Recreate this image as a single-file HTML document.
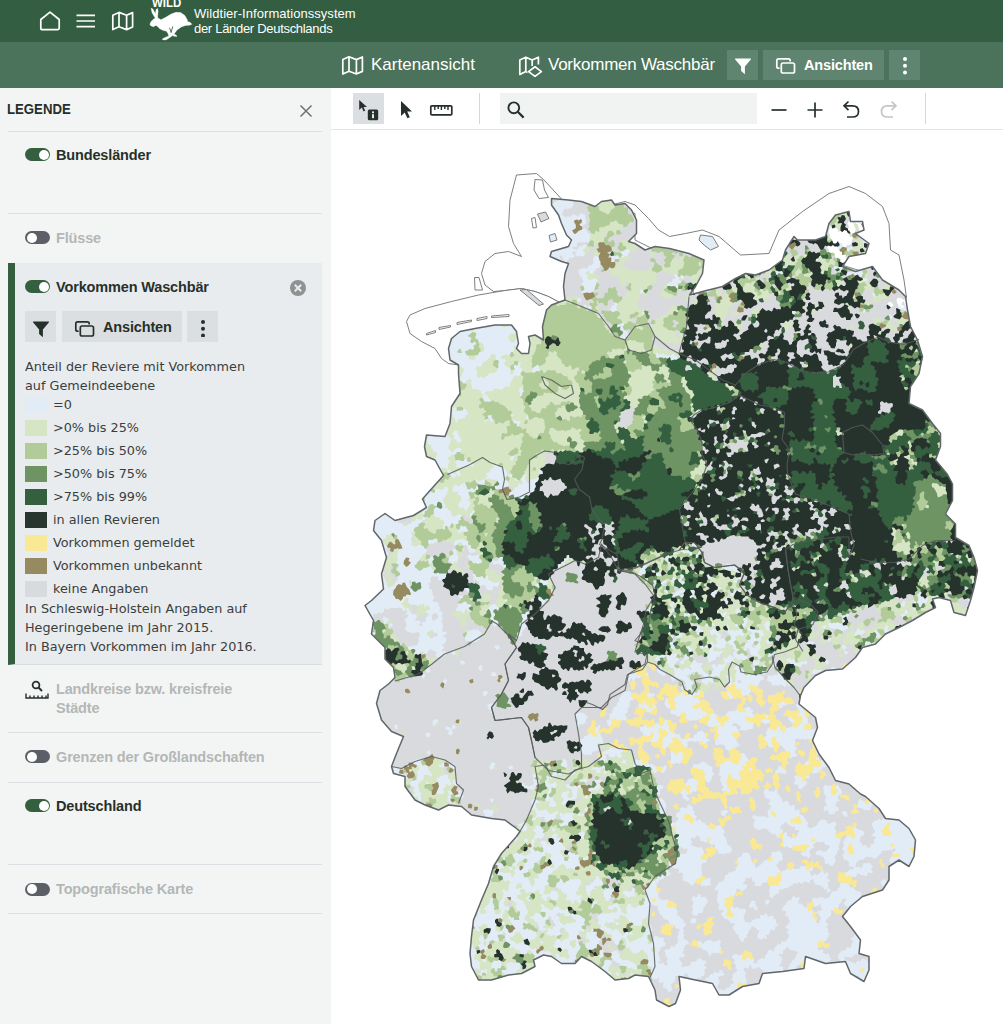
<!DOCTYPE html>
<html lang="de"><head><meta charset="utf-8"><title>WILD</title>
<style>
*{box-sizing:border-box;margin:0;padding:0}
html,body{width:1003px;height:1024px;overflow:hidden;background:#fff;font-family:"Liberation Sans",sans-serif;}
.abs{position:absolute}
#top{position:absolute;left:0;top:0;width:1003px;height:42px;background:#335e41}
#bar2{position:absolute;left:0;top:42px;width:1003px;height:46px;background:#4b725a}
#side{position:absolute;left:0;top:88px;width:331px;height:936px;background:#f3f5f4}
#tool{position:absolute;left:331px;top:88px;width:672px;height:42px;background:#fff;border-bottom:1px solid #e3e6e5}
#map{position:absolute;left:331px;top:130px;width:672px;height:894px;background:#fff}
.t1{position:absolute;color:#fff;font-size:13px;white-space:nowrap;letter-spacing:-.1px;line-height:15px}
.nav{position:absolute;color:#fff;font-size:17px;white-space:nowrap;top:55px;line-height:20px}
.btn{position:absolute;background:#5f8570;top:50px;height:30px}
.hd{position:absolute;font-weight:bold;font-size:14.5px;color:#26302b;white-space:nowrap;line-height:18px;margin-top:.4px;letter-spacing:-.15px}
.hd.off{color:#b3b7b6}
.ln{position:absolute;left:8px;width:314px;height:1px;background:#dcdfe3}
.tg{position:absolute;width:25px;height:13px;border-radius:7px;background:#35603f}
.tg i{position:absolute;right:1.5px;top:1.5px;width:10px;height:10px;border-radius:5px;background:#fff}
.tg.off{background:#5d5f66}
.tg.off i{right:auto;left:1.5px}
.lg{position:absolute;left:25px;font-family:"DejaVu Sans",sans-serif;font-size:12.8px;color:#3a3f3d;white-space:nowrap;line-height:16px}
.sw{position:absolute;left:25px;width:22px;height:16px}
.lb{position:absolute;left:53px;font-family:"DejaVu Sans",sans-serif;font-size:12.8px;color:#3a3f3d;white-space:nowrap;line-height:16px}
</style></head><body>

<div id="top">
<svg class="abs" style="left:38px;top:10px" width="24" height="22" viewBox="0 0 24 22"><path d="M2.8 9.5L12 2.2L21.2 9.5V18.3Q21.2 19.6 19.9 19.6H4.1Q2.8 19.6 2.8 18.3z" stroke="#fff" stroke-width="1.7" fill="none" stroke-linejoin="round"/></svg>
<svg class="abs" style="left:76px;top:13px" width="20" height="16" viewBox="0 0 20 16"><path d="M0.5 2.3H19M0.5 8H19M0.5 13.7H19" stroke="#fff" stroke-width="1.7" fill="none"/></svg>
<svg class="abs" style="left:111px;top:10px" width="24" height="22" viewBox="0 0 24 22"><path d="M1.8 5.2L8 2.4L15.6 5.2L21.6 2.6V17L15.6 19.6L8 16.8L1.8 19.6zM8 2.4V16.8M15.6 5.2V19.6" stroke="#fff" stroke-width="1.7" fill="none" stroke-linejoin="round"/></svg>
<div class="abs" style="left:152px;top:-5px;color:#fff;font-weight:bold;font-size:13px;line-height:15px;transform:scaleX(.88);transform-origin:0 0">WILD</div>
<svg class="abs" style="left:140px;top:0" width="60" height="45" viewBox="0 0 1003 752"><path d="M185 135 L215 150 L250 215 L258 228 L268 160 L295 140 L303 190 L295 270 L300 300 L350 330 L430 290 L520 235 L600 205 L680 210 L750 260 L790 330 L795 360 L840 375 L868 405 L830 420 L760 425 L690 450 L620 500 L575 560 L570 570 L610 590 L615 610 L570 605 L545 595 L500 625 L440 665 L385 668 L372 650 L420 625 L480 600 L470 565 L440 520 L390 510 L330 480 L290 440 L270 425 L220 445 L180 430 L165 405 L185 360 L225 320 L255 300 L235 270 L200 210z" fill="#fff" stroke="#fff" stroke-width="6" stroke-linejoin="round"/><path d="M495 465L520 545L548 440" stroke="#335e41" stroke-width="14" fill="none"/></svg>
<div class="t1" style="left:194px;top:5.5px;letter-spacing:.05px">Wildtier-Informationssystem</div>
<div class="t1" style="left:194px;top:20.5px;letter-spacing:-.3px">der Länder Deutschlands</div>
</div>

<div id="bar2"></div>
<svg class="abs" style="left:341px;top:55px" width="24" height="22" viewBox="0 0 24 22"><path d="M1.800 4.600L8 1.800L15.400 4.600L21.400 2V16.400L15.400 19L8 16.200L1.800 19zM8 1.800V16.200M15.400 4.600V19" stroke="#fff" stroke-width="1.700" fill="none" stroke-linejoin="round"/></svg>
<div class="nav" style="left:371px">Kartenansicht</div>
<svg class="abs" style="left:518px;top:54px" width="26" height="26" viewBox="0 0 26 26"><path d="M9.5 18.4L7.8 17.6L1.8 20.4V6L7.8 3.2L14.2 6L20.4 3.2V10.5M7.8 3.2V17.6M14.2 6V12" stroke="#fff" stroke-width="1.7" fill="none" stroke-linejoin="round"/><path d="M17 12.8L23.4 17.6L17 22.4L10.6 17.6z" stroke="#fff" stroke-width="1.7" fill="none" stroke-linejoin="round"/></svg>
<div class="nav" style="left:548px;letter-spacing:-.25px">Vorkommen Waschbär</div>
<div class="btn" style="left:727px;width:31px"></div>
<svg class="abs" style="left:733.500px;top:58px" width="18" height="17" viewBox="0 0 18 17"><path d="M1.600 0.600H16.400Q17.600 0.600 16.800 1.600L10.900 8.400V16.200L7.100 13V8.400L1.200 1.600Q0.400 0.600 1.600 0.600z" fill="#fff"/></svg>
<div class="btn" style="left:763px;width:121px"></div>
<svg class="abs" style="left:775px;top:57px" width="22" height="18" viewBox="0 0 22 18"><path d="M4.600 11.200H3.600Q1.800 11.200 1.800 9.400V3.600Q1.800 1.800 3.600 1.800H13.400Q15.200 1.800 15.200 3.600V4.600" stroke="#fff" stroke-width="1.700" fill="none"/><rect x="6.300" y="6" width="13.200" height="10" rx="1.800" stroke="#fff" stroke-width="1.700" fill="none"/></svg>
<div class="hd" style="left:804px;top:56px;color:#fff">Ansichten</div>
<div class="btn" style="left:889px;width:31px"></div>
<svg class="abs" style="left:900.500px;top:56px" width="8" height="20" viewBox="0 0 8 20"><circle cx="4" cy="3" r="2" fill="#fff"/><circle cx="4" cy="9.700" r="2" fill="#fff"/><circle cx="4" cy="16.400" r="2" fill="#fff"/></svg>


<div id="side">
<div class="hd" style="left:7px;top:12px;font-size:14.5px;letter-spacing:0;transform:scaleX(.91);transform-origin:0 0">LEGENDE</div>
<svg class="abs" style="left:299px;top:16px" width="14" height="14" viewBox="0 0 14 14"><path d="M1.5 1.5L12.5 12.5M12.5 1.5L1.5 12.5" stroke="#6d7271" stroke-width="1.5" fill="none"/></svg>
<div class="ln" style="top:43px"></div>
<div class="tg" style="left:25px;top:60px"><i></i></div>
<div class="hd" style="left:56px;top:58px">Bundesländer</div>
<div class="ln" style="top:125px"></div>
<div class="tg off" style="left:25px;top:143px"><i></i></div>
<div class="hd off" style="left:56px;top:141px">Flüsse</div>
<div class="abs" style="left:8px;top:175px;width:314px;height:402px;background:#e9ecef;border-left:7px solid #35603f;border-bottom:1px solid #d9dde0"></div>
<div class="tg" style="left:25px;top:192px"><i></i></div>
<div class="hd" style="left:56px;top:190px">Vorkommen Waschbär</div>
<svg class="abs" style="left:289px;top:191px" width="18" height="18" viewBox="0 0 18 18"><circle cx="9" cy="9" r="8" fill="#8e9291"/><path d="M5.8 5.8L12.2 12.2M12.2 5.8L5.8 12.2" stroke="#e9ecef" stroke-width="2" fill="none"/></svg>
<div class="abs" style="left:25px;top:223px;width:31px;height:31px;background:#dcdfe2"></div>
<svg class="abs" style="left:32px;top:233px" width="18" height="17" viewBox="0 0 18 17"><path d="M1.6 0.6H16.4Q17.6 0.6 16.8 1.6L10.9 8.4V16.2L7.1 13V8.4L1.2 1.6Q0.4 0.6 1.6 0.6z" fill="#26302b"/></svg>
<div class="abs" style="left:62px;top:223px;width:120px;height:31px;background:#dcdfe2"></div>
<svg class="abs" style="left:74px;top:320px;margin-top:-88px" width="22" height="18" viewBox="0 0 22 18"><path d="M4.6 11.2H3.6Q1.8 11.2 1.8 9.4V3.6Q1.8 1.8 3.6 1.8H13.4Q15.2 1.8 15.2 3.6V4.6" stroke="#26302b" stroke-width="1.7" fill="none"/><rect x="6.3" y="6" width="13.2" height="10" rx="1.8" stroke="#26302b" stroke-width="1.7" fill="none"/></svg>
<div class="hd" style="left:103px;top:230px;font-size:14.5px">Ansichten</div>
<div class="abs" style="left:187px;top:223px;width:31px;height:31px;background:#dcdfe2"></div>
<svg class="abs" style="left:198.8px;top:231px" width="8" height="18" viewBox="0 0 8 18"><circle cx="4" cy="3" r="2" fill="#26302b"/><circle cx="4" cy="9.7" r="2" fill="#26302b"/><circle cx="4" cy="16.4" r="2" fill="#26302b"/></svg>
<div class="lg" style="top:271px">Anteil der Reviere mit Vorkommen</div>
<div class="lg" style="top:290px">auf Gemeindeebene</div>
<div class="sw" style="top:309px;background:#e2ecf6"></div><div class="lb" style="top:309px">=0</div>
<div class="sw" style="top:332px;background:#d6e5c4"></div><div class="lb" style="top:332px">&gt;0% bis 25%</div>
<div class="sw" style="top:355px;background:#b1cb99"></div><div class="lb" style="top:355px">&gt;25% bis 50%</div>
<div class="sw" style="top:378px;background:#6f9464"></div><div class="lb" style="top:378px">&gt;50% bis 75%</div>
<div class="sw" style="top:401px;background:#35603f"></div><div class="lb" style="top:401px">&gt;75% bis 99%</div>
<div class="sw" style="top:424px;background:#29362f"></div><div class="lb" style="top:424px">in allen Revieren</div>
<div class="sw" style="top:447px;background:#f9e894"></div><div class="lb" style="top:447px">Vorkommen gemeldet</div>
<div class="sw" style="top:470px;background:#968a61"></div><div class="lb" style="top:470px">Vorkommen unbekannt</div>
<div class="sw" style="top:493px;background:#d9dade"></div><div class="lb" style="top:493px">keine Angaben</div>
<div class="lg" style="top:513px">In Schleswig-Holstein Angaben auf</div>
<div class="lg" style="top:532px">Hegeringebene im Jahr 2015.</div>
<div class="lg" style="top:551px">In Bayern Vorkommen im Jahr 2016.</div>
<svg class="abs" style="left:25px;top:592px" width="24" height="20" viewBox="0 0 24 20"><circle cx="11" cy="5" r="3.4" stroke="#26302b" stroke-width="1.8" fill="none"/><path d="M13.5 7.5L17 11" stroke="#26302b" stroke-width="2" fill="none"/><path d="M1 13.5V18H23V13.5M5 15.5V18M9 15.5V18M13 15.5V18M17 15.5V18M21 15.5V18" stroke="#26302b" stroke-width="1.4" fill="none"/></svg>
<div class="hd off" style="left:56px;top:592px">Landkreise bzw. kreisfreie</div>
<div class="hd off" style="left:56px;top:611px">Städte</div>
<div class="ln" style="top:644px"></div>
<div class="tg off" style="left:25px;top:662px"><i></i></div>
<div class="hd off" style="left:56px;top:660px">Grenzen der Großlandschaften</div>
<div class="ln" style="top:694px"></div>
<div class="tg" style="left:25px;top:711px"><i></i></div>
<div class="hd" style="left:56px;top:709px">Deutschland</div>
<div class="ln" style="top:776px"></div>
<div class="tg off" style="left:25px;top:794.5px"><i></i></div>
<div class="hd off" style="left:56px;top:792px">Topografische Karte</div>
<div class="ln" style="top:825px"></div>
</div>


<div id="tool">
<div class="abs" style="left:22px;top:5px;width:31px;height:31px;background:#dcdfe2"></div>
<svg class="abs" style="left:26px;top:8px" width="24" height="26" viewBox="0 0 24 26"><path d="M2.200 4V14L4.800 11.600L6.600 15.400L8.200 14.600L6.500 11H10z" fill="#26302b"/><rect x="10.800" y="13.400" width="10.400" height="10.800" rx="1.500" fill="#26302b"/><rect x="15.100" y="15.400" width="1.800" height="1.800" fill="#fff"/><rect x="15.100" y="18.200" width="1.800" height="4" fill="#fff"/></svg>
<svg class="abs" style="left:68px;top:11px" width="14" height="22" viewBox="0 0 14 22"><path d="M2 2V17L5.700 13.500L8.400 19.300L10.800 18.200L8.200 12.600H13z" fill="#26302b"/></svg>
<svg class="abs" style="left:98px;top:15px" width="26" height="14" viewBox="0 0 26 14"><rect x="1.800" y="2.800" width="21" height="9" rx="1" stroke="#26302b" stroke-width="1.700" fill="none"/><path d="M5.800 3V7M9.200 3V6M12.400 3V7M15.800 3V6M19 3V7" stroke="#26302b" stroke-width="1.400"/></svg>
<div class="abs" style="left:148px;top:5px;width:1px;height:31px;background:#d5d8d8"></div>
<div class="abs" style="left:169px;top:5px;width:257px;height:31px;background:#f1f3f2"></div>
<svg class="abs" style="left:174px;top:11px" width="22" height="22" viewBox="0 0 22 22"><circle cx="8.800" cy="8.800" r="5.400" stroke="#26302b" stroke-width="1.900" fill="none"/><path d="M12.800 12.800L18.600 18.600" stroke="#26302b" stroke-width="2.200" fill="none"/></svg>
<svg class="abs" style="left:439px;top:13px" width="18" height="18" viewBox="0 0 18 18"><path d="M1.500 9H16.500" stroke="#26302b" stroke-width="1.700"/></svg>
<svg class="abs" style="left:475px;top:13px" width="18" height="18" viewBox="0 0 18 18"><path d="M1.500 9H16.500M9 1.500V16.500" stroke="#26302b" stroke-width="1.700"/></svg>
<svg class="abs" style="left:510px;top:11px" width="22" height="22" viewBox="0 0 22 22"><path d="M7.500 2.500L3 6.800L7.500 11.200M3.500 6.800H11.500Q17.500 6.800 17.500 12.400Q17.500 18 11.500 18H6" stroke="#26302b" stroke-width="1.700" fill="none"/></svg>
<svg class="abs" style="left:546px;top:11px" width="22" height="22" viewBox="0 0 22 22"><path d="M14.500 2.500L19 6.800L14.500 11.200M18.500 6.800H10.500Q4.500 6.800 4.500 12.400Q4.500 18 10.500 18H16" stroke="#c3c6c6" stroke-width="1.700" fill="none"/></svg>
<div class="abs" style="left:594px;top:5px;width:1px;height:31px;background:#d5d8d8"></div>
</div>
<div id="map"></div>
<!--MAP--><svg id="mapsvg" class="abs" style="left:0;top:0" width="1003" height="1024" viewBox="0 0 2006 2048" fill-rule="evenodd"><path d="M1033 350 1020 400 1017 453 1027 487 1043 513 1017 503 990 507 970 523 963 547 970 570 987 583 1010 581 1043 577 1070 583 1097 593 1123 607 1150 593 1150 500 1137 413 1087 359 1073 347z" fill="#ffffff" stroke="#6e7270" stroke-width="1.8"/>
<path d="M1010 581 957 590 903 603 850 617 820 630 813 643 820 667 843 683 870 697 883 717 897 727 917 730 937 760 1077 760 1103 653 1137 613 1123 607 1097 593 1070 583 1043 577z" fill="#ffffff" stroke="#6e7270" stroke-width="1.8"/>
<path d="M1040 580 1053 579 1087 608 1078 611z" fill="#d9dade" stroke="#6e7270" stroke-width="1.8"/>
<path d="M949 555 958 555 965 580 950 580z" fill="#ffffff" stroke="#6e7270" stroke-width="1.8"/>
<path d="M1070 359 1085 360 1089 380 1097 395 1078 397 1068 380z" fill="#ffffff" stroke="#6e7270" stroke-width="1.8"/>
<path d="M1075 428 1091 424 1098 437 1082 444z" fill="#d9dade" stroke="#6e7270" stroke-width="1.8"/>
<path d="M1098 471 1110 467 1114 480 1101 484z" fill="#e2ecf6" stroke="#6e7270" stroke-width="1.8"/>
<path d="M1063 437 1070 435 1073 455 1066 456z" fill="#ffffff" stroke="#6e7270" stroke-width="1.8"/>
<path d="M853 667 871 661 871 665 853 670z" fill="#ffffff" stroke="#6e7270" stroke-width="1.8"/>
<path d="M878 655 901 651 901 654 878 659z" fill="#ffffff" stroke="#6e7270" stroke-width="1.8"/>
<path d="M914 645 943 640 943 643 914 649z" fill="#ffffff" stroke="#6e7270" stroke-width="1.8"/>
<path d="M954 637 974 633 974 637 954 641z" fill="#ffffff" stroke="#6e7270" stroke-width="1.8"/>
<path d="M983 632 1018 629 1018 633 983 635z" fill="#ffffff" stroke="#6e7270" stroke-width="1.8"/>
<path d="M1230 408 1250 403 1270 410 1297 437 1317 460 1339 473 1371 467 1405 460 1438 473 1481 510 1538 507 1558 460 1605 423 1658 387 1698 373 1731 387 1765 413 1778 447 1781 500 1798 510 1808 560 1813 595 1798 613 1738 547 1651 520 1565 560 1471 593 1391 613 1378 533 1338 520 1310 500 1270 480 1270 427z" fill="#ffffff" stroke="#6e7270" stroke-width="1.8"/>
<path d="M1401 470 1425 473 1437 493 1421 500 1408 490 1398 480z" fill="#e2ecf6" stroke="#6e7270" stroke-width="1.8"/>
<path d="M1103 397l34 3l26 3l27 10l13-10l20-3l7 10l20-3l13 13l10 20l0 27l-16 16l13 4l20 13l20-7l29 4l39 10l30 13l-3 27l-14 26l-12 17l26-7l40-10l26-16l20-10l20 3l27-10l27-20l6-20l17-27l7 7l36 0l20-7l7-26l13-17l27-7l3 20l24 0l3 17l-17 7l27 20l-7 20l-33 6l-13 20l26 10l34-10l20 27l33 20l13 13l4 27l6 33l14 27l10 33l-7 34l-17 26l-3 34l27 13l20 27l16 20l0 26l-10 27l24 29l10 19l0 33l-14 27l20 20l0 27l27 16l10 24l7 26l-7 34l-7 26l-10 30l-23-6l-7-24l-23-6l-13 3l6 17l-20 10l-26 16l-27 14l-27 13l-20 20l-26 7l-14 20l-26 23l-34 3l-20 10l-23 24l-7 16l-3 17l33 27l4 20l-10 26l13 27l20 27l13 26l27 7l23 20l10 5l27 24l13 20l27 3l20 17l13 23l-3 33l-10 20l-20-13l-20 13l0 27l-13 20l-40 13l-24 20l-16 20l16 20l20 27l-3 27l20 6l0 27l-10 23l-27-16l-10-24l-40 4l-40-14l-3 24l-43 6l-40 4l-7 20l-33 6l-27 17l-20 0l-13-23l-34-7l-33-7l3 27l-10 27l-13 6l-25-13l-3-20l-13-27l-27-3l-13 7l-27 3l-20-17l-27-20l-20-10l-13 14l-27 0l-20-14l-16-3l-20 10l3 13l-27 14l-26 3l-34 10l-26 0l-14-27l-3-26l3-34l4-33l16-40l14-33l10-34l16-26l30-34l7-10l-7-6l-23-17l-27-3l-40-7l-20-17l-26-3l-20 10l-27-10l-20-10l-20-27l0-20l-23-6l-4-14l10-26l14-34l-24-10l-20-23l-10-33l7-26l17-13l13-13l-3-20l-17-17l0-23l-27-27l4-27l-17-30l13-10l24-23l-4-30l10-33l-10-34l-16-20l3-20l20-14l20 14l37-10l26-16l-8-17l15-17l27-30l-17-31l-17-7l-4-20l4-23l37 3l10-26l3-34l17-26l-3-40l0-17l-17-10l-3-23l6-20l17-14l30-6l40-7l33 0l10 13l4 24l-4 10l10 10l14 0l3-20l-3-14l13-3l17 10l-2-27l8-33l10-10l27-10l-3-27l3-26l7-20l-14-4l-23-10l3-10l34-10l6-13l-10-10l-10-23l-6-17l-14-20z" fill="#d9dade"/>
<path d="M1941 1196l-3 1l-2 5l4 3l2-8zM1920 1228l-6-4l-2 2zM1825 1207l6 1l2-2l3 2l1 5l4 3l6-9l2 0l4 0l4-10l-2-4l-1 0l-4 4l-4-5l-3 0l2-7l-3-3l-5 2l-1 3l-4 3l4 5l-1 2l1 3l-3 4l-5-5l-3 2zM1694 1672l-1 3l-4 3l-1 3l-2 3l2 6l-3 9l4 5l0 2l-4 2l1 6l1 2l0 3l8 2l4 6l-2 5l1 1l8 0l1 4l-1 2l-5-1l-5 5l-7 3l3 7l7-1l12 2l2-2l1-5l3 0l5 3l7 1l2 2l3-2l2-7l1 0l5 3l4-2l0-2l-4-6l4-4l-5-5l0-2l-7 0l-3 1l-2-1l-2 0l-2 7l-3 4l-3-4l-4 1l-4 1l1-8l6-7l9-1l4-5l4-1l4 2l5-1l4 4l6-3l5-6l3-2l2-5l16-2l2 1l7-5l2 2l-1 4l-5 2l-1 2l7 5l2-3l7 0l-1 3l-3 2l-5-1l-2 1l-5-1l-2 2l-3 5l0 5l6 3l5-5l1 2l7-4l9 6l1-1l0 2l10 6l10-20l1-6l-4-1l-1-5l-4-2l0-3l7 0l1 2l1 1l2-19l-13-23l-20-17l-27-3l-2 2l-3-2l-4 4l-5-5l-2 5l-6 0l-2 4l-3 1l-1 4l3 4l0 3l4 4l0 3l-7 7l0 1l10 2l-6 6l1 2l1 4l-8 3l0 5l-6 2l-3-6l-6 2l-2-6l-2 0l-3-3l2-5l0-6l6-1l2-7l-12-6l-2 1l-4-5l-4 0l-2 6l4 9l1 7l-6-1l-3-3l-5-1zM1788 1688l0 5l-6 0l0-6zM1776 1657l5 6l1 6l-2 2l-12 0l-1-5l-3-3l0-2l3-1l3-6l3-1l1-5l4-2l2 3zM1705 1700l3 5l-8 4l-2-6l-4-2l1-2l3-3l-1-4l3-4l4 3l0 4l2 2zM1824 1215l3 7l5-2l-1-6l-6-1zM1812 1218l-4 4l1 5l-8 1l1 4l4 2l6-2l1-2l3-3l1-2zM1809 623l5-5l-1-7l-3-2l-2 2l-1 4l-4 1l-2-5l-4-1l-3 7l6 4l2-1zM1812 1203l-6-2l-1 5l-5 3l1 5l8 1zM1790 1258l-10 2l-4-1l2-8l-8-2l-1 2l-1 7l-2 1l4 9zM1784 637l2-4l-6-4l-3 2l2 8zM1775 1763l-2-2l-7-3l-5 6l6 13l8-12zM1763 1271l-2-4l-5-4l-1-6l-7 4l0 4l4 3l0 2l-2 4l0 2l6 2zM1725 1295l17-6l1 1l8-2l-1-3l-3-2l-4 2l-3-3l-5 0l-3-1l-3 5l1 4l-6 2l-3 8zM1724 1616l1 2l4 2l8 1l4-2l3-9l2-1l3 0l-9-8l-3 2l0 5l-5 0l-2-6l-5 0l-5-5l-4 7l1 3l-4 4l1 4zM1753 592l-4-7l-5 2l4 9zM1680 1923l-6 2l17-2l10 24l12 7l3-3l4 1l-4 4l4 2l2-1l1 2l-1 1l6 3l10-23l0-16l-3 0l-1-5l-4 0l-6-2l-3 6l-5-2l-6 7l-1-2l-20-7l0-5l1-1l6 2l4-1l3 2l8-8l6 1l1-2l3-27l-14-19l-1 3l4 6l-3 4l-4 1l-1 4l5 3l-4 6l-1 7l-2 1l-5-2l-4 5l-5 3l-4 0l-1 3l-4 3l-1 6l1 4l4 2zM1725 1937l3 1l1 1l-2 3l-5 2l-3-2zM1730 1912l4 3l2-2l-6-2zM1729 487l1 0l7 2l1-2l-11-9l-3 0l0 8zM1725 559l3 5l6-2l1-5l-6-2l-4 2zM1728 616l-3 7l2 3l5-3l0-5zM1708 1273l9-3l2 1l7-3l4-3l0-4l-3-2l-6 1l-2-4l-4 1l-3 7l-2 0l-2 3zM1705 542l-11 1l-3 8l2 3l7-3l1 0l5-3l3 5l6-3l2 3l4 3l2 0l2-6l3-2l-3-5l4-5l-18 5l-6-2zM1414 1965l11 2l13 23l20 0l20-13l-3-2l1-2l-1-2l1-6l7 3l7 1l4-5l-4-12l2-4l0-3l-4-3l-1-4l4-3l6 3l2-7l2-2l3 8l6 1l2-2l5-2l3 2l1 2l5 2l-1 4l3 2l40-3l-1-3l-2-2l2-4l-9-2l1-2l4-4l0-6l2-1l-2-6l-6-2l1-3l8 0l0-7l5-2l2-4l2 0l2 0l3 6l4-1l4 2l2-1l6 3l0 2l-3 3l0 3l-3 3l0 3l-6 3l0 4l-4 1l-1 6l-3 3l1 5l2 1l11-2l3-2l0-5l8-3l1-2l8-9l1-5l39 13l8-1l4-7l-3-4l-1-6l-2-1l-4 2l-6-4l1-2l-2-4l-9 1l0-4l1-1l-1-8l0-2l4-3l8 1l5-2l1-5l3-1l-1-3l4-4l-4-4l0-3l1-2l-5-6l5-3l0-2l-5-3l0-6l5-2l0-2l5-4l0-4l1-2l-2-4l0-1l8 2l0-7l6 3l3-6l-1-2l4-4l2-1l1-7l7-1l2 3l-4 3l-2 5l8 6l0 5l-2 3l0 2l8-11l20-17l-1-2l3-6l-3-5l-5 0l-7-5l-1-3l-7-1l-4-8l-12-2l-3 2l-1 5l-1 3l-3 2l-1 4l-4 3l-2-1l-6 2l-4 11l-2 1l-3 0l-5 2l-3-4l-8 1l-4 2l-8-2l-2 8l4 4l0 6l2 1l6-2l3-4l2 1l1 6l1 1l1 4l-1 1l-7 0l-2 5l4 3l1 4l3 2l0 3l-3 3l0 4l-4 2l-3-3l1-4l-5-5l0-2l-3-3l2-7l-3-3l-5 2l-1 0l-3-9l-3 2l-6-3l-3-5l-6 0l-1-4l4-6l-3-3l-6 2l-2-4l-5 2l-1 7l-5-1l-5 5l-4 7l-3 1l-2 7l0 1l8 1l1 2l-2 4l0 4l6 1l0 6l3 3l-3 6l-6 5l1 3l5 2l0 3l-4 4l6 6l-2 4l-1 0l-4 8l-10 0l0 5l-2 1l-4-1l-7 8l-1 6l-2 1l-4-4l-5 1l-1 4l-1 1l-3 5l-2 1l0 7l-6-2l-9 5l-1 5l-4 2l-3-3l1-7l-5 0l-5-4l-4 0l-6 6l-3 0l1-8l-3-3l-5 2l-5-3l-5 1l-4 4l0 3l6 4l-3 6l4 3l1 2l-1 5l4 3l-3 5l-7 5l1 6l-3 2l0 3l5 4l-2 4l-4 0l-2 5l-4 3l-3 0l-4 5l-4 0l-2-3l-4 2l-5-5l0-2l5-8l0-5l-2-2l-1-4l6-3l2 2l5-4l-1-3l-3-1l-1-5l-5 0l-1 6l-4 0l-2-2l-4 0l-2 5l-5-1l-4 7l-7 2l1 3l4 4zM1484 1974l-2-1l-2 3zM1698 433l1 4l-2 6l6 1l2 4l3 1l4-2l-1-4l-10 0l-2-11zM1693 497l-1 4l5 4l4-5l5 0l1-3l-2-5zM1660 1256l9 2l1 2l6-1l10 5l4-5l4 0l3-3l0-2l-3-5l-7 1l-1-3l5-4l0-3l-4-3l5-3l4 0l3-4l-2-3l-5-1l-2 3l-6 1l-2 3l2 4l-1 3l1 6l-10-3l-1 2l-6-1l-3 2l-3-2l-5 2l-1 6zM1696 1307l-2-4l-6-3l1 8l7 0zM1687 1622l-2 1l-1 4l5 6l4 1l2-2l-2-9zM1686 1289l-4 2l4 9l1 0l6-4l-2-5zM1678 430l5 2l2-1l0-4l-8 2zM1685 496l2-10l-3-1l-6 2l0 4l-4 3l1 4l3 3zM1669 531l-2 3l3 5l7-2l2 3l4 2l2-2l1-5l-1-2l-7 0zM1649 1601l2 3l3 7l-6 2l-1 6l2 3l7-1l2 6l2 2l5-1l3 0l3-5l6-2l1-1l-1-5l-6-3l0-3l3-5l5-2l0-2l-4-3l2-6l5-2l3-6l-3-2l-1-4l-2-1l-2-6l-6 1l-2 4l1 3l4 2l1 3l-4 2l-2 5l-1 1l-2-2l-3-5l-1-4l3-5l-1-3l-5-1l-3 1l-4-2l-3 1l-3 5l2 4l-1 3l2 6l4 5zM1516 1633l-8-3l-3 2l-1 4l5 3l1 4l-3 3l0 6l3 5l8 4l5-4l5 1l3-2l8 8l5 3l1 2l7-1l2 8l3 0l4-6l0-3l4-2l1-5l-7-4l1-1l4-6l4-1l1-3l4-1l4 6l5 1l1 3l8-1l-2 6l9 2l1 2l-4 3l0 4l-4 5l-6 0l-3 2l-4-5l-4 0l-1-1l1-5l-3-2l-4 3l0 3l-2 2l1 22l2 1l4-2l3 0l2 2l7 2l4-5l8 1l9-3l1-2l4 3l6-1l2 1l-1 3l-6 2l0 6l-1 1l-6-1l-2 7l6 4l5-1l3 5l5-5l-1-3l-2-5l2-3l1-3l6-2l1-1l-2-6l5-3l1-2l4-1l6 2l2-2l4 1l3 6l4 0l4 1l1 4l-5 4l-2 4l-6 0l-1 1l-5-4l-9 3l-1 3l3 5l6-1l2 3l5 1l3 7l-1 4l3 3l6-1l1 4l7 1l1-4l3-3l1-5l-2-6l2-2l0-2l4-3l-1-4l5-4l-3-6l3-3l0-6l2-1l0-3l-4-5l-4 0l-2-4l2-2l-1-9l-2 0l-1-6l3-3l1-3l0-2l-5-3l-11 5l-4-4l0-4l-10-1l-8 7l0 3l-4 4l-4 0l-1 2l-4 2l-8-4l3-8l-4-2l-1-3l-3-3l-1-4l-4-3l-2 0l-4-5l2-5l-3-1l-5 2l-2 0l-1-4l1-6l-4-1l-6 3l-4-10l-4-2l-5 4l-2-2l-1-6l-3-2l-2-5l-4-1l0-9l-1-2l-2-1l-5 7l-4-2l-4 1l-5-7l-3 1l-4 7l3 10l2 3l4 0l4 2l1 3l-3 3l-1 4l6 3l0 1l-4 5l0 1l-4 3l1 6l1 6l-2 2l-7-4l-2 1zM1629 1679l1 3l-6 1l0-6zM1583 1638l6 1l2-3l4-3l3 1l1 5l4 4l-2 5l-5-3l-5 2l-2-2l-2 1l-6-3l-1-3zM1549 1627l3 1l-1 5l-1 1l-8-8l1-4l2 0zM1635 1350l16-9l2 0l-2-1l-3 2l-5-2l-1 0l-13-2l-4 2l-3 6l5 2l5 0zM1672 1339l-1-3l-6-2l-5 5l-6 2l19-2zM1664 439l4-2l0-3zM1666 458l-2-7l-3-2l-3 2l-2 3l3 4zM1662 1278l0-3l-6 0l-2 4l2 4l1 0l5-2zM1437 1786l-2 2l-1 15l3 5l2 1l-1 4l-1 3l1 5l8-2l1 1l0 3l-6 4l4 6l2 1l2 3l3 2l2-1l6 5l0 3l8 0l2 2l-4 6l1 7l4 2l0 4l6 3l0 5l3 3l1 3l2 3l4-1l2-7l5 0l-1-5l4-6l1-6l4 0l1-7l2 0l4 3l2 0l4 5l4 1l0 1l-5 10l2 5l3 0l5 3l3-4l5 2l2-2l-3-6l8-1l0-3l2-4l-1-3l2-1l6 4l3-6l-1-2l7-3l-2-4l-3 0l0-8l-4-1l-1-5l-4-3l-4 3l-3 0l-1-3l-4-4l-4 5l-3-1l-4 1l0 5l-4 2l-3-2l-5 4l-2-1l-2 1l-1 3l-5 3l-3-2l-5 0l-1-6l-2-1l0-2l2-5l0-2l3-4l0-4l-4-3l-4 2l-11-5l-5 3l-4-6l-4 2l0 8l2 2l0 2l5 4l0 4l-6 0l-2-1l-3 2l-5-6l3-1l3-6l-3-2l0-4l-6-6l4-3l0-3l-3-5l5-3l3 1l3-1l2-2l5 1l3-5l0-1l3-4l-1-6l3-1l5 2l1 2l3 2l8-6l3-7l-9-2l0-2l5-4l-1-4l4-3l4 2l5-3l2 2l-1 6l6 2l0 2l-1 4l2 2l8 0l5-2l-1-4l7-1l5-1l0-5l3-5l4-2l3 3l5-1l3 2l1-2l1-6l6-3l1 3l-1 4l1 4l-1 3l0 3l-4 2l1 5l-5 2l-7-3l-6 4l-1 5l0 16l4 3l3-1l1-3l3-1l2-3l4 0l2-4l2-6l5 1l4-3l7 1l2-4l6-2l3-4l4-1l3 2l4-4l5 4l4-3l1-2l5 1l5 2l2-1l0-4l7-3l1 0l-1 3l3 8l10 1l2 3l4 0l2 7l6-3l-1 5l1 4l8-4l-1-3l-5-3l1-4l-2-6l5-4l-2-4l-3-1l-1-3l3-4l-1-3l-2-3l-6 5l-2-10l-1 0l-5 8l-2 0l-4 4l-4-3l-6 4l-2-1l0-3l-3-5l6-2l1-2l0-4l-4-3l-5 9l-4-4l1-5l-1-1l-9 2l-3-1l-2 6l-10 0l-4-3l-3 4l-7-2l-4 3l-10 4l-1-4l-3-2l-4-6l0-3l3-2l2-5l4 0l4-4l-1-2l0-7l-1-1l-2-4l-7-3l-2 4l-6-2l-4 2l0 4l-2 4l4 4l-3 5l-8-3l-6 3l-5 6l-10 8l-3-2l-1-7l-4-2l-3-6l1-2l-3-6l0-3l-7-3l-3 1l-3-1l-3 3l0 3l-2 3l-4 0l-4 4l0 2l3 9l-6 8l0 5l-4 0l-3 3l-4-1l-3 2l-1 3l-6 2l0 5l-3 4l0 3l-8 1l-5 6l-2 5l-3 1l1 4l5 1zM1657 1328l1-6l-6-4l-4 5l2 4l3 2zM1649 1259l6-7l0-1l-5-1l-6 1l0 5zM1633 1547l6-5l3-1l4-7l4 1l4-4l-8-12l-4 2l0 4l-1 4l0 2l-6 4l-2-3l-6 0l0 7l-4 5l4 4l4-2zM1634 1500l-2 1l-1 6l4 4l4-2zM1545 1458l-4 0l-4-2l-2 2l-1 4l-3 3l3 6l-7 4l3 7l3 2l2 5l1 1l3 5l7 0l2-4l-5-5l2-4l-2-4l5-5l4 4l-1 6l1 1l5 1l1 6l5 0l3 4l3 2l1 5l8 1l3 5l-4 7l3 2l6-4l2 1l5-1l1-4l-5-5l0-1l6-7l-5-3l1-5l-1-4l1-6l6-1l4 2l3 0l2-2l6 3l3-3l5 2l6-2l7-19l-1-1l-4 2l-13 0l-2 1l-4-4l-1-3l6-3l2-4l0-7l-3-5l-2-2l-1-3l2-5l-5-4l3-3l-12-9l0-1l-3 0l-3 2l0 3l4 5l0 2l3 4l-2 3l-2 2l0 5l2 1l5-1l2 2l-2 5l2 5l-4 2l-3 3l-2 1l-2 3l-7-1l-15 4l0 3l-4 5l-6-7l-1-7l-4 0l-4 4l1 3l-4 3zM1632 1513l-2 7l7 2l1-1l0-4l-4-4zM1631 517l-1 6l6 1l2-9zM1614 1284l-1 6l9-1l3 2l2-2l1-6l-7 0l-4-2zM1612 1531l4 1l5-7l-5-4l-2 1l-5 5zM1611 1549l-1 7l1 1l8 0l-1-7zM1580 1316l-5 0l-2 1l-1 3l5 5l1 3l2 1l7 0l1 3l6 1l4 3l4-3l1-2l3-4l5 2l4-3l-1-4l-2-2l-7 2l-2-1l-5 4l-1 0l-2-1l-3 0l-2-8l-6 3zM1588 1565l0 3l9 2l-1 5l4 3l4 0l3-5l5-2l2-7l-2-2l-7 1l1-6l-4-5l-7 0l-1-1l-6 2l3 7zM1592 628l0-6l-2-1l-7 1l0 6l6 3zM1583 1433l-2 0l-4 2l0 1l0 3l8 8l5-2l0-6l-4-2zM1546 1372l5-2l7 2l2-4l5 3l2 0l3 4l5-7l3 7l4-5l-2-4l-6 1l-3-8l-3-2l0-2l-5-8l-1-5l-4-2l-5 2l2 3l0 6l-6-2l-4 3l-2-1l-7 0l-2 9l1 2l6 2l3 4l0 3zM1572 1411l3-3l-1-1l-3-3l-7-1l-9 5l4 9l6-1l1-6zM1574 1542l-10-7l-1-3l-2 0l-5 1l0 6l-5 2l-1 4l5 2l6-2l3 2l7 1zM1563 550l5-3l-4-6l-6 1l-2-1l-4-1l-3 2l3 9l2 0l4-4zM1554 1333l0-5l-5-3l-6 4l1 3l6 3zM1547 1313l-1-4l-6-3l-4 1l-1 9l5-1l4 1zM1539 1446l3-4l-6-6l2-6l-6-1l-3 3l4 5l-1 1l-6-1l-3 3l1 4l5 4zM1530 1257l5 6l6-3l-1-6l1-7l-1-5l-4-1l-6 2l-3 6zM1533 1289l2 1l5-2l1-5l-2-2l-1-3l-3-1l-5 4l3 4zM1534 1810l2-2l4-6l-5-3l-4 2l-1 5zM1527 1328l-3 5l3 2l7-1l-4-7zM1524 1341l-1 5l4 4l3-1l2-3l-1-4zM1498 1271l3 5l-1 2l-6 1l2 6l-6 1l-1 3l-2 3l2 3l-3 4l0 2l3 2l3-1l2-5l1-1l3 1l2 4l1 7l4 2l1 4l8 0l1 2l7 2l3-3l-5-6l-2-1l-2-1l1-4l4-4l2-7l-2-3l0-5l2-2l-1-6l3-3l4-1l1-5l-3-2l0-5l-6-1l-9 0l-2-1l-8-1l-2-3l-4 0l-3 5l1 2l6 2l3 3zM1512 1275l-2-9l2 0l5 2l1 6l-4 2zM1516 1284l-5 6l-1 4l-3 2l-3-3l-1-3l5-3l0-3l7-1zM1464 1353l-7-3l-8 0l-1 1l7 7l-1 7l3 7l5 2l3-6l5 2l-1 7l2 1l5 0l4 2l2 11l5 3l4-4l4 1l3-1l1-4l4-4l-1-4l-4-2l0-5l3-1l8 1l6 4l3-8l3-6l5-1l2-2l-3-6l-5-1l0-2l-2-6l-5 5l0 3l-6-2l-6 0l-3-3l-5 4l-5-4l2-3l-6-8l-3-2l-1-5l-4-2l-4 3l0 1l-5 6l3 5l3 1l0 1l-4 7l1 2l0 6l-1 5l-5 1l1-5zM1483 1362l-2 5l-6-2l1-5l1 0zM1519 1964l-2 0l-3 3l4 0zM1517 1332l3-9l-13-6l-3 7l1 3l3 5l-3 3l0 5l4 3l2-2l-1-8l4-1zM1499 1814l3 2l5-3l2 7l6 0l0-5l-4-5l-1-8l-6-1l-4 7l-2 1zM1347 1411l4 6l0 2l-8-1l-3 5l2 5l8 1l4 4l7-1l2-6l6 0l3 4l-2 2l0 4l9 6l8-2l1 2l7-2l3-2l6 1l3-6l6 1l3-3l4 6l-2 3l-3 1l-1 10l7 3l2 0l5 1l5-4l2 7l-1 1l-1 6l5 5l-3 3l0 5l-4 2l-1 3l1 7l7 0l2-2l2 1l7 1l1 2l1 5l3 3l4 1l5 0l5-5l1 0l4-2l6-2l0-4l-4-2l-2-4l0-3l-5-7l-3-1l3-6l7 2l2-3l1-4l-5-4l0-4l-10 0l4-6l7 1l1 3l2 0l5 3l-3 7l6 1l8 0l2-2l12-2l-1-6l2-5l-7-1l-2-5l-7 1l0-7l7 1l1 1l7-1l2-1l0-3l-5-5l3-5l-5-3l-1-2l-3-3l-11 4l3 4l-2 3l-5-2l-6 1l-3-5l-4 5l-3-2l-3 2l-6-1l-7 7l1 4l5 2l-2 6l-8 5l-1 5l-1 2l-3-7l-4-2l-1-4l-2 0l-2-5l3-5l-5-1l-4-5l-4 4l-7 1l-2-6l-9-2l-3-7l-3-1l-5 4l-6-1l-3-2l2-3l4 0l3-5l4 3l3-3l1-5l-5-3l-1-2l-7 0l-1-3l4-3l4 2l4-2l1-1l-1-5l1-4l-1-3l-5 2l-3 6l-3-2l-5 4l-2-1l-6 4l-6 1l-2-7l-2-1l-3 2l-4 5l-6-2l-2 6l-3 1l-1 7l4 2l-1 3zM1504 1543l2-4l-4-6l-7 6l4 4zM1437 1550l6 3l-4 7l4 4l1 7l2 1l2 3l-5 4l4 5l4-3l7 9l3-12l-5-2l0-5l-3-6l1-1l3-8l0-3l1-3l6 0l-1 7l4 2l6-1l4 4l7-3l-2-6l-3-2l1-10l5 1l2-1l1-2l-3-5l2-3l5 2l1-1l1-2l-3-5l7-3l-4-8l-2-1l-1-4l-5-3l-4 1l-2 7l2 2l-5 5l0 2l-3 6l-2-1l-3-2l-4 0l-1-2l-1-3l-4-2l-3 2l-5-1l-2 2l0 3l-5 2l-3 0l-3 6l2 3l-1 7zM1493 1249l4-4l-3-5l3-3l-4-6l-4 4l-2 0l-2 3l2 6l0 2l-4 2l4 9l6-6zM1310 1316l-1 4l7 3l6-1l-1-5l4-1l2 2l5-4l2 6l-3 4l6 6l-1 3l7 4l2-1l2 5l1 1l0 9l-5 0l-2 4l5 8l2 0l3-8l5 5l4-3l9 5l3 4l-2 4l4 5l-4 3l3 5l1 1l4-4l3 1l4-2l-1-7l3-3l-4-9l-10-8l0-1l6-2l3 0l1-3l3-2l4 2l4-2l3 6l2 0l3-4l6 8l-5 7l1 4l4 2l1 3l3 1l4-1l1-5l7 1l3-1l0-2l0-4l3-6l3 1l3 2l3 0l2-7l-1-3l4-4l7-3l-2-3l4-5l-1-3l4-2l5 1l2-1l6 3l2 0l-1-6l-2-2l1-5l2 0l3 4l2 2l6-3l3 2l5 1l7-5l-5-6l-2 0l-3-5l-5-1l-1 2l-5 1l-2-3l6-5l0-3l-6-1l-2-6l-4-6l5-4l0-2l-2-4l1-1l9-2l4 5l3-4l1-7l-3-1l1-6l-7-1l-3 4l-3-2l-6 2l-1-3l-6 2l-3-2l2-3l-4-8l-5 5l4 7l-1 6l7 5l-1 1l1 6l-7 6l-7-7l-6 2l0-2l2-6l-1-2l-4-2l-2-4l-1-1l-3-5l-15 5l0 2l4 4l0 2l4 2l4-3l5 3l0 3l-3 4l3 7l-3 4l-4-2l0-2l-4-4l-3 5l0 3l2 1l0 3l-4 4l1 2l-3 4l1 4l-3 2l-1 4l3 4l-1 2l3 7l8-5l5-1l2-7l6 1l2-6l2-1l4-6l-3-2l-6 4l-3-3l-4 2l-4-2l1-5l3-1l4 3l8 2l1-3l7 2l1-4l-1-3l4-5l4 5l4 0l3 3l-1 3l5 4l0 1l-5 4l2 4l0 4l-2 0l-4-4l-4-1l-3 7l-7-1l-1 5l3 6l-5 3l-2-2l-5 1l-4 7l-2-6l-4-1l-4 2l-1 5l5 2l0 5l-4 1l-1 4l-3 3l-2-2l-6-1l-1-4l-2 0l-3-6l-2 0l-2-4l5-5l-1-2l-7 0l-3 1l-4-7l-4 0l-7 8l-2 4l6 5l-4 3l-4-6l-6 1l-6 5l-6-6l-5 2l-4-4l1-5l4-4l3-1l2-6l-6-2l2-5l-3-4l-5 2l-4-1l-3 4l-5-2l-3 2l-10-2l-2 2l-6 0l-1 4zM1492 1198l-3-4l-4 4l-1 5l3 1l3-1zM1484 1157l-4-4l-6 0l-1 3l-6 5l0 4l6 2l2-1l1-6l7 0zM1468 1195l6-13l4 3l4 1l1-1l0-4l-6-5l-3 4l-7-2l-2 7l-2 0l-3 4l5 5zM1458 1143l3 0l2-3l4 3l4 1l1 2l7 1l2-2l-5-5l-4-7l-4-1l-6 2l-1-1l-2-4l-3-3l-3 2l-5 8l0 4l1 1l7 1zM1469 1221l1 7l4 2l4-4l1-3l2-4l-1-4l-2-1zM1477 1253l-1-5l-1-1l-5 1l-1 6l3 1zM1463 1386l-4-3l-4-1l-3 7l0 2l5 2l2 5l3 1l4-3l1-2zM1346 1736l12 2l-1 8l7-1l2 2l-1 7l1 7l4 1l2 2l4 0l3 4l5 3l3-1l7-11l4-1l3-2l4-8l-2-3l0-7l1-1l-2-6l4-5l7-2l1-4l-7-2l-4 2l-1-6l7-6l-4-11l-3-3l-6 1l-15-5l4-6l-4-4l2-6l4 3l4-2l2-4l4 1l3 3l0 7l6 0l1 1l5 2l4-2l-2-7l4 0l3 3l-3 5l0 2l5 4l6-2l1 2l-1 6l5 3l4 8l3 1l3-1l6 2l3-3l4 1l4-2l3-6l-4-8l-3 0l-4-4l1-3l-1-5l-7-11l4-4l-3-5l-2-2l-1-4l-3-3l-9 2l-4 6l-1 0l-2-2l-7-1l-1-3l-5-2l-3-5l-4 1l-4-6l-3-1l-4 3l-4-3l4-6l-1-2l-5-1l1-8l-4-2l1-6l-3-1l-3-4l-5 1l-1 6l-2 2l-4-3l-5 0l-4 3l1 4l-2 2l-5 2l-1 7l4 2l1 4l-3 2l-4 5l-6-2l-4 3l1 5l2 3l7-2l2 0l-3 6l-1 4l4 3l0 2l5 2l1 2l-8 5l5 3l-1 6l2 4l1 4l8 1l2 3l7-1l1 3l-3 7l-3 1l-3-1l-7 2l-1 4l-6 2l-1 2l0 7l-1 5l-7-1l-4-7l-2 3l0 7l3 1l2-1zM1379 1632l5 2l3 5l-3 7l-3-1l-1-3l-5-4l-3 2l-5-3l3-5l0-2l6-2zM1451 1234l6 6l5-3l-3-6l-8 3l4-9l-4-3l-5 4l-5 0l-2 2l4 6l5 1zM1451 1209l4 1l3-7l-2-3l-2-4l-6 2l0 4zM1451 1633l0-6l5-2l0-2l-5-4l-3 2l-5 0l-2 3l3 7zM1447 1219l-4-9l-6 7l4 4zM1425 1196l6-1l1-6l2-1l3-5l0-2l7-2l1-2l-8-4l-2 1l-1 4l-5 2l-3 3l-3 0l-3 6l5 5zM1396 1883l-2 5l1 2l3 1l8 9l5 0l4 3l0 1l4 9l1 0l4-7l4 1l3-2l3 2l5-2l1-2l2-1l0-7l-3-2l3-11l-4-3l-5 4l-5 0l-2 1l-4-4l-8 1l-5 3l-2 4l-3-2l-3-5zM1423 1253l9-3l0-1l-8-5zM1387 1528l-2 7l5 2l1-1l6 3l8 0l1 3l0 4l5 2l-3 6l0 4l3 2l1 2l5 4l2-1l2-4l3-3l-1-4l5-5l-1-4l-3-2l1-7l-1-3l-5-1l-7-7l-2 0l-4-2l-4 1l-2 3l-5 2zM1425 1153l-5-1l-1-4l-1-1l-6 3l3 8l5 2l4-1zM1401 1768l2 5l6-2l4 2l3-3l5 2l1-4l-2-4l2-5l-4-4l-7 4l-6 0zM1292 1448l-4 0l-1 5l-8 1l1 5l2 4l4 3l1 5l7 0l3 3l3-2l4-7l4 1l0 4l-3 2l-2 6l-3 2l0 2l2 3l9-1l1 1l5-3l0-4l3-2l2-6l-5-3l2-3l-1-5l4-3l2 3l5 1l3 4l3 2l1 1l-9 7l-4 4l2 13l-3 4l5 3l4-1l1-2l3-1l4-4l0-3l8-1l-2-9l7-2l4 3l0 4l6 0l1 8l4 0l1 4l5 2l3-7l-1-2l-1-3l7-2l2 1l2-1l6 2l3-2l5 3l5-2l3 6l6-1l0-4l6-2l-1-3l-5-3l-2-4l-1-5l-4-4l-1-2l-11 3l0 4l-5 1l-2 5l-2 3l-7-3l-2 3l-3 1l-4-2l-3 3l-6-5l0-4l-1-2l-5 1l-3-1l-2-4l-4 2l-5-5l0-2l-2-2l1-7l-4-1l0-2l1-2l1-5l-5-1l-3 1l-3 5l0 4l-4 3l-6-6l-6 2l-1 2l-5 1l-1 2l-6 0l-2 2zM1418 1253l-2-6l-2-1l-3 1l-2 5l8 2zM1414 1288l-6 5l-3-3l-5 1l-2 5l7 3l4-3l3 1l5-1l-1-7zM1384 1827l3 4l8 0l2-5l7 0l3-5l0-5l3-3l2-5l2-1l2-4l-3-6l-4-4l-5 2l-2-1l0-5l-6 0l-2 5l-3 0l-4-2l-3 3l-1 5l4 4l-3 10l3 6l-4 3zM1220 1826l-14 0l-3-2l-8 8l0 6l3 2l-3 7l1 2l6 2l-4 7l9 6l6 2l2 4l5-1l4 3l-2 6l5 2l2 6l0 2l8 2l2-2l0-4l6-8l6 3l-1 6l1 5l-1 3l0 2l2 2l7-1l-1 4l11 9l5-2l3 0l2-1l3-6l4 2l1 3l6 2l2 6l-1 6l2 2l-1 6l-2 2l1 3l2 1l7 2l0 2l-3 5l3 6l-3 3l3 7l1 1l4-1l5 1l3-4l3 4l-3 4l5 3l6-2l-1 12l7 1l3 6l4 1l2-1l3-6l-2-3l0-3l-1-3l7-4l2-6l-1-6l8 0l1 1l5 0l4-2l0-3l4-1l4 1l-1 3l4 3l0 4l14 2l0-1l3-3l4 1l4-5l3 0l2-4l1-2l-2-7l4-1l1-4l-5-4l0-1l5-3l-1-4l-3-2l-5 1l-3-5l-6 2l-1 3l-3 2l-9 1l-1 1l0 5l-6 3l-1-1l-7 2l-4 0l0-2l2-4l-7-10l1-4l7 1l3-2l0-5l-4-3l3-5l-1-4l3-1l0-4l8-4l-2-5l-10-6l3-6l-3-5l2-4l-3-5l5-3l2-2l-2-5l-3-1l-1-6l-4-2l-3-5l-6-1l3-7l-2-4l-2-1l-1-3l-7-3l-5 1l-5-1l1-7l2-1l1-3l-3-3l-9 1l-1-1l-4 0l-4-4l-1-4l1-2l1-5l-5-3l1-5l-1-7l2-4l2 0l2-5l9-3l2-5l-6-5l-3 6l-4-2l-3 2l0 2l-3 3l-2 3l-5 0l-3 6l-6 9l-9 4l-1 1l6 6l1 6l-5 3l2 4l-3 4l1 2l-1 2l-3 2l-5-2l-7 6l-7 0l-1-7l-5-1l-5 4l0 2l-3 7l3 5l-2 4l-7-5l-2-8l-3-2l-3-8l-10 1l-1 5l-6-2l-2 1l-1 4l-2 2l0 2l2 2l5-1l4 3l3-7l5 1l1 4l-1 4l-5 1l-3-2zM1222 1856l-6 0l-3-4l-4-1l3-5l2-1l4 2l4-2l7 1l3 5l7 0l1-5l-5-4l-5 2l0-7l6 4l4-4l-1-2l3-5l5 3l2-1l4 5l2 2l3 8l6-1l3 3l1 3l10 1l1-1l5 0l2-12l4-1l1-3l5-3l0-5l2-2l1-5l3-2l-1-6l1-3l5-1l2 3l8 0l-3 6l4 3l0 5l8 7l0 4l7 3l3 0l3 6l0 5l8 0l3 2l1 3l8 3l0 4l-3 2l2 4l-3 3l0 3l1 4l-1 2l1 2l-3 5l-3 1l1 5l-8-2l-3 3l0 2l-2 2l-5-1l-5 4l3 3l0 8l4 1l0 5l-2 4l3 6l-4 3l-7-7l-3 3l-5-2l0-2l4-3l-1-4l-2-3l1-4l-3-2l1-5l4-2l-1-5l2-2l8-2l2-5l-5-4l1-7l-8-1l-1 1l-6-4l-3-1l-3 7l-2 1l-4 8l-4 0l-1-2l2-6l-2-3l0-4l5-2l1-7l3-3l-2-4l0-6l-7 0l-2 6l-3 1l-2 6l-3 2l0 4l-3 5l-7 1l-1 2l-5 1l-2 3l-3 0l-5 3l-1-1l-1-5l-3-1l0-5l3-3l5 2l3-1l1-2l-4-7l-6 3l-1-1l-7 2l-2 5l-4-2l-1-4l-3-2l-3-4l-5-2l-6 5zM1309 1797l3 2l0 2l-6 2l-1-1l1-4zM1307 1904l-4-3l0-3l5-4l2 3l0 4zM1407 1260l-5-2l-2-7l-2-2l-5 4l0 2l-4 7l3 2l0 4l6 4l2-1l0-5l7-1zM1400 1110l4-7l-6-3l-4 7l-3 2l-1 6l3 3l5-3l0-4zM1393 830l7-5l-4-6l-6 4l0 5zM1390 1238l5 3l5-3l-6-9l-1 0l-2 3zM1371 1567l-2 6l3 3l4-5l3 0l1 1l1 5l-2 1l0 4l2 6l1 0l5-6l4 2l3-3l0-5l1-2l-1-3l3-6l-1-1l0-5l-7-2l-1-1l-6 1l-3 0l-4 3l0 3zM1382 1088l2 6l3 0l5 3l3-1l0-7l-5-2l-3-3zM1386 1836l-5 3l0 5l3 3l5 0l3-3l1-6zM1391 1183l-2-4l-9 0l0 3l4 7l-6 3l0 3l3 2l6-2l3-5zM1386 836l1-8l-2 0l-7 5l4 3zM1360 1327l5 3l5-4l-2-4l10-3l1-4l5 0l3-7l-8 2l-1 3l-3-2l-2-5l-5 3l-1 5l-1 2l0 3l-7 5zM1380 1113l4-1l2-4l-2-5l-4 0l-3-4l-6 4l-3-6l-6 3l-2 3l0 1l5 2l3 3l3-2l4 1l2-1zM1379 1291l-8 2l0 3l4 3l1 5l3 1l5-2l1-1l0-5l-3-2zM1367 1233l2 2l4-1l4 1l3-1l1-6l-4-4l-3 2l-6-2zM1360 1584l3 5l3 1l-1 7l5 1l2 3l2 1l4-1l1-5l-6-3l0-3l5-2l-2-5l-4-4l-9-6l-2 3l4 6zM1362 1186l6 0l3-2l1-4l-5-5l-3 4l-6-1l-1 3l-6 3l-3 5l-3 0l-3 7l9 0l0-2l6-2l2 0zM1369 1150l-6-3l-4 3l1 3l0 3l-6 3l4 6l2 0l4 6l7-5l-1-4l-6-1l0-2l5-5zM1340 1521l1 7l9 0l4-3l5 3l4-3l2-5l1 0l0-8l2-1l1-4l-7-5l-6 3l-1 3l-4 1l-1-4l-4-4l-4 0l0 6l-1 3l2 4l-1 2l0 4zM1369 1190l-1-4l-9 7l2 2l4 1l2-1zM1364 1370l-2 2l0 5l3 4l4-3l0-8zM1368 556l0-4l-6-4l-2 6l-4-3l0-4l-3 0l-6 2l4 6l0 2l-6 1l-1 6l-9 2l-1 2l0 4l1 1l6 0l1 1l7-1l5 6l3-1l1-7l-1-3l6-2l1-2l-6-5l2-3l6 2zM1366 1265l-6-1l-3 5l-5 2l0 7l1 0l8-1l4-3zM1354 1198l0 4l6 1l0-6zM1327 706l-2-1l-6 3l-2-3l-3-1l-5 4l2 3l0 4l6 2l2-1l6 0l2 2l4-2l3 3l6-3l2 6l8-2l2 1l5-3l-6-8l-6-4l-5 6l-4-3l-4 1l-5-3zM1345 1107l1 2l6-1l5-6l-3-4l-5 1zM1346 1153l-3 6l-3 3l10 7l0-7l4-4l-2-4zM1348 1237l5-2l-1-6l-7 1zM1347 1286l-3-3l-4 1l-2 3l3 7l-1 1l5 5l3 0l3-4l-1-5l-2-2zM1344 1228l6-5l0-7l-4-2l1-3l4-5l-3-4l-5-1l-2 6l-4 1l-1 2l8 6l-1 3l-5 4l1 3zM1348 1269l-5-1l-3 3l3 5l2 1zM1337 1250l1 8l4 2l3-2l1-9l-3-4l-4-1zM1330 1743l2 3l-1 5l4 2l6-4l1-2l-4-2l-1-6l-5-2l-2 2zM1337 1118l3-7l-3-2l-6 3l-2 4l-1 4l6 5l0 4l7-2l0-4l-3-1zM1341 1408l-6-5l3-5l-6-2l-2 7l-1 4l2 5l5 5l5-1zM1327 1179l1 6l4-1l1 6l5-1l-3-9l-3-2zM1324 1172l7-6l3 0l1-1l-4-7l-5 3l-5 4l0 2l2 4zM1330 1530l-5 6l-3 8l1 2l4 0l4-6l2-1l0-7zM1318 1347l6 3l1 2l5 0l3-7l-3-4l-4-2l-1-3l-7-3l-2 5l-3 3zM1320 1627l3 2l7-1l2-5l-2-5l2-2l0-9l-5-7l-5-4l-3 1l-2 4l-3 3l0 3l4 3l-1 5l2 3l-1 2zM1315 1583l-5 6l4 5l6-5l0-6l1-5l6-1l-1-5l-4-2l-3 1l-4-1l-2 3l-1 3zM1323 1147l-4-1l-3-2l-4 1l-3-6l-6 1l-2 2l4 4l6 1l0 4l3 2l9 1l2-2zM1284 1533l2-2l5 4l9-1l3 6l2 1l2 5l6-1l2-3l-2-8l-10-7l-3 2l-4-3l-5 0l-4 2l-2-2l-1-8l-3 1l-3 2l-7-3l-2 6l-2 1l-2 4l2 6l2 1l5-4l3 0zM1307 1167l7 0l0-8l-7 0l-1 1l-1 2zM1284 1419l5-2l3 2l0 3l4 3l3 0l5-3l9-7l-2-5l-5-2l-3 1l1 5l-3 2l-3-2l0-4l-4-2l-5-7l-4 8l-7-3l-1 4l-1 5l5 1zM1297 1384l-1 0l-4 8l5 4l3 0l2-2l3 0l5-3l-3-5l-5 2zM1300 1213l-5 6l0 3l6 7l6-2l-1-4l-4-2l1-6zM1304 654l-1-6l-1-1l-7 1l5 11zM1289 1347l1 3l2 2l5 0l0-6l-5-1zM1278 1141l-3 9l4 4l3 0l4-5l4 1l2-1l1-7l-2-3l5-5l-2-3l-7-1zM1287 1952l-3-2l-1 2zM1285 631l6-2l-2-7l-6 2l0 3zM1279 579l0 5l2 4l3 0l4-5l0-3l-4-3zM1268 1364l4-10l4 3l7-3l-1-4l-8 0l0-3l-3-3l-5-1l-1 1l-8-1l-4 6l2 3l0 9l5 3l1-6l2-2l3 7zM1277 1127l-4 1l0 5l7 1zM1220 1913l4 7l7 3l1 2l6 1l3 7l7 1l3-1l2 1l3 3l6-1l3 3l7 3l3-3l0-7l-2-2l-2-4l-10-4l-5-3l-8 1l-3 0l-1-3l-5-4l2-5l-4-2l-2-5l-5 0l-8 3l0 2l1 3zM1244 1785l1 3l9 7l5 1l4-3l2 1l7-1l0-2l-3-7l2-1l1-5l-6-4l-4 10l-7-3l-1 0l-6-1zM1259 1949l5 4l7-3l-1-4l-9 0zM1239 1401l-5 6l-1 5l-6 2l0 4l-3 2l1 6l-6 2l1 4l-1 1l0 6l-6 2l0 2l2 4l0 3l4 3l4-3l2-4l-2-4l3-3l5-2l2 4l9 1l4-2l5 1l3-5l0-1l-4-4l0-2l6-6l-1-5l2-3l2-1l1-13l7-1l1-3l-5-5l0-6l-5-5l-5 3l-2-2l-6 1l0 6l-2 1l-2 4l-4 2zM1223 525l7-1l1-5l8-1l1-3l7 2l3-4l3 1l2-1l2-6l4-3l-3-6l-3-1l-2 0l-9 5l-4 0l-1 2l5 6l-4 4l-5-5l-5 2l-3-1l-5 1l-1 4l1 2l-1 6zM1241 662l3 1l1 4l-7 7l5 5l3-1l5 3l2-6l6-1l1-1l-2-6l-4-2l0-5l-5-1l-3-6l3-2l0-2l-1-3l-2-2l-7 4l-2-1l-3 1l-1 7l1 1l6-2l-1 5zM1252 1528l1-1l0-7l-2-1l-7 1l-1 3l1 4zM1200 1516l0 6l5-1l3 3l6-4l-2-3l1-3l-3-4l2-2l6 2l0 3l2 2l8 1l4-5l5 7l4-2l2 0l3-4l-4-4l1-4l6-1l-2-5l-4-3l-4 1l-2-2l-10 2l-4-1l-5 1l-1 2l-13 7l1 5zM1235 1954l3-1l1-7l-3-3l-6 1l3 8zM1224 626l7-3l5 0l-3-10l3-2l0-5l-4-2l-5 0l1 6l-4 2l-3 5l0 5zM1206 1794l3 2l1 5l4 2l4-1l1-5l4-2l-1-4l3-3l0-2l4-4l0-4l-9 1l-3-4l-3 1l-2 4l-4 0l-4 5l3 4zM1219 1951l5-4l-2-4l-5-2l1-7l4-3l2-10l-10-3l-6 3l-1 7l-5 8l4 4zM1215 1541l-4-1l-6 5l4 4l6-3zM1195 1547l6-1l1-1l0-4l2-4l7 3l0-7l-3-4l-4 3l-1 1l-6 1l-2-3l-5 3l-3-1l-3 1l-1 6l8 0l1 6zM1206 1916l3-5l-2-9l-4-3l-5 2l0 8l-3 3l6 4zM1201 1451l-1-1l-2 0l-5 5l-3-1l-1 4l1 6l-1 2l7 6l-9 0l-1-2l0-3l-2-1l-7 0l-2 5l-6 1l-2 5l-5 1l-3 6l5 7l-3 5l-2 5l10 9l7-1l6 2l3-7l3-1l2 0l5-3l2-5l-2-7l5-1l2 4l7-4l-3-4l0-4l-9-17zM1182 1765l-3 6l-8-1l0 10l2 4l-1 3l5 7l5-4l-2-5l4-2l1-4l6 1l1-1l-4-7l5 0l2 2l6-2l3 1l4-4l-2-5l-1-1l0-3l-6-4l1-3l-5-2l-5 1l1 5l-4 3l1 4l-3 1zM1192 1568l-5 7l-4-1l-7 2l-1 6l6 3l2-2l7-2l4 3l6-5l4-5l-4-6l4-4l-1-4l-4-3l-4 2l-4-1l-3 2l-1 2zM1194 634l4 3l5-2l-3-8l-2 0l-4 4zM1177 1902l3-2l3 1l5-2l1-2l5 1l1-9l3-2l0-3l5-7l-1-1l-4-1l-4-5l1-5l-2-3l-5 1l0-6l-1-1l-7 3l2 5l-8-2l-3 6l1 2l-1 6l1 2l4 0l4 4l-5 3l-3 0l-3 4l1 6zM1164 558l3 6l-4 3l0 4l4 2l1 5l-5 4l0 3l4 3l6-2l8 1l4-2l1-3l4-3l3-14l4-5l-4-4l-6-1l-4 2l-3 3l-5-5l2-4l-5-5l5-3l2 5l5 1l3-1l0-4l5-4l1-4l5 0l3-6l1-1l0-6l-2-3l-1-4l-2-4l-5-2l-2 1l-4 6l1 9l-5 5l-5-1l-1 5l-3 3l-2-1l-2-2l-12 5l1 7l3 7l4 0zM1181 1816l2 2l5-3l1-5l4-2l2-7l-5-2l-2 0l-4 6zM1184 613l-5-3l-4 4l7 5l2 0zM1120 522l2-2l-3-8l3-1l3 2l0 4l3 4l-2 3l7 2l1-5l2 0l3-5l9-1l2-4l-6-4l2-4l5 0l0 8l3 2l6-2l2 2l6-1l3-6l-4-3l0-4l4-2l2-6l-4-3l-6 5l-2-1l-4 1l0 3l-5 5l-1-3l-7-1l1-3l1-1l5 1l3-1l0-7l4-2l3 1l5-1l2 2l4-2l6 2l3-5l-2-2l4-5l-4-6l-5-4l0-3l-5-5l-13 5l-4 5l-4 0l-2-5l6-4l1-3l-1-7l-2-1l-1-4l5-2l3 2l5-3l1 2l0 4l-5 3l1 3l5 3l4-5l4-1l0-3l1-4l-3-6l1-5l-6-3l-5 0l-3 6l-2 0l-3-3l-4 0l-3-2l-4 6l-6-2l-3 4l-8-7l0-3l3-3l0-4l5-2l4 2l2-2l4 0l4-5l2-6l-3-3l1-2l-28-3l-4 5l-6 1l-2 5l-3 0l0 1l14 20l16 40l10 10l-6 13l-3 1l1 1l0 2l-4 1l-2-2l-26 7l-3 10zM1174 1589l-5 2l-1 4l2 3l6 0l2-2l-1-6zM1175 1710l-4 4l-6 0l0 6l3 2l7-1l3-2l0-6zM1178 1616l-4-3l-3 2l-5 6l9 3zM1175 1563l1-5l-4-2l-15 3l3 6l5 0l1-1l4 2zM1156 1444l-5 3l2 7l3 1l4-7l6 1l6-5l-1-4l5-6l-8-8l-9-1l-7 2l-3 4l2 2l1 5l4 2zM1174 615l-3-7l-6 4l3 4l4 2zM1060 1837l6 1l3 6l6 2l0 4l3 3l-1 3l2 2l1 5l5 1l1-2l9-2l-5 10l2 2l5-1l6 4l3-4l8 2l9-3l-4-9l3-5l4-1l4 2l-1 3l2 3l4 2l2 4l0 4l-4 3l-5 1l-5 5l-1 0l-2-5l-6-1l-3 2l-3 5l1 4l-3 2l-1 4l4 4l5-2l2 2l4-1l3 5l5 0l3-3l2 1l3 2l-2 6l2 1l2 7l-3 3l-4-5l-11 1l-1-7l-5-1l-4 3l2 5l-1 4l12 9l25 0l-3-4l3-3l2 1l5-2l0-3l-2-4l4-11l3-1l2-7l-1-3l-2-1l-1-5l-2-3l1-2l-2-3l-1-4l5-3l1-6l6 2l2 0l2-7l-5-2l-1-4l8-1l-3-7l2-2l0-5l-14-9l-7 0l-4-3l-4 2l-4-4l0-2l-3-6l-7 5l-3-2l-5 0l-2-6l-10 1l-5 7l-4-1l-2-4l-5 0l-2-2l0-4l-7-2l-3 2l0 2l3 5l-2 4l1 4l7 1l1 1l0 5l-3 3l-2-1l-4-7l-3 1l-3-3l-5 1l-2 2l0 3l-7 2l-2 1l0 2zM1145 1883l4-3l3 3l-3 4l2 3l-2 5l-5-2l-1-3l-3-1l2-7zM1121 1828l3-1l4 1l1 6l4-1l4 1l5-3l2 2l0 6l6 1l1 3l-7 1l-7 2l-2-1l-5 4l-4-1l-2-3l-2 0l-3-6l1-2l-1-4l-7-2l0-2l7-4zM1098 1855l-3 2l-9-3l5-2l2-5l-1-6l5-2l-1-5l4-2l2 2l1 6l3 0l2 6l5 6l-7 1l-2 5zM1161 1676l4 4l4-2l0-7l2-1l0-6l-4-2l-4 2l-3-1l-4 2l-1 4l6 4zM1155 1628l1 5l5 1l3-2l6 1l0-6l-3-2l-3 3l-6-4zM1125 1758l-3-1l-2 1l-2 5l-6 3l-1 7l10 7l2 5l2 1l3 2l4 0l2 4l-5 4l3 5l5 1l2-1l2 2l1 5l5 1l1-1l1-5l3-2l1 1l2 3l7 1l1-4l-2-4l4-6l0-2l-4-2l-3 2l-5-3l0-3l3-2l2-7l1-1l1-4l4-1l-2-10l-12-2l-5 2l-2-2l-8 4l-3 0l-4 4l-1-1zM948 1854l1 6l4 1l3 3l4 0l1-1l0-3l-4-6l6-1l3-3l2-1l5 1l1 7l7 1l-2 6l-5 6l0 4l-5 5l-2-10l-5 0l-6 8l1 3l3 3l0 4l-5 3l-1 3l4 3l0 4l2 2l7-3l2 3l3 1l4-6l-1-5l5-4l-1-4l6-3l8 4l6-3l0-4l-2-3l-1-3l2-2l7 0l1-6l3 0l3 6l-3 3l0 2l3 3l-1 6l9 5l-2 5l4 3l7-2l0 5l10 2l1 7l12 0l3-2l1-5l2-1l3 2l8 10l-2 2l1 4l19-9l14 2l4-5l-10-8l-4 4l-6-3l-3 0l-7 7l-2-3l2-4l-5-5l-3 2l-6-1l-3-6l-8-3l0-3l-2-3l-4 2l-2 2l-3 0l-5 2l-7-6l-5-1l-1-1l1-5l6 0l2-5l2-1l3-3l3 1l10 15l6-3l5 8l4-6l5 1l1-1l1-2l5-5l-2-10l-7-2l-4-3l-4 0l-3-2l-4 2l-5 0l3-6l-3-2l0-3l3-1l3 3l8-3l-9-7l-1-3l4-6l1 0l3-8l-4-4l-3-10l-2-2l0-4l-14-7l1-5l7 0l0-5l-3-3l3-4l6 2l1 7l6 1l2-3l4-1l3 3l1 0l3-3l4 0l3-4l1 0l1 7l6 3l-3 5l5 4l0 2l6 3l3-4l0-5l2-1l3 1l1 4l10 4l6-3l0-3l2-6l-6-9l-3 0l-3-2l-6 2l0 4l-4 2l-2-1l-7 1l0-4l3-3l-1-5l0-4l2-1l3 1l3-2l1-4l-4-3l3-6l-1-4l1-2l5-1l3-7l5-3l4-1l3-6l7-4l2 0l4 4l1 6l1 1l7-3l8 3l2-1l1-3l5-3l3 2l4-4l-3-6l1-4l-3-2l-1-6l2-3l-3-3l-4 2l-2-4l-4 1l-7-4l-2 0l-3 7l4 4l-4 8l-3 0l-2-2l0-6l-4-1l-1-6l-2-1l-1-3l10-2l0-5l-1-2l-5-4l0-4l-7-2l6-7l-9-1l1-8l-8-2l5-6l0-2l-5-3l-5 3l1 6l4 2l-2 3l-4 3l0 5l4 3l2 6l-3 4l-4-2l-7 1l-1-4l-3-3l-3 1l-3-1l-4 3l-1 4l4 2l1 5l2 5l-1 4l-1 0l-8-4l-5 2l-4-6l2-10l2-1l-1-5l7-4l5 2l7-6l-2-7l2-6l-5-3l0-3l-3-1l-2 0l-6-3l-4 5l1 2l-6 3l2 4l5 2l-5 12l-4 1l-1 5l-1 1l0 3l2 3l0 4l-2 0l-2 7l4 3l-11 6l-4 0l-4-5l-5 2l-4-3l-3 2l-4 0l-2 3l0 6l2 1l3 7l-1 1l-4 1l-2 7l8 2l0 3l-4 3l2 5l-4 8l-2-2l0-5l-3-2l-3 1l-3-1l-6 2l-2-3l-4 0l-4-2l-4 8l0 2l2 1l4 0l4 1l1 5l2 2l1 2l3 2l5-3l2 1l2 3l-3 4l-1 12l-4 0l-4-4l-3 2l-2 3l4 6l-3 3l1 4l-7 9l-2 2l1 11l3 3l1 5l-8 3l-3-3l0-5l-1-2l1-5l-4-9l2-8l-3-1l-5 1l-3 11l-7 6l-3 5l5 6l-3 2l-6 1l-1-1l-1-5l2-3l-4-4l1-5l5-1l-2-7l1-3l-11 27l2 2l-1 4l-3 2l-1 0l-3 7l-2 13zM1091 1732l-7 7l0 3l-3 4l-7 0l3 10l-7-2l-3 5l1 3l-1 9l-1 1l-2-1l-4-6l0-6l-3-2l-1-4l-6 1l-3-6l3-1l3 0l4-3l0-5l3-1l6 2l2-5l2-2l-1-6l4-1l2-3l5-2l4-4l0-3l6-2l0-5l3-1l9 3l0 4l-3 6l3 3l1 5l3 1l2 5l0 1l-6 1l-3-4zM1051 1725l-4 1l1 6l-2 2l-1 4l-3 2l-3-6l-5-3l0-3l4-2l1-2l6-2l5-4l3 1l1 3zM1032 1775l5-8l5 0l1 8l-5-1l-5 4zM1022 1795l0 4l4 3l7 6l-4 4l3 5l0 2l6 3l1 2l-1 7l-2 2l2 5l-9 1l0-5l-6 0l-4-3l-3 1l-2 6l6 2l0 4l4 3l-1 4l6 6l-4 4l-1 2l-4 2l-3-3l0-3l-4-3l-1-5l-3 0l1-8l-5-2l-3 4l1 5l3 2l0 4l-3 4l-2 0l-4 3l-2 0l-3-5l0-5l2-2l0-4l-3-2l0-5l2-2l3 1l4-2l5 2l2-3l-1-3l1-5l3-2l0-5l2-1l5 2l3-2l0-5l-5-3l-4 0l-3-7l4-4l-2-4l5-3zM970 1882l2 1l-1 8l-2 1l-1-6zM1069 1928l-3 5l0 2l4-2zM1163 597l-8-1l-3 4l1 4l9 0zM1137 1568l-6 2l0 4l6 4l6 2l0 5l2 5l-4 5l-3 0l-2-2l0-3l4-5l-4-5l-5 3l-2-1l-4 2l-5 11l4 1l3 4l-6 7l3 3l2 0l5 2l6-10l7 1l1-4l3-1l3 1l4-7l1-8l1-6l6-3l-1-4l-4-2l-4 2l-5-2l-3 3l-5-1zM1151 1544l-3-4l-7 2l-2 6l1 3l1 1l4 0l2-3l3-2zM1122 1646l-3-1l-2 3l4 6l16-3l1-5l3-3l7-3l-2-6l1-1l1-7l-1-1l-10 1l-7-2l-3 5l-3-4l-5 0l0 6l3 3l-2 6l7 2zM1117 1127l-3 2l2 6l4 1l3-6l6 1l1-3l0-5l7-2l0-3l3-2l-1-7l-3 0l-4 2l0 4l-5 1l1 6l-6 1l-2 4zM1134 1535l1-5l-2-3l2-3l-7-7l-4 4l0 2l-4 6l3 5l3 0l6 2zM1103 1586l1-3l0-7l7 1l2-4l3-3l-4-7l-5 2l-2 2l-7-2l1-7l4 1l6-5l3 0l4-5l5 3l4-4l0-2l-2-3l-8 3l-1-6l-5-1l-3 1l0 3l-6 11l-6-5l-3 5l2 3l-4 5l1 11l4 3l3 1l0 4l-2 2l0 5l-2 1l-2 6l-2 2l1 4l3 3l5-1l1 1l-2 8l1 2l3 1l3-1l3 1l8-3l0-2l-3-3l-1-4l-4-3l2-5l-3-3l-6 2l-1-1l-1-4zM1061 1603l5 11l-3 3l-1 3l6 0l4 5l-1 2l1 1l-1 6l-6 0l-3 6l1 1l9-1l1-3l7-2l2 1l3-3l4 1l0 5l3 5l2 2l9-6l3 2l4-3l2-8l6-6l-5-5l-3 3l-5 1l-1 3l-6-2l0-2l-5-5l-9 2l-2 1l-5-1l-5-13l7 0l1-6l-8-3l-3-2l-1 0l-4 6zM1082 1157l-2 1l-2 8l6 1l3 5l5-1l5-4l1-2l-2-6l-8 1zM1084 1531l2 4l8-1l0-1l-7-7l-2 1zM1084 1195l-6-2l-3 3l1 5l6 3l1 6l8-1l1-1l-3-9l-4-2zM1085 1890l3-3l0-2l-5-5l-5 5l1 2zM1079 949l6 0l2-2l-1-5l-6-3l-4 3zM1084 909l0-3l-2-4l-6 3l1 3l4 3zM1071 745l2-2l6 1l3-3l-4-7l1-3l-4-3l-10 7l-3 9l4 3zM1078 1166l-4 0l-3 2l-3 3l10 7l2-5zM1027 996l3 2l5-2l4 1l5 3l6-4l0-3l3-2l5 1l3-2l1-4l3 1l4-4l1-5l4-5l-3-6l3-3l2 0l3-6l-1-5l-2 0l-6 4l-10 1l-2 8l-5-3l0-3l-3-4l4-5l-2-4l-3 0l-5 4l0 2l-4 4l-1 2l4 4l1 3l-2 2l-7-1l0 6l-6 1l0 3l-4 5l-7 3l-1 6l1 2l7-3l2 1zM1061 1578l2 3l5-2l1-6l4 0l4-4l-3-4l1-4l-6-5l5-4l1-2l-2-4l-8 2l0 5l3 3l-3 5l3 4l-2 5l-3 0l-3 3l-5-2l-6 1l1-6l-8 1l1 5l3 1l2 5zM1061 1791l-3-1l-7 4l0 6l6 3l5 0l2-3l-6-3zM1037 1263l-4 2l1 8l4 1l5-2l1-2l-1-3l3-4l1-4l2 0l4-5l3-1l-5-7l6-3l0-4l-2-7l0-2l5-2l-1-7l-8 2l-1 4l-2 0l-5 1l-1 3l3 7l-1 1l-1 5l-5 2l0 7l3 2zM1053 840l6-1l-2-9l-2-1l-5 6zM1054 1675l-6 3l-1 4l4 4l6-2l-2-8zM1051 1664l3-2l2-7l0-3l-4-1l0-6l-4-3l-4 5l-3 0l-5 2l0 2l5 4l2 8zM1038 791l3 3l4-2l1-7l3-2l-2-5l0-3l-5-3l-6 8l3 7zM897 697l3 23l17 10l0 1l3 3l7 4l-2 9l-2 0l-1 6l-5-1l1 9l6 3l2 3l5 1l2-6l4 0l2-5l4 6l-4 2l4 7l-1 7l5 1l3-1l4 0l7 3l0 4l5 4l-3 6l3 2l0 3l4 4l4-1l8 1l1-3l-3-5l-2-1l-2-5l-5-2l0-4l6-2l2 1l3-1l2 1l4-6l6 0l9 3l4-3l1-3l5-2l2 2l6-1l0-8l3-2l0-4l4-2l0-4l2-2l8 1l4-4l3-6l0-6l-2-2l-3-4l4-5l-5-3l-3 1l-2 6l-5-2l-1 1l-2 4l3 5l-2 1l-1 7l-4 1l-1-3l2-4l-2-6l-7-1l-1-2l-4-3l4-8l-4-3l-6 0l0-4l5-2l5-2l3 3l4 0l3-7l2 0l4-4l0-8l5 1l3-7l-2-10l-5 2l-3 5l-3 0l-3-2l-2-3l-1-1l-1-5l4-3l1-2l5 0l7-2l-1-3l-10-13l-5 0l-1 1l-6 2l-6 0l-1-3l-14 0l-11 2l-2 2l-4-1l-9 1l-1 2l-1-1l-15 2l-3 6l-3-3l-2-1l-19 4l-13 11l0 4l-3 2l-1-1zM955 733l5 2l4-3l4-9l4 1l4-4l1-2l4-2l1-5l2-2l8 2l-2 6l1 4l4 0l1 3l-1 4l2 6l-3 2l-1 6l-6 4l-5-2l-5 3l-3 4l-3 0l-2 5l-6-4l-2 0l-4 4l-2-7l1-7l-4-3zM931 704l0-2l6 0l3-3l6 2l3-2l-1-7l2-1l4-5l-5-4l-5 3l-3-2l3-6l-1-3l-6-2l8-7l5 1l2 3l-2 3l0 7l5 1l1 5l4 0l4 3l4 7l0 2l-3 6l-4-1l-4 2l-1 5l-8 2l2 5l-2 3l-3-1l-5 0l-1-1l0-6l-5-1zM917 705l-2-1l4-6l2 0l2 7zM1033 853l1 1l6-1l-1-4l4-4l-1-3l-14-3l-4 2l3 7l5 0zM1009 1950l2 2l6-2l15-2l2-2l0-4l7-3l-2-6l3-5l-3-4l-11 1l-4-3l-5 3l-4-1l-5 3l0 2l4 5l-3 5l-7 0l-2 4l2 3l4 2zM1031 1684l5-5l2-5l-3-4l-15 19l4-1l3-5zM1030 956l-1 3l1 3l5 1l2-3l-6-5zM1030 914l-3-4l-4 1l-6 5l3 6l5 0l2 0zM1020 832l3 2l5-1l1-2l-1-2l-5-3l-2 2zM1023 1732l-5 1l-1 3l4 6l6-2zM1021 1531l-4 2l1 5l8 1l0-6zM970 971l0-5l1-7l6-1l10 4l5-2l2 1l4 7l-2 2l-8 2l2 7l16 0l4-3l7-2l2-3l-2-9l-6-5l1-1l3-3l5 4l3-1l2-3l1-5l-3-1l-8 2l0-6l-4-4l0-3l-6-3l-1 1l-7-2l1-4l-6-3l-2 4l-4 0l-1 6l-5 1l-1 6l-2 2l-7 1l-1 1l5 6l-4 4l0 2l-7 0l-3 3l-2 1l-5-5l-4 2l4 8l2 1l1 1zM1007 1199l3 7l6-4l-1-5zM1001 1129l8 8l4-2l0-6l-5-1l1-5l-3-2l1-6l-1-1l-6-1l-3 3l0 3l-3 3l-11-1l0 1l3 5l5 3l3-3zM1006 1721l5 0l0-6l-4-2l-3 1zM1000 1717l2-2l-1-4l-4 5zM1005 1706l1-2l2-2l0-1l-5 7zM1006 1727l-5-2l-2 0l-5-4l-5 9l5 1l0 7l3 1l2-1l9-1l0-4zM999 1906l5 3l3-4l-2-5l-5 2zM981 1938l1 1l5-2l2 6l6 1l1-6l7-1l0-3l2-3l-2-4l1-5l-6-4l-3 3l-9-1l-1 3l-4 3l2 5l-2 1zM979 1237l0 1l6 3l-1 6l5 6l7-2l3-7l-4-4l-6-1l-1-4l3-4l-1-4l-2-2l-1-2l1-2l4-2l5 4l3-8l-5-3l-4-4l-4 0l-3 2l-2 0l-6 5l0 4l3 2l3 11zM998 1290l-9 2l0 4l7 4l3-3zM958 1171l1 1l9-2l4 3l-1 4l7 4l6-1l2-1l0-6l2-1l6 2l2-1l3-8l-3-2l-6 2l-1-1l-9-3l-3-3l1-5l-6-4l-3 7l-5-5l-5 2l-5 0l-3-5l-5-2l-1 3l3 6l-2 4l2 2l5-1l3 3l3 1zM978 1957l-4 3l12-1l-3-1zM969 1957l-6-1l-5 4l14 0zM991 1958l-3-1l-1 2zM985 1344l-3 4l1 4l11 0l-4-8zM983 1525l-2 4l-2 3l0 5l2 2l6-1l4-11l-4-2zM983 1597l-2 0l-2 2l5 7l4-7zM979 1634l6-4l3-7l-1-2l-2-2l-6 1l-2-2l-5 2l-4-1l-1 1l-1 5l3 2l2 6zM974 1410l4 10l3 1l1 7l4 2l2-1l-1-9l-2-1l-1-4l2-3l0-4l-3-2zM983 1763l-1-3l4-4l2-4l-4-6l2-3l-1-4l-8 28zM985 846l2-8l-3-3l1-5l-2-1l-8 1l-1 2l2 4l-7 3l-2 2l4 4l7-7l1 4l4 4zM948 1943l4-5l5 2l3 0l1 4l-3 4l-1 2l6 3l2-2l0-4l4-1l3 2l5-2l-3-9l-1-1l-5 3l-7 1l-1-17l-6-5l-2 0l-3-1l2-8l4-2l-1-6l-3-4l-4-1l0-7l-3-2l-2 3l-2 17l3 26zM975 1388l1-2l-2-4l-6 0l-2 3l0 6l3 2zM970 1917l-7 0l-1 3l7 6l4-1l1-3zM936 1111l-2 2l5 6l0 2l4 2l3 5l5-1l5 2l3-1l6-2l0-2l-1-5l-3-2l-2-2l2-4l-2-2l-4 0l-4 3l-2-1l-6 1l-3-4zM962 1342l3-2l-2-11l-7 5l3 7zM951 1285l4-4l4-2l-1-7l5-3l0-4l-5-3l-1-3l-11 0l-3 2l-5 0l-5 5l-1 3l-3 5l3 8l3 2l7 0l1 1l6-1zM904 981l4 5l8-2l-2 7l5 0l3 5l0 4l-5 4l-2 6l3 7l8-1l4 7l4-1l2-5l2-1l6-11l-7-5l1-2l2-2l1-3l-3-6l0-1l2-2l5 2l6-2l2-3l3 0l2-4l-3-7l-3 2l-3 6l-6-4l-3 4l-5 0l0-5l-1-1l-4-8l-9 4l-3 4l-7-4l-5 5zM922 1086l4 6l4-2l4 1l3 11l3 4l8-1l4-3l0-4l-9-2l0-4l-2-2l-4-2l1-5l-4-4l-3 1l-9-4l-3 3l-8 0l-4 8l0 3l5 2l4-2l0-2l3-2zM950 1026l0-5l-1-1l-5 1l-1 4l-5 1l1 8l4 1l3-4l0-2zM923 936l2-2l2 2l3-1l4-4l13 4l2-8l-4-1l-4-4l-5 1l-1-5l-6-1l-2 4l-5 0l-3-2l-7 1l-3 4l1 3l3 2l-2 5l5 3zM921 1223l4 4l4 0l2-7l2-1l3 5l5-4l-3-4l7-3l-2-5l-8 0l-1-5l-4-1l-6 2l0 2l-8 1l-1 1l1 5l-4 4l1 5zM939 1183l1-4l-3-4l-8 0l0 2l6 6zM923 1064l13 0l2-3l-6-10l-7 1l-3-3l-2 3l-2 6l-2 1l-2 4l5 5zM904 834l4 3l3 9l2 1l4-7l5-1l3-2l5 1l2-6l5-2l1-2l-3-4l0-3l-5-5l-4 1l-1 3l-7 0l-4 1l-1-6l-4-3l-5 5l1 5l-3 2l0 3l2 2zM926 1321l-5 0l-1 4l4 5l7-3zM921 1599l3 0l4-6l-4-4l2-3l-1-4l-6-1l-4 3l1 4l-7 3l1 4l8 0zM928 1191l-7 0l-4 1l0 2l5 4l3-1zM768 1132l3-3l-1-4zM773 1121l1-3l-1-3l-2 7zM773 1112l4-3l-2-6l-2-2l-1-1l3-6l-1-3l-2-1l-3-4l-2-1l0-7l6-1l0-7l3 0l4 2l3-4l4-1l2 4l4 0l1 7l2 1l3 5l4 13l-5 0l0 3l-4 4l1 4l-2 2l2 10l-3 1l0 7l4 2l0 2l-4 3l0 5l4 3l3 5l0 1l-6 4l3 6l-4 3l-4 8l-6 1l-4 4l-4-7l1-2l-3-6l-3-1l0-5l-3-3l0-2l5-2l-6-4l-2 5l4 30l-24 23l-13 10l14 26l3-3l-1-5l3-2l4 2l4-4l6 2l5-4l0-6l2 0l2 2l3 0l6-3l9 0l1 0l6 1l2-2l5 2l3 6l4-3l4 1l-3 7l5 2l0 2l-4 4l-3 1l1 8l2 2l0 5l-3 2l1 6l2 2l9 3l3 2l2-1l9-2l3 2l1 5l-4 6l2 2l-2 10l-5 2l-5 0l-3 3l-4-2l-4 3l1 6l6 0l3-2l3 0l2 2l-3 7l3 2l2-1l4 2l5-3l1-3l1-1l8 5l9-11l4 2l2 0l1 2l8 2l-5 5l3 5l4 1l3-2l7 0l4-3l1-8l-7 1l-2-1l1-2l5-5l-5-5l8-6l1-8l-6-2l0-3l5-2l2-5l-10-1l2-11l-1-5l-2-2l0-3l2-2l0-5l-3-3l4-6l0-1l-8-4l3-5l-3-3l-1-7l-4-2l-5 0l-3-2l4-8l-2-2l-2-2l-1-11l-6-2l1-7l-3-2l7-5l-3-4l3-6l2-2l3 3l5-2l3 2l-1 4l3 3l7 0l1-2l4-1l3-4l0-3l2-5l-2-1l-9 0l-5 1l-3-2l-4 2l-4 0l1-6l-5-3l0-2l-5-4l-3 2l-6 2l-3-1l-2 4l-6 3l-2-2l-1-2l-5-3l-1-3l5-4l-1-2l6-5l0-2l4-3l1-3l9-10l-3-5l-2-1l-2-5l-8-2l-7 3l-8-1l-1-3l2-3l-2-3l-1-4l4-7l-3-3l6-6l-1-2l3-4l6-3l1-3l7-5l1-5l5 0l0-6l-5-3l4-1l0-8l3 1l5-6l-1-2l3-5l4-1l8 5l-5 4l-1 6l1 3l-1 2l2 5l3 2l2-1l6 2l2 4l6 1l1 4l-2 3l0 3l-2 5l3 4l4-2l0-6l3 0l2 2l5-1l2-7l3 2l7 1l6-3l-2-5l7-2l-3-3l5-6l-7-4l-6 3l-5 3l-3-2l-2-5l0-5l-5-1l-3-5l-4 0l1-6l-3-2l-2-8l4-4l0-2l5-8l2-7l-3-5l-4-1l-6 7l-6-2l-8 0l-2 3l0 4l-1 1l-7-2l0-2l-14 15l1 0l1 5l-2 2l6 12l-7 4l1 1l-4 5l0 2l3 4l-3 4l0 2l-4 2l-5-3l-3 0l-1 5l-6 1l-2 5l-4 0l-4 3l-7 1l-4-5l-5 0l-2-2l-1-4l-5 1l-20-14l-20 14l-3 20l16 20l10 32zM881 1017l-8-3l2-3l0-3l2-4l5 3l1 3l1 5zM875 1229l0 2l2 2l-1 4l-5 2l-3 3l-3-1l-2-11l8-4zM859 1264l4-4l2 0l2 7l5-2l2 1l2 4l-3 3l-4 0l-2 2l-7 2l-1-5l-3-1l-1-6l2-1zM808 1212l-4-3l1-3l5-2l1-5l2-2l3 0l-1 8l6 5l5-1l2 1l4-1l5 5l3-5l3 2l4-4l1 8l3 0l5-3l4 5l-1 1l-5 1l-4 6l8 3l-4 6l-3 1l1 8l-7 1l-2 2l3 5l-6 1l-2-3l4-3l-2-4l-5-1l-2 1l-4-2l6-6l-3-6l-6 1l-4-3l0-3l-3-2l-2-6l-3 0l-3 2zM822 1160l2 5l6-1l2 5l7-4l2 2l0 4l1 4l-2 3l-5 1l-2 2l-3 2l-4-2l-1-4l-3-2l0-2l-4-5l1-2l-2-5zM801 1200l-4-3l-4 0l-4-7l-2-1l1-8l10-11l6 1l2-4l3-1l6 12l2 0l4 11l-8-1l-2 4l-5 0l-2 1l1 4zM811 1120l2-4l5 1l-2 5l5 3l-8 8l-5-6l1-2l0-4zM747 1257l2-4l-3-3l-2 9zM748 1243l0-2l-3-3l2 3l-1 3zM878 965l3-6l-1-1l-6 8zM918 869l-1-7l-7-3l-5 6l0 4l2 3l-1 6l6 2l1 6l1 1l7-2l4-3zM865 904l3 1l3-1l2 2l-1 8l-4 3l14 26l-1-5l2-1l3 0l3 0l5 2l0 7l4 2l3 5l3 3l7-1l2-5l4 5l6-5l-2-3l0-4l-1-1l-3-1l-5 1l-1 5l-1 0l-7-4l-3-5l-3-1l0-8l4-7l-4-4l0-2l6-3l2-4l5 2l3-3l2-3l5 0l3-3l1-5l-6-3l-6 2l-8 7l-6-6l0-5l4-3l-1-4l3-6l-2-1l-5-8l-5-3l-2 6l-20-2l-4 1l-1-1l-9-1l0 5l-3 4l2 9l7 3l-1 6l4 1zM877 1573l-5 14l7 3l8-1l3-6l-3-5l0-1l5-1l1-7l6 5l1-1l4-5l5 4l5 1l4-6l-4-3l-1-5l-7 0l-2 7l-3-3l0-5l-5-1l2-5l-4-4l-4 2l-3-1l-5 2l-2 0l-3 4l-5 2l1 7l2 1zM897 1116l-1 6l6 2l3 5l2 0l3-5l5 1l1-8l2-3l-3-5l0-9l-3-3l-6 1l-2 4l2 5l-5 4l0 3zM911 1302l-2-1l-6 4l1 4l5 1l3-3zM897 1528l-1 5l10 6l3-1l3-5l-3-6l-5 1l-3-2zM892 1453l-2 5l9 3l-4 5l0 1l6 4l4-2l1-5l-4-5l9-2l0-5l-3-3l-3 2l-3 7l-4-4zM899 1607l3 2l3-4l-3-4l2-4l-2-6l6-3l-5-8l-7 0l-2 3l2 5l2 1l-4 6l1 2l-3 5l6 3zM894 1363l0-3l-3-2l-3 1l-3 7l3 2l3 0zM877 1529l0 3l3 3l4 0l3 1l3-3l-1-8l-2-2l-4 5zM872 1438l-5 2l-2 4l1 8l2 0l9-8l-1-4zM857 1089l6-2l3 1l3-3l7 0l0-7l-2-2l-4 0l-4 2l-4 1l-3-1l-2 1l-2 5zM868 1615l-1 1l8 3l-1-3l-2-1zM858 1130l8-5l-1-2l4-4l-2-6l-7 0l-1 2l-5 4l0 3l2 1l0 5zM838 1538l-2 2l-3 1l0 5l2 2l0 4l-3 1l0 6l-6 3l-5 1l-2 3l1 5l9 4l0 2l-3 3l0 3l3 3l-5 6l2 2l6 0l3 2l1 4l-2 2l8 4l0-4l2-7l-3-3l2-6l-5-4l1-4l-1-1l-2-7l2-1l1-4l4-2l6-5l-1-4l1-4l5 1l2-1l5 5l5-4l-4-6l0-3l-4-2l-1-8l-6-4l-4 2l-1 0l-3-5l1-3l-2-3l-10 0l-4 1l-2 7l0 1l7 3l0 1l4 2zM862 1510l0-1l-4-9l-3 3l-2 4zM857 1333l-1-1l-4 5l-2 1l0 4l3 3l7 0l1-3zM861 1466l-8-1l-3 5l6 5l2 0l3-6zM851 1567l1 2l9 0l-8-8zM842 1350l4 7l2 0l3-8l-6-2zM850 1610l-2-2l-3-1zM815 1559l3-3l-4-5l-7-4l-7-1l-1-1l2-6l-5-2l-5-4l-4 2l2 9l2 2l0 2l19 5l0 6zM795 1458l0-7l-3-3l-4 4l2 6zM777 1249l0 5l7-1l2-4l-4-3zM767 1250l4 0l3-2l0-4l5-5l-1-2l-5-1l-5-3l-4 5l5 4l-3 5zM752 1268l-1-5l-6 1l0 5l2 2l1 0z" fill="#e2ecf6"/>
<path d="M1946 1110l-2 4l5 4l-1-3zM1945 1188l-3 1l-2 7l2 2zM1944 1168l3 0l3-4l-1-5l1-6l-1-1l-6-2l-4 3l1 6l3 0zM1936 1108l-3-2l-3 7l5 5l-1 2l2 5l4 1l4-6l-2-5l-4 0zM1914 1225l6 3l3-1l2 2l6 2l2-6l-1-2l3-5l-1-2l-2-2l-5 4l-2-3l0-5l-8-1l-3-5l-8-1l-3 5l5 17l5 1zM1917 1124l0 2l2 2l6 0l1-4l-5-5zM1902 1110l5-3l0-2l-8 0zM1897 1189l-2-5l-4 0l-4 3l3 9l6-5zM1873 989l3 7l5-2l4-1l2-3l8-2l0-2l-3-7l1-2l-1-3l-8-4l-5 1l-4-5l-10-1l-3 5l2 6l2 0l5 5l0 4l2 1zM1879 877l2 3l0 2l-8 5l3 4l-1 4l4 3l2-5l0-26l-7-10l-4 1l-1 3l7 4l0 5l4 2zM1880 1195l-2-4l-4-2l-4 2l-10-1l-5 3l1 5l-1 3l-2 5l-5 1l2 5l-3 3l-6 1l-1 2l3 6l8-2l1 3l16-9l-2-1l-1-4l-3-4l3-5l1 0l-1-4zM1864 1125l5 3l0 5l1 1l7-1l1-2l1-8l-2-1l-3 0l-7-3l-3 4zM1843 1175l5-5l2 2l3 7l7-6l-4-6l4-4l-5-6l0-4l-2-1l-7 3l-4-3l-5 7l0 4l5 2l-3 6zM1859 1010l-5-2l-2 1l-3 7l9 2zM1849 1089l-2 1l-3-2l-6 3l0 3l4 3l4-3l6 3l2 0l0-4zM1752 1219l4 5l6 0l0-6l5-3l2 1l6-2l6 1l1 1l-1 6l6 1l1 3l-1 2l4 6l4-2l2-3l13-1l-1-5l3-6l6-1l1 0l1 6l-8 7l0 2l3 6l7-3l8 3l2-7l3 5l6-4l1-3l-6-2l-1-5l-3-1l-5 1l-2-6l1-1l0-13l-5-2l-4 6l-3-3l-3 1l-2 11l-8-1l-3 3l-5-2l0-3l5-5l0-4l-9-1l-3-4l-6 1l-2 3l-3 1l-4-2l-5 3l-3 1l-2 4l-3 1l-2 6l-2 1zM1831 728l7 0l4-5l-1-2l-9 1l-2 2zM1831 682l1 3l4 0l-2-7zM1828 704l5 1l4-2l0-3l-3-3l-2 0zM1821 928l7 2l5 4l3-10l-2-2l-5 1l-1 0l0-6l-7-1l0-5l-2-2l-3 0l-3 2l-4 0l-3 4l5 3l2 0l4 2l2 0l4 3zM1827 1096l2 1l4 0l-1-8l-4 1zM1818 897l4 1l3-6l-6-12l-3 1l-2 5l3 4zM1822 1125l-8 4l0 1l8 3l3-3zM1783 1101l10 2l6 3l5-3l3 1l-1 5l1 1l8 0l6-1l-1-7l3-2l0-3l-2-3l-1-3l3-3l-5-8l4-6l-1-4l0-2l-5-6l-1 0l-4 6l0 3l2 2l1 3l4 4l-5 4l-2-1l-1-4l-3-2l-4 2l-1 6l-6 0l-7 6l-3 0zM1812 647l0-2l6-3l-1-4l-8-1l-6-5l-4 6l-5-2l-2 1l-2 4l9 8l5 0l3 2zM1801 764l9-3l1-5l-3-3l-5 2l-2 8zM1800 620l-1 3l4 3l7-3l0-1l-7-3zM1809 1048l-6 0l-2 3l5 4l2-3zM1804 873l4-6l-1-8l-4-1l-5 0l-4 5l-5 2l6 8l3-1zM1797 920l-1-4l-2 0l-9 5l2 4l0 4l3 3l6-2l-2-7zM1771 652l4 6l3 0l8 4l9-1l0-6l-3-3l-4 0l-3-5l-2 0l-2-5l-2-2l-2 0zM1792 1081l2-5l-3-4l1-6l2-3l-1-4l-3-4l-5-2l-2 3l2 6l-1 2l-3 3l1 4l4 2l-1 8zM1745 1267l4-2l0-3l5-4l12 2l3-1l2-9l6 2l-2 7l5 3l5-2l2 0l3-1l3-7l-4-6l-7-2l2-4l-4-5l-7 3l0 4l-2 2l-6-4l-2 3l-12 4l1 7l-5 1l-4-2l-2 4l-5 2l-2-1l-5 3l0 4l5 3l-1 2l3 5l5-2l1-6zM1765 578l8 1l2 2l5 0l1-7l8 0l-23-13l-1 2l0 3l3 2l0 4l-3 5zM1769 1268l-6 3l-1-1l-7 8l1 1l3 1l11-11zM1743 599l0 2l4 4l5 0l7-2l3-5l1 1l10-1l2-1l2-5l-5-2l-3-5l-2-1l-4 4l-5-2l-3 5l-3 0zM1755 667l1 3l6 0l2-7l-2-2l-4 0zM1763 645l0-10l-1-1l-6 1l-2-1l-6 2l-2 6l0 6l3 2l3 1l3-5l7 0zM1745 539l4 5l4 1l-6-8zM1755 679l0-6l-7-4l-2 2l2 6l3 2zM1742 1288l-8 2l-2 1l0 2l13-3zM1726 572l3 8l3-1l2-1l6 3l2-2l1-5l1-2l-4-7l-2 0l-5-4l-5 2l-3-5l-4 3l-5-1l-3 1l0 1l4 6l5-1l3 0l3-2l4 6zM1730 1149l-1 5l3 3l7-5l4-2l0-2l-2-5l-2-1l-3-3l-4 0l-2 2zM1735 602l-5-1l-3 6l2 3l3 0l5 3l4-4l-1-4l-4-2zM1735 557l1-2l-2-7l-2-2l-3 1l0 8zM1727 454l-2 1l1 6l2-1zM1705 500l1 4l11 0l-1 6l15-3l1-4l0-1l0-6l-3-2l0-7l-4-2l0-7l-3-1l-4 3l-4-3l-3 1l-1 6l5 4l0 3l-10 1l1 5zM1723 504l-2-2l0-3l4-2l4 5zM1716 1253l5 8l6-1l0-6l4-3l-5-8l-2 0l-3 3l-4 0l-2 3zM1689 1276l-2 4l-2 10l6 1l3-2l2-4l3 0l3 7l1 1l12-4l2-4l2-1l3-6l-9-2l-1 0l-2-1l-1-8l2-2l-3-7l-6 3l-1 3l-6-2l-1 2l-3 4l2 3l-2 5zM1722 1299l-6-4l-4 0l-6 6l1 2l5 4l4 1zM1719 447l2 0l0-4l-5 0zM1713 1223l5-1l1-8l-6-2l-2 3l-7 4zM1711 458l7-1l-1-6l0-2l-6-3l-4 3l1 5zM1709 1162l1 4l4-1l4-5l-4-6l-5-2l0-3l-3-2l-7 2zM1706 598l6-4l-4-8l-4 11zM1698 660l3 2l2 0l4-7l0-3l-8-1l-1 3zM1705 1256l2-9l-5-1l-6 10l3 1zM1697 473l3 2l5-1l1-7l-4-1l-5 1zM1702 696l3 0l1-5l-1-5l-4 0l-4 5l0 1zM1698 607l-4-4l-5 4l0 2l7 3l-2 4l2 2l6-2zM1684 431l4 1l3 5l6-5l-4-7l-9 2zM1682 1114l1 9l3 1l4-2l0-5l-6-4zM1681 863l-1-2l-7-2l-3 3l3 4l0 5l4 2l4-3l6 2l2-1l-1-5l-3-2zM1677 1310l0 2l7 3l2-1l2-6l-6-4zM1688 1093l-1-5l-6 0l-1 2l0 4l-5 2l1 7l7-1l2-2l1-3zM1687 1300l-4-9l-1-1l-4 6l2 5l2 2zM1681 455l4-8l-3-2l-6 1l4-6l-5-3l-3 1l0 6l-4 2l0 4l2 2l-1 4l5 3l5-4zM1672 558l-3 3l2 4l2 2l1 6l4 2l4-5l2-4l0-5l-5-3l-2 1zM1681 546l2-2l0-3l-4-2l-5 3l1 4zM1661 1276l0 5l4 2l0 7l7 1l6-2l-1-6l3-1l3-3l-2-4l2-2l0-5l-6-2l-2 5l-4 2l-8-1zM1665 1237l1 1l4 1l5-6l-10 1zM1640 533l0 4l2 4l-2 4l3 5l4 0l1-1l1-7l6 1l1-1l1-6l2-1l-1-3l5-3l5 3l4-8l-8-8l-6 2l0 6l-2 1l-4-3l1-5l-3-1l-4 0l-3-5l-3-1l-3 2l0 5l-2 7l1 1l4 0l3 4zM1660 472l-6 1l0 8l9-3zM1636 1250l1 9l3 0l6 10l4-6l0-3l9 0l1-4l-4-5l1-4l4-2l1-6l-6-3l-4 3l-2 0l-3 3l-8-1l-9 1l1 7zM1650 1251l4 1l-5 6l-4-2l0-5zM1655 1164l-4 1l-5 5l2 2l8 2l2-7zM1642 1285l9 1l6-4l-2-4l-6 0l-1-7l-1-1l-6 4l-1 7zM1629 1327l1 2l-2 7l1 3l2 1l1-1l10 2l3-6l6 0l2-7l-4-5l-4-1l-4 2l-3-4l5-6l0-2l-4-3l-2 0l-3 5l-4 2l2-8l-2-2l-4 1l-5 5l4 4l4 1l1 3zM1645 623l-2-6l-5 0l-2 3l8 3zM1639 1120l0-5l5-1l0-3l-4-3l-8 6l-3 0l-3 4l0 3l4 3l4-4l4 1zM1624 1278l4-4l6 1l1-3l4-4l-3-8l-6 6l-1 0l-2-7l-4 0l-2 7l-2 1l-1 4l-4 4l3 7zM1624 618l-2 6l5 2l6-5l-4-5zM1618 556l3-2l6-6l-2-6l-3 1l-4 3l-2-1l-9 3l1 6l5 0zM1623 1346l3-6l-7-4l-3 5l2 4l-5 4l3 4l-2 5l7 2l3-1l0-4l-4-4l1-5zM1601 1308l-3 6l-5 1l2 7l-1 3l2 1l3 0l4-4l2 2l7-3l0-3l2-4l5 0l2-2l-3-6l3-4l-1-3l1-3l-7-7l-3 1l-5 13l-4 2zM1617 733l0-4l-8-2l1 8l3 1zM1615 512l0-3l-6-3l-5 6l3 4l3 1zM1605 618l4 1l5-4l0-1l-5-4l-5 2zM1607 1196l3-5l-2-4l-7 2zM1570 1307l4 1l2 2l-1 7l5 0l3 3l9-5l-3-11l3-3l2 2l6-1l1-5l-4-4l-3 0l0-2l4-12l3 0l4-3l-2-5l-1-4l-3-2l-8 0l-1 5l1 3l0 2l-3 2l-4 0l-1-8l-7 1l3 8l2 1l-4 4l0 5l-4 6l-4-1l-7 1l-1 4l-6 0l-4 5l4 7l7 6l-3 5l6 6l1 7l4 2l3-6l6-2l-1-4l-5-4l1-2l-3-4l-6-1l-3-7l2-4l3 1zM1591 553l7 0l1-4l5-3l1-4l-7-6l-3 0l-1 5l-7 2l3 5l-1 2zM1601 1133l-5-1l-4 5l0 2l6 0zM1599 1261l1-2l-8-5l-3 4l1 3zM1568 531l7 2l2-2l6 1l10-2l-1-3l5-4l-3-4l5-2l0-4l-4-4l-8 3l2 9l0 1l-4 0l-3-4l-3 0l0-6l-5-4l-4 4l-1 2l-2 2l-2 4l1 4l3 1zM1599 667l-1-5l-2-1l-6 2l-1 3l4 2zM1585 1209l-1 6l9 0l0-4l-6-3zM1579 646l-7-6l-3 3l-1 3l2 5l-3 3l2 6l8 0l0-5l9-3l3-6l-3-4zM1588 1092l-2-1l-6 1l0 2l7 4l2-1zM1581 1370l5 1l3-3l-1-3l-2-3l-5-5l-3 2l-8 0l4 8l5 0zM1583 1266l3-3l-2-6l-3-2l-4 4zM1583 573l-6 0l-7 4l-1 2l4 4l6-1l6-3zM1577 551l-4 2l-2 7l1 1l10-3l0-3zM1559 1217l4 4l6-1l0-5l-7-5l-1 1zM1559 580l-4 3l1 8l6-2l-1-8zM1518 1260l8 1l0 5l3 1l-1 5l-4 0l-3 4l1 6l-2 2l0 6l2 2l-2 6l-4 5l-1 4l2 2l2 1l5 5l4 0l2-7l0-7l15-8l1-2l-6-4l-5 2l-1-1l0-3l-3-4l4-3l3 0l5-4l0-3l3-6l-5-6l-6 3l-4-5l-3-8l3-5l5-2l4 1l3-4l-1-4l-3-2l-5 2l-9-5l-4-1l-5 1l0 3l3 6l3 0l-1 7l-2 1l-3 0l-5 3l0 3l6 3zM1542 549l3-6l-3-5l-11 5l-2 5l6 2l4-1zM1538 1328l5 1l1-9l-7 0l-1 4zM1485 574l0 6l1 4l6 3l2-1l8 0l5 2l2 3l-4 5l1 2l6 4l4-3l2 0l7-2l3 6l5-6l5 1l1-5l1-2l0-3l-2-3l1-2l-5-7l-4 5l-3-1l-1-3l-5 0l-4 4l6 6l-3 2l-4 2l0-8l-5-1l-1-2l2-6l-4-2l5-10l-1-2l-7 2l-5 4l-3-2l-2 1l-4 0l-3 7zM1533 1209l-4 0l-1 4l2 3l-1 5l4 3l6-8l-2-1zM1527 1329l3-1l3-4l-4-4l-5 3l-4-1l-1 1l-2 9l3 3l4-2zM1522 696l7-4l-3-7l-4-1l-6 8zM1501 1224l9-2l1-6l7-1l5-7l-3-6l-8-1l-2 3l1 2l-1 9l-5-2l0-5l-6-5l-3 1l0 2l2 4l-3 4l2 2l-1 5zM1520 626l0-3l-4-6l-2 0l-6 2l-4 3l0 6l6 1l0 6l2 3l4-4l-1-5zM1487 1257l6 2l4-4l3 0l4-6l4-2l0-6l-3-2l-2 1l-5-4l-5 3l3 6l-4 3l0 2zM1489 1265l-2 6l-2 3l-4-4l-11 3l2 5l0 2l6 5l0 4l2 2l6-6l4 0l1-7l5-7l3 1l5-6l-3-4l-7-1l-2 4zM1490 556l4-1l4 6l4-2l1-2l-4-6l-2 0l-3-4l-3 0l-4 2zM1502 1191l-3-3l-6 3l-3 0l-1 3l2 5l5 0l2-2l4-2zM1361 1275l-2 9l2 2l7 0l2 1l8-4l4 1l0 3l-3 5l2 4l3 1l0 6l2 5l5 2l3-2l1-3l-4-4l2-4l2-1l-1-6l3-1l2-6l9-3l2-6l3 0l1 7l-2 3l1 5l3 1l5-1l0-3l2-4l3 3l0 2l5 3l4-5l-3-7l3-4l-1-3l-5-4l-4 4l-1 5l-9-4l2-2l5-1l0-2l-4-6l14-4l2-4l3 0l3 5l-4 4l1 5l5 2l2-5l3 0l3-4l-3-4l1-2l4-2l3-4l4 7l-2 4l4 2l5-1l2 2l6-2l3 2l3-5l-1-4l-3-1l-4 2l-2-1l1-5l-3-4l-2-1l-4-6l-5 2l-5-5l7-3l3-2l4 1l5-2l-1-7l1-1l7-5l1 1l5-2l5 2l3-3l-1-3l-2-2l-4 2l-4-4l0-2l-3-6l-7 0l-3-4l-7-4l-3 6l3 3l0 3l5 2l3-2l6 7l-5 1l-5-3l-10 2l-1 1l2 4l-2 2l-5-1l-3 3l-5 2l-4-4l-4 4l1 8l4 1l2-1l2-1l5 0l4-4l3 2l-4 8l-3 2l-1 5l-2 1l-4-5l-4 1l-3-1l-6 4l-2-5l-6-1l0 7l4 4l8 5l-8 4l-5-2l-1 1l-18-2l2 8l5 1l-1 11l-6 0l-2 3l-5 1l-4-3l-8-4l-6 3l-2-4l-5-3l-2 1l-1 8zM1488 1291l-7 1l0 4l5 3l4-4zM1489 1147l-3-2l-4 0l0 6l5 3l3-4zM1433 1158l-1-3l-8-2l-1 5l-4 1l-1 8l3 1l4-3l5 3l0 3l5 3l8-4l2 6l-1 3l1 6l3 0l5-1l1-4l-2-3l5-6l-1-5l5-2l3 2l-1 5l-3 2l0 5l14 3l3-4l6 5l3-4l-6-5l-4 3l-3-5l0-5l-5-2l0-3l6-5l0-2l-3-2l2-6l-1-3l-4-1l-5-3l-3 4l1 8l8 1l-4 5l-4 0l-3-4l-2-1l-5 2l-4-3l-1-5l-5-1l-4-2l-2 6l4 5zM1449 1351l8 0l6 3l1 5l-1 5l1 2l6-2l1-6l0-6l-1-2l4-7l0-2l-3-1l-3-4l5-5l0-2l3-2l3 2l5-2l1-6l-3-3l-6 3l-4-6l-4 0l-1 7l2 2l1 4l-1 0l-6 6l-3-1l1-6l-5-2l-5 2l1 4l-4 4l1 4l-6 2l-4 5l1 3l-2 7l0 5l-3 3l-8-1l-1 1l6 7l-4 3l1 4l8 2l0-8l2-1l4 5l3 1l2-1l2-10l6-2l0-6zM1474 658l5 2l3-1l3-7l-1-3l-2-2l-5 1l-5-4l-5 4l1 5l5 1zM1471 632l7-2l1-6l-4-2l-6 1l-3-1l-4 1l-1 4l2 5l6-3zM1476 586l0-9l-3-5l-10 3l-1 3l5 7l2 2zM1457 766l-7-1l0 8l4 3l2-1l3 8l12-6l-1-3l-5-4l-6 1zM1429 608l3 8l-3 2l-1 4l5 3l1 2l-6 3l5 6l4-1l6 9l4-2l2-5l4-2l0-5l5-9l-1-2l1-2l5-5l3-1l1-6l-7-3l3-4l-4-4l0-3l-7-7l-3 3l2 8l-3 2l-4-1l-4 5l0 4l-1 1l-6-2zM1430 1303l5-2l3 3l6-4l2 2l-4 5l5 4l0 4l6 2l2-1l3-6l-1-1l3-4l3-1l1-6l2-1l1-4l-4-3l-3 0l-3-4l-3-1l-4 6l1 3l-1 3l-6-2l-1 3l-8-2l-4-3l-4 2l-1 6zM1454 1197l1-1l-1-4l-5-1l-3 2l0 3l-5 1l-1 7l2 0l6-2l1-3zM1443 1330l7-4l-4-7l-7 2l2 7zM1442 645l-1 1l1 7l1 2l6-3l0-3zM1449 1137l-4-4l-2 1l-4 8l9-2zM1442 593l0-5l2-1l-1-5l-11-5l-1 9l1 4l4 5zM1424 1128l-1 5l2 1l3 5l6-1l0-2l-3-4l-1-4l-2-2zM1427 762l6-8l-7-5l3-5l4-3l-2-5l-6 0l-1 1l-1 10l-7 3l0 5l7 0l1 5zM1398 1376l2 5l8 3l7-1l4-5l0-6l5-2l1-4l-7-3l-2 1l0 5l-4 1l-2-1l-2-3l-4-2l-3 3l0 2zM1423 655l-3-1l-6 3l3 7l4-1l3-6zM1408 1331l0 2l-4 4l3 6l2 1l5-3l3 1l3-2l3-5l1-5l-6-5l-2 1l-3-1zM1419 1297l-2-2l-5 1l-4-1l-3 4l0 5l5 1l5 5l3-2l-1-5l3-3zM1413 1203l3-12l-4-4l-10 3l0 3l4 5l-2 4l6 4zM1380 955l0 2l5 3l2 0l4-5l0-4l4-2l3 2l6 1l2-4l7-1l3-6l-2-2l1-4l-5-6l4-3l1-6l-8 0l-2-4l-7 4l1 8l-2 1l-2 5l-6 0l-2 7l-6 1l-2 3l3 6zM1406 1171l5 4l-6 2l1 4l6 3l3-4l-3-5l2-3l0-5l-2-2l-4 1zM1409 1122l-6 0l-2 4l7 5l3-3zM1398 1150l7 0l4-4l0-3l-5-3l-5 0l-2 8l-6-6l-2 0l-1 3l4 4zM1407 1221l-1-7l-7-1l2 6l-3 3l1 6l3 1l5-4zM1382 552l2 6l-1 1l-1 6l5 5l5-3l2 2l4-8l-2-2l0-2l2-2l0-2l6-5l-3-4l4-7l0-1l-3-1l2-8l-1-3l-3-2l-4 3l0 6l5 4l-7 8l-2 4l-7 2zM1400 1172l4-9l-8 0l-2 4l-2 0l-2 8l1 1l5 1zM1395 819l5 7l4-2l0-6l-8 0zM1398 975l1-2l-6-7l-3 5l0 5l5 1zM1387 606l-1 3l3 2l6-3l1-4l1-2l-4-7l-4 2l2 6zM1386 1195l3 5l5-2l-2-8l-3-1l-1 0zM1385 1232l7 1l1-3l-3-6l-5 2zM1379 791l1 7l3 2l7-9l0-3l-3-4l-1-4l-5-2l-2 0l-4-7l-2-1l3-7l-5-5l0-4l-2-2l-3 1l-4 3l1 4l-2 3l1 3l3 1l-2 6l6 3l2 9l6 3zM1388 810l-4-6l-6 6l4 4l-2 3l1 5l7-1l1-4l-3-4zM1388 1246l-7-2l-2 1l3 9l6-2zM1378 1263l5 0l4-2l-5-7l-3 2l-3 3zM1384 589l-5 1l2-2l-3-2l-3 0l-1 6l-3 1l-1 1l3 8l4-1zM1357 1330l1 5l2 2l2 2l2 2l6-5l7-1l6-8l0-3l-6-6l-10 3l2 5l-4 3l-5-3zM1370 1149l6 0l4-6l-5-7l1-3l-4-4l-12-1l-2 4l3 8l8 1zM1368 1100l3 4l6-4l1-5l-3-4l-5 1l-2 6zM1303 648l0 6l-3 5l4 4l2 4l7 0l1 2l0 4l2 1l1 4l6 1l2 7l5-2l4 3l5-1l9 1l2-2l3 3l7-1l2 2l7-5l0-3l-2-3l1-3l7-2l-1-3l-7-4l-6-2l-2 2l0 4l1 2l1 7l-1 1l-3-1l-2-6l-4-1l2-7l-5-1l0-3l-6-2l-1 1l-5-2l-4-4l-5-1l0-3l1-3l1-3l-1-2l0-5l8-3l3-4l6 1l2-2l2-6l6 2l3-2l0-2l-3-4l1-5l-1-1l-5-1l-2 1l-4 0l-3 1l1 7l-1 1l-4 0l-2 6l-5-1l-1 4l-6 2l-1 3l-2 1l-3 0l-8 6l1 6zM1370 1212l-4-3l-1-6l-11-2l-8 10l-1 4l4 2l4-1l2-7l2 0l3 2l-2 7l2 7l6-1l2 1l5-7l-3-4zM1343 522l-4 3l1 7l-1 2l-5-1l-2 1l-4-4l-2 0l-4 2l2 8l4 4l5 0l3 3l5 1l2-1l4 3l6-2l3 0l2-1l-1-5l4-3l2 0l4-2l3-13l-3-2l1-5l2-2l0-2l-4-2l-5 1l-2 7l-1 0l-5-3l-4 3l-6 0zM1346 1108l-1 1l-6 2l-1 6l4 1l4-4l5 5l4-5l-1-4l6-1l2-9l6-2l-8-8l-2 1l-4 5l0 3l2 3l-5 6zM1358 1176l0 3l7 1l2-4l-3-4zM1355 1309l7 5l2-10l-4-8l-4 2l-6-3l-3 4l-2 0l-3 5l1 2l4 2l5-2zM1304 690l-3 5l5 5l-2 5l3 3l3 0l4-3l2 1l3 4l7-4l1 2l5 3l4-1l4 3l5-6l6 4l6 7l4-3l0-3l-3-5l-6-6l-2 2l-5 2l-3-3l-5 1l-8-9l-4 4l-5 0l-3-1l-2-6zM1345 1143l-1 6l1 5l8 1l1-3l-2-4l1-1l3-2l1-4l-2-2l0-6l-5-2l-4-5l-3 2l-2-2l-7 2l1 5l11 2l2 5zM1350 1659l-7-4l-3 7l3 3l1 6l4 2l5-5l0-2l-4-4zM1345 693l-3 4l0 2l8-2l-2-3zM1334 1156l-3 2l4 7l4-2l3 9l6 1l1-1l1-4l-9-6l-4-6zM1331 597l4 0l3-1l7 1l1-2l4-4l-6-4l-1 0l-7-2l0-1l-6-3l-1-2l5-3l1-4l0-1l-7 0l-6 15l-2 2l3 8l5-3zM1327 1341l3 1l2 4l7 1l4 5l6 0l0-8l0-2l-1-1l-2-6l-3 1l-6-3l1-3l-6-7l-3 6l-1 2l-4 5l1 3zM1335 1230l1 4l4 2l5-6l-1-3l-4-2zM1338 1224l6-4l1-5l-10 3l-1 1l1 2zM1333 1198l-9 1l-1 5l8 0l2-1l4 6l5-2l2-5l-3-5l-2-1zM1341 1263l-6 3l2 5l3 1l3-3zM1247 799l5 0l4 4l4 0l-1 8l9-1l-1 4l2 4l8-4l-1-3l5-5l-5-6l0-1l3-1l2 1l5-1l0-4l4-2l4 1l3-2l1-2l4-2l2-4l2 0l5-5l-4-2l-1-2l2-2l0-5l-3-2l6-5l-2-5l3-4l0-2l2-2l6 3l4-2l4 4l-2 7l7 2l1 5l7 1l1-7l-6-2l3-4l0-4l2-3l-4-5l3-7l-8-2l-2-5l-5 0l-2 4l-5 1l-1 2l1 5l-3 2l-3-2l-6 1l-2-2l0-2l-2-7l-7 0l-2 1l-9-2l-2 1l1 7l-2 2l-4-3l-3 3l-4-1l-1 3l-3 3l-5-3l-5 1l-1 6l5 2l2 3l-6 4l1 3l-3 5l4 7l3 2l2 5l-1 5l-3 6l-5 0l-5 2l-3 4zM1313 1714l0 5l4 3l-1 5l8 0l2-3l-1-3l-2-1l-1-6l4-5l4-2l6 0l0-6l-3-3l-3 2l-5-4l-4 4l-5-2l-4 4l1 4l2 1l0 6zM1317 1197l5 0l2-4l4-3l2 1l4-1l-2-7l-4 1l-1 2l-6-3l0-2l6-2l-1-7l-3-2l-6 6l-2 1l-2 8l-1 2l2 7zM1313 1119l-3 3l-10-1l-1 1l6 7l5-3l4 4l0 4l4 6l-2 4l3 3l4 1l2-7l1-1l-3-7l1-4l2 0l4-13l-9-3l1-5l-2-4l-5 1l-3-5l-5 4l-6-3l-3 2l2 7l2 0l5-1l4 3l3 4l4-1l3 5l-2 2zM1314 1605l4-4l1-4l-5-4l-4 6zM1300 1307l-9 1l-1 4l7 3l-2 6l1 3l3 0l2 5l4 0l2-2l-3-6l6-1l1-4l3-2l1-4l-7-2l-2 3l-5-1zM1236 529l-5-1l-2 6l-5 2l-6-3l-2 5l4 4l-2 6l7 3l2-1l6 3l0 2l4 2l2 2l0 7l4 1l-1 8l9-4l0-4l5-4l1 4l5 1l0 2l-2 3l2 7l-3 1l-5 4l-2 5l-1 1l-4 7l-2 0l-5 3l-1 1l-4 4l0 5l-3 2l3 10l4 4l0 2l-4 3l-2 5l6 3l2-1l3 6l3 2l2 3l6-3l1-3l6 0l1-4l-2-4l-1-5l2-1l7-3l4-3l3 2l1 2l-6 5l2 2l8 0l5-3l0-1l-2-4l0-3l6-2l-3-6l-3-1l-4 3l-2-1l-1-6l-4-3l0-2l3-3l1-3l3-5l-1-3l3-5l-2-3l0-4l4-2l4 3l7-2l0-5l8-3l3-5l8 2l-1-12l-1-1l2-10l-1-2l-8-2l0-5l-3-2l-6 3l-2 4l-2 1l-7-2l-6 4l-2-3l-4 0l-4-2l-5 3l-2-2l-6 0l-3-6l-8 0l4-7l0-4l3-1l6 1l4-7l-7-4l-2 1l-3-1l-3 3l-8-1l-2 9l3 5l2 5l-6 1zM1246 1764l-3 1l-6 8l1 2l5 1l-7 9l1 5l-6 7l5 5l4-2l2-3l4 0l3 4l-1 6l-3-1l-8 2l1 5l3 3l2 8l8 5l4-4l-4-6l3-6l0-3l5-3l3 1l1 6l9 1l7-6l0-6l5-2l1-4l3 0l5-4l-1-4l-7 0l-3-4l-4 5l-2-3l-1-3l-5-2l-2 2l3 7l0 2l-6 0l-2-1l-4 3l-5-1l-8-7l-1-2l4-4l4 1l3 0l0-2l4-4l0-5l2 0l4-4l-2-6l2-1l3 0l3-1l6 4l3-3l3 1l3 4l0 2l6 2l4-3l5 2l3-6l2 1l3-1l1-4l-4-3l-9 3l-6-3l-3 0l-4-2l4-5l-1-4l-2-2l-5 6l-5-5l-8 3l1 4l-4 2l-3-1l-2 1l-8-1l-1 2l-8 0l-1 2l5 7zM1301 1205l-5 5l4 4l6 3l5-4l-1-3l-5 1l-2-6zM1309 1893l-7 5l0 4l5 3l4-4l0-5zM1309 1696l-2-5l-5 7l4 3l2-1zM1305 513l4-2l-2-8l-3 0l-4 2l0 5zM1304 1187l4-3l-1-5l-4-2l-2 0l-2 3l-1 7zM1305 1540l-2-1l-5 3l2 4l4 2l2 0l1-3zM1304 1934l-8-2l-1 1l1 6l5 1l3-2zM1242 696l-6 0l-5 2l-4-2l-4 2l0 4l-3 2l-4-3l-4 6l0 1l4 2l1 6l5 2l7 0l1-1l1-4l5-2l3 2l6-3l2 1l2-2l0-6l4 0l3-5l4 1l0 2l5 3l4-2l2 4l7 0l1 1l6-3l2 2l6-1l2 3l3 1l5-4l-5-5l-4 2l-5-4l0-2l-1-4l2-6l-3-2l-7 0l-2-1l-2 1l-7-5l-3 1l-6-1l-8 2l2 6l-5 3l2 5l-5 4zM1302 1887l0-2l-5-7l-2 7l2 3zM1254 1871l0 6l3 2l1 4l2 2l5-3l4 0l1-3l6-1l1-2l7-1l3-5l0-5l-4-2l0-3l2-7l6 5l4-1l5-19l-5-5l-4 3l-2 2l-4 1l-1 6l0 6l-7 1l-8-1l-1-2l-2-1l-7 5l-1 2l7 3l-3 3l4 8l-3 1l-5-2zM1288 1158l3 6l3 2l3-1l-1-10l-5 1zM1286 1121l1 2l0 7l7 1l3-8l-5-8l-2 0zM1289 848l5 0l2-6l-2-2l-3-2l2-6l-3-3l-8 6l6 4l-2 4l1 3zM1246 1921l10-1l5 3l9 4l2 4l2 2l7-3l1-2l0-5l5-4l8 1l1-7l-3-7l-5-2l-1-3l-5-2l-4 6l-4 1l-5 2l-10-8l1-4l-1-1l-6 1l-3-2l-3 3l2 5l-3 4l-3-1l-3 3l-2 5zM1283 587l6 6l5-2l-1-4l-6-4zM1282 662l4-2l2-4l-2-3l-4-1l-2-3l-5-2l-3 0l-1 7l3 5l4-1zM1241 484l4 5l0 4l5 0l3 5l5 0l2 7l8-2l10-9l1-1l-9-6l-13-4l6-6l-2 0l-5 3l-2-1l-3 2l-7-1l-2 2zM1244 1956l4 2l2-3l2 2l5 0l8-4l-5-4l1-2l8 0l1 3l6 1l2-3l5-1l2-4l0-6l-2-1l-8 1l-3 3l-7-2l-2-3l-6 1l-4-3l-3 9l1 8l-1 2l-4-2l-1-4l-2-1l1-4l-4-5l0-2l-9 1l-6-1l-4-4l-3 3l-2 9l6 1l1 4l-4 3l11 10l13-2zM1237 1952l-1 1l-3-2l-1-6l3-1l3 2zM1263 1145l8 8l5-4l0-1l7-13l-3-2l-7-1l-1 1l-6 1l-2 5l1 2l3 1l7 5l-11-3zM1276 1565l0-5l6-3l-1-6l-6 0l-2 3l0 2l-7 4l0 3l4 2zM1223 1514l-3 1l-2 6l5 2l3 4l2 1l3-2l3 2l2 5l3 0l3 6l0 2l1 3l8 1l2-6l4 0l3-2l8-2l-2-5l2-4l2-1l2-7l-4-3l1-5l-5-4l2-2l-4-6l-7-3l-3 7l-2 1l-2-1l-5 2l-2 4l4 4l-3 3l-2 0l-3 1l-5-6l-4 5zM1251 1520l1 1l0 6l-7 0l-1-4l1-2zM1270 1576l0-3l-6-4l-4 3l-5 0l-3 4l5 3l3 4l4-5l4 0zM1266 1547l-3 0l-3 5l-2 0l-2 5l3 4l5-3l0-1l4-4zM1250 1143l0 1l8 3l1 0l-3-8zM1222 1844l-1 1l2 8l-2 3l3 6l7-4l5 1l2 4l3 2l2 3l4 3l1 0l1-6l-1-2l-1-5l6-1l2-8l3 0l1-2l-3-8l-2-3l-5-5l-2 1l-5-4l-4 7l1 2l-4 3l-6-4l0 9zM1235 1843l4 4l-1 3l-6 0l-2-5zM1245 723l0 2l6 4l4-6l-5-5zM1250 1591l3-2l0-6l-3-3l0-3l-3-2l0-3l-4-6l-2 0l-3 5l3 4l-7 3l2 5l3 2l0 4l4 4l5-3zM1252 1879l-7-4l-3 2l0 2l5 6l-5 4l1 1l8 3l1-3l-1-5zM1246 889l4-6l-2-5l-6 1l-2 6l4 4zM1183 466l-4 3l3 5l-4 5l2 2l5 1l2 3l-1 2l1 5l3 1l11-8l2 1l5-1l1-3l0-5l1-1l-2-6l2-1l4 0l2-1l0-5l7-1l5 5l5 0l1-6l5 0l8-7l0-5l-8-2l-7-8l-6 4l-6-1l-2 8l-7 1l-6 3l-3-1l-5 2l1 7l-1 1l-6-3l-3 7zM1231 864l4 4l2-1l3-6l-4-4l3-6l-1-7l-2-1l-9 8l3 7l2 2zM1232 1748l4-5l-3-3l-4 1l-1 4zM1106 1742l-3 8l2 2l5-1l2 3l1 3l7 2l2-1l0-7l9 0l4 4l4 5l4-2l2 2l5-2l11 1l2 9l-4 2l-1 3l-1 2l-1 7l-4 1l0 4l5 5l4-3l3 2l0 1l-4 6l3 4l4-1l5 4l4-3l1-6l4 2l4-1l4 3l5 2l-1 6l2 3l6 4l-1 3l4 5l-1 2l2 2l13 0l2 0l5-3l3 2l6-2l1-4l-1-4l-6-2l-3 7l-4-3l-4 1l-2-2l2-3l1-3l1-1l7 1l1-5l-1-2l-6-1l-2-2l-3 1l-4-2l-1-5l-3-1l1-6l-3-3l4-4l-1-3l-3-3l-1-3l-4-1l-5 2l-5 6l-6-1l-1 4l-4 3l2 5l-4 3l-4-7l1-2l-2-4l0-10l1-4l8-2l0-5l4-1l3 2l4-2l-1-6l4 0l4 1l-1 4l6 4l2-5l7 0l1-5l-5-5l-2-7l-6 2l-5-6l-5-3l-2 0l-6-4l-3 0l-3 1l0 2l-5 1l-4 3l-3-4l-3-1l-4 4l0 4l-3 1l-5-1l-2 1l-8-3l-7 3l-2-7l-4-4l-3 0l-6 4l-3 6l-4 1zM1180 1745l-1 5l-4 0l-3-4l2-2l5-1zM1155 1750l-1 2l-5-1l-2-1l0-3l1-1l6 1zM1071 1606l2 9l3 5l6 2l2-1l5-1l3-2l5 6l0 2l7 2l2-3l5-1l2-3l4 4l-6 5l0 3l4 1l4-3l1-5l4 0l3 5l4-6l9 2l7-2l3-6l0-2l4-2l1 1l1 4l3 2l-1 2l5 5l4-3l3 2l5-4l-7-4l3-5l4-2l0-2l5-4l0-3l2-1l0-6l3-1l0-7l7 2l3-3l6 1l2 1l3 0l3-3l-3-6l4-3l-6-5l-5 5l-5 4l-4-2l-8 2l-1 2l0 2l-5 4l1 6l-1 1l-6 0l-1-2l1-4l-2-3l-2-11l-4-3l-6 3l-3 14l2 2l6-1l1 3l-2 5l-3 1l-4 6l-7 2l-1 4l-3 3l-8-2l-2-3l-8-2l-2-3l6-6l-3-5l-4-1l4-9l4-2l3 1l4-3l3 4l-4 5l0 3l3 3l4 0l4-6l-2-5l0-6l-6-2l-6-3l0-4l-2-2l-1-5l1-3l4-2l3 1l-1 4l8 2l2-2l3-5l6 0l2-7l3-4l3-1l3 4l-2 8l8-1l4 2l2-1l-1-9l2-1l2 0l4-2l3 2l0 2l2 4l5-1l4 3l3-4l4 1l3-1l5 3l9-5l5 4l5-2l-2-7l-7 1l-1-4l-6-3l-3 2l0 4l-5 3l-3-3l6-5l-1-1l-7-3l-3 4l0 5l-1 1l-4 0l-3-1l-2-6l-7 1l1-5l3-2l0-3l-5-4l0-2l-7-4l-3-1l-5 2l-2-1l-2-4l-4-2l-2 2l-2 4l4 6l0 2l3 1l3 9l-3 3l-4-3l0-4l-2-4l-10 3l1 8l2 3l0 3l-4 2l-2 2l-2 0l-2-3l2-6l-1-6l-8-2l-2 4l-3 1l-6 0l2 9l-3 3l-6-3l-4 5l-2 0l-6 5l-3-1l-2 1l-1 8l8 2l2-3l4-1l4 6l-3 2l-2 5l1 2l-1 8l-4 1l-1 5l2 2l-1 5l4 4l1 3l3 3l0 1l-7 3l-3-1l-5 0l-1-1l2-8l-1-2l-6 1l-3-2l-3 1l-5-3l-3 2l-1 5zM1198 421l14 7l3 2l5-2l3-7l8-5l-1-4l1-2l-1 0l-7-10l-4 1l-2 2l-2-1l-4 1l-1-1l-7 1l-11 9l1 1l3 0zM1223 502l1 0l6-4l-2-4l-4-1l-2 2l0 2zM1229 671l1-6l-6-1l-3-6l1-2l-5-5l-8-3l-1 6l3 3l2 4l3 0l2 7l4-1l1 4l2 1zM1219 1888l-3 0l-3 6l1 1l6 2l-1 4l4 4l7-4l-4-5l-4 0l-1-6zM1217 1876l5 3l3-8l-5-3l-4 1zM1223 1496l0-8l-5-1l-2-2l-1-1l-4 2l-3 0l-6 4l-1-4l-7 2l2 8l10 0l5 6l7-3l0-2zM1208 1851l5 2l3 4l5-1l-4-7l1-3l-5-2l-2 2zM1208 1528l5 0l4-2l1-5l-5-1l-5 4zM1208 1863l-1 6l4 3l5-2l-2-5zM1207 1941l0-1l-4-5l-1 0l-4-4l0-2l5-2l-2-6l0-5l-6-5l-8 0l-1 2l-4-1l-2-4l-5 3l0 2l-9 2l17 8zM1203 1723l-3-3l-7 2l2 4l4 2l4-4zM1171 1857l-2 1l-2 6l-7-2l-2 1l0 6l5 1l1 2l1 3l7 1l1-6l-1-2l3-5l6 2l2-1l-2-4l6-3l7 2l1-1l3 0l5-7l-6-3l-2-2l-4-1l-1-7l-7-1l-1 2l-4 1l-3 3l5 6l-1 7l-6 2zM1202 505l-4-1l-5-7l-10 11l7 4l2-1l5 2l5-6zM1198 611l-1-1l-6 1l-2 6l6 4l3-2zM1174 555l7 6l2-3l5-1l4 0l4 4l1 0l1-5l-1-5l-10-4l-3 1l-5-1l-1-5l-2 0l-5 4l5 5zM1188 626l0 2l7 4l3-5l-4-4zM1192 1709l1-2l-2-4l-5-1l-3 5l1 2zM1180 606l7 2l1-6l-6-4zM1153 1687l-1 3l3 6l-3 5l3 4l1 3l2 2l-2 3l1 2l14 0l9-10l-1-3l2-4l-3-4l3-5l-3-3l2-5l-4-3l-3 1l-4-2l-4 2l-4-3l-2 1l-1 4l2 3l-2 3zM1181 1882l-5-5l-3 0l-3 5l2 4l4 0zM1179 496l-4-5l-2 0l-2 5l-5 3l1 4l3 4l8-3l-1-3zM1158 1650l3 2l-1 12l3 1l4-2l3 2l3-3l6-4l-1-5l-7-2l-2-2l7-6l-4-10l-8-2l-4 2l-4-1l-1-5l-8-2l-2 9l2 6l3 5l6 1zM1166 1119l-3 3l5 7l2 1l3-5zM1100 876l9 10l4-1l2 3l14 7l3-3l7 1l2-8l-6-2l0-5l3-4l1 0l4 6l-1 4l8-1l4 3l-2 5l-4 5l4 7l3-1l2 1l2 2l7 1l3-3l-3-4l1-3l5-2l0-3l-4-3l2-4l-3-5l-6-3l2-6l-3-2l-1-2l6-6l-3-3l-2-1l-2 0l-5 3l-2-3l-6-3l-2 1l-3 6l-5-1l-4 3l-4-3l-12 2l-10-7l-6 2l-1 5l-3 4l6 8zM1161 742l1 5l3 2l6-1l0-6l-5-3zM1073 827l9 0l0-5l4-5l5 1l3-3l0-3l6-3l2-5l9 9l4-3l2 1l4-2l1-3l4-2l8 1l2-3l6 4l2-1l3 3l0 3l6 2l2 3l-7 2l-1 3l-6 0l-2 3l-5-2l-2-7l0-3l-4-2l-5 1l-1 4l-5-1l-3 4l0 2l-5 4l2 11l2 1l7-4l3 4l0 4l9-1l2 3l5 1l2-3l0-6l1-2l6 4l6-1l1-1l9 2l1-6l2-1l0-7l-4-2l-3-5l2-3l-3-8l0-5l2-3l-3-4l3-4l0-3l2-2l-1-7l-2-3l-1-1l-1-6l-5-3l-4-8l3-3l3-1l0-8l5-1l-2-9l-8 2l-3 3l-2 0l-1-1l0-5l-4-3l-5 4l-4 0l-1-5l-5-1l-1-6l-3-4l-1 0l-6-8l1-1l0-4l-6-5l-4 6l-4-4l-5 3l0 6l-7 7l2 4l-1 5l-12 5l-1 4l4 6l3 0l2 5l2 2l6-4l1-3l10 1l4-1l3 6l4 1l5-1l7 6l6 0l1 7l9 3l0 4l-4 1l-2 3l0 3l-6 5l-2-1l-5 0l-1-6l-4-1l-5 2l1 7l-4 5l-5-2l-5 3l-4-2l-3 2l-5-2l-3 1l-2 5l-6 1l-4-1l-5 6l-4 0l-2 5l-3 1l1 6l-5 1l-1 2l2 3l3 3l1 4l4 4l3-2zM1034 1796l14 7l1 4l2 1l2 10l4 4l-3 7l-1 0l-4 6l1 5l2 0l7 7l3 4l4 1l3 2l7-4l0-4l-6-3l-3-5l-6-1l-1-3l9-3l1-5l4-1l4 3l3-1l2-3l-1-4l2-4l-3-5l2-3l6 2l0 3l2 3l5 0l3 4l5 1l5-7l9-1l1 6l6 0l3 3l10-8l5 2l1 3l3 3l5 1l5-1l1 1l4 1l5-5l-1-2l-8-2l5-7l-1-2l-7-1l-1-4l-2-2l-4 4l-1 5l-4-1l-1-5l-3-2l-2 1l-4-1l-2-3l4-5l-3-4l-4-1l-2-2l-2 0l-2-6l-5-3l-4 6l5 9l-2 6l0 2l-6 3l2 5l-3 4l-5-6l-3 0l-2-3l3-3l-2-5l-3-1l-3 2l0 5l-2 3l-5-3l0-1l-5-4l3-5l-6-3l0-3l-2-5l-2 0l-3 4l-3 0l-3 4l-3-4l-5 1l-2 3l-5-1l-1-7l-7-2l-4 5l3 3l0 4l-7 0zM1066 1787l3 3l0 5l-7 7l-4 0l-6-3l0-4l6-4l3 1zM1156 619l5-2l2-5l-1-3l-8 0l-2 2zM1153 590l-6 4l1 6l5 1l3-4zM1153 1883l-4-4l-4 3l-3-1l-1 1l-2 7l3 2l1 3l6 2l3-6l-2-3zM1129 1828l-5-2l-3 2l0 2l-3 3l1 4l-1 2l3 7l2 0l3 3l4 1l5-4l2 1l7-2l8-1l-2-5l-5-1l-1-5l-2-3l-5 3l-3-1l-4 0zM1141 1128l8-4l1-3l-6-6l-4 0l-3 2l-1 3l-7 3l0 5l7-1l2-1zM1107 1669l1-3l7 2l-1 8l9 0l1 2l2 5l-2 2l0 4l5 4l1 2l7-2l2-8l1-1l4 1l6-5l-2-3l-9 0l4-6l-1-5l-3-2l-2 0l-5-3l-3-7l-7 7l-2-6l-5 0l0-5l-5-2l-2 4l-6-2l-3 4l0 2l-3 4l-3 1l0 6l-5 4l4 6l6 1l5-1l0-5zM1112 1659l-4 5l-3-2l-1-4l4-3zM1114 612l3 2l4-3l7 0l4-2l2-3l3 0l4 3l2-2l2-6l-3-2l-1-5l-3-2l-4 1l-3-3l-2 1l1 9l-19 7zM1124 1712l5 2l0 1l9 0l2-2l-5-5l-4 1l-2-4l1-5l-10 1l1 5l3 1zM1079 1897l1-3l5-2l2 4l-3 5l8 3l3-4l8 7l-2 5l-5 0l7 1l15 10l-6-5l1-4l-2-5l4-2l3 1l1 7l11-1l5 5l4-4l-2-7l-2-1l2-7l-3-2l-4-1l-2 3l-5 0l-2 3l-5-3l1-4l-3-1l-4 1l-4-4l1-2l3-2l-1-4l6-7l0-5l-9-2l-3 4l-5-4l-6 1l-1-1l5-9l-1-2l-9 3l-2 1l-10-2l-2 2l2 10l-6 6l-6 0l-4 6l1 2l-2 4l4 6l6 1l3-2l1-2zM1083 1876l-3-1l3-6l3-1l2 1zM1085 1888l-6-3l4-4l4 4zM1120 1863l3 8l-4 6l2 6l3 0l5-5l5-1l4-3l0-5l-2-4l-4-3l-2-2l-6 1zM1131 901l-2-4l-8 2l-2-2l-6 6l2 3l7-4l4 3zM1130 1133l-1-3l-6-1l-3 6l3 4zM1116 402l2-1l1-3l-6 0zM1098 1732l4 4l7-1l0-2l-2-6l-4-1l-4 4zM1102 1183l6 0l1-4l-5-3l2-8l-2-2l0-5l-7-3l-1 2l0 6l-5 5l4 7l6 1zM1096 1789l6-3l0-4l6-1l0-6l-7-1l-3-4l-3 1l-3-1l-3 1l0 5l1 4l-3 4l0 5l8-1zM1104 1859l1 0l2-6l-5-4l-3 2l-7-5l-2 5l-5 2l1 2l9 3l3-2zM1095 1726l8-13l0-4l-10-4l-4 1l1 6l1 1l0 5l-2 2l0 5zM1073 1548l7-4l1-2l6-2l0-5l-2-4l3-5l10 2l-5 6l2 3l5 2l2-1l1-5l-4-5l3-4l0-2l-8-2l-3-1l-3 4l-6-5l-5 0l-6 14l-3 1l-5 5l2 2l-3 6l3 3l7-2zM1093 1689l8-1l0-3l-3-3l-5 2zM1082 765l-5 2l1 7l3 1l1 3l2 2l4-2l4 2l4-3l-1-2l4-6l0-3l-4-4l-3-8l-3-1l-5 2zM1062 1580l1 4l3 3l-6 6l0 3l12 2l4-4l6 4l4-4l0-3l5-3l5 1l0-6l2-2l0-5l-2-1l-2 0l-1 2l-9 3l-3 5l-5-2l-3 0l-2-3l-3-2zM1012 720l-4 8l4 4l2 2l7 1l3-5l5-1l0-6l5 0l2 2l3-1l4 2l-4 6l3 4l2 2l0 5l5 2l3 3l4-2l4 1l3-2l3-9l-2-2l2-6l-2-6l2-7l-1-3l4-4l1-2l2-2l0-5l2-3l-1-3l1-4l6 2l2-1l2-5l-2-5l1-2l-13-8l-13 3l3 14l-3 20l-14 0l-10-10l1-4l-4-1l-2 1l0 8l-3 4l3 5l-5 4l-4-3l-3 0l-3-3l-11 5l0 4l1 1l6 0zM1087 654l0-7l0-1l-2 9zM982 802l5 0l4 5l2-2l4 1l3 4l9 3l4 4l3 6l5 0l2 1l0 3l5 4l-1 1l-5 2l0 7l2 1l4-2l6 2l7 0l1 2l-4 5l1 4l3 2l2 6l6-3l2 1l-1 7l5 1l1 5l2 2l5 0l2 3l2 1l6 0l5-7l-1-2l3-2l7 0l1-1l0-4l4-8l-2-2l-1-6l0-3l-1-3l-5-5l-5 1l-2-2l-7-1l-10 6l-2-1l-4 2l1 7l-6 0l3-5l2-2l-3-5l5-6l-1-1l-6-6l3-9l-4-4l0-5l-3-7l-4-2l0-2l-2-2l1-4l-3-7l5-6l5 2l3-2l-3-6l-1-1l1-11l2-2l-7-5l-4 3l-8-1l-3 2l0 4l-4 3l0 4l-3 2l0 7l-4 1l-3-2l-5 3l-1 3l-4 2l-9-3l-6 0l-4 6l-2-1l-3 1l-2-1l-7 2l0 6l6 1l1 5l2 1zM1049 956l4 5l6-3l1 1l11-1l1-2l6-3l2-4l-2-7l5-5l4-1l5-4l0-3l-2-2l-1-6l3-3l-2-5l2-4l-3-3l2-3l-4-5l-3 0l-3 2l0 3l2 4l-2 3l-3-3l-1-2l-3 0l-2 1l-2 3l4 5l-7 1l-3 3l-3 0l-2 8l-6 6l1 3l-3 1l0 5l-6 2l4 5l3 0l1 3zM1067 936l4-2l0 6l-6 1zM1080 1559l3-2l2-4l-3-3l-8-1l-1 3l6 7zM1085 1695l-1-5l-4-2l0-4l-3-3l0-6l-8 4l1 5l-2 2l-1 10l7 0l2-2l5 3zM1011 1716l6-2l0-2l3-4l5 1l3-2l3 0l4-2l0-2l4-4l2 0l1-4l5-2l0-2l4-4l4 5l6-5l2-8l4-1l5-13l-1-1l-5-2l-1-2l6-3l-1-3l3-4l6 3l3-1l0-5l1-2l-1-10l-2-1l-8 2l0 4l-10 1l4 6l-2 4l-4-1l0-2l-5-4l-4 1l0 7l4 1l0 2l-2 6l-2 2l-7-1l-2-7l-5-5l-5 5l8 8l-5 8l2 3l-2 4l-4 5l-4-1l-4 5l-2 1l-4 3l0 4l-4 1l-10 11l-3 5l1 3l6-1zM1054 1676l2 7l-5 2l-3-4l1-3zM1059 1765l5 7l2 1l2-2l1-9l-1-3l3-4l5 2l2 0l-4-11l-6-6l-8-3l-4 2l1 5l3 2l0 4l-5 3l1 4l3 2zM1067 1935l2-5l-2-6l-2-1l-6 2l-5-1l-5 3l3 5l-1 5l-9 2l-1-1l-8 3l0 5l-5 3l15-2zM1066 1173l9-7l-2-4l4-6l-2-3l-2-1l-6 1l1 7l-2 2l-5 3l3 7zM1069 1619l-11 2l0 6l3 3l2 1l2 4l7 0l1-7l-1-1l1-2zM1055 1901l-1 6l6 4l4-3l-2-5l-4-3zM1047 1711l5 0l10-7l0-1l-3-3l2-6l-6-2l-1 2l0 5l-3 2l-5 0l-4 5zM1046 1735l3-3l-1-6l-3-6l-7 3l-1 3l-4 2l0 3l6 4l3-3zM873 873l4-1l-14-1l3 2l5-1zM896 870l6 8l1 1l-3 6l1 3l-4 4l0 5l7 8l8-8l6-2l5 3l-1 3l-3 5l2 1l6 3l0 4l2 3l6 2l3-4l2 0l1 6l0 2l3 4l4 1l-1 6l-13-4l-4 4l-3 1l-2-2l-3 2l-6 1l-4-3l2-4l-4-5l2-3l-2-11l-6-2l-2 4l-6 3l0 3l4 4l-4 7l0 9l3 1l3 4l8 5l2-1l1-4l4-1l3 0l0 5l2 3l-5 3l-5-5l-1 7l-6 0l-1-2l-3-1l-3 2l-2 5l-5-3l-4 5l0 4l-2 0l-7-1l-3 0l-12 14l6 3l3-4l7 1l6 2l6-7l3 1l3 4l-2 6l-2 5l-3 3l0 2l-4 4l2 10l3 1l-1 7l5 0l2 5l5 1l0 4l2 5l4 3l6-4l5-2l6 4l5-3l3 7l4 0l3-2l-1-7l4-2l1-3l5-2l-1-4l3-3l1-3l-3-1l-2-5l4-2l0-6l4-2l3 4l-2 5l-1 1l-1 5l3 2l7-4l1 3l7 3l4 5l5-1l1-4l5-4l-4-6l-4 0l-2-5l1-2l7 0l0-5l4-3l0-2l1-2l1-5l-6 1l-3-6l-5 8l1 2l-8 6l-11-2l-3 2l-5-3l-4 2l2 6l-6 2l-3-2l-3 2l-1 4l6 4l-5 10l-1 1l-3 6l-2 0l-4-7l-8 1l-3-6l2-5l5-5l0-4l-4-6l-4 0l2-7l-8 2l-4-4l2-8l4-4l7 4l3-4l9-4l7 0l3 2l6-4l4-4l3-1l5 5l3-1l2-3l7 0l5 6l4 0l4 8l5-1l1-2l6-8l0-2l-3-1l-4 1l-11-3l-6 2l0-2l4-6l-5-4l8-2l2-2l1-6l4-1l1-1l1-5l4-1l2-3l5 3l4-3l3 2l-1 5l6 3l0 4l4 4l0 4l1 2l9-2l-3-5l4-4l3-7l5-2l-1-6l3-1l2-5l-2-3l2-2l7 0l0-2l-2-4l3-6l-4-2l1-6l1 0l1-6l3-2l-3-8l5-7l0-2l-5-3l-3 0l-5 4l-4 0l-2 2l-7-6l-2 5l-6 2l-1-1l-5 2l-2 4l-2 2l-2-2l2-10l9 2l2-5l-2-11l8-1l-2-6l1-5l-4-2l-8 3l-3 4l-4-1l-3-2l-5 5l-4-2l1-4l-4-5l-3 8l-4-3l-1-5l-1 0l-7 7l-3-3l3-8l-5-3l7-6l1-1l-4-4l-2-5l-7 2l-2-2l0-4l4-2l0-4l-3-5l1-3l3 0l3-6l-5-4l0-5l-12-3l-3 1l-4-1l1-7l-4-6l4-2l-5-7l-3 5l-3 0l-1 1l-2 5l3 3l-2 3l-3 6l-4-1l-4 5l2 7l-2 2l-3-1l-14 22l-3 34l-8 21zM1025 921l-4 0l-2-5l4-2l1-2l-6-3l3-5l5-4l3-1l4-4l3 5l-1 3l1 3l-9 3l2 5zM906 822l-1-5l4-3l4 2l9-2l4 4l4-1l4 4l0 3l3 4l-6 4l-1 5l-5-1l-3 2l-6 1l-3 7l-1-1l-3-9l-4-3l0-4l-3-3zM906 865l4-5l6 3l1 6l7 13l-3 2l-7 2l-1-6l-6-2l1-6l-3-4zM1027 1882l7 6l5-2l3 0l2-2l4-2l1-2l-3-5l-7-10l-5-1l-3 4l-2 1l-2 4l-6 1l-1 5l2 2zM1029 976l1-1l6-1l0-6l6 1l3-3l-1-4l-4-3l-5 3l-4-1l-1-2l0-3l-5-3l-6 3l-3 6l1 3l1 6l3 2l2 4zM1043 1766l-7 0l-1 4l-2 1l-2 4l2 4l6-4l4 1l1-2l-1-3zM959 1924l1 15l-3 0l-5-2l-4 5l5 11l5-2l0-3l4-4l-1-4l8 0l4-3l2 8l-3 3l-1 2l-7 1l-2 2l1 4l5 1l3 2l5 0l2-2l6 2l12-4l1-4l-2-1l-5 1l-4-7l-3-1l-1-11l3-1l-3-6l1-1l-5-5l-2 0l0-6l3-2l6 5l4-4l1-4l4-1l-1-7l2-2l5 4l4-2l2 4l-3 3l1 5l3 4l4 2l-4 4l-3-1l-2 5l3 5l1 0l6 6l3-4l-4-6l4-3l4 1l5-3l4 3l5-1l-1-6l-6-2l-1-7l5-2l10 1l1-1l-1-7l-10-2l-1-5l-7 2l-4-3l-4 2l-6 0l-1-2l2-7l-2-1l-2-3l-7-1l-5 3l-3-2l-8 8l1 5l-4 2l-3-1l-5 6l-2 0l-4 6l-5-4l-9 4l-3 9l4 3l2-1zM964 1918l-2-4l3-5l5 2l2 2l-3 4l4 5l0 2l-4 1l-6-5zM1039 1822l-6-3l0-2l-3-5l4-4l-7-6l-3 4l1 7l4 8l0 4l4 2l6-4zM961 655l3 2l2-3zM966 654l12 1l2-3zM997 652l6-1l2 3l6 0l7-2l1-2l-24 0zM940 661l4 3l5-7l-13 3zM1020 683l4 2l3 0l4-6l4-1l-1-9l-2-3l-5 1l-5-1l-5 7l0 5l2 2zM1008 1747l6-2l3 1l3-1l2 2l0 5l4 2l3-6l1-3l-2-5l4-3l0-4l-9-2l-1 1l4 7l-5 2l-3-5l1-3l-1-2l-5-1l-6 2l0 4l-8 1l-2 2l0 2l5 3l4 0zM1028 739l-6 0l-2 5l1 4l6-1zM1020 1208l-4 4l3 6l2 1l5-5l-2-5zM1004 1842l5 2l0 7l3 1l3-2l7 2l2-1l1-4l-4-3l0-5l-6-1l2-5l3-2l-4-7l1-2l-5-3l-3 1l0 6l-3 1l-1 6l1 3l-2 3zM964 1807l-4 2l-2 5l4 4l-2 3l1 6l2 1l7-1l3-3l0-1l-5-5l3-4l7-7l3-10l5-2l0-6l1-2l4 1l0 8l6 10l2-1l7-10l-1-4l3-3l-4-6l2-3l2-1l4 4l5-1l1-12l3-4l-3-4l-3-1l-4 3l-3-1l0-2l-3-3l-6 4l0 2l-16-1l-6 4l-15 36zM1019 1801l-4-7l-6 2l2 5l-4 4l3 8l6-1l-1-5l1-3zM993 1197l0 6l-2 5l3 5l5 3l3-1l5-3l4-6l-3-8l-2-2l0-4l4-3l1-3l-4-5l1-10l-2-1l-6 3l1 4l-3 3l1 3l-4 3l4 6zM1004 1945l-3 5l5 3l4-3l-1-3zM981 1162l8 3l1 1l6-2l9 4l4-7l-4-3l-1-2l1-2l4-2l0-3l-6-5l-3 2l3 7l-8-3l0-2l-6-3l-1-7l-5 1l-2 2l-4-1l-3-3l-3 0l-1 1l-1 9l3 3l5 3l-1 6zM1008 1359l-3-5l-5 4l0 5l5 1zM1001 1820l-4-3l-7 2l-1 6l4 4l8-3zM992 1040l-2 5l6 3l2-1l-1-6l4-3l-11-4zM991 1853l0 5l4 5l2 1l4-3l-1-8l-7-2zM986 1612l-3 3l1 5l3 3l9 0l1-7l-4-3zM989 1541l5 0l3-4l0-2l-8-3l-1 2l-1 4zM951 739l4 3l-1 7l2 8l6-4l7 4l3-5l3 0l2-4l5-3l5 2l5-3l2-2l1-6l-9-7l2-2l0-4l4-2l-1-5l2-5l-8-3l-1 0l-3 2l-1 5l-4 2l0 3l-5 3l-4 0l-3 8l-4 3l-6-2zM958 1230l10 3l1-2l5-4l0-4l3-4l0-4l5-4l-3-5l-4 3l-5-3l-3 4l-7 0l0 4l2 5l-6 3l3 5zM969 1188l-8 4l1 4l2 1l3 8l3 1l9-3l1-4l2-2l0-7l-4-2zM969 1065l0 8l4 1l5-7l-1-1l-5-1zM944 1889l2 1l1 6l3 2l5-5l1-3l5-2l0-6l-4-2l0-2l5-8l6-1l1-9l6-3l0-6l-1-2l-6-1l-3 1l-2 3l-7 1l4 7l-1 3l-3 0l-3-3l-3-1l-1-3l-4 1l-3 34zM970 1881l-4 5l2 7l4-2l1-8zM972 1264l-6-1l-4 2l0 4l4 4l4 0zM951 1102l4 8l4 0l1 1l6 0l1-2l0-5l-2-2l-3 1l-2-4l3-3l4 1l2-2l1-3l-3-3l-1-5l-5-1l-3 1l-1 2l0 5l-3 2l-3 5zM969 695l-4-7l-5-4l-4 0l0 2l2 4l-2 5l4 2l0 6l2 1l4 0l3-7zM958 1613l0-3l-2-4l-6 3l0 4l6 2zM956 1827l-3-3l-4 10l2 0l4-2zM940 709l-2 2l0 6l2 2l5 0l3 2l3-5l-2-5l-1-1zM949 1244l0-4l-6-2l-3 5l4 3zM915 1237l0 2l6 3l-1 5l1 1l0 5l6 0l1-1l8 0l0-6l-4-2l0-2l4-6l5-1l-1-8l-3-1l-4-8l-3 1l-2 7l-3 0l-3-4l-17 1l-3 2l4 7l5 1zM939 1139l2-6l-1-3l-4-2l-3 3l0 4zM938 1261l-5-4l-4 2l1 5l3 3zM899 1064l3 2l1 5l-3 4l-6 2l-4 3l1 5l9-1l7 4l4-8l8 0l3-3l9 4l3-1l1-8l-7-2l0-7l-5 0l-4 4l-4-4l2-4l-4-4l1-3l-2-4l-7 0l1 3l-3 5l-3-3l-5 2l0 2zM928 1102l2-4l-4-5l-3 5l0 4zM915 1148l3-3l4 1l1 7l2 1l2-1l3-4l-5-5l2-5l-6-1l-1-3l-8-2l5-6l-2-3l-5-1l-10 10l7 6l-1 2l6 2zM922 754l2-6l2-1l2-9l-7-4l0-1l-5-4l1 1l0 23zM914 1109l3 6l6-1l3-4l-4-6l-7-4l-2 3zM919 1092l7 0l-3-7l-4 0l-3 2l-1 3zM920 1438l-2 1l-1 7l4 3l4-3l-2-6zM910 1302l1 5l-2 3l2 3l6 1l0-8l2-2l-1-3l-1 0zM908 679l0-5l4-4l-9 7l-1 3l2 1zM857 1541l4 1l0 3l4 6l-4 3l-4-5l-3 1l-5-1l-2 5l1 3l-5 5l-5 2l-1 5l-2 1l2 7l1 1l0 4l4 4l0 3l5 3l-1 3l-3 0l-2 7l0 3l7 4l1-7l2-1l2 3l7 1l-2-9l3-1l4 4l5-1l2 5l-8 8l0 2l3 3l4 0l3 3l3 1l20-10l5 1l0-3l-3-4l-5-3l2-4l-1-2l4-6l-2-2l-2-4l1-2l7 0l7-9l-2-3l-3-2l2-7l6-1l1-1l-1-3l-5-4l2-4l0-2l-4-4l-5 4l1 5l-5 2l-2 5l5 2l1 5l3 3l-5 5l-7-4l-1 7l-4 1l-1 2l3 5l-3 5l-7 1l-7-3l-4 3l-3 0l-1-8l-5 0l-1 5l-6-6l0-3l-3-5l3-4l1-6l7 7l3 1l7-2l2-2l2-2l-1-7l4-1l3-4l2 0l6-2l0-4l2-3l0-2l-2-3l-1-3l-2-1l-5 0l-2-2l0-3l5 0l4-6l-3-6l-5-3l-4 2l-4-1l-3 1l-3 5l0 5l-5 4l-4 2zM909 1610l4-5l-1-3l-2-1l-6 3l-2 4zM901 718l-2-9l-1-1l2 11zM886 950l0-2l2-3l7 1l0-8l-6-2l-3 0l-3 0l-3 2zM849 1047l0 3l-3 2l1 5l2 2l4-1l3 3l0 2l13 6l2-1l2-7l2-2l3 1l7-2l2-6l0-3l2-3l-2-5l-5-1l-2-4l-7-2l-2 1l-5-7l-4 2l-3 5l-5-4l-4 3l0 6l2 2zM874 1445l-6 6l3 3l7-2l-1-8l-1 0zM876 930l-3-5l-4-8l3-3l2-8l-3-3l-3 1l-2 0l-1-7l-3-1l1-5l-7-3l-2-9l3-4l0-5l-4 0l-4 23l4 20l17 7l6 11zM867 1127l-2-2l-7 4l0 3l5 3l0 3l5 3l5-3l-1-4l-4-2zM870 1321l0-4l-5-3l-4 2l-3-3l-8 1l4 6l2 1l1 6l-2 2l2 4l4 1l4-6l0-5zM863 1268l5-2l-3-7l-2 0l-4 4l-2 0l-3 2l1 6l3 2l4-2zM840 1208l-4 5l0 1l-3 4l2 6l-4 5l3 5l2 0l4-5l7 2l8-11l5-1l1-2l-5-7l-5 4l-2 0l-1-7l-1-1l-4 4zM843 1125l4-3l4 3l4-3l0-3l-3-3l1-6l-5-2l-4 3l0 3l-5 3l0 3zM850 1309l1-1l-6-5l-2 0l-2 1l-1 4l2 3zM823 1035l-1 6l2 2l6-1l2-6l2 1l5 3l5-2l3-7l-3-6l4-5l-1-2l-22 14zM831 1093l8-3l4 0l1-6l-3-4l-2 0l-3-5l-5-4l1-6l-4-3l-6 5l3 5l3 0l-1 6l2 2l0 4l-5 1l-2 3l2 4zM826 1542l2 5l6-1l0-5l3 0l2-3l-1-5l-5-2l-2 4l-7-3l-2 2l1 4l-7 1l3 7zM837 1600l-1-4l-3-3l-8 0l5-7l-3-4l-5 4l-2 0l10 14l5 2zM831 1333l-5-2l-4 1l2 9l7-1zM804 1205l-1 4l4 3l4 6l3-2l3 0l1 6l4 2l2-2l1-3l-4-7l0-2l-5-6l1-8l-5 0l-2 2l-1 5zM820 1570l0-4l2-3l-3-7l-2 0l-3 2l-4 0l0 12l6 1zM817 1300l-8 3l2 7l3 2l4-5zM814 1051l1-1l-4-8l-4 10zM805 1347l3 0l3-3l0-1l4-4l0-4l-6-10l-5 3l-3-3l-6 1l-1 1l-3 2l-2 4l3 6l6 3l2 0zM807 1469l-1-2l-4-3l-6 5l6 3zM776 1109l-4 2l1 7l-1 3l-2 8l-2 5l1 3l0 3l3 2l1 5l-5 7l1 1l7-2l-3 6l-2 2l3 5l-1 2l5 8l5-4l6-1l-7-18l-3-2l-1-3l5-7l-3-3l2-9l3-1l8 0l0-6l3-2l-2-10l2-2l-1-4l4-4l-1-3l-1-2l-5 2l-3-1l-1 1l-3 7l2 5l-1 1l-6 1zM795 1284l3-6l-5-3l0-3l-2-3l-5 2l-4-3l-3 3l1 6l5 2l3 6zM774 1092l4-6l3-2l5 5l3 1l3-2l-1-5l1-4l-5-2l1-3l-5-6l-4 3l-3-2l-4 0l0 8l-6 1l0 7l3 2l2 4zM779 1238l-6 6l0 4l4 2l6-4l-1-5zM768 1257l-5 4l1 6l8-3l0-6z" fill="#d6e5c4"/>
<path d="M1926 1230l-3-4l-4 2zM1924 1115l-1-5l-6-1l-2 8l6 2zM1918 1197l-6-4l-3 3l-8 0l3 7l2 2l8 0zM1890 1059l6-1l5 4l5-5l3-10l-4-1l-2-4l-3-2l-4 2l-3-1l-2 1l-1 5l2 3l-3 4zM1894 1165l-6 0l3 7l-4 5l8 1l3 2l3-6l-2-5l-2 0zM1877 1122l1 1l8 0l5-4l1-3l-8-7l4-12l-5-3l-3 2l-2-1l-5-6l-5 3l0 4l4 3l1 3l-3 5l3 7l3 1zM1858 1151l2 1l13 0l4-3l0-7l-5-1l-1-8l-5 0l-2 3l2 6l4 0l-3 6l-6-5l-2 4zM1857 915l3 2l5-2l3 3l4-1l2-4l-2-3l-6 1l-2-5l-6 2zM1870 861l1-3l-2-4l-5-1l-4-3l-2 0l-4 4l2 6l-3 2l-2 4l6 3l4-3l6 1zM1853 1194l2 0l5-4l-3-7l-2-1l-5 6l0 2zM1832 1003l1 6l2 2l3 11l10-2l1-3l1-1l3-6l1-1l4-7l-5-2l-4-5l0-5l1-3l-3-6l-7 5l-2 4l1 5l-2 6zM1855 1108l3-7l-1-3l-11-5l-4 3l1 3l-4 5l2 3l7 0l1 2zM1853 1224l-1-3l-8 2l-3-6l-7 4l1 6l6 2l2-1l1 1zM1851 1085l-4-4l-4 4l1 4l3 2l2-1zM1840 867l4 8l6-6l0-2l-6-3zM1829 752l4 2l5-7l3-14l-3-6l-7 0l-4 5l-5 3l1 4l5 2l-2 8zM1837 1163l-3 2l1 5l4 1l4-6zM1833 1205l4-5l-1-3l1-2l-4-5l4-2l1-3l4-2l-1-5l-7-7l-3 2l3 6l-1 2l-4 3l0 4l-3 5l2 4l-1 3zM1822 1099l6 5l-2 3l-6 2l2 6l3 2l6-1l0-4l5-8l-1-7l4-3l0-3l-2-2l-1-1l-3-6l-5 0l4 14l-3 0l-1-1l-6 2zM1829 1135l4-3l3-5l-6-2l-5 5zM1830 911l0-1l-2-6l-4-2l-2-5l-5 0l-2 4l3 8l2 2zM1829 930l0-1l-7-1l2-5l-5-4l-2 1l-2 5l1 3l3 2l0 2l-3 4l2 6l5-3l4 1l2-2l-3-4zM1817 697l6 5l1 0l3-6l-1-4l-3-2l-6 5zM1819 1241l5-1l0-6l-3-1l-6 3l-4 4l0 4l4 2l4-2zM1819 732l-6-4l-3 1l-2 7l8 1l4-4zM1816 774l-8-1l-1 5l5 4l5-4zM1810 1155l6-1l0-5l-4-3l-2 0l-4 7zM1808 1047l-1 5l-2 2l2 5l3 0l5-7l-4-7zM1802 1251l1 1l6-3zM1803 633l6-4l0-6l-7 2l0 6zM1805 748l-8 5l0 1l7 2l5-2l-1-5zM1786 1080l-3 9l3 3l3 0l7-6l7 0l1-7l3-1l0-4l-3-3l1-3l-4-4l2-4l-4-4l-7 3l1 4l-2 3l0 5l-1 1l3 4l-2 4zM1800 913l1-4l2-1l-2-8l-2 0l-2 3l-5 0l-2 4l2 1l4 9zM1784 885l2-5l7 1l2-1l1-7l-7-8l-11 7l0 5l-2 2l4 8zM1764 1237l-7 2l-2 7l9-2l1-2l6 3l3-2l0-4l6-3l3 4l4 0l5-7l-4-5l1-1l-2-5l-11-2l0-6l-1-1l-6 2l-2-1l-6 4l1 6l-1 7l3 4zM1780 923l-2 3l4 6l6-3l0-5l-3-3zM1773 911l6 0l2-4l-3-4l-5 3zM1762 647l10 4l2-3l4-8l-8-3l-1 5l-7 2l-1 1l-7 0l-2 5l3 3l4 0zM1767 1165l2 8l4 0l3-3l0-1l-6-5zM1770 1268l-3-9l-13-1l1 5l5 5l2 3l1 1zM1752 592l3 0l3-5l5 2l5-4l-3-7l-4 2l-3-2l-3-7l-5 3l-2 6l0 5zM1760 1279l-10-4l-2 2l-1 7l2 1l1 3zM1757 1216l2-7l-2-3l-7 2l1 6l4 2zM1737 1251l4-6l0-5l8 2l0-7l-6 0l-3 4l-3-2l-6 2l-5 5l4 7l3 2zM1736 625l4-3l-1-5l-8 1l0 5zM1724 543l3 4l-3 3l-1 5l2 2l4-2l1-7l3-1l2-5l-6-4zM1714 574l0 2l-4 3l-2 7l7 0l2-1l5 5l5-5l0-3l3-3l-3-6l7-2l-6-8l-3 3l-4 0l-4 2zM1727 1220l3-6l-1-3l-4-3l-4 5l4 8zM1719 606l1 4l9 1l1-1l-2-3l-5-3zM1728 617l-1-2l-7 0l-2 6l2 2l6 0zM1718 1269l-9 4l0 2l3 2l9 1l-3 6l2 2l7-1l-2-8l-2 0l-3-7zM1716 470l-8 6l3 3l4-1l3-5zM1712 594l-6 4l0 5l3 2l7-2l0-3zM1707 1113l5-5l-4-6l-1 0l-2 3l-5-1l-4 1l2 6l7-1zM1700 1159l1 5l9 2l0-4l-5-7zM1689 510l2 2l5-2l2 3l10-2l-2-5l1-3l-1-3l-5-1l-4 5l-4-4l-6 3zM1693 537l1 5l1 1l11 0l0-2zM1696 1217l-1 3l5 4l4-1l0-4l-5-3zM1703 1246l-2-1l-6 0l-2 5l4 5zM1676 1258l-6 1l-1 4l-1 2l2 9l5-2l2-5l6 1l3-3l0-2zM1665 1236l-4 3l0 6l3 2l3-2l6 1l1-2l7 3l4-1l-1-6l1-3l-2-4l-8-1l-6 6zM1661 444l-1 6l4 1l5-1l0-4l4-2l0-5l2-1l1-3l7 1l0-5l-5-1l0-2l-7 2zM1682 1291l-4-3l-6 2l-3-1l-3 1l0 4l6 6l2-3l5 0zM1682 857l-2-3l-8 1l1 4l6 3zM1677 524l-3-1l2-7l-6-2l-4 4l1 3l4 3l-2 8l8 1l1-4zM1670 1060l5-1l1-3l-6-4l-3 4l0 3zM1665 504l-3 2l-1 4l2 2l8-2l0-1l-1-3zM1657 531l1 4l5 1l5-2l0-2l-5-4zM1653 578l3 0l4 4l5-4l2-5l-2-11l-8 4l-1-7l-2-3l-4 7l1 2l-4 7l2 5zM1665 478l-2 0l-9 3l-1 1l6 5l6-6zM1662 1269l-7 1l-1 1l2 4l6 1l2-3zM1659 518l-3-2l-4 1l-1 5l5 4l3-2zM1642 579l1-4l4-3l-3-5l-6 2l-2-4l-6 3l0 4l-3 2l0 4l9 2zM1628 1145l-1 9l5 0l2-2l-1-6l-2-2zM1540 1251l5 2l4-3l2 4l0 5l4 4l5 1l2-1l4 4l4 0l4 3l4-11l-2-1l-6 1l-4-2l-2 1l-7-3l0-7l2-1l5 1l2-3l1-2l4-4l2 1l0 6l4 1l4-1l3 1l4-6l6 1l5-3l1 1l7-3l-2-7l3-6l5-1l-2 6l4 5l6-4l0-5l5-1l1-7l-9-1l-3-3l-8 3l-3 1l-4-2l-2 2l-4-1l-5 6l3 4l5 0l0 5l-7 0l-3 2l-2-7l0-2l-9-5l-6 3l1 5l-5 2l-4-3l-3 1l1 6l-3 4l-4 1l-3-2l0-3l-4-2l-5 4l1 4l-3 3l1 5zM1591 560l7 0l0 1l-1 4l5 7l2-1l6 1l3 3l5-4l-3-6l8 2l3-8l-5-6l-3 1l-5-1l-5 0l0-5l-4-3l-6 3l-1 4l-6 1l-2 4zM1613 537l3 9l2 1l5-3l-6-10zM1620 503l-1-5l-1-2l-7 4l5 5zM1614 1358l3-5l-3-4l5-4l-2-4l-3 0l-4 1l2 7l-2 1l2 8zM1604 588l0 2l-4 3l4 6l7-4l2-3l0-3l4-3l1-6l-5-2l-4 2l0 5zM1615 996l-5-1l-3 1l-1 1l2 6l8 2zM1603 1066l-1 0l-5 7l2 3l3 2l3-2l7 4l1-2l1-7l-3-1l-4 1zM1591 526l1 3l-3 2l-3 7l-3 4l2 9l5 0l1-3l-2-5l5-1l2-5l2 0l6 6l3-3l-3-9l1-4l-2-5l5-6l-3-5l-6 2l-1 4l-5 2l3 4zM1599 1335l-4-3l-5 0l0 9l-2 3l7 3l3 4l5-5l0-2l-4-5zM1598 1315l4-6l1-4l-4-4l-4 1l-4-2l-3 4l3 11l-2 2l2 8l4 0l1-3l-2-6zM1601 625l-4-4l-5 1l-1 6l5 2zM1584 1257l1 7l5-1l1 3l8 0l0-6l-8 1l-1-3zM1591 1098l-2 9l5 1l2-6zM1587 513l8-3l1-5l-4-5l-6-2l-3 0l-4 5l4 4l0 4zM1581 595l-4 2l0 6l3 3l3-1l4-5zM1572 953l-2 4l5 4l6-4l0-2zM1580 908l0-4l-5 0l-2 4l3 6l2-1zM1573 1091l5-2l-4-6l-6 2l1 4zM1560 581l1 8l4 2l3-1l1-2l-2-8l11-6l-3-8l-2-1l-7 4l-5 5l1 6zM1570 1347l-1-7l1-4l-4-2l-2 0l-4 7l2 7zM1567 1285l-5 1l-1 6l1 3l7-2zM1549 1209l0 4l3 5l3 0l1 5l8-2l0-1l-4-3l2-6l-5-2zM1550 583l6 1l4-3l-7-9l-4 5zM1550 1334l-1 6l2 2l2 1l5-2l-1-8l-3-1zM1558 1073l-9-1l0 5l3 3l6-2zM1544 818l1 2l3 2l6-1l-2-6l-5 0zM1553 1293l-1-2l-5-2l-2 1l-1 3l3 6zM1522 547l8 1l2-6l-10 4zM1542 539l3 4l4 0l3-2l-1-7l0-4l-13 10zM1547 895l-8 3l2 4l6 3l3-1l0-2zM1530 582l4-4l4 5l-1 2l3 3l7-3l-6-10l3-4l0-3l-3-2l-2-3l-5 0l-2-1l2-5l-6-2l-3 2l4 5l-4 4l1 2l4 2l0 3l-5 5l1 3zM1529 1328l5 9l9-3l2-2l-1-3l-6-2l-1-3l1-3l7-1l-1-5l-4-2l-4 2l1-8l-7 0l-2 7l-4 0l-3 4l-1 5l5 1l4-3l2 3zM1499 1229l-5 0l-1 3l3 5l2 0l4 4l5 0l0 6l-3 1l-3 5l8 3l0 2l2 2l8 0l-1-5l-6-2l0-2l4-3l3 0l3-1l1-8l-3-1l-3-8l-3-2l-1-3l7-3l1 8l4 1l9 5l5-3l0-5l-4-2l-1-3l-4-3l1-4l-2-3l1-4l-7-2l-6 7l-7 1l-1 6l-9 2zM1530 1109l-3 6l3 4l4-6l-2-4zM1518 580l-7-6l-2 6l1 3l5 1l0 8l6-2l3-3zM1495 555l-5 1l-9 0l-7 4l1 7l3 0l4 7l3 1l3-2l3-7l4 0l2-1l3 2l5-4l7-2l-1-4l2-3l7-1l1-4l-3-1l-7 2l-9-2l4 2l1 4l-5 3l0 1l-4 2zM1518 1267l-6-2l-3 1l2 10l3 1l5-3zM1514 952l-5 4l0 2l2 5l7-2l0-4zM1513 1290l5-6l-3-2l-7 1l-1 4l4 4zM1517 1154l-4-8l-5 1l-1 2l4 6l5 0zM1513 1321l3-5l-1-3l-9 0l1 5zM1501 1177l2 1l8-7l-9-3l-3 4zM1489 1320l-4 1l-2 6l4 5l-3 4l5 7l-2 4l6 4l5-4l3 3l6 0l2-8l-4-2l0-5l-4-2l1-4l4-2l-1-4l-5-3l-1-3l-3 0zM1506 940l-6 1l0 7l5 0l3-1l0-3zM1504 1198l-3-4l-4 2l-2 2l3 6l1 0l5-4zM1491 1277l4 3l5-1l2-3l-3-5l-4-1zM1486 867l0 3l3 6l-3 3l3 5l7-1l1-1l-3-7l2-3l-3-7zM1473 1297l6 1l0 1l-6 6l3 4l5-1l2-2l4 1l3 5l6-3l-2-6l-2-1l-2 0l-9-7l1-2l6-1l2-2l1-4l-1-1l-4 0l-6 5l-2-2l0-3l-6-5l-5 4l4 6zM1495 1261l-1-3l-7-1l-1 1l-1 6l3 2l5 0zM1488 985l-5 2l-3-2l-7 5l3 6l5-1l3-3l5 2l4-5l-1-2zM1486 898l-4 5l6 3l5-3l-3-3zM1490 1177l-4 1l-4 3l0 4l0 5l8 2l1 0l0-6l-3-2zM1481 607l-1 1l-3 6l4 2l6 1l2-2l0-5l-4 0zM1458 1231l7 13l2 0l3 4l4 0l1 0l1 5l3 1l5-6l4-2l0-3l-2-5l2-3l-2-4l-4 0l-2 1l-9-5l-5 2l-4-1zM1484 1163l-1-4l-8 0l-3 13l4 5l5-3l1-3l-2-4zM1479 781l-4-3l-5-2l-5 3l0 1l4 5l-7 4l0 2l3 2l7-1l3 1l3-3zM1463 577l-9 1l-2 1l0 6l6 6l2-1l2-3l5-2zM1467 878l-4-1l-5 1l0 7l6 2l2-3zM1461 1271l-8 2l-3 6l1 2l3 3l8-6zM1461 1178l0-5l-4-2l-3 1l-3 5l3 4l6-2zM1461 899l-2-8l-4-2l-3 4l5 6zM1448 1184l1 8l5 1l3-4l-1-3l-3-3zM1455 852l-4-5l-4 0l-1 7l-3 2l0 6l8 0l2-3zM1452 816l-6-3l-7 6l0 1l4 7l3-6l5-1zM1443 1187l3-3l-1-6l-9 2l0 3zM1434 1141l3 3l3-2l4-8l-10 1l-1 3zM1443 653l-8-1l0 7l1 2l7-1l1-6zM1432 1150l-1 5l2 4l7-5l-5-5zM1434 1353l-5 0l-3 6l1 4l8 2l4-3l0-6zM1438 1028l-4 0l-3 1l-2 4l-2 2l0 4l4 5l3-2l1-4l4-1zM1414 593l16 0l-1 5l4 2l2-1l2-5l-4-5l-1-3l0-9l-11 2l1 1l0 3l-8 3l-1 5zM1417 1341l0 7l2 3l4-3l1-5l-5-3zM1412 1166l2 2l5-1l1-8l-4-2l-3 4zM1419 650l-3-2l-5 0l-1 5l5 4l5-3zM1408 1253l4-5l2-2l0-4l-1-2l-7-1l-2 1l-1 4l-6 4l0 2l2 1zM1372 510l-3 3l-3 9l3 2l-3 12l-4 2l-2 0l-4 4l1 4l-2 2l0 4l5 3l2-6l6 4l3-3l11 3l3-3l8-2l2-5l7-7l3 1l1-1l2-16l-6-3l-1 1l-4-3l-6-3l-6-1l-5 4l-1 0l-3-2zM1400 523l3 2l0 2l-2 7l-4-4l0-5zM1411 1117l-8-1l-2 3l2 3l6 1zM1408 1314l2-9l-4-2l0-4l-7-3l1-4l-3-4l-4 1l1 7l-2 0l-2 6l4 3l-1 3l6 4l3-3zM1395 948l-5 2l-1 2l1 2l-3 5l6 7l6-3l1-3l8-2l-1-4l-2-3l-7-1zM1396 900l-3 4l3 10l9-1l0-2l-4-5l0-2zM1396 1041l3 1l5-2l0-4l-4-2l-3 2zM1382 1348l-3 9l4 4l5-2l4 1l4-3l3 0l3-4l-3-4l-2 0l-3-6l-4 2l-1 6zM1383 1371l1 8l3 0l2 4l3 3l2-1l2-5l4-2l-1-2l3-7l-1-3l-4 1l-3-3zM1399 1101l-1-3l-4-2l-2 0l-3 5l-6 2l2 5l7 2l3-2zM1393 1264l-3-2l-4-2l-3 2l-6 1l3 6l7 3l5 4l6-2l1-2l-6-4zM1385 829l2 0l4-1l0-5l-4-3l-5 1l-2 1zM1354 840l5 1l3 7l-3 5l1 7l0 4l4 1l6 0l2-2l7-1l2-3l9-1l-1-11l-3-3l-3-2l-5 1l-2-3l-1-5l-3-1l-4 2l-4-1l-6-4l-5 3zM1379 1314l-2 5l6 6l4-4l-1-5l-2-2zM1386 1226l-1-1l-5 2l0 6l-3 1l-1 5l3 6l2-1l4-6l-2-3l3-3zM1379 1118l-3 5l5 5l3-1l2-7zM1380 1086l-5 1l-1 5l3 4l8-2l-2-6zM1362 1296l8-5l1 2l8-1l4-5l0-3l-5-2l-8 4l-2-2l-7 1l-1-1l1-8l-8 1l0 5l3 3l-3 6zM1366 1115l8-1l4 2l3-3l-4-7l-2 1l-4-1l-3 2l-2-3l-5-2l-2 5l-6 2l2 4l5 1l1-1zM1327 643l1 1l0 3l-2 2l1 5l5 1l3 4l6 2l1-1l5 2l5-2l1-1l8 5l4-4l2-4l6 2l3-9l-3-3l1-3l3-2l3-5l-1-2l-6-2l-2-3l4-3l0-1l-6-5l-2 1l-3-4l-4-1l-3 7l-2 2l0 4l-3 1l-5-2l-3 2l-4-1l-2 0l-2 5l-9 2zM1349 647l-4-4l2-4l10 5l1 3l-6 3l0 5l-8-1zM1365 582l4 0l2-1l-1-8l4-6l-8-7l-4 5l-6 3l1 4l8 2l-2 4zM1369 1153l-1 0l-5 6l0 2l7 2l2-4l-1-3zM1366 1316l2-1l1-5l-4-6l-2 0l-1 9l-5-5l-2 0l-3 6l6 3l4-3zM1358 1227l1 6l9 0l0-9l-2-1l-6 1zM1366 512l0-7l-5-2l-3 3l0 4l3 3zM1365 1371l-4-7l-4-1l0 8l5 2zM1353 1152l-1 3l1 4l2 0l5-2l1-4l-1-3zM1350 1259l-1 6l9 3l3-4l-2-3zM1358 1330l-8-1l-2 3l5 5l6-2zM1315 506l5-1l4-3l4 5l-1 3l6 4l-6 8l4 2l0 2l-4 5l5 5l3-2l4 1l2-2l-1-8l3-2l1-3l6-8l-1-2l-5-1l-1-3l6-1l2 3l6-2l-4-6l-9-2l-3 1l-4-3l-4 0l-2 1l-1-1l-10-2l-2 1l-2-1l-6-1l-9 3l3 7l2 1l6-1zM1344 1095l5 5l5-1l1-3l-9-4l-2 1zM1346 1224l-2 3l1 4l7-1l2-3l-1-2l-4-2zM1341 579l-3 1l-4-5l-7 4l2 3l6 3l0 1l8 2l1 0l5 4l4-1l1-5l-1-2l-7-1zM1332 1699l4 3l5-4l3-4l3 1l4-3l-2-8l2-6l-3-6l-4-2l-4 2l-9-3l-4 6l-3-1l-5 3l-1 0l-6 6l-2-1l-6 3l0 5l3 2l6-3l3 3l9 4l7-7l-3-7l0-1l7 0l2 0l0 6l-4 2l0 7zM1335 1164l-2 2l1 6l4 1l0 6l-3 2l2 8l5-1l1-3l8-1l-3-6l0-5l-5-2l-3-9zM1332 1147l-8 4l-1 2l-7-1l-2 0l0 7l4 1l4 5l12-8l3 0l4 4l3-1l2-7l-1-5l-7 1l-3-3l2-4l-3-6l2-4l-1-4l-12 0l-1 6l3 7zM1338 1295l-1 2l3 7l3 1l3-5l-5-5zM1298 827l11 4l3-6l5-2l0-8l1-1l4 3l1 2l9-2l1-2l-3-6l0-4l-4-7l-3-1l-1-3l-4-3l2-6l-7-3l0-2l8-1l3-2l2-4l7 4l2-4l8 0l1-4l-3-3l-7-1l-1-2l-8 2l-3-6l-6 7l-1 0l-2-5l-3-1l-5 3l-1 2l3 3l0 4l-2 2l1 2l4 2l-4 4l-3 0l-1 4l-5 2l-1 3l7 6l3-1l11 5l-1 6l1 2l-7 1l-3-1l-2 1l-5-2l-4 2l-1 4l-2 1l0 8zM1333 1202l-2 2l-3 7l6 1l1 6l9-2l-7-7l-2-5zM1338 1251l2-6l-2-2l3-6l-1-2l-3-2l-5 3l-5-4l-2 6l-4 3l3 5l6-1l2 1l0 4zM1336 1740l4-2l0-6l-3-1l0-7l3-2l-4-7l-2 0l-4 2l-5-8l-4 5l1 6l2 1l1 4l5 2l3 4l-2 7zM1331 1311l4-2l2-3l-3-7l-2 0l-3 6l1 4zM1326 1321l6 3l3-3l-3-9l-6 5zM1328 1639l6-1l1-5l-3-2l-7 5zM1332 1179l0-6l-7-1l0 6l-5 3l0 2l7 5l2-3l-1-5zM1326 1108l4-4l-7-2l-2 0l-1 3l1 4zM1300 521l4 3l6 1l-3 9l-3 2l0 6l8 2l2 2l11-6l-2-8l-5-2l-7-6l1-1l-2-5l-6-2l-4 3zM1081 689l-7-1l-2 5l1 3l-2 3l0 4l-2 2l-1 3l-4 4l1 3l-2 7l2 6l-2 6l3 2l9-7l3 3l7-2l2-2l3-1l2-6l-2-4l7-6l0-7l3-2l5 4l4-5l5 4l0 3l-1 2l7 8l1 0l2 3l1 6l5 2l1 5l6 0l4-4l3 2l0 5l2 2l3 0l3-3l6-2l2 7l-5 2l0 7l-3 1l-3 4l4 9l5 3l1 6l2 1l1 2l6 2l2 12l6 0l3-5l5 3l1-1l1-7l-1-7l2-5l-3-5l-2-1l-4-7l-5 5l-3-1l0-3l4-3l-1-4l-1-2l-6 1l-2-2l-1-3l4-3l5 4l6 0l3-7l-2-2l2-5l2 0l5-6l3 1l3-3l8 0l2-9l5-1l2 4l4 2l4-2l-1-6l-4-3l4-5l3 3l4-2l0-4l3-2l4 2l5-2l6 0l4 3l6-5l-2-4l5-4l-2-5l7-2l7 1l2-1l7 5l2-1l2 1l7 0l1 2l-1 5l1 4l0 2l6 5l4-2l4 4l-4 3l0 2l-2 5l3 4l-1 3l1 1l4 3l1 2l6 2l5-2l2 3l7-5l0-2l-2-1l-4-7l-6-1l0-4l-2-3l-3-1l-2-3l2-5l-5-4l3-4l-1-3l2-6l-2-5l4-4l-1-7l-2-4l-4-3l-5-10l-1-8l1-3l-4-4l0-5l-2-1l-9 6l-8 0l1 5l-3 8l-3 0l-4-2l-2-2l-7 0l0 3l-7 3l0 2l-3 2l3 7l5 1l4-3l4 2l1 3l-5 5l2 5l-7 1l-1 6l-5-3l-2 1l-5-4l-2-9l-4-2l-4 1l0 6l-3 1l-2-1l-1-4l-4 1l-2-7l-3 0l-2-4l-3-2l1-6l-4-2l1-5l-4-6l-5 1l-3-2l0-3l-6-4l6-3l0-4l-5-3l2-5l4-1l-3-6l2-5l3 7l6-2l3 2l1 2l3 3l5-2l-1-6l3-4l6-2l1 1l2 6l4 0l5 2l9-9l-2-6l-1 0l-4 2l-4-6l1-5l-3-4l-1-4l-2-2l-4 4l-6-2l-3 3l0 7l-7 1l0 5l-2 5l-5 1l-2-1l-5 2l-4-5l4-4l2-4l-11 1l3 7l-7 5l5 4l0 5l-6-2l-2 2l0 3l4 3l1 5l-2 0l-9 5l0-1l-1-5l-3-2l-4-4l-3 0l-2 5l-3 2l-4-6l1-2l0-7l-1-3l-5-1l-4 2l-1 6l-2 1l-4-3l-4 0l-2 4l-3 1l-8 0l-3 3l-3-2l-2-4l-9 3l-10 10l-7 27l0 6l-1 1l2 26l-5-3l-1 3l2 5zM1278 657l-3 1l-3-4l1-6l2 0l5 2l1 3l4 1l2 2l-2 3l-2 2zM1091 679l5-6l6 3l4-5l7 3l4 2l1 7l2 3l-3 5l-3 0l-3-4l-5-2l-9 6l0 6l-2 0l-3-1l3-5l-4-6zM1300 1122l10 1l3-3l7 4l2-4l-3-5l-5 0l-3-4l-4-3l-5 1l-2 0l-4 2l-3-4l-3 1l-3-2l-6 3l-2 8l3 4l5 1l4-6l5 8zM1319 1609l-5-3l-4 2l2 8l0 2l1 3l5 0l2-2l0-3l-2-1zM1318 1730l-2-4l-4 1l-3 3l4 5l5-2zM1313 1573l3-3l-5-7l1-5l-5-5l-1-5l-8 2l2 7l-4 2l-2 4l9 3l-1 3l3 5zM1299 1740l-3 0l-2 5l1 4l-1 2l7 3l0 4l1 1l5-3l4 3l4-3l-1-3l-1-1l-5-1l-3-2l-1-2l-2-1zM1305 639l-3 5l-1 3l2 2l8-2l-1-6zM1298 1247l-1 6l3 2l-1 6l6 1l2-6l-2-1l-1-9l-3 0zM1275 1569l3 3l-3 5l3 5l3 2l7-6l2 2l2 4l2 0l6 6l5-2l1-9l-2-2l-4 0l-3-6l-3-1l-9-3l-3-10l-7 2zM1295 1877l2 1l5 8l4-7l-4-2l1-6l-2-2l-6 1zM1282 1947l2 4l13 2l5 10l2-1l1-3l-4-8l-2-1l-3-7l-3-1l4-4l-1-5l-1-1l-1-3l-5-2l-2 1l-6 0l-1 1l-6 3l1 6l9 0l0 5zM1305 576l-1-5l-3-1l-6 3l-1 5l2 2l5 0zM1301 1178l2-1l1-7l-6-6l-1 0l-3 1l-2 7l3 1zM1290 1210l0 4l6 6l4-7l-3-4l-4-1zM1276 1298l4-4l0-2l3-3l9 5l8 0l-3-9l-3-3l0-2l-11-2l1 7l-1 1l-6-4l-1 1l-2 5l-5 0l-1 2zM1291 1717l-3 9l11-1l-1-6zM1291 1538l-4 2l-5 6l1 4l5 1l2-4l5-2l1-3l0-1zM1281 1626l7 3l2-2l0-6l3-2l1-3l-4-5l-1-2l3-2l1-5l-3-3l-6 3l-3-6l-4 1l-1 3l-3 2l-2 6l4 2l3 6l2 1l2 4zM1285 1790l7 0l1-1l-1-2l-6-6l-2-8l0-3l-4-2l-7 2l-1-1l-6 4l0 2l5 3l-1 5l5 2l0 3l3 3l4-4zM1282 1153l-3 0l-2 6l0 2l5 2l3 5l7-5l-3-5l-2 0zM1291 1735l-10-2l0 6l6 4l4-3zM1290 1801l-2-5l-3 0l-2 5l-5 1l0 7l3 2l2 0l4-2l1-2l-1-3zM1261 849l-2 3l-4 0l-1 6l6 8l-2 5l2 2l2 4l5 0l5 2l5-5l-5-4l1-2l-6-5l1-1l3-3l3 0l3 3l4-1l4 4l4-2l0-4l-2-2l2-3l0-7l-1-1l-1-3l2-4l-6-4l7-5l0-2l-6-1l-3 4l-4-2l-3 1l-7-2l-2 6l2 6l-3 3l1 5zM1250 732l3 3l1 6l2 1l5 0l5 3l4-4l1-2l3 1l3-3l4 3l3-2l-1-7l1-2l1-5l-6-1l-2-5l-3 0l-1-2l0-4l-3-3l-4 0l-1-1l1-4l-5-4l-4 8l-4-6l-5 0l0 6l-1 2l3 9l4 4l-4 6zM1272 1594l4 2l5-8l-8 0l-1 2zM1242 1753l1 1l8 0l2-7l5-2l2 1l6-2l2 3l8-3l2-3l-3-3l-6 1l-1-6l-4-1l-7 7l-5-3l-3 4l3 6l-7 0zM1278 628l-1-3l-5-2l-4 4l-7 2l-2 2l1 5l2 2l4-3l4 0zM1276 1147l-8-6l-3 0l-2 4l12 4zM1249 1581l4 3l7 0l0-1l-3-5l-4-2l3-3l4 0l4-3l6 3l1-2l-1-7l-3-1l0-2l6-4l0-4l-6 0l-8 6l-3-3l-4 1l-3-2l-4 3l0 6l-3 3l4 5l0 4l3 2zM1179 410l-3 2l-2 4l2 3l1 4l4 2l-4 7l2 3l1 7l-3 7l3 3l-4 6l6 6l0 2l2 1l5 1l2-7l6 3l2-2l-1-6l4-2l4 1l5-3l8-2l1-3l1-4l5 1l6-4l6 8l8 1l1 5l7-1l2-5l2-1l2-4l5 2l3-3l-1-6l-1-1l-3-5l-2-2l-2 1l-3-3l0-10l-1-1l-8 0l1-4l-2-4l-16 3l-1 2l1 3l-8 5l-3 7l-4 2l-2-2l-14-6l-2-9l-3 0l-1-1l-3 2zM1253 790l6 1l4-7l1-5l-2-6l-4-2l-4 3l-4-5l-1 0l-2 5l2 4l0 1l-7 0l1 8l2 1l4-5l4 3zM1258 566l-1 6l-4 1l-1 3l7 6l4-2l-2-7l2-3l-1-3zM1247 1140l3 4l6-5l-1-3l-7 0zM1235 494l0 2l5 6l4 1l9-5l-2-6l-5 0l0-4l-4-4l-4 2l0 6zM1253 1933l-2-1l-3 0l-6-1l-3 2l0 3l4 5l-1 4l3 2l6-3zM1235 1894l3 6l5 1l8-6l0-3l-8-3l5-4l-5-7l-5 6l0 4l-2 2zM1235 1806l2 2l8-1l4 1l1-8l-3-3l-5-1l-3 4l-3 1l-4-4l-7 7l1 3zM1239 515l2 0l4-5l-6-7l-4 3l-2-2l-7 0l1 7l3 1l5-2zM1211 639l4 4l4 1l7 7l9-3l4 1l6-4l-4-7l-2 1l-5-2l2-4l4-4l0-3l-5-4l-4 0l-6 3l-3-4l-6 2l-3-2l-4 1l-2-2l-4 1l-1 6l6 2l-1 3l4 4zM1225 1748l4-2l1-5l3 0l6 5l5-3l0-2l-5-2l-1-4l-3-2l-8 0l0-5l-3-2l-5 3l-5-1l-1 6l-3 0l-4 6l8 1l4 4l2 0zM1227 1539l3 7l4-2l5 4l4-4l-1-4l-7-1l-3-4zM1239 460l-2 0l-4 1l-1 5l3 4l6-2l2-1zM1233 1772l5 2l4-5l0-2l-5-1zM1239 518l-9 0l-1 6l9 0zM1224 1549l-6 4l5 6l3 2l5 0l6-4l-4-6l-5 2zM1233 1576l1-2l-1-3l-2-3l-5 2l-4-3l-5 4l0 2l5 5l-1 4l3 4l6-4l0-5zM1222 496l2-2l4 0l2-6l-3-8l-2 0l-7 5l-2-4l1-4l5-4l4-1l3-5l-6-6l-7 2l-3 11l-4 1l-1 2l0 5l-1 2l4 8l4 0l2-1zM1221 1791l1 4l8-1l0-2l-5-5zM1203 746l-5-2l-2 6l-1 0l-4-3l-3 4l-4 1l2 7l4 1l10-3l1 1l9 2l2-3l11-4l3-5l-3-4l1-4l-1-4l-10-4l-7 3l-1 6l2 4zM1198 1928l-1 3l4 5l2 0l5-7l1-8l5-2l9 2l2-1l-2-5l-2-2l-6 1l-7-4l-3 5l-4 1l-1 5l2 6zM1213 1756l-8-1l-1 8l2 1l1 6l4 0l4-1l-3-8l2-4zM1201 542l4 3l5-4l-3-4zM1157 1829l13 9l0 4l-2 2l2 6l-7 2l1 5l5 2l3-1l0-7l8 0l1-3l-5-5l3-2l3-2l1-1l0-5l-6-2l4-7l1 0l3 4l10-2l4 3l5-4l1-2l-4-6l1-3l-9-6l-5 1l-1 5l-4 3l-1-1l3-10l-4 0l-6-5l-3 3l-5-4l-4 2l-1 6l-6 7l10 3l-4 5l-4-1l-1-1l-6 1l1 6l3 2zM1204 1534l0-2l-5-3l-3-1l1-6l-3-2l-6 1l2 6l-3 2l0 4l3 2l5-2l1 2zM958 810l0 5l3 2l6-2l2 5l4 3l-9 6l6 4l-1 7l8-3l-2-5l0-1l8-1l1 1l-1 4l7 7l-1 4l4 3l6-5l3 2l5 1l3-4l7-3l3 2l-1 4l2 5l-8 2l2 11l-2 4l-6-2l-3 0l-2 11l3 3l3-2l1-4l5-2l1 1l6-2l3-4l6 5l2-2l4 0l5-4l3 0l4 2l0 2l-5 7l3 8l-3 1l-1 6l-1 1l-1 6l4 2l-3 6l2 4l-6 1l-3 3l2 3l-2 4l-3 1l1 6l-5 2l-3 7l-4 5l3 5l2 0l-1 6l7 2l6 5l3-1l1-2l4-5l0-2l5-4l-3-4l5-2l0-4l3-2l-1-3l6-6l2-7l2 0l3-3l7 0l1-2l-4-5l2-3l4 0l5-3l2-4l2 0l4 5l5-1l3 3l6-8l2 0l3 5l4 1l6-6l2 2l8-2l1 3l4 2l5-1l11 4l3-3l-5-7l-3 0l-6-4l-8-1l-2 2l-13-5l-2-4l-5 1l-4-4l0-1l-4-4l1-3l-5-8l2-3l0-5l6-2l10 7l12-2l4 3l4-3l6 0l3-6l6 3l3 3l7-3l4 3l-6 6l1 2l3 3l-2 5l6 4l4 5l13-1l2-1l5 2l3-1l5 2l2-5l4-4l0-2l-4-2l-1-3l3-2l0-5l-3-2l-5 4l-5-2l-3 4l-6 0l-1-1l2-6l-7-7l0-5l7-7l-1-2l-6 0l-3-3l2-7l-7 0l-2 1l-1 5l-8-3l-2 2l-5 1l-7-4l-1 2l0 7l-1 2l-4-1l-3-3l-8 1l-2 2l-7-3l-2-3l-2-1l-1-9l5-4l-1-3l4-3l5 1l0-4l5-1l4 2l3-4l4 1l4-4l-6-5l-4 3l-8-1l-4 3l0 3l-5 1l-1-1l-4 2l-3-3l-6-5l-2 2l-1 4l-6 3l0 3l-2 2l-6-1l-4 6l0 4l-7 0l-5-4l-3 1l-3-2l-1-5l-4-3l-2-9l-5-1l0-6l2-1l2-3l5-3l3-7l4 3l2-1l4 2l2 4l3 1l8-1l2-6l2 0l5 2l3-2l5 2l4-3l6 2l4-6l-1-6l4-2l3 1l2 6l5 0l2 1l7-5l0-4l1-2l5-2l-1-4l-4-3l-4-1l-1-6l-7-1l-7-6l-5 1l-3-1l-3-6l-6 1l-9-1l-2 3l-5 4l-1-2l-3-5l-3 0l-2 3l-6-1l-2 2l-5 2l-3-2l-3 2l-5-1l-3 2l-2-3l-5-2l-3 3l-1 4l7 5l-2 2l-2 12l2 1l2 5l-2 1l0 3l2 5l-3 2l-1 6l-4 3l0 1l5 3l2 6l0 6l4 3l-4 10l9 7l2 9l2 1l5-3l5-3l3 0l3 1l3 2l5-1l4 4l1 3l0 4l1 6l1 1l-3 8l0 3l-1 1l-6 0l-4 2l1 3l4 4l-1 2l-5 1l-4-2l-4 1l-2 0l-2-4l-4 0l-4-7l-4 0l1-8l-3-1l-6 2l-2-4l-2-2l-6 0l-1-6l-5 0l-3-6l-2 0l0-7l-2-2l1-4l2-1l-1-4l-1-2l-5 1l-3-5l-5-5l-6-3l-3 0l-2-4l-5-1l-2 1l-4-4l-5 1l-1 2l-7-1l-3 1l-4-3l0-3l-4-3l-2 1l-3 3l4 5l0 4zM1082 774l-3-1l-1-6l5-1l2-10l4-2l2 1l3 7l4 4l0 3l-4 6l1 2l-3 2l-5-2l-3 2zM1194 815l5 2l2-1l1-6l-4-5l-1-6l2-2l-2-8l-5 3l-2-1l-4 5l4 3l-1 6l3 2l2 5zM1190 573l-1 6l2 1l6-3l-1-3l4-4l-7-5l-2 8zM1190 1553l0 6l5 1l4-2l0-3l-4-3zM1191 1733l4-7l-1-4l-3-1l-3 1zM1176 1614l5 6l-1 6l-3 1l-1 3l4 5l-2 3l5 4l6-5l-3-9l2-4l-2-3l3-5l-2-2l0-9l-5-3l-3 1l0 4l4 2zM1177 1653l10-2l1-3l-5-5l-6 1l-1 8zM1177 493l4-1l5 2l2-2l-1-5l1-2l-2-4l-6 0l-5 10zM1181 1670l-3-1l-4-8l-1 0l-3 3l0 5l-2 1l0 8l5 2l4-1l5-4zM1170 1889l-5-2l0-5l-8 2l1 6l2 1l1 2l-1 6l-3 2l-6 11l3 7l3 1l6-7l4 2l4 1l4-2l1-3l5-4l-3-6l-7-7zM1157 1569l5 2l9 0l-1-6l-4-2l-2 1l-4 0l-2-4l7-2l2-8l-4-5l-4 1l-3 5l-2 6l-5 0l-4 6l-6 7l1 2l6 1l3-3l0-4l5-1zM1160 575l4 8l5-4l-2-7l-4-1l-2 2zM1158 1534l0 4l6 4l3-4l-3-10l-4-1l-4 3l-4-4l1-5l-5-4l-4 4l3 7l-1 6l8-1l2-2zM1158 1715l-1 4l3 3l6-2l0-6zM1114 1656l5 0l3 6l6-6l3 6l6 3l2 0l2 2l1 4l5 2l2-2l5 0l2-1l1-4l4-2l1-6l-7-2l0-2l4-4l-3-5l-2 0l-2 5l-5 2l-2-1l-4 2l-5-2l-7 0l-1 1l-7 1l-3-5l1-2l4 1l5-4l0-1l-7-3l-6 0l-6-1l-4 3l0 2l-2 3l-1 4l6 3l2-4l4 2zM1141 1695l-3 8l8 4l3-1l2 4l6-2l-1-4l-3-3l-5-2l-3-4l2-1l7 5l2-3l-3-6l0-3l-9 0l0 7zM1148 1745l-2 2l0 4l3 1l6 0l1-2l-2-4zM1121 1750l0 8l3 1l3 6l2 1l4-4l2 0l4-2l-3-6l-4-3zM1131 1722l4 0l3-8l-9 0l-1 6zM1084 1554l-1 3l-3 2l-1 10l4 0l4-2l3-1l0-4l4-4l-2-4l3-4l5 5l7-11l0-3l2-1l5 1l2-1l5-1l7 1l4-1l0-3l-6-3l-3 0l-2-4l4-5l0-3l-5-2l-3 2l-6 0l0 5l2 4l-4 2l-2-1l-5 2l-1 5l-1 0l-5-2l-1-2l-8 0l0 5l-6 2l-1 3l-6 4l1 2l8 1zM1119 1878l5-7l-1-2l-9 3l0 5zM1107 1775l5-2l1-7l6-3l1-5l-7-2l0-2l-3-4l-4 1l-3-2l-6 1l-1 3l1 4l-2 4l-1 2l4 3l-1 4l4 4zM1100 1806l4 0l5 7l4-6l-2-5l-10-3l-3 2zM1097 1589l3 6l6-2l1-4l4-1l1-9l-1-2l-7-2l-1 1l0 7l-1 2zM1112 1172l-7-2l-1 1l-1 5l5 4l4-1zM1091 1847l8 5l3-2l-3-9l-2-3l-6 3zM1085 1665l1 1l8-3l6-7l-1-2l-2-2l-2-6l-2-2l-3 1l-2 6l-5 3l0 2l5 4zM1073 1725l-4 1l-1 1l1 6l-2 1l-2 6l8 7l8 0l4-4l0-4l-3-2l0-6l3 0l5-6l0-5l2-2l0-5l-2-1l-7 2l0 3l-4 4l2 2l-2 6l-2 1zM1082 1824l-2 3l5 7l2 1l4-3l0-7l-1-1zM1077 1593l-6 4l1 2l7 3l2-2l6 3l4-2l-1-4l-4-4l-5 3zM1079 1875l5 2l5-8l-3-3l-4 2zM1076 1693l-2 2l-7 0l-1 2l5 6l4-2l8 4l3-1l1-4l-1-4l-2-2l-3 2zM1079 1166l2-8l-5-3l-4 7l2 4l3 1zM1075 1561l5-3l-6-6l-6 5zM1073 1529l3-8l0-1l-10 1l1 5l-6 5l0 2l8 1l2-1l1-2zM1054 1925l4 1l9-1l1 2l-1-7l2-1l-1-3l2-3l-4-6l-2 0l-4 2l-5-3l-3 2l-5 1l-2 11l2 2l4 0zM1057 1859l5 0l4 3l7 2l2-2l0-4l-6-3l-3-4l-4-1l-2-4l-8 2l-3-3l-3 1l-1 4l3 2l-3 6l6 1l3-3zM1024 1163l5 3l8-1l2 1l1 7l6 1l2 3l-2 7l-1 1l-1 5l-3 3l-6-2l-4-3l-2 1l-2 6l-1 1l-4-2l-4-7l-5-2l-2 1l-2 3l-4 2l0 5l3 3l6-1l1 4l-5 3l-1 3l7 4l4-3l3 1l2 4l4 2l4 1l3 4l1 3l6 5l1-1l1-5l-4-4l2-5l-5-3l3-4l5 1l2-2l0-4l3-1l4 5l6-3l-1-3l4-4l5 2l2-3l-1-4l3-3l0-2l-2-2l1-5l-5-5l-4 6l-4 4l-3-1l-1-5l0-2l-2-5l4 0l0-6l2-1l2 1l5-2l3-3l-1-7l-2-7l-3-2l-2 0l-2 2l-4 1l-2-2l1-4l-3-3l0-5l-2-3l-3 0l-3 6l-4-1l-5 6l-6 1l-1 7l-5 1l-1 7l2 2zM1067 935l-3 6l8 0l-1-7zM1059 1649l0 2l4 1l2 0l2-5l-4-7l3-6l-2-4l-3 0l-3 4l-3 0l-3 4l-5 3l1 2l3 3l3-1zM1061 1791l-4 6l7 4l3-3zM1061 1746l-4-3l-5 3l-3 0l-3 1l3 8l7-1l5-3zM1048 847l2 1l5-1l0-7l-2-1l-2 2zM1045 1721l3 5l4 0l3-4l-1-4l-4-1zM1034 1705l5 3l4-2l4-5l-6-3l-2 0l-5 4zM1034 665l-2 2l2 4zM1019 1831l3 4l6 0l0 5l10 0l1-2l-2-5l2-1l1-8l-1-2l-6 4l-3-2l0-3l-5-8l-6 2l0 4l-4 5zM997 997l3 4l6-1l2 10l5-1l4 5l5 1l-1 7l1 1l2 7l6 7l3-2l3-5l-4-5l4 0l4-6l-2-3l2-5l-4-4l0-4l-5-3l0-3l-3-2l-3 1l-6-1l-1-4l-7-1l-4-6l-8 2l-1-2l0-5l-8-1l-1 6l-1 2l0 2l3 3l8 1zM1028 911l0-1l9-4l-1-3l1-3l-4-6l-5 4l-2 1l-6 4l-4 6l7 3zM1024 729l-4 5l2 6l8-1l-3-6l2-4l5 2l1 0l2-7l-3-2l-6 0l0 7zM1035 1654l-6-4l-3 2l7 4zM1010 1715l0 10l1 1l2 4l4 2l1 1l5 0l3-7l4-1l1-2l-3-7l-2-2l-1-5l-5-2l-4 4l0 2zM1029 711l-4-7l-3 0l-3 7l4 4zM1015 951l-4 4l-1 3l7 5l3-7zM1004 1945l-1-2l1-3l7 0l2-2l-6-7l-2 0l-3 2l0 3l-7 1l-1 6l-4 0l-1-6l-2-1l-5 3l0 6l3 1l3 6l2 1l5-1l2 1l5-2zM1010 1875l0-2l-5-4l-8 0l-2 2l1 4l2 3l0 4l7 1l1-5zM1004 1850l-5 3l1 6l0 2l3 1l4-6l0-5zM998 1726l3 0l6-5l-2-7l-7 1l-4 7zM1005 934l1-6l-4-3l-5 3l-1 4l8 3zM931 1052l6 10l-2 1l-7 1l-1 6l7 3l-1 7l4 3l-1 6l5 1l1 2l0 4l9 3l4-5l3-3l1-6l-6-8l0-5l3-2l4 2l0 12l5 1l3-2l5 4l0 2l-4 3l-1 3l5 4l0 3l8 4l3 3l3 7l7-2l-2-7l0-5l2-4l-3-10l-2-2l-3-1l2-10l-4-3l2-6l2-1l1-5l5-1l-1-7l-4-2l4-10l-2-5l10 3l0-1l-5-7l1-2l-5-6l-2-1l-1-5l-8-2l-1 2l-3 1l-4-5l-7-2l-2-4l-7 4l-2-1l1-4l1-2l2-5l-3-5l-6 2l1 6l-5 2l2 6l3 1l-4 6l1 4l2 1l-1 4l-4 4l0 2l8 2l-3 6l4 3l-1 4l8 1l0 4l8-4l2 1l-2 5l2 3l-6 6l0 1l-7 3l1-6l-2 0l-3-8l-8-6l-4 2l-3 0l-2-5l-4 0l-5-3l-3-9l-5 6l3 2l-7 3l2 4l-6 3l0 7l4 3l3 0l2-7l1-2l3 3zM976 1066l-3 7l-3 0l-1-7zM981 1759l2 4l1 1l15 0l1-2l-2-4l-1-7l-2-1l-1-2l-4-4l4-7l-5-2l-4 3l-1 3l1 2l-2 3l4 6l-2 3zM995 1922l3-3l1-4l-2-1l-6 0l-2-2l-5 4l-5-5l-4 2l0 8l2 0l5 5l4-2l1-3zM987 722l0 4l-2 3l9 8l3-3l-1-6l2-4l-2-4l-4 0zM985 1804l4 9l-1 6l2 1l8-2l-1-11l1-2l-5-9l-6 0zM990 1883l-5-3l-7 4l1 4l4 2zM972 973l10 1l2-1l-2-5l-3-4l-3 0l-5-5l-2 7l0 5zM952 1126l-6 1l-2-5l-5-1l-2 1l-1 7l3 1l1 3l-2 5l8 4l0 5l4 1l3 6l6 0l5-2l6 6l2-8l-2-4l1-8l3 0l4-4l0-5l2-5l-12-9l-2-5l-6 0l-2 5l2 3l3 1l1 7l-6 1l-2 1zM930 1203l3 1l1 4l8 1l3 6l-2 9l-4 3l2 7l2 5l5 2l0 3l3 2l1 3l4 0l3 3l6-1l5 6l3 1l4-4l2-7l-1-2l1-8l-3-2l-2 0l-15-5l1-3l-2-5l5-2l-2-6l0-3l7 0l2-3l5 2l4-4l0-3l-9 2l-2-1l-8 0l0 6l-7 1l-3-3l1-5l-5-2l-2 1l-5-3l1-3l0-4l-4-2l-5 0l-1-1l-3 2l-2 5l-4 2l0 3l-4 1l-1 5l8 0l1-2zM969 1880l6-5l0-4l2-2l0-2l-2-3l-7 1l-2 5zM969 1945l-5 1l0 5l8 0l0-3zM953 1953l4 7l3 0l4-3l-1-5l-5-2zM940 683l4 4l5-4l4 4l-3 3l-3 1l1 7l-4 2l-3-2l-2 0l-3 3l-5 1l-1 2l4 7l14 0l1 0l7-1l2-5l3-2l0-6l-4-3l2-4l-2-5l-1-6l-5-1l0-6l2-3l-2-4l-7-1l0 1l-9 7l7 3l1 2zM954 1902l5-2l0-5l-4-3l-5 5zM940 979l3-4l5 4l2 0l3-7l3-1l1-2l-1-2l-2-1l-5-7l-3 3l-6 4l-3-2l-7 1l3 8l1 1l0 4zM951 988l0-5l-6 2l-5-2l-3 2l0 3l3 5l0 3l3 2l7-2l-2-6zM944 1285l-2-2l-7 0l1 7l3 2zM942 921l-2-6l-3-1l-3 4l1 5l2 1l4-1zM920 793l3-2l-1-5l-1-3l4-4l4 0l3-6l2-2l-3-4l-5 0l-2-4l-6-3l2 27l-3 5zM933 1269l1-3l-3-2l-6 4l2 5l3 2zM922 922l6 0l1-5l-1-3l1-3l-1-2l-7-2l-1-3l-6 0l-2 4l-3 2l2 11l8-1zM914 1101l8 4l2-3l0-4l3-4l0-3l-8 1l-3-3l-5 2l0 7zM925 821l2-4l-5-4l-7 1l-2 1l1 7l4-1zM921 698l-2-1l-5 7l3 2l7 0zM915 1607l5 1l2-1l-1-6l1-3l-3-4l-8 0l-1-3l-3-3l-6 2l2 7l5 2l4 6zM898 1106l0 2l3 4l6-4l0-2l-3-5l-4 1zM907 1052l-1-4l-3-2l-3 8l4 3zM837 1049l0 4l-7 2l-3 5l1 2l3 3l-2 6l6 5l3 4l3 1l2 3l-1 6l5 2l2 5l2 0l3-1l4-7l-2-5l1-4l2-1l3 1l5-1l3-2l3 0l2 2l0 6l2 0l7-2l2-4l5 2l4-3l6-3l3-4l-1-6l-3-2l-3-3l-1-5l-2-3l-4 0l0 6l-2 2l-3-3l-7 2l-3-1l-3 3l-1 6l-2 1l-12-6l0-1l-3-5l-5 2l-1-1l-1-4l3-3l0-3l-6-3zM878 964l7 2l3-1l0-4l3-4l5 3l3-6l3-1l-3-6l-4-2l-7 0l-3 3l2 3l-8 8zM892 1540l5 2l4-7l-4-3zM895 1128l3-11l-6-4l-4 3l-4 0l-2 5l4 5l4 2zM850 1021l-1 8l-3 1l0 2l4 3l4-2l4 3l1 0l3-6l4-1l2-2l-1-3l1-6l5-4l-8-6l-5 1l-1 1l-3 5l1 1l-4 6zM873 1604l-2-7l-6 1l-4-4l-4 2l2 8l-6-1l-1 5l5 1l3-2l4 5zM860 982l8 4l2-2l0-4l-6-3l-4 4zM852 1568l-4 4l2 5l6 1l3 4l5 0l2-2l2-4l-5-7l-2-1zM851 886l-1-1l0 3zM854 1119l6-3l1-3l-2-3l-4-1l-3 1l-1 7zM839 1142l7-4l1-3l3 1l6-2l3-2l0-2l-2-2l0-6l-2-1l-4 3l-4-3l-4 3l-3-4l-6 5l0 2l-5 4l1 4l5 3l1 2zM851 1314l-4 2l-5 0l1 11l6-4l2 0l4-3zM847 1531l5-2l0-5l-5-4l-4 1l-1 4l3 6zM851 1338l-2-1l-8 2l-2 2l6 4l6-3zM850 1001l-1-5l-1-1l-3 3l3 6zM829 1552l-5 4l3 6l6-3l0-6zM812 1293l-4-7l-2 0l-3 6l5 4l0 7l2 1l6-3l1 6l-4 4l1 3l-2 4l3 5l5-3l1 2l6 0l0-6l3-2l0-5l-2-2l-3-1l-2-6l-6 0l-1-5zM820 1576l1-6l-1-1l-4 1l-6-1l0 4l3 5zM820 1332l-1-6l-4-1l-6 1l5 10zM801 1360l7-1l3-5l5-3l1-2l-6-6l-3 3l-3 0l-9 6l-2-2l-1-2l-2-4l-3 0l2 11l-5 5l1 1l3 0l8 4l3-3zM805 1539l2 8l6-3l-1-6l-3-1zM782 1140l0 2l3 5l4 0l2 5l2 2l7-4l0-4l-7-6l0-4l4-4l0-3l-4-2l-9 0l-2 1l4 6l-1 5zM799 1294l-4-5l-6 3l-1-3l-7 1l-3-2l-3 2l0 5l-5-1l0 8l4-2l2-3l4 2l3 5l7-7l7-1zM795 1079l-1-9l-5 0l-2 4l0 3l4 2zM793 1339l0-1l-3-5l2-4l-5-5l-5 4l-3-1l8 8l0 5zM766 1276l2 2l4-1l2-5l6 0l7-8l-2-6l-6 0l-3-2l1-7l-3-2l-7 2l4 9l0 6l-7 2l3 4zM751 1264l2-4l-6-4l-2 2l-1 6l1 1z" fill="#b1cb99"/>
<path d="M1944 1135l3 0l2-6l2-1l-3-11l-3-4l-3 2l1 5l-4 6l2 3l0 4zM1926 1152l-6-5l-2 1l-5-5l-4 7l2 4l4-1l5 3l0 3l1 5l4-1l3-4l8 3l1 3l3 3l4 0l0-9l-3-1l-1-5l-4-2l0-6l-1-1l-6 0zM1941 1101l-2-5l-6 0l-3-8l-4 1l-2 2l5 8l-7 0l2 8l8-2l1 1zM1901 1196l8 1l3-3l5 4l9-4l1-3l2-1l4-4l-1-5l-3-3l-4 2l-3 7l-4 0l-7 3l-15-2l-1 3zM1921 1118l-6-2l-2 1l-2 4l6 4l4-5zM1785 1041l-2 6l1 2l8-1l1 3l6 2l4-4l5-1l3-1l3 5l-4 6l-8 2l-2 5l4 4l3-2l4 1l5-5l4 5l0 2l1 4l-2 5l-5-3l0-4l-2-2l-6 3l0 5l3 1l1 5l3 1l5-4l3 7l-2 3l1 4l2 3l6-2l1-5l3-1l-3-7l4 0l2 6l3 3l7-3l-1-3l3-4l3 3l4 0l2 3l6 3l1-1l1-6l6 0l3 2l3-2l4 0l3-3l4 3l4 0l3-4l5 1l4-3l-2-5l3-3l1-4l-4-4l-5-5l-6 1l0-4l3-4l-2-3l1-5l1 0l3 1l4-2l5 6l3 1l2-1l-19-19l10-20l-4-1l-1-3l1-2l-2-5l0-9l-9 1l-2 3l-3 1l-5 2l-2-6l0-3l-2-2l-1-3l-4-6l-2 0l-2-5l2-4l10 1l4 5l2 1l3-2l2 2l5 1l2-7l-8 0l0-2l-6-3l0-2l-5-3l-3 1l-2-2l-4-4l-1-4l-2 0l-3 0l-4 3l-2 6l-6-2l-3 6l-7-2l-2 2l-5 0l-5 5l1 6l5 3l-1 5l1 3l-1 6l-6 7l5 6l-3 1l-2 6l5 3l-1 3l-5 1l1 5l-3 3l1 3l-3 3l-5-1l-2 3l2 4l-3 6l-3-2l1-7l-3-1l-4 1l-3-2l-3 0l-1 3l-7 0l0 5zM1840 996l-1-6l2-4l6-4l2 5l-1 3l0 5l4 6l5 1l-4 7l5 2l-1 6l-7-2l-2 1l-1 4l-8 1l-3-11l-2-2l-1-4l5-3zM1880 1140l2 4l6 4l3-5l9-2l5-9l-4-3l-7-1l-4 2l-1 3l1 2l-2 3zM1894 1097l-4-1l-3 1l-4 12l3 2l7-2l2 0l1 4l2 1l4 0l1-4l-4-5l-2 1l-2-4zM1855 1166l4 7l-6 4l-2-5l-3-3l-5 6l6 5l3 0l2 3l3 1l5-3l-1-8l7-3l1-3l6 1l5-5l-4-4l1-4l-4-4l-14 0l-5 2l0 5l5 5zM1873 1123l5-1l-1-7l-4-2l-5 3l-1 4zM1863 854l6 1l1-2l-8-9l-2-2l-3 1l-5-5l-3 6l0 3l6 0l2 4l3 0zM1825 1116l-1 6l-3 2l3 6l2 0l4-4l7 2l1-4l3-3l2 1l3 7l0 3l5 3l4 0l1-2l3-2l4 0l3 3l4-1l0-6l-5-3l-1-1l-7-1l-1-5l3-3l7 0l2-5l-5-2l-1-4l-4-3l-2 3l-2 4l-4 1l-1-2l-8 0l2 8l-2 3l-5-3l1-2l-3-6l-4 6l0 3zM1820 859l-5 1l-5-4l-4 4l1 7l5 0l2 6l3 0l5 3l0 2l-3 2l3 7l7-2l-1-2l3-3l5-2l2 0l6-2l3 2l5 0l1 1l-1 5l7 4l2-5l-6-4l5-4l2-1l2-8l-3-1l-4 3l-5-2l-3 1l-5 7l-3-7l-6 5l-6-6l-2-7l-2-1zM1849 1207l-3-1l-5 9l-3-2l-1-5l-3-3l-3 2l1 13l3 2l6-4l1-2l5 0l4-4zM1833 684l-3 5l4 2l1 3l4 0l-3-10zM1804 706l-4 7l4 2l3-1l5 3l3-1l2 2l8-2l1 4l9-3l-3 6l9-2l0-2l-4-4l0-2l2-8l-2-3l-4 2l-6 1l0 2l-3 4l-6-2l-1 1l-5-5l-6 2zM1827 923l2 1l5-1l0-7l-3-2l-1-4l-10 0l0 7l7 1zM1819 732l-3 4l-1 4l4 5l5-6l-1-4zM1812 1146l2-4l-1-2l4-3l-3-8l-7 5l0 3l-5 10l0 6l5 0l4-6zM1805 1118l5 7l4-4l1-4l-1-1l2-6l-8-1l-1 0l0-6l-3-1l-5 3l-6-3l-1 3l1 7l0 3l3 2l6-2zM1816 1237l-4-6l-6 3l0 5l5 2zM1814 691l1-5l-9-2l-8 3l1 6l-1 2l6 6l6-3l0-5zM1809 904l-2-4l-1-1l-5-7l-3 1l-2 3l3 5l1 0l2 7l5-1zM1807 651l-3-3l-5 0l0 6l3 2zM1798 1217l4-3l-1-5l-3-4l-7 6l1 3zM1774 1267l-5 0l0 3zM1777 1154l9-2l1-4l-3-3l-5 2l-3 6zM1777 1173l8 0l1-3l-6-5l-4 4zM1783 1216l-2-2l-5 0l-1 6l6 2zM1770 638l8 3l1-1l1-2l-2-7l-3 0l-6 5zM1778 904l1-4l-4-3l-7 5l2 3l3 1zM1760 944l6 4l5 0l4-1l1-8l-4-1l-2-3l-2-5l-2-2l-3 1l-4-4l-6 4l0 2l-2 3l-6 1l-1 5l1 1l7 1l2-2l4 0zM1767 908l-11 4l-2-2l-5 2l-5-3l-2 0l0 7l6-1l0 4l6 1l2-3l6 2l1 2l4 0l3-4l2-1l1-4zM1756 1201l0 6l2 2l3 0l3-5zM1756 556l3-1l1-1l-3-5l-3-1l-4 4zM1756 1004l-13-2l-1 2l-1 7l7 2l2 3l3 0l4-4zM1741 1266l-1 6l-4 2l-1 1l-4 2l-4-1l-3 1l2 7l-6 1l-1-1l-2 0l-3 4l-5 2l3 6l4 0l1-3l4-2l3 2l6-2l0-5l2-4l3 1l4 0l4 4l5-3l1-6l2-2l2-6l-1-3l-3-3l-4 2zM1727 617l4 2l8-1l6-2l2-5l-2-2l-5 0l-3 3l-5-3l-3 0l-2 6zM1723 1156l7-2l0-4l-7-4l-3 1l-1 4zM1718 584l-3 1l-1 8l6 0l2-2l0-2zM1708 1233l4 4l6-6l-5-3zM1705 1226l7 0l2-4l-10-3l-1 3zM1699 1150l8-2l-3-8l-4 0l-2 5l-8 1l2 6l2 1zM1701 551l-1-1l-8 4l5 7l2 0l3-1l2-4zM1697 1228l3-4l-5-5l-3 3l-4-2l-3 0l-3 5l2 6l7-1l2-3zM1686 535l-1 5l5 2l5 0l-1-5l-7-3zM1654 542l0 13l6 1l0 3l-5 0l0 7l3 1l6-4l6-2l3-2l0-7l7 1l-1 6l4 3l4-2l1-2l-7-6l0-7l-6 0l-4 4l-9 0l1-13l-5-2l-2 2l0 5zM1685 896l-6-3l-4 1l-2 4l5 2l5 0zM1678 1174l-3-1l-6 4l-3 0l-1 6l7 3l2-2l5 1l4-4l0-2zM1682 518l-6-3l-1 1l-2 8l4 1l4-2zM1670 1229l-5 5l0 1l11-2l-2-4zM1656 512l-1 5l3 2l6-2l-2-7l1-5l-5-2l-4 2l-3-7l-4-1l-5 2l-3 6l1 6l3 1l7-1l2-4zM1659 853l-3 3l-7-1l-1 2l2 4l7 5l5-7l0-5zM1659 1260l-10-1l0 3l-4 6l1 3l1 1l8-1l1-1l0-4l3-4zM1652 1092l-2-2l-5 4l-1 3l4 5l5 3l5-3zM1642 1236l-5-6l-2 5l3 7l9 1l4-4l-3-4l5-6l1 0l2-2l1-6l-1-3l-14 10l4 7zM1651 838l5-2l1-2l-6-5l-4 2zM1636 901l5 6l4 1l4-4l0-4l5-2l-3-6l-3-2l-3 3l-6-1l0 6zM1639 1201l-2 6l3 3l4-2l5 3l4-4l-1-5l-4-2l-1-3zM1646 810l-2-12l-7-2l-2 2l-1 4l3 2l2 5l5 2zM1641 1109l0-4l-5-3l-5 1l4 9zM1629 1023l8 1l3-3l-6-6zM1633 1082l3-3l0-5l-4-4l0-4l-5-3l-4 1l-3 3l2 4l6 1l-1 4l-5 3l5 5zM1631 898l3-7l-5-3l-5 3l-3-2l-1-5l-1-1l-6 5l0 3l-5 3l0 3l2 2l7-2l3 2l4-3l5 3zM1627 854l-2 1l1 6l2 2l3 0l2-1l1-8zM1613 1127l3 2l5-4l3 5l2 1l4-7l-4-3l-4 2l-4-3l-4 1zM1626 1118l4-4l-7-6l-1 1l-2 7zM1618 497l-4-6l-4 0l0 8l1 1l-2 7l6 3l1-5l-4-5zM1610 720l-2 3l-1 3l2 2l8 2l0-2l-1-4zM1605 526l-2 5l3 9l-2 2l0 4l3 2l10-2l-2-10l-4-3l0-5zM1612 1229l-7-1l-1 2l2 7l4 3l5-6zM1583 1087l6-3l1 2l7 0l6-4l3 2l6-2l0-3l-6-4l-4 1l-2-1l-3-3l-1 0l-7 6l-2-1l-8 0l2 9zM1607 997l-6-1l-3 7l6 3l5-3zM1598 1173l5 6l5-2l-2-7l-5-1l-2 2zM1589 633l2 2l5-1l2 1l6-3l0-2l-1-3l-3-2l-4 4l-5-2l-3 3zM1591 1115l4 1l4-6l2-1l0-7l-6-1l-2 6l-4 0l-1 3zM1596 1015l-5 1l2 9l6 0l1-3zM1589 666l-2 1l1 7l-2 2l1 7l6-2l0-5l4-2l-4-7zM1590 1259l3-6l-9-3l-3 6l3 2zM1584 591l-2 0l-1 4l5 5l4 0l-2-7zM1581 1065l6 4l2-8l-3 0zM1587 996l-5-3l-4 5l2 5l8 0l0-1zM1585 1215l-6-1l-3-6l-2-1l-2 1l-1 5l5 4l0 3l9 4l3-2zM1585 903l1-9l-6 1l-1 3l1 5l0 5l3 4l5-4zM1576 552l6 4l3-5l-2-9l-1 0l-6 7zM1582 782l3-6l-1-2l-5 0l-11-5l-5 5l1 3l3 2l5-1l2 4zM1562 615l7 1l5-4l2 1l2 4l3 2l2-3l1-4l-3-5l0-2l-3-2l-6 2l-3-1l-2 2l-7 0l-1 5zM1563 566l4 4l6-4l-1-6l2-7l-5 0l-2-6l-4 2l-5-3l-5 5l2 4l3 1l0 5l5 4zM1564 1042l8-1l-2-6l-5 0l-3 6zM1570 515l1-2l-3-3l-2 6l1 0zM1562 847l-4 2l-1 4l3 3l2 0l5 1l3-4l0-4zM1564 827l-4 1l-1 8l6 1l4-2l-1-6zM1560 605l7-8l-1-6l-4-2l-10 3l0 8zM1563 1061l-3-1l-5 3l0 3l4 6l5-1l2-4zM1558 892l-6-3l-4 2l-2 4l5 10l0 4l7 2l2-6l3-1l-1-5l-5-2zM1558 1103l-4-6l-5 2l-4-3l-5 4l5 7l3-2l3 1zM1553 878l4-5l-6-4l-5 5l4 4zM1540 1260l5 5l-3 6l0 3l4 3l4-1l6-13l-4-5l0-4l-3-5l-4 3l-5-1l-1 3zM1549 568l2-6l-1-2l-5-1l-6 5l1 3l3 2zM1535 990l9 4l2-4l-3-3l-6 0zM1533 717l3 1l6-2l1-4l-3-3l-3 1zM1542 864l-3-8l-2 0l-5 5l6 5zM1539 1045l3-9l-6-3l-2 1l-3 7l6 3zM1533 978l7 0l1-3l-3-5l-8 2zM1537 1207l-4 2l3 7l2 1l2-1l0-4zM1530 1119l5 3l3-1l1-4l-5-5zM1514 1331l-5 1l2 9l-3 1l-1 7l6 3l1-4l3-3l3 4l4-3l0-4l7 1l4-7l-1-2l-7 0l-3-2l-4 2l-3-3zM1524 1160l7-2l-6-9l-5 4zM1505 698l3 8l3 0l2-2l2-5l3 2l2 0l2-2l1-3l-6-5l-4-1l-6 2zM1517 831l5-4l0-3l-4-3l-6 4l0 3zM1518 581l4-4l-2-6l-3-1l0-4l-4-5l-6 9l0 2zM1521 1222l-2-1l-7 3l1 5l4 2l4-1zM1517 881l-6-4l-3 1l-1 5l6 5zM1512 1123l3-2l-2-7l-5 1l3 7zM1507 955l2 1l5-3l0-3l-7-4l-3 2zM1512 1202l1-6l-2-1l-8 3l-4 5l5 5l-1 2l1 3l7 3l1-10l-1-1zM1505 628l-2 1l1 4l7 2l0-7zM1507 971l-4 0l-4 3l4 5l3-1l3-4zM1504 639l-1-4l-6-1l-1 7l6 1zM1492 1198l-2 5l7 2l1-2l-2-5zM1484 1213l-5 3l1 4l4 1l4 0l3 3l6-2l1-6l-2-2l-5-1l-2 2zM1483 1136l-3 8l2 2l4 0l3-7l-5-4zM1469 985l1 4l3 2l7-5l3 3l5-3l1-5l-6-2l-3 2l0 3zM1480 1333l4 3l4-4l-5-6l-4 2zM1486 1259l2-2l-5-9l-5 5l2 4zM1487 948l-1-6l-3-1l-7-1l-2 2l-1 6l2 4l9 2zM1477 904l3 1l3-2l4-5l-1-1l-4-2l-6 4zM1480 857l6-3l-1-4l-4-3l-3 2l0 4zM1482 724l1-5l-5-5l-5 7l5 3zM1483 641l-7-3l-4 7l4 4l6-1zM1482 1232l0-5l-4-2l-5 4l6 4zM1476 1064l-2 0l-3 8l0 1l8-1l1-1l1-3zM1473 604l2-1l2-3l-2-6l1-3l-1-6l-6 1l-4 12l3 6zM1465 884l6 3l3-2l0-4l-6-4l-2 1zM1466 1186l2-8l-8-1l0 2l0 3l3 4zM1460 1173l4-2l1-5l-4-3l-6 3l2 6zM1446 949l5-1l1-9l-5 1l-2 7zM1444 930l-2 4l5 3l2-6l0-1zM1449 891l-2-7l-7 2l-2 12l2 1l7-2l-2-6zM1430 1132l4 5l11-3l-1-6l-8-2l-6 2zM1444 644l-4-7l-4 4l1 5l-4 2l2 5l8 1l-1-8zM1433 599l0 6l6 2l2-2l-1-5l-5-2zM1422 964l4 1l6-5l-4-4l5-5l0-3l-2-1l-6 1l-1-1l-4 2l-1 4l5 3l-4 5zM1433 1150l-7-3l-2 7l8 2zM1418 1253l5 1l1-10l-4-4l0-6l-4-1l-2 2l-2 5l1 6l2 1zM1415 596l-4 5l3 3l6 0l-2-6zM1408 1294l6-6l-1-4l2-3l-2-8l-3 0l-3 6l-6 2l4 6l-1 3zM1414 592l0-7l-8-1l-1 3l3 6zM1409 1166l-5-3l-4 9l3 2l2 4l7-3l0-1l-5-3zM1400 1110l4 2l3-1l1-8l-4 0zM1266 863l6 5l-1 2l5 5l4 0l1-4l8 1l-4 7l2 5l-4 5l0 3l5 1l-3 8l9 4l5-5l4 3l-7 6l-1-1l-7 5l0 1l5 5l9 0l2-3l-1-3l3-5l7 2l2-3l8-1l1 8l2 1l2 3l-4 6l6 5l0 7l1 2l3 1l5-3l2 1l2 2l-1 3l1 2l-3 8l9 1l12-1l2 1l0 6l7 2l1-1l1-3l4-3l5 1l2-4l-3-6l2-3l6-1l2-6l6 0l2-6l-8-3l-9 4l-2 0l-1-5l3-3l3-17l9 0l3-4l5 4l4-4l-2-4l0-5l3-1l1-2l-5-9l-5-2l4-8l-6-2l1-7l-1-1l-6-3l-9 2l-2 2l-7 1l-1 2l-6 0l-3-1l-1-10l3-5l-3-8l-5-1l-1-4l5-3l1-6l9 1l3-6l9 2l1-2l0-4l1-3l-3-4l5-6l-2-5l-2-1l-1-8l-2-2l-6-4l-3-9l-5-2l2-6l-4-2l0-2l1-3l0-3l3-4l-7-4l-5-2l-2-3l-7-1l-2 1l-4-8l-3 6l4 5l-2 2l0 4l-3 5l6 3l0 6l2 2l-1 3l-7 0l-2 4l-7-4l-2 4l-4 2l-8 1l1 4l6 2l-2 6l5 4l1 3l2 1l4 6l0 5l3 5l-1 2l-7 1l-1-2l-6-3l-1 2l0 7l-4 2l-10 13l1 2l-4 3l-4 0l-2 6l1 1l1 5l1 2l-1 2l-7 1l0 3l-3 2l-4-4l-4 1l-2-2l-4-1l-4 3zM1337 794l3-2l4 0l2-5l5 0l2 1l5-3l3 4l4 2l-5 13l5 4l-2 5l-2 1l-2-3l0-7l-4-1l-4 2l-4-4l-7 0l-3-3zM1346 898l0 4l-3 2l-3-2l-1-4l4-4zM1322 884l-6-2l-1-4l2-2l2 0l4-3l0-3l2-3l-1-5l-4 0l-3-6l6 1l5-9l6 2l3-1l4 2l1 3l0 7l-3 5l3 5l-3 7l4 3l-3 8l-6 1l-3-6l-2-1zM1389 1145l-5 4l4 6l7 0l2-2l4 2l5-2l-1-4l-13-1zM1395 1089l-1 7l4 3l5-6l-6-5zM1388 1005l1 1l4-1l4-4l1-2l-3-3l-4 0zM1396 992l1-1l-2-14l-5-2l-3 3l1 4l-3 6l1 2l2 0zM1388 1130l4 0l4-5l-3-4l0-4l-2-2l-4 0l-3-4l-4 1l-2 3l0 4l6 1l0 7zM1392 1232l-6-1l-4 3l2 4l-4 7l8 2l8-1l0-6l-4-2zM1383 1061l2-4l-7-4l-2 8zM1376 1389l7-2l-2-7l-3-1l-4 4zM1375 1134l4-1l2-6l-4-5l-3 1l-3 7zM1374 1272l7-3l-3-7l-7 5l1 3zM1355 1299l4-2l4 8l2 0l3 5l5-3l1 5l5 2l1-4l0-6l-3-1l-1-4l-4-4l0-2l-2-3l-2 0l-6 5l-2-1l0-2l-7-2l-4 1l1 5zM1345 1250l-1 8l6 2l4-5l5 0l2-2l0-5l-1-1l-2-5l6-2l2 0l1 6l3 2l9-3l-2-6l0-5l-4-2l-4 2l-2-2l-8 0l-1-5l-4-1l-3 4l1 4l-4 3l-1 2l6 10l-1 1zM1374 625l4-3l0-6l-7 0l-2-2l-6-4l-3 2l-5 0l-1 6l3 4l4-5l2 1l3 4l3-1zM1369 573l2 8l7-2l-3-4l3-4l-2-5l-3 1zM1377 1225l-5-7l-4 7l6 2zM1374 998l-6 1l-1 5l6 2l3-4zM1376 1087l-3-4l-5 1l1 8l1 1l5-1zM1367 1048l4-2l2-3l2-1l1-4l-3-5l1-2l-9-3l-2 2l3 6l0 2l-5 1l-1 6zM1374 661l-1-3l-4-3l-3 0l-2 4l-4 4l0 2l7 2l3-4zM1359 1127l1 2l6 1l2-8l-4-2l-4 0zM1367 1202l-1-7l-5-1l-2-3l-2 0l-7 2l0 3l4 3l5-1l1 6l5 0zM1356 578l7 0l3-5l-1-1l-8-1zM1356 1145l4 5l3-2l1-8l-2-1l-5 1zM1347 1709l-6 0l0 2l-6 4l4 7l3-1l2-5l7 1l1-2l7-1l1-5l-2-7l-3-2l-4 3zM1353 790l-1 2l0 5l2 3l6-5l-2-3zM1348 1684l3 8l6 0l0-3l-2-3l1-7l-6-2zM1346 629l6 2l3-1l1-5l-7-3l-2 1zM1342 573l-1-1l-6 0l-1 4l4 5l3-1l4 4l8 1l2-7l-6-6zM1337 1242l2 3l3 1l5-7l-7-3zM1340 1271l-3 0l-4 6l6 7l5 0l2-6zM1330 1652l2 6l0 2l-3 4l2 5l9 4l4-2l0-7l-2-2l2-7l-2-3l-1-3l3-4l-1-7l1-5l-6-2l-4 2l0 4l-6 2l0 4l-3 3zM1283 729l10 4l2-2l7 0l1 6l0 3l2 2l7-1l3 3l4-4l-1-5l0-1l6-1l1-4l5 0l1 4l4 1l1-8l-4-2l3-3l0-3l-4-3l-4 2l-2-2l-6 0l-2 2l6 9l-6 4l-1-3l-6 2l-6-2l-4-4l0-5l-3-3l2-5l-1-2l-2-1l-2-3l-6 1l-3-2l-6 3l-1-1l-6 0l-2-4l-5 2l-1 6l2 1l4 0l3 3l-1 3l1 3l3 0l2 5l6 0zM1333 1699l2-3l-8-4l-2 3l0 1l5 5zM1326 1129l9 0l0-4l-7-6l-3 9zM1325 1710l5 8l1 0l4-3l-5-8l-4 1zM1271 1728l-1 4l-2 1l0 7l6-1l3 2l-1 3l4 5l7-6l-5-5l0-4l8 1l0 5l9 1l2 5l7 6l6 2l3-2l4 2l3-6l5 4l3-1l1-5l-2-3l0-4l1-1l2-7l-3-2l-1-3l-4-2l-3 2l-6 0l1-4l-4-3l0-4l2-2l0-6l-3-2l-5 3l-8-1l-9 9l-2 0l-4 2l-5 0l-1 1l5 6l-6 1l-2-2zM1310 1730l2-2l4-1l1 3l0 2l-4 1zM1289 1725l2-7l7 2l0 4zM1314 767l3 0l5-6l2 5l10-3l-1-2l-6-3l2-6l-4-5l-5 2l-6-3l-3 2l0 3l-3 4l2 5l2 2zM1301 1229l-8 2l-1 3l3 3l-2 5l1 4l5 2l4-1l1 8l2 1l-2 6l2 3l-1 2l-5 0l-2 4l4 4l-2 2l-7 2l0 1l0 2l3 4l3 8l7-5l-1-4l3-3l5 3l3-2l2-4l-1-3l4-4l1-4l-4-4l1-4l-4-5l3-4l6-1l6 4l3-4l0-5l-3-1l-6 1l-2-5l-4-4l-5 3l-3 1l-2 2l-5-5zM1322 1326l-1 2l5 7l3-3l0-3l3-6l-5-3l0-3l-2-2l-6 1l3 6zM1321 1108l-1 5l7 2l-1-7zM1317 1628l-4 0l-2 8l5 4l5 1l4-5l-7-2zM1312 1207l6 5l5-5l-1-2l-7-2zM1296 1164l7 7l3-2l2-2l-2-6l8-1l0-8l-2-1l-3 1l-5-1l-5 1l-3 4zM1248 1589l-5 3l0 2l6 4l2 1l5-2l2 1l2 4l4 1l2 5l-3 1l-8 5l3 3l2 6l7-1l3 1l4-2l5 6l3 0l1-6l-3-5l-1 0l-3-7l-4-2l2-5l3-2l1-2l3-1l3 6l6-3l2 2l-1 5l4 3l8 0l0 4l3 6l7-2l0-2l-2-8l-5 0l0-4l1-4l4 0l3-6l-8 0l-1-7l-5 2l-2 2l-3 1l-4-7l-9-1l-4-3l-2-4l3-5l-3-3l0-5l-7 0l1 7l-1 2l0 3l-1 1l-4 1l-5 5l-6 0l-1 6l-2 1zM1279 1589l-3 6l-3-1l0-4l1-1zM1300 1103l1-1l7 3l4-6l-4-4l-6 5l-2-5l-5 2l-3-1l-1 5l-3 1l-2 4l4 3l3-1l3 4l5-3zM1303 1136l3-3l-1-4l-5 1l-4 4zM1280 1551l5 17l11 4l7-3l1-4l-9-2l2-4l3-1l1-1l-2-6l5-3l-5-6l5-3l-4-6l-2 1l-3 7l-1 4l-4 1l-3 4l-4-1zM1269 817l1 5l-3 2l0 5l7 2l3-1l4 2l3-4l5 1l3 4l1 0l6-6l-5-4l0-7l2-2l1-4l3-2l-1-6l4-2l1-4l-7-6l-3 2l-4-1l-5 2l0 4l-4 1l-2-1l-3 1l-1 2l5 6l-5 4l1 3zM1296 1749l-1-5l-8-1l1 5l-4 5l5 3l3 0l6 3l4-1l0-5l-7-3zM1297 623l-7-2l-2 1l2 7l2 1l0 4l4 5l3-3l0-5l-3-2zM1292 587l4-6l0-2l-2-1l-7 2l0 3zM1290 1864l2-7l-5-5l-2 0l-3 8l0 4l5 1zM1281 1153l5 6l3 0l2-3l-1-7l-4-1zM1290 1272l-2-8l-5-2l-4 3l4 9zM1284 1771l4-4l0-2l-4-4l-3-2l-3 3l-6-4l-3 1l2 11l2 1l7-2zM1258 955l5 1l0 7l3 1l6-4l0-4l4-1l4 0l3-9l-6-4l-3 0l-1 3l-5 6l-4-5l-4-1l-5 1l0 6zM1261 1545l2 3l3 0l5-2l-2-11l-1-1l-8 2l-3 2l-5 1l-1 5l2 4l7-3zM1265 1753l5-2l-1-5l-3-3l-6 2l-2-1l-6 2l0 6l8 1l2-1zM1257 1848l2 6l8-6l-3-3l-6 1zM1261 1137l-5 2l2 8l3 0l3-1l2-5l-1-3zM1266 1858l-7-4l-5 3l1 6l2 2l6-3zM1228 980l-1 4l6 7l10 1l4-2l5-4l7-1l4-4l-2-5l-5 2l-3-2l-3 6l-5-3l-3-5l-7 3l3-9l-1-1l-5 0l-2 2l-6 2l-3-1l-3 3l-1 4l2 3l7-1zM1163 820l3 3l0 6l6 1l-2 7l3 3l7 0l2-4l4 1l1 6l7 0l0 2l4 5l-2 4l2 3l0 4l3 2l0 4l-3 2l1 4l4 2l0 2l-4 3l-1 4l-5-1l-3 1l-5-2l-2 1l-14 1l-3 4l5 4l0 2l-4 1l-2 4l3 4l3 0l5-5l5 2l5 0l6 4l4-2l5 2l5-8l4 2l4-5l0-1l-4-3l0-2l3-4l3 3l4-1l3 2l5-3l2 1l-1 13l-11 5l6 7l4-1l5-6l3-1l4-5l4 2l1 2l6 2l2-4l-3-5l1-1l-4-5l-2 0l-4-3l2-6l-4-2l-4-8l0-2l-3-3l1-5l-3-1l-2-7l1-2l-1-3l2-4l4 0l4 2l2-1l1-7l-4-2l5-5l-2-6l1-5l7-2l0-3l4-5l-1-1l-4-5l1-3l-1-3l2-4l5-1l0-5l-5-4l-4 5l-2-8l-3-2l0-3l1-1l7 2l1-5l4 5l6-3l-1-3l-3-5l3-4l-1-2l6-5l-2-4l-5-2l0-5l-1-2l-1-5l-3-3l0-3l-5-4l5-6l-2-3l-9 1l-1-4l-3-3l-6 2l-2 5l-6 0l-5-2l-3 2l-3-2l-2-4l-7 2l-2 8l-7-1l-3 3l-4 0l-5 6l-2 1l-2 5l2 2l-3 6l-5 0l-1 5l2 4l-4 3l0 4l5 2l4-4l3 6l3 0l2 5l-2 5l1 6l-1 7l-6-1l-3 4l-5 0l0-7l-7 0l-2 3l0 3l-3 4l3 4l-2 3l0 5l3 8l-2 3zM1196 778l3 1l5-1l1 4l-2 2l0 5l-6 0l-1-3l-3-1l-1-5zM1198 797l5 1l1 3l2 3l5 0l5-10l6 5l6-5l1-2l-3-4l-6 2l-1-3l1-3l0-4l1-7l6-2l2 3l0 6l7 1l-4 5l1 5l6 2l1 2l-3 6l5 3l-1 5l-2 0l-6 4l0 4l-6 1l-2-5l-11 7l2 5l0 3l-5 0l-3 2l-4-2l0-3l-5-2l0-7l-4-1l-2-9l-3-2l1-5l-4-3l3-4l3 1l4-3zM1201 756l-9 2l-2 1l-3 0l-2-6l3-1l3-4l3 3l3 0l1-6l5 2l5-1l-2-5l0-5l7-3l0-6l5 0l1 1l9 3l0 1l-6 5l1 3l-1 4l3 4l-3 5l-10 3l-2 3l-8-2zM1255 708l2 1l4-8l-1-3l-5-1l-2 6zM1249 1740l3-4l-3-3l-5 0l0 8zM1216 1589l6-7l1-4l-5-7l4-3l4 3l4-2l3 2l6-6l-1-7l3-1l4 1l5-2l0-3l-3-2l-2-7l-2-1l-3 4l-6-5l-4 3l2 7l3 5l-4 3l-8-2l-5 3l-1 1l-5 5l2 2l-4 3l-4-1l-2 2l5 5l-4 3l3 5l-3 4l4 4l5 0zM1243 1766l4-1l1-3l-6-8l-4 4zM1246 1746l-3-3l-5 2l0 4l5 4zM1220 658l3 7l7 0l2-1l4 2l2 8l8-7l-1-5l-4-1l-1-3l1-5l-7 2l1-8l-8 2l-1 1l-2 4l-3 2zM1204 1533l3-3l3 3l0 6l1 2l3 1l3-2l5 3l10-7l3 4l7 1l1-2l-4-7l-2 0l-3-5l-3-2l-3 2l-2-1l-6 4l-3-5l-8 2l-1-3l-2-4l-10 2l-1 7l4 1zM1235 1141l5-2l1-2l-5-6l-4 7zM1240 1589l0-5l-3-1l-10 5l0 4l6 4l2-1zM1231 1325l5-5l0-3l-4-2l3-8l-5-2l-3-4l-5 2l-5-2l-2 1l-2 5l4 3l-1 5l-5 9l7 0l3-5l3 3l4 0zM1224 1769l0 3l4 6l6-6l-5-8zM1213 1752l4-2l2-6l-4-4l-8-1l1 8zM1215 1777l3-1l0-2l-3-6l-4 1l-4 0l-4 4l1 3l3 2l4-3zM1194 1587l-3 3l1 5l5 3l3-1l3-8l-1-1zM1200 1716l0-3l-9-5l-1 5l2 4l-1 4l2 2l7-2zM1188 1899l1 6l3 0l4-4l-3-4l-4-1zM1173 1574l3 3l8-2l3 1l5-5l1-3l-5-7l-4 3l1 4l-2 4l-5-3l-5 3zM1189 1800l-4-4l-4 2l0 3l3 5zM1185 1681l-6 0l-2 5l3 3l-3 5l3 5l4-1l1-7l4-1l-2-6zM1176 1615l8-6l0-1l-5-2l-5 4l0 3zM1183 1644l0-3l-3-3l1-3l-5-6l-5 5l4 9l-7 6l2 3l7 1l0-8zM1183 1661l-4-4l-5 4l3 9l2-1zM1160 1074l-2 2l5 6l3-5l6 5l1-1l2-6l-5-3l-5 2zM1161 1658l1-7l-3-1l-5 4l-1 3zM1150 1619l-4 4l0 2l9 3l4-4l1-3l-3-2zM1140 1165l7-1l2 2l7 1l1-3l-5-4l4-6l-2-5l-6-2l-8-1l-5-2l-4 5l2 3l0 5l-3 3l3 4l6-1zM1147 822l2-3l6-3l1-1l-2-3l-6-2l0-3l-4-3l-5 5l-5-1l-3 4l0 4l3 7l5 2l3-3zM1144 879l-4-6l-2 0l-4 5l0 5l6 2l-1 8l0 1l6 3l3 0l5-6l2-5l-5-4l-7 1zM1142 1828l4-2l2-4l0-2l-3-2l-8 3l0 3zM1140 1608l-5 7l7 2l4-4l1-4l-2-1zM1141 1654l4-2l1-3l-5-7l-4 3l-1 6zM1123 1048l4 6l4-1l3-5l-5-4l-6 2zM1113 835l1 3l7 4l2-1l1-2l0-3l-4-5zM1115 1539l-2 1l2 7l8-3l-1-6zM1118 1101l3-7l-1-2l-4 0l-1 2l-6 5l0 3l3 1zM1102 675l1 4l8 3l5-7l-2-2l-9-3zM1095 1646l1 7l3 1l4-4l1-4zM1099 1528l-2-1l-9-2l-1 1l7 8zM1085 1581l8-3l2-2l-4-4l-1-7l-4 1l-3 2l-4 1l0 6l-2 1l-1 8l5 2zM1091 1587l-6 4l0 3l5 3l2-1l2-7zM1083 1644l-2 3l0 5l2 2l6-2l2-7zM1061 1031l-5 5l1 5l0 3l2 2l5 1l-2 8l10 12l3-2l0-6l2-1l0-3l2-1l6 1l1 0l0-7l-6-2l3-6l-6-4l8-5l0-1l-3-7l-4 0l-2-7l-2-1l-2-3l4-7l-1-1l-9 4l-1-4l-6-3l-3 5l2 3l-3 11l5 3l-1 6zM1076 879l6-1l1-3l-1-2l-4-3l-4 7zM1055 1184l5 1l4-4l3-5l4 4l-1 4l3 3l4-2l2-8l-10-6l-3 1l-2-1l-2-7l-3-1l-3 1l0 6l-4 1l2 5l0 1zM1051 796l-1 8l5 1l2 5l6-1l-1-6l3-1l1-5l4 0l5-6l-1-5l-5-2l-2 1l-5-3l-3 8l-5 2l-1 3zM1067 1799l3-4l0-6l-5-3l-5 5zM1043 1228l6 0l2-1l1-3l7-2l-1-4l-8-2l3-7l-5-3l-3 2l-2 6l-3 5l4 4zM1056 1692l-5-6l-5 5l1 4l8 0zM1013 1134l-4 2l0 3l-6 3l0 3l6 4l0 2l-5 3l-1 2l1 3l4 3l-4 6l1 2l2 2l-1 9l5 6l2-1l5 2l3 6l3 3l2 0l2-1l3-7l3 3l7 2l4-3l1-5l1-2l2-7l-2-4l-6-1l-1-7l-3-1l-8 1l-4-2l-1-5l-2-1l1-6l5-1l1-3l0-4l5-1l5-6l5 1l2-7l-4-2l-3 0l-3-1l-7 7l-8-1l-1 6l-5-5zM1041 1928l6-3l1-3l-2-3l1-5l-8-1l1-5l-9-1l0 4l-6 4l0 3l6 1l2 6l5 0zM990 1231l-3 4l1 4l6 2l3 3l-1 7l3 2l5 0l1 4l3 3l1 5l2 1l4 4l1 7l4 0l2 5l-2 3l5 5l6-2l2-6l-2-5l3-4l0-7l3-2l5-9l-3-3l0-5l4-2l2-5l1-2l-3-7l0-3l-5-5l-1-2l-3-5l-9-3l-5 5l-3-7l-6 6l-4-6l-5 4l-3 0l-3 7l-4-4l-5 2l0 5l3 2zM981 1013l0 2l7 2l1 4l7 7l-1 2l5 8l-4 3l1 6l-6-3l-2 1l-1 6l4 2l1 5l-4 1l-2 6l-1 0l-4 7l5 3l-2 5l0 5l4 2l1 2l3 9l-2 3l0 6l2 7l5 2l2-2l6 0l4-4l-6-4l1-4l5-2l-4-6l1-3l-3-3l4-5l-1-2l2-2l0-5l5-2l-2-5l-4-1l0-4l7-2l-3-6l5-4l3-7l11-4l-1-3l-5-7l-2-6l-1-1l0-8l-5-1l-3-5l-5 1l-1-4l0-4l-1-2l-2-1l-5 2l-2-3l1-5l-7-2l-4-2l-4 2l0 5l-7 0l-1 3l2 6l5 0l3 5zM1018 996l7 1l3-1l0-6l-3-1l-7 3zM994 1402l-1 11l6 2l1-1l3 2l9 2l1-4l8 0l2-2l-4-4l-5-1l4-10l-9-12l-4 0l-4 5l-5-3l-6 4l6 7zM1012 1856l5 4l4-5l1-3l-7-3l-4 2zM1016 1885l-5-2l-3 3l-2 7l2 3l6 0l4-2l3-5zM1011 1721l-5-1l-5 5l4 3l3 5l5-3l-1-5l-1-1zM1006 1952l-4-2l-6 1l-2 6zM997 1758l3 4l6-4l-1-5l-4-2l-5 0zM966 980l1 0l5-3l6 6l4-8l3 6l5-1l1-1l-2-7l7-1l3-3l-4-6l-7 8l0 2l-6 1l-9-1l-3-2l-14-1l-1 2l2 6l-2 3l-3 0l-1 4l0 4l6 3l2-2l0-4zM974 1121l3-3l5 0l2 1l3-3l-2-8l-2-1l-4 2l-4 1l-7 6l5 5zM979 1238l-2 2l0 6l2 2l6-1l1-6l-7-3l4-6l-3-11l-3-3l-4 5l0 4l-5 3l-1 3l0 1l9 2zM966 1064l0-1l6-7l-2-3l2-6l-4-1l-6 4l-1-4l-7-1l1-4l-4-2l3-7l-8-2l-4 4l4 6l0 7l8 6l2 7l2 1l-1 6zM953 1072l-1 5l6 8l3-1l0-12l-5-3zM950 1203l0 6l3 3l8-2l0-5l-1-2l-5 0l-3-1zM949 1184l-6 0l-4-2l-3 8l3 2l0 4l8 0l4-8zM945 1222l1-7l-2-3l-7 4l3 4zM876 1114l-4-3l-3-1l-3 3l2 6l-3 3l0 3l1 2l1 5l4 3l1 3l-4 3l-1 5l5 1l4-2l3 2l17 0l0-7l3-2l1-4l5-6l-10-2l-1 1l-3 0l-5-2l-3-4l2-4l4 0l3-4l-2-5l-6-3l-5 4l0 3zM872 1013l9 5l4-3l-2-9l-6-3l-3 4l0 4zM843 1333l-2 7l8-2l1 1l3-1l4-6l-1-3l2-1l-1-8l-3 0l-3 2l-3 0l-5 4l2 5zM840 1179l3-4l-1-4l0-5l-3-2l-7 3l-2-4l-6 1l0 6l-3 3l0 3l3 2l2 3l4 3l4-2l2-3zM830 1314l-3 2l-1 6l-5-1l-3 5l1 5l-5 4l0 4l-4 3l0 2l9 11l4 0l6-2l0-5l-6-3l2-5l-2-7l3-1l4 2l3-2l-1-6l6-1l0-3l0-5l-4-1zM824 1307l4 0l3-6l-2-3l-5 0l-2 2zM747 1256l5 5l-1 3l0 4l-3 3l22 24l6 1l0-5l2-2l3 2l6-1l2 3l5-3l3 4l0 2l1 3l-4 4l0 5l-2 2l-3 9l5 5l5-4l5-1l1-2l1-6l-5-3l2-4l6-1l-1-7l-5-5l-2 1l-2-6l-4-3l-6 1l-3-6l-5-1l-1-6l-6 0l-2 5l-4 1l-1-1l1-6l-3-4l-1-5l4-3l4 1l0-1l-5-11l-6-3l-1-3l-1-1l-3 0l-5 4l-4-2l-2 9l3 2zM792 1348l1 2l3 3l4-3l2 0l4-3l-5-6l-2 0l-6-3l-6 1l1 6l2 0z" fill="#6f9464"/>
<path d="M1952 1136l2 6l0 4l1-5l-2-6zM1942 1101l-1 7l4 4l2-1zM1938 1176l5 9l0 3l1 1l4-13l-3-1l-1-7l-4-1l-2-2l-1-4l-9-3l-3 4l-6 3l3 8l7 0l1-1zM1929 1190l10 8l2-1l2-8l-8-4l-2 0zM1920 1120l5 4l-1 3l-5 0l-2-2l-6 3l-2-1l-1-4l3-2l3-4l-7-10l-5 3l-1 3l-5-1l0-3l-3-1l-7 3l5 5l-1 2l-5 4l1 4l4 4l4-1l7 1l5 4l2 7l-1 1l-2 7l4 1l4-6l0-2l4-6l6 0l4-4l4 5l2 1l3-5l6-1l0-4l-5-4l-2-4l1-2l-5-5l3-7l-2-2l-8 2l-2 4l1 4l-3 4zM1708 908l1 5l-4 4l0 3l5 2l8 0l3 5l6 1l8-1l1 0l8-5l2 5l-2 7l1 1l7 0l2-4l-1-2l6-3l4 4l3-1l2 2l1 5l2 2l4 2l-1 6l-3 1l-5 0l-5-4l-2-4l-5 0l-2 2l-7-1l-2 5l1 2l1 6l6 1l2 1l1 2l-2 2l-3 7l3 3l-1 3l2 5l3 2l-3 6l-2 9l7 8l-3 2l1 8l-3 3l3 6l3 2l-3 5l6 6l2 1l-1 7l3 2l1 4l5 6l2 0l1 5l5 2l6-7l-1-5l-1-2l2-5l3-2l0-5l6 0l2-3l2 0l2 2l5-1l2 1l-1 7l4 2l2-2l2-5l-2-4l1-2l5 1l4-4l-1-2l3-3l-1-5l5-1l1-4l-5-3l2-5l3-2l-5-6l5-5l2-8l-1-3l1-6l-5-3l-1-5l5-4l5 0l1-2l8 2l3-6l-1-8l-5-2l0-1l1-2l8-3l4 3l4 6l5 0l5-4l2 6l6 2l3-2l2 5l2 1l7-1l3-2l6 4l-5-9l-12-15l-2 2l-2 4l-2 2l-3-1l-5 3l-8-10l2-3l-4-7l-4-2l-4 2l-2-3l-4 3l-3-4l-5 4l-2 0l-2 8l-5-3l-3 4l3 5l-2 1l-3-1l-5 4l-10-2l6 8l-1 4l1 3l-2 4l-3 1l1 10l-2 1l-4-6l-6 3l-5-2l-2-10l4-5l0-3l2-3l-1-4l0-1l-9 0l1-3l3-3l0-3l-3-3l-6 3l-3-5l1-3l-5-5l5-3l-1-5l-5 0l-1-5l-3-1l-4 5l6 3l0 3l-3 1l-3 4l-2 0l-1-2l-7-3l-2 4l-5-1l-1-4l-5 1l0-6l-3-1l-2 1l-5 0l-2-7l-2 0l-3 3l-5-1l-2 3l-3 1l-3-2l-4 1zM1902 965l2 1l-2-4zM1857 1183l2 7l4 2l7 0l4-2l4 2l6-6l3 1l5-3l-4-7l4-4l-3-7l5 0l3-5l3 1l3-4l0-3l-2-2l1-4l-3-4l-4 2l-3 5l-5-2l-3 4l-2-1l-6 2l-1 5l8 7l-3 5l-2 0l-3-5l-7-1l-1 3l-7 3l1 8zM1868 1180l-3 5l-3-4zM1887 1098l7 0l2-2l2-5l-4-4l-3-4l-4 0l-2-3l-2 0l-4 4l2 5l2 1l0 5zM1830 914l4 3l4-1l5 3l2-7l2-1l3 1l3-5l5 2l5-2l2 5l7-1l2 3l6-17l-4-2l1-4l-3-4l7-4l0-5l-1-1l1-5l-4-3l-1-5l-6-3l-3 5l-4 0l-2 8l-2 0l-5 5l6 4l-2 5l3 3l-3 5l-2 0l-3-4l-8 6l-3-4l0-2l-3-2l-8 0l-1 7l1 3l-4 4zM1868 854l2 5l4-1l-5-6zM1856 1122l3 2l5 0l4-4l1-3l5-4l-3-6l-4 1l-2 5l-7 0l-3 4zM1871 1083l-8 0l0 6l-6 8l10 1l2-1l0-4l4-4l0-4zM1854 1142l-1 4l6 1l2-3l6 6l4-8l-4-1l-2-5l1-3l-3-3l-4 0l-4 2l-1 2l4 4l0 3zM1832 871l3 2l9-8l5 3l3-1l2-5l3-2l-2-6l3-3l-2-5l-7 0l0 2l1 5l-6 7l-2-2l-8-1l-8 2l2 7l2 2zM1817 1155l7 0l0-7l3-2l2 5l4 2l0 3l4 4l2-1l8-12l0-5l3-2l2-5l-5-4l0-3l-3-7l-3-1l-4 3l-1 4l4 7l-5 4l-1 6l-6 0l-1-3l3-4l0-3l-4-4l-2-1l-3 3l-8-2l3 7l-4 2l1 3l-1 4l3 3l0 5zM1844 1186l2 0l4-7l-11-8l-4-1l-2 2l8 7l0 4zM1836 712l8 1l-6-20l-3 0l-2 4l5 8zM1795 734l3 4l0 5l3 1l1 3l5 3l1 4l2 2l9-1l1 1l1 5l5 6l8-14l-4-2l-3-3l-5-1l-3-3l-3-4l0-4l-6-1l1-5l2-1l10 7l5-3l3-4l1-1l-1-4l-5-4l-5 2l-7 1l-3-4l1-2l-5-4l-3 1l0 7l-8-4l-4 5l1 2l5 5zM1766 898l1 4l2 1l6-5l3 3l-1 3l4 4l6 2l4-3l2-3l4 0l3-4l-3-4l3-4l7 0l3 4l7 2l2-1l-1-8l-3-3l2-4l6-3l0-3l-6-4l-2 0l-3-6l-5 0l-3 6l-6-1l-3 1l-1 7l-1 1l-8-1l-1 6l-4 1l-2 3l-3 1l-2-1l-6 2l1 5zM1810 760l-9 3l0 2l4 2l2 7l9 0l2-6l-2-2l-4-1zM1811 1067l-4-1l-3 2l-1 3l4 3l5-3zM1803 1153l2-11l-7-2l-3 2l-3 5l4 6zM1752 860l3 3l8-3l1 0l6-5l6 3l4-6l-1-5l4-1l6-4l-2-6l4-2l1-4l-4-6l-7-1l-4 4l-5-3l-1 2l-2 5l-6-4l-3 1l0 6l-3 1l-1-1l-7 0l1 7l-5 1l0 4l-5 4l1 3l-2 4l4 5zM1696 1168l0 3l2 4l-2 4l-5 0l-1 6l2 1l6-3l2 1l0 5l3 4l0 3l6 7l4 2l3-1l5 1l7 6l5-2l4 0l2-2l1-5l-3-5l1-2l6-1l3 2l3-4l-1-6l-5 0l-6 3l-2-6l-5 0l-1 6l-7-1l3-6l-1-4l4-3l3 2l5-1l2-4l8 6l4 7l2 0l4 4l0 1l6 5l-1 2l-6 2l0 2l8 4l3-1l4-3l4 2l4-1l2-3l5-1l1-1l4-3l-1-5l-2-1l-4 3l-4-3l0-4l-3-4l2-3l-1-5l-2-3l-4 3l-2 0l-2-7l-4 1l-1 2l2 8l-3 2l-2-1l-1-7l-3-2l1-6l2 0l4-4l2-6l-1-3l-2-4l0-4l-8-6l-4 1l-2 4l0 5l3 3l-1 4l-3 1l-4-4l-5 2l-6 5l-2-3l-6 2l-4-4l1-4l-8-2l-5 4l0 4l6 2l3 5l-3 5l-4 0l-9-2zM1788 1132l-5 2l-3 3l1 4l8-2l2-4l-1-2zM1778 676l-8-2l-2 3l1 2l5 2l0 5l3 2l6-4zM1735 701l3 8l-4 3l-3-1l-3 6l-2 0l-2 6l3 5l-4 3l-2 4l-6-1l-2 1l-5-7l-3-1l-3 3l-1 4l3 3l0 2l-2 2l1 6l4 1l2 5l-3 2l-1 4l4 4l-5 4l6 16l6-6l4 1l2-1l4 4l7 1l4 5l4-2l7 0l6-4l-3-7l5-3l-1-6l3-7l-3-4l-4 0l1-7l2-2l0-4l-5-4l1-5l-8-2l1-6l3-1l9 3l5-2l8 4l3-2l7 0l0-6l-7-4l1-4l5-1l1-2l1-7l-1-2l-6-1l-2-5l3-8l-4-2l-4 1l-2-4l-5-3l-7 0l-7 7l-2-2l0-4l-7-1l-2 5l2 7l-3 4l4 5zM1738 771l-2 3l-3-1l-2-6l6-3zM1723 762l4 4l-5 5l-3-3l2-5zM1776 1087l1-5l-4-3l-4 1l-2 5zM1771 1122l0-6l-5-1l-4 1l-4 10l4 3l3-1l1-3zM1718 1131l7 11l5-1l2-1l4 0l3-5l0-5l5-1l3 0l8-5l-1-8l-4-1l-3 5l-3 1l-3-1l-3 3l-2 4l-6-1l-4 2l-5-1zM1742 1010l-5 1l-2 5l6 4l1-2l8-2l0-1l-1-3zM1735 811l5-1l3 3l4-3l-2-4l1-4l-3-3l-4 2l-6-3l-2 2l-1 2l2 5zM1725 994l7 5l1-1l2-1l1-5l-1-6l7-1l-1-6l-3-4l-8-5l-6 0l-4 5l2 4l2 1l4 8zM1723 959l6 5l2 4l5 0l3-7l-5-3l-1-3l-4-2l-2 1zM1726 659l4-7l-3-8l-6-3l-5 3l1 4l2 3l-2 5l1 2zM1572 740l3 8l3 0l-1 6l-2 2l2 12l-3 5l4 2l5 0l1 1l7 2l3-5l6 3l4-2l2-2l7 4l2-2l6 4l6 0l-2 8l5 4l-2 6l7 3l3-2l6 2l1 7l-1 4l-5-2l-1-4l-4-3l-2 2l-7-1l-1 5l-3 4l4 6l-2 2l-4 2l0 5l9 3l-9 7l1 1l8 1l1 3l-4 2l1 11l7 0l-1 7l-4 1l-2 8l2 3l0 3l-5 6l-4 2l1 6l4 3l5-4l4 2l-2 6l-2 1l-2 6l-7-1l1-5l-4-2l-7 2l-1-1l0-3l5-3l0-3l5-4l-2-5l-5 2l-5-6l-8 8l-1 0l-4-7l-3 0l-3 6l-5-5l-5 6l1 3l-2 4l3 5l5 0l0 7l-1 1l3 5l-4 4l-2 9l4 4l6-1l3-5l3 1l1 1l6 3l1 2l3 0l2 2l4-1l3 5l1 0l5-4l6-1l0-4l-2-6l4-1l4 8l-1 3l7 2l4 3l4-6l5 5l5-2l2 6l-4 3l1 7l2 1l-4 7l4 5l0 1l-5 2l-1 6l-1 1l-9-4l-2 3l3 4l-3 2l0 6l-6-2l2-7l-7-3l2-9l-2-8l1-3l-1-2l-6 0l-3-5l-3 1l-2 6l-3 0l-7-6l-4 1l-1 3l-4 2l-3-7l-4 1l-2-1l-4 0l-4 3l3 7l-4 7l2 5l0 3l6 3l-4 4l-3-1l-4 2l-2 5l6 3l4-4l4 2l6-6l0-5l2-1l5 1l5-2l3 2l-1 4l-10 13l2 12l6 1l3-2l11 1l1 6l2 1l3 0l4-5l1-1l4 5l2 1l3 5l3 1l9 0l1-5l3-4l3 3l-1 4l8 10l8-3l2 7l3-1l5 3l2-2l5 5l4-8l2 1l8 2l1-11l-3-2l-1-6l-4-2l-2 1l-5-2l-2-3l4-5l-3-3l-6 2l0-9l-7 2l-3-3l0-2l3-3l-1-4l-7-2l-2-3l3-3l-2-6l-6-1l2-3l6-3l-1-2l-5-3l-2-1l3-7l-1-2l4-4l0-4l4-1l2-5l-1-2l1-4l4-1l1-3l5-2l4-3l0-4l-5-4l-6 0l-4-2l2-3l-2-7l-4-4l3-3l-3-7l4-2l0-5l-3-3l3-4l-1-4l-2-2l3-5l-6-4l6-5l-3-3l0-2l-7-4l7-5l-6-9l4-9l-1-4l4-5l16 1l2-1l2 2l2 2l-4 5l-1 2l3 2l0 6l-2 2l0 4l2 2l7 0l1 3l5 3l11-4l0-5l5-8l-1-4l5-3l1-4l-3-3l-2 0l-4-3l-2 0l-6-1l-2 7l-5 0l-1-4l-3-2l-2-5l4 0l0-6l4-2l-5-4l0-6l-2-1l-4 0l-4-6l-4-1l-3 1l2 9l-5 0l-1-4l-5-1l-3 5l-4-2l0-21l9-6l1-7l2-1l5-4l-1-1l-8 0l-1 5l-6 1l-2-1l-6 1l0 6l-4 2l-1-1l-2-5l-4-2l-3 2l-5 1l-3-1l-3 3l-9-3l-5 4l-6-4l-4 1l-2-1l-1-7l-4-1l-5 3l-2-3l-5-2l-8 3l-5 0l-1 2zM1650 856l6 1l3-3l2 0l0 5l-4 6l-6-5l-2-3zM1656 834l-4 3l-4-6l3-1zM1639 898l1-5l5 1l3-3l2 1l3 5l-5 3l0 3l-4 4l-3-1l-2 3l-5 1l-2-3zM1599 747l2-2l1 0l4 5l0 2l3 4l-4 4l-2-1l-3 2l-6-1l5-6zM1714 1212l4 3l3-2l3-3l-6-2zM1713 1212l-1-1l-6-1l-1 9l7-3zM1704 1033l1-7l-7 2l-2 2l1 1l4 2zM1677 1138l2 5l-1 2l1 7l3 2l0 4l-5 1l1 5l5 2l1-4l7-2l4-3l6 3l3-5l-5-6l-5 3l-1 0l-2-6l-1-2l0-3l2-2l1-8l3-4l-3-4l-3-2l-4 2l-1 6l-3 3l0 2zM1626 1130l3 4l4-2l3 4l1 3l2 1l0 4l2 4l4-1l3 3l-1 4l-7-1l0 4l-4 3l0 3l-5 2l-1 5l5 3l-1 3l5 4l0 3l-3 1l-3 6l5 4l-2 3l-4 0l-2 1l-2 4l5 4l5-5l2 1l7-4l0 2l4 3l1 4l4 1l1 8l-2 2l1 3l-1 6l-1 2l2 3l0 5l6 2l3-2l1-2l4-5l4 0l3-5l6 1l2-5l7 3l5-6l2-1l2-8l-8 0l-2-2l0-3l-3-2l-5 1l0 6l-6 2l-3 5l-5 1l-2-1l-3-1l0-7l-3-3l-2-5l-2-1l-2-6l-3 0l-1-3l2-10l4-3l-1-3l-8-2l-1-2l4-4l4-2l1-5l-1-10l4-3l1-4l1-3l-2-5l-6-1l0-3l-6-5l-3 2l-6-1l0-6l-4-2l-5 6zM1699 920l-1-3l-4-3l-2 1l-2 5l-8 1l2 6l6 3zM1683 1114l7 4l3-3l4 0l2-4l-4-10l0-9l-2-1l-6 1l-2 5l-1 3l-2 2l1 6l2 2zM1692 672l-3-1l-4 3l2 7l6-1zM1672 559l5 1l2-1l2-6l8-3l-7-6l-2 2l0 6l-8-1zM1657 1102l1 1l6-1l2-4l-5-4l-1-7l4 0l3-5l4 4l0 2l1 2l8 1l1-3l0-2l3-9l-7-5l-11 7l-3-1l-4 1l-1 5l-9 3l0 3l3 2zM1674 543l6-3l-3-4l-7 3zM1670 1059l3 7l5 0l1-1l-4-7zM1667 573l7 0l0-7l-2-1l-2-5l-2 0l-4 2zM1635 1079l4 1l1 5l3 2l5-1l-1-8l4-7l4 2l4-3l1-3l-3-2l-3-5l0-4l-8-4l0 9l-4 1l0 3l-2 2l-7-3l-2 2l0 4l4 4zM1657 512l-4-6l-3 4l-6 0l-2 2l3 5l5 0l2 1l4-1zM1655 551l0-9l-6-1l-2 8zM1636 1023l0 6l3 5l5 0l3-4l-4-5l0-4l-4 0zM1610 1246l2 2l-1 4l1 7l2 1l5-2l2 0l4-7l-4-4l3-5l5 0l1 1l9-1l-3-7l2-6l-4-2l0-3l-8-4l-1 3l-5 1l0 5l-6 4l-4 6zM1622 1100l-5 2l1 6l5 1l6 6l3 0l3-2l-3-10l-2-1l-5 3zM1622 671l0 5l3 1l2 4l5-1l2-2l-1-4l-4-1l-6-4zM1606 1152l1-3l3-2l3 2l8 0l3-3l5 0l2-2l0-4l-3-3l-5 1l-5 5l-5-4l-8 0l-4 3l-4 5l5 4zM1595 1102l6 0l1-4l3-1l4-1l5 2l4-3l2-4l7 2l2-2l-1-8l-5-4l-1 0l-1-4l-8-4l-1 7l-1 3l-5 2l-3-2l-6 4l-7 0l-1 4l-2 3l1 5zM1620 854l-6 5l7 6l6-4l-1-6zM1588 1183l-3 2l1 3l5 2l1-5l4-1l3 2l0 2l-2 3l-1 4l-3 3l-5-3l-4 0l-1 1l0 4l-2 2l-6 1l-1 5l2 1l2 6l7 0l1-5l1-1l5 3l4-3l4 1l0 6l4 2l4-1l7-3l3 3l1-1l5-7l2-6l-5-4l-1-2l-6-7l0-4l2-1l1-7l-10-1l-4 1l-4-4l3-5l-5-7l-3 1l-1 4l-8 5l-1 4l4 3zM1602 1189l6-1l1 3l-2 4zM1611 700l6-4l4 3l4-3l0-4l-5-4l-1-3l-9 6l-1 7zM1610 1270l4 5l5-3l1-5l-4-2l-7 3zM1589 1128l-8-7l-2 1l-1 3l3 4l-1 4l3 4l6-3l3 4l4-5l4 0l2-1l0-2l-1-5l1-3l5 1l3 5l4-1l1-6l-4-4l0-2l-10-6l-3 0l-3 7l-2 7l-2 1zM1599 1386l-1 2l0 8l2 1l3-9zM1605 590l0-2l-2-2l-5 0l-2 6l-1 1l-2 6l7 2l4-2l-2-5zM1591 1247l4-4l0-2l-8-1l-4 7l1 0zM1584 1021l3 6l7-2l-3-9l-1 0zM1592 605l0-5l-2-1l-4 0l-3 5l-3 1l0 2l4 5l5-3l0-1zM1589 1331l-4 4l-6 0l0 5l-1 1l6 7l4-2l3-4l-1-10zM1585 863l-5-1l-6 4l6 5l0 2l2 2l9-2l0-2l-3-5l-2-1zM1575 541l8 2l4-5l3-7l-6 0l-1 0l-6-1l-4 6zM1581 1102l7-5l-8-3l-3 5zM1567 607l2-2l3 1l6-3l0-5l4-2l1-4l-3-4l0-4l-1-3l-6 1l-3-4l-4 2l2 8l-3 3l1 6l-7 7l2 2zM1582 993l-3-3l-6 0l-2 7l-7-3l-2 9l7-1l3-4l7 0l4-4zM1570 900l5 5l6-1l-2-7l-6-1zM1530 783l-4 1l-11 7l-1 2l3 4l5 0l3 2l0 8l2 3l6 0l2 1l4 3l0 3l6 2l3-3l4 0l1-2l5 3l4-2l1-3l12-3l-1-6l4-5l-1-7l1-2l-2-7l-4-5l-5 1l-3-4l-5-2l-4 5l-5-4l-7 0l-1 1l-3-2l-6 3zM1553 796l1 6l-1 1l-5 0l1-6zM1577 1289l0-4l-8-3l-3 4l2 7l2 2l3 0zM1570 513l5-5l0-3l-3-3l-1 0l-3 9zM1571 1213l2-5l-8-2l-4 5l7 5zM1555 1227l4 1l3-1l4 3l6-2l-1-6l-3-3l-12 3zM1561 731l10-5l-3-6l-4 1l-2-1l-2-3l-4-1l-2 4l2 8l1 1zM1563 541l4 6l3-3l0-7l-5-1zM1568 654l-3 0l-2 5l0 8l6-1l1-6zM1565 532l4-1l1-7l-4-1l-4 6zM1564 949l-7 0l0 5l4 1l2-1zM1540 974l-1 4l1 1l4 3l6-4l2 1l5 0l0-7l3-3l-1-3l-5-2l-4 2l1 4l-2 4l-4-2zM1558 673l-6-1l-4 3l-1 3l5 3l6-4zM1530 1308l10-2l2 2l7-6l2 1l4-5l-2-5l-6 5l0 2l-7 0l-2-4l-9 4zM1540 1215l-7 8l0 2l6 3l2 0l4 1l5-4l3-8l-4-4l-4 2zM1548 1087l5-4l0-4l-3-2l-5 4zM1537 557l1 7l1 0l6-4l5 1l1-1l-3-7l5-3l-3-8l-6 1l-3 5l2 4l-1 3zM1543 1273l-6 5l1 4l2 1l5-1l2 2l6-2l-3-6l-4 0zM1539 1045l4 0l6-5l2 0l1-11l-3-2l-5 4l-3 5zM1544 571l-4 5l6 10l3 0l2-3l-1-6l-2-1zM1547 1051l-8 1l0 3l-6 4l0 6l8 0l2-4l4 1l4-5zM1540 1117l0-7l5-2l1-1l-6-7l-3 4l-5 0l-1 5l2 4l6 4zM1529 866l2 4l8-5l-6-5l-3 1zM1534 886l-6 2l1 5l9 1l0-3zM1519 603l4 2l5-1l-3-8l-8 2zM1522 1060l-3 1l0 6l4 2l4-4zM1525 1150l2-3l-3-3l0-6l-5-1l-5 2l1 5l-3 3l4 7l5-1zM1517 982l-5 4l1 6l4 3l2-2l3-7zM1520 815l-7-1l-4 5l3 6l7-3l2-6zM1481 758l-1 0l-3 5l4 5l-1 3l3 5l-1 3l4 2l2 3l10-4l4 1l4 5l6-7l5 0l1-8l-2-5l0-4l3-3l-1-5l-7-5l5-2l-1-4l-4-1l-4 5l-4-3l-11 2l-1 1l-4-2l-6 2l1 6zM1511 976l5-6l-5-5l1-2l-2-5l0-2l-2-2l-6 1l1 4l0 2l5 5l-2 5l2 3zM1506 1027l2 2l5 0l2-6l-9-1zM1513 637l-2-3l-7-2l-2 3l1 4l-1 2l1 7l7-2l3-6zM1509 878l-2-3l-6-1l-1 4l-4 4l0 1l2 3l5 0l5-3zM1499 937l5-2l2-7l-10 0l-2 1l1 3zM1501 834l-4 2l-3 4l5 4l4 0l2-1l-1-7zM1487 1164l1 6l3 3l-1 3l4 5l8-4l-2-5l2-4l0-1l-4-3l-5-5l-1 0zM1486 1060l-2-2l-7 2l-2 4l5 5l6-3l3 2l4-4l7-2l1-2l-7-7l-3 7zM1495 1229l-6-9l-6 1l-1 5l-1 1l0 5l5 0l1 4l3 0l4-4zM1481 556l9 1l1-2l-3-7l-4 3zM1487 879l3-3l-3-7l-4 2l-5 0l-1 3l0 5l6 1zM1489 709l1-6l-3 0l-7 3l1 4zM1476 951l-2 6l3 2l3 0l4 5l5-3l-2-5l-3-2zM1481 982l3-3l1-3l-7-5l-4 7zM1478 780l-2 8l1 2l4 0l3-4l-4-6zM1472 706l-3-2l-6 1l2 6l3 2l0 3l5 5l6-6l-1-3l-6-2zM1353 748l6 2l7 4l3-1l1 2l0 4l5 4l-3 6l0 2l2 1l4 7l7 2l1 4l3 5l-7 9l2 6l3 4l-3 4l4 4l-1 4l3 3l6-5l8 0l1-2l6 6l4-2l0-4l5-5l4 7l4-2l3-6l7-1l5-2l2 1l5-2l2-2l2-1l4 2l6-4l2-5l8 1l1-1l0-5l-2-1l-8 1l-2-1l0-1l7-5l-5-6l-5 3l-4-7l-2 0l-3-3l-1-7l-8 0l-2-4l-2-1l-5 2l-6-1l-2-1l-2-5l-6-1l0-4l-4-3l-3 0l-2-5l-4-1l0-4l-3-2l-3 0l-5-4l0-2l-2-2l-6 0l-1 0l-1-3l-3-2l-4 1l-4-3l-7-2l-5-3l-8 5l-2-1l-8 2l-2-7l-6 4l0 2l-3 4l4 3l-1 7l5 2l4 9l2-1l6 1zM1374 730l6 1l1 3l3 3l0 3l-7 0l-4 2l-2-1l-1-3l2-7zM1474 1028l-2-1l-6 3l0 2l5 5l4-2zM1471 1023l3-4l-2-3l-2-2l-6 5l1 3zM1465 870l4 5l3-3l2-5l-6-3l-2 1zM1454 1074l2 0l6-3l0-6l4-9l-3-5l4-4l0-1l-7-2l-6 5l1 5l8 6l-10 0l-2-1l-3 2l0 4zM1455 940l9 1l0-6l-6-3l-4 4l-1 3zM1445 843l1 4l1 1l4 0l5-6l6-3l-4-7l-6 4l-4 0zM1458 1023l1-5l-5-1l-2 5l1 3zM1457 864l-5-5l-2 2l-1 7l3 1zM1453 998l-2-6l-8 0l-1 6l3 6l3-1zM1446 922l-2 2l-2 4l2 3l5 0l1-3zM1448 1235l-5-2l-3 3l3 6l2 0l2-1zM1439 820l-6 2l2 7l5 1l4-3zM1441 887l-3-4l-2 1l-7 8l4 6l6 0zM1415 941l-3 5l1 2l7 2l4-2l7 0l0-5l3-4l0-2l-4-3l-3 1l-5 6zM1425 923l6-1l3-5l-1-3l-8-1l-1 9zM1433 849l-3-6l-12 6l1 3l5 2l5 0zM1425 737l0-8l-7-2l-2 3l0 5l5 2zM1385 1204l3 10l5 3l0 3l5 2l4-2l-2-6l5 1l2 3l6-2l2 1l4-5l-1-6l-5-3l-3 2l-5-4l-3 1l-8-5l-4 1l-4-4l-6 3l2 6zM1418 885l-4-2l-3 0l-2 3l4 6l3-1zM1414 1313l1-4l-6-5l-1 10zM1413 979l0-3l-6-4l-3 1l1 7l4 2zM1405 1133l-2 8l6 3l1-2l1-7l-3-4zM1406 1042l-2-3l-5 2l-3-1l-2 2l-1 6l5 1l3-2l5 0l1-2zM1378 930l3 1l10-4l7 3l2-2l-1-7l6-4l0-5l-8 2l-1-6l-3-4l-9-1l-1 2l-3 17l-3 3zM1404 1244l1-5l-5-2l-5 3l0 6l2 3zM1396 697l2 7l6 0l1-5l-4-3zM1392 1117l0 5l4 4l3 2l3-2l2-4l-2-4l-5-4zM1398 975l-4 2l2 8l4-2l2-3zM1362 1147l6 4l0 2l3 6l-2 4l1 3l-5 4l-5-5l-2-1l-3-6l-2 0l-4 3l-1 11l7 2l3 3l6-4l8 8l5-3l3 2l9 0l2-4l2-8l2 0l2-4l-1-9l-8-1l-3-5l4-3l1-4l-2-2l-5-1l-5 5l-3 4l-4 0l-1-8l-5-1l-1 1zM1380 1157l6 2l-3 6l-3 0l-2-6zM1231 938l-3 3l2 4l-6 4l-2-1l-3 1l1 6l6 2l-6 10l1 4l3 2l7-3l1-2l5 0l-4 10l8-3l3 5l7 3l3-6l2 2l4-1l3 4l4-3l3 3l11-4l6 6l5 0l3 5l-2 4l-5-1l-4 6l-1 0l-3-2l-8 2l-1-1l-4 0l-4-3l-6 1l-2-4l-5 1l-4-3l-4 2l0 4l3 4l5 0l4 2l7 2l2 2l0 1l7 5l-1 2l2 4l4 0l3 3l0 3l3 2l1 2l4 1l0 6l2 1l4-2l3 6l-3 1l-5-3l-3 3l-6-7l-9 4l-3-2l-5 2l-3-7l-4-3l-5 7l-4 0l-3-2l-7 13l5 4l0 3l-6 2l3 6l-7 0l1 6l-7 7l0 2l7 3l-4 6l3 2l1 5l-2 1l-3 5l7 3l-4 7l4 2l4-1l4 3l0 3l6 2l3 4l6-1l2 5l6-1l3 2l0 2l7 2l2-1l4 6l3 2l2-1l0-3l-6-6l-3 1l-2-7l-3-1l2-7l-2-3l8-3l0-4l4-3l2-4l2-1l2-6l-3-3l-3 0l-1-2l-8 1l-1 4l-4 0l-4 4l-2 1l-2 2l-5 0l-3 3l-5-1l-4 5l-3-1l-1-5l-3-4l2-2l-4-12l12-3l0-2l-3-5l3-2l3 0l4-1l3 2l4-2l1-3l2-2l3 2l4-2l3 4l2 0l2-8l5 7l4-3l7 6l3 0l2-2l0-8l-8-5l1-1l1-1l5-5l-1-4l9-1l2-5l4 1l11-1l2-5l7 2l3-5l3 1l4-6l4 2l4-3l3-1l2 2l7-3l-1-2l3-7l2 0l2-5l0-4l6-1l2-3l-4-5l-2-1l-5 2l-2-1l0-3l8-3l1-1l6 1l2-3l5-4l3 0l2-2l1-5l3-5l-7-7l-1 0l-5-3l-1-2l-4-1l-5 4l-1 3l-6-1l0-6l-3-2l-12 1l-8-1l-6-5l1-3l-2-4l-3-3l0-7l-6-5l4-6l-3-3l-1-1l-1-8l-3-1l-7 1l-1 2l-7-1l-4 5l1 4l-2 2l-6 0l-2 1l-1 3l-3 2l-2-1l-3 1l-2 5l2 3l-1 3l-6 7l4 5l-2 7l-3 0l-5 2l0 3l-6 4l-1 0l0-5l0-3l-5-1l-3-3l0-5l-2-1l-2-4l-5-1l-3 2l-4-2l-4 2zM1389 1101l4-5l-5-3l-11 2l-1 4l4 4l4 1zM1386 1108l-3 4l3 4l5 0l1-7zM1382 690l4 4l5-3l-1-5l-4-3zM1389 838l-1-2l-2-1l-4 0l0 8l4 2zM1376 566l1 5l6 6l4-4l0-4l-5-4zM1368 837l4-2l3 1l11-8l-5-6l-9-2l-4 6l-9-1l-1 7l5 4zM1375 1061l-7-2l-3 5l0 5l3 5l6 0l2-3l-3-4zM1372 1130l3-7l-4-2l-4 1l-1 7zM1340 791l-4 2l1 6l3 3l6 0l5 4l4-2l3 1l0 6l3 4l3-1l2-6l-2-3l-2-1l4-13l-4-3l-4-4l-5 3l-2-1l-6 1l-2 4zM1353 792l4 1l2 2l-5 4l-1-2zM1362 1140l-3-9l-5 2l0 7l3 1zM1361 1121l-1-7l-5-1l-4 5l-2 3l3 5l7 1zM1361 1225l-2-8l-3 0l-4-2l-3 1l0 7l5 4l4 1zM1353 1152l7-2l0-1l-4-5l-4 2l-1 2zM1350 1259l2 2l7 1l1-3l-1-5l-5 0zM1349 1677l1 1l8-6l0-3l-6-1l-4 4zM1357 1691l-6 0l-5 3l1 8l5 2l3-3l3-8zM1350 1265l-3 5l6 2l5-2l0-2zM1346 1286l1 4l3 2l3-1l4-7l-3-2zM1349 1237l-4-8l-6 6l1 2l5 3l-3 5l3 4l0 2l7 0l2-2l-6-10zM1349 1142l1-2l-3-6l-4-1l-3 7l-3 1l-3 6l3 3l8-1l1-5zM1325 1108l2 7l2 2l3-4l5-3l2 2l7-2l0-1l0-2l3-7l-5-5l-3 2l0 5l-5 2l-4-2zM1347 898l-5-5l-4 5l1 5l4 2l4-2zM1332 1199l11-3l3-7l-4-2l-12 3l-2-1l-5 3l-1 4l2 4zM1319 875l3 10l7-1l5 6l7-1l3-8l-4-4l3-6l-3-5l3-5l0-7l-1-3l-5-3l-3 1l-6-2l-2 1l0 2l-4 6l-4-1l-2 1l3 7l4 0l1 4l-2 3l0 2zM1342 1294l-3-7l1-3l-7 1l0 5l-3 1l0 7l4 2zM1321 1269l5-2l4 2l11-6l1-4l-4-2l0-7l-6-1l-2 3l-6-3l-7 1l-3 5l4 5l-1 4zM1332 1173l0 6l3 2l4-1l0-7l-4-2zM1339 1688l-1-7l-2-1l-7 0l-1 2l3 6l-4 5l8 4l0-8zM1333 1661l0-3l-2-3l-6 3l0 6l4 1zM1289 1612l4 4l-1 2l-3 3l1 6l8 0l8 1l2-1l8 2l2 5l7 3l8-5l-3-5l-7 1l-3-1l-2-7l-4 0l-2-2l-6 1l-2-5l0-5l-8 1l-5-3l-3 2zM1318 1653l5 2l6-4l-4-5l-2-1l-3 2zM1321 1701l5-5l0-1l-13-7l-7 3l2 5l-1 3l-2 3l-6 1l1 4l8 2l5-3l0-3l3-4zM1317 1177l7-7l-3-3l-8 0l-4 8l0 2zM1314 1328l1 3l7-3l1-2l0-4l-1-1l-6 1zM1300 1228l2 9l6 6l2-2l3-1l5-3l5-5l-1-3l-6-3l-7 2l-3-2zM1286 1310l4 3l2-4l7-2l1 3l6 2l2-3l12 2l3-2l-1-4l-5-4l-3 1l-9 0l-2-5l-3-3l-8-1l-10-5l-3 3l0 3l-7 7l1 7l2 2l4-2l2-3l2-1l2 1zM1310 1135l-1 5l2 6l6-2l2-4l-2-4l-3-3zM1318 810l0-10l-5-2l-7-3l-3 1l-1 3l-4 2l2 8l5 2l2-1l3 1zM1290 1660l-4 5l1 4l3 1l2-1l6 1l-2 5l5 4l-1 2l-5 3l0 4l-9 1l0-2l-3-3l-5 0l-4 5l0 3l3 3l6 1l0 3l2 3l-1 5l-3 1l0 7l8 1l2 1l6-6l-3-4l1-3l3-2l2-5l0-5l5-2l0-5l5-3l0-6l6 0l1-5l-2-4l-6 2l-4-5l-6 4l-2-4l0-5l-4-1zM1305 1595l9 0l0-2l-3-4l5-6l-3-7l1-4l-8 1l-4-5l-6 4l3 6l5 0l1 2l-1 6zM1313 1208l3-5l-6-4l-3 5l-4 0l-1 1l3 7l5-2l1-2zM1309 831l-7-4l-4 0l-6 5l-2 7l6 4l3 0l4-3l0-3zM1303 1215l-3 6l6 3l2-4l-2-4zM1300 1090l-1 6l2 5l7-5l-1-4l-5-3zM1290 1139l2 4l7 1l4-3l1-6l-8-2zM1281 1239l7 10l0 4l-3 1l-2 9l4 2l2 7l4 8l8-2l2-3l-4-4l1-4l-2-3l2-3l1-6l-3-3l1-5l-4-2l-1-3l2-5l-3-3l-4 1l-4-1l-4 2zM1288 1577l-7 6l0 2l10 1l3 7l5-1l2-3l-7-6l-1 0l-2-3zM1268 1535l2 11l-5 2l2 5l6 1l2-2l6 0l2-2l0-4l5-5l3-2l5 3l3-8l-7 0l-6-4l-2 2l-7-1l-3 0zM1288 860l8-2l1-3l-1-1l-1-5l-1-2l-6 0l0 7l-2 2zM1286 1743l1 1l7 1l3-4l-7-2zM1196 901l-4 2l-5-4l-6 0l4 8l6-1l1 4l4 3l4-2l7 8l3-3l11 2l1 3l3 1l6 15l8-1l1-2l-3-6l2-4l6 1l3-6l2 0l3 5l4-3l2-5l5 1l4-3l8 2l3 2l4-8l3 0l3-7l-3-2l3-8l-5-2l0-2l4-5l-2-5l4-7l-2-1l-8 0l-1 3l-3 0l-4 5l-4-3l-6 0l-1-4l-2-1l2-5l-6-8l-4 0l-4-4l-3 2l-6-3l-3 4l3 4l-1 5l-3 1l0 3l4 8l4 2l5-1l2 4l-3 6l4 4l-1 2l3 4l-2 3l-4-2l-1-2l-4-2l-1 1l-4 4l-3 1l-6 6l-3 1l-4-6l10-5l1-13l-2-2l-6 3l-2-3l-5 2l-3-3l-4 4l0 3l4 4l-3 4l-5-2l-4 8zM1277 1720l-1 4l2 3l8-2l-6-6zM1272 1766l-2-7l-4-1l-1 1l-2 2l2 6l6 1zM1258 1644l0-3l4-3l-3-5l-5 2l-2 3l-2 1l-3-3l-7 1l-1 4l9 3l-2 3l1 5l3 1l7-2l0 2l-1 4l0 2l5 2l3-2l-1-5l5-3l0-5l-5-1l-6 6l-1-4zM1267 1609l0-1l-2-6l-5-1l-1-4l-3-1l-4 1l-2 1l1 5l-1 4l4 4l1 3l1 1l8-5zM1264 1547l-2-2l-2-1l-7 3l-2-3l-7 0l3 8l2 2l0 2l2 2l5-1l3-4l2 0zM1241 818l-2 5l1 1l8-2l2-3l9-1l2-4l-2-4l2-5l-1-3l-4 0l-3-4l-6 1l-1 4l5 5l-4 5l0 2zM1226 1728l1 6l7 0l3 2l1 4l5 1l0 2l2 3l8 1l-4-7l-4 0l-1-6l4 0l3 3l2-1l3-5l-1-4l1-1l-3-5l-5-2l-2 2l-4 0l-4 2l1 5l-4 2l-4-4zM1248 774l-8-2l-1 2l0 4l3 2l7 0l1-2zM1248 710l-4-1l-6 3l1 6l10-2zM1195 1603l2 2l-2 6l1 3l3 1l-1 6l-2 1l-1 3l6 5l9-3l1-2l-4-5l0-3l6-2l4-3l6 4l2-1l6 11l5 2l8-1l3-7l-4-2l-1-4l3-3l1-2l-2-3l0-5l-3-3l3-4l0-2l-4-4l-5 4l-1 2l-1 1l-5-4l-3 3l1 6l-14 5l-6 1l-3-8l-3-2l-3 0l-4-2l-1-4l-5-2l-3 0l0 8l-3 1l0 5l5 4l0 3l1 1l5 0l1-6zM1220 1591l5-4l3 2l9-6l-2-5l7-3l-3-4l2-4l2 0l3-3l-1-6l-4-2l-4 1l1 8l-6 6l1 5l-4 1l0 4l-4 4l-4-4l-6 7zM1197 805l4 5l-1 5l-2 1l0 7l5 3l0 2l5 3l3-2l6-1l0-3l-2-4l5-4l5-3l2 6l6-2l0-4l6-4l2 0l2-6l-4-3l2-6l-1-3l-6-2l-1-4l5-6l-8-1l0-5l-3-4l-6 2l-2 7l0 5l-1 2l1 4l6-1l2 3l0 1l-6 5l-6-5l-4 10l-5 0l-1-3l-1-3l-6-1l-2 2zM1222 1757l3 1l5-4l4 7l5-2l4-6l-4-5l0-3l-3-3l-4 5l-3-2l-4 2l-5-3l-2 0l-2 6l5 3zM1229 849l2 0l5-6l-1-2l-6 0l-2 5zM1227 1153l1 5l-3 5l5 3l5-8l0-3l-3-4zM1227 1538l-5 5l1 4l7-2zM1212 733l11 4l5-4l1-3l-3-2l-6-1l-1-1l-7 0zM1222 512l6-1l-1-7l-3-2l-4 7zM1217 1521l-1 5l5 6l5-6l-2-4l-5-2zM1183 1015l-2 12l-6 0l3 8l-2 4l1 2l6 3l5-4l3 5l4 2l4-2l5 4l6-2l4 1l2 2l5-1l3-7l1-8l-5-2l-1-5l-1-1l1-6l-6-4l-5 0l-3-2l-1-2l-3-2l-4 1l-5-2l-4 5zM1215 1570l-2-3l5-4l0-2l6-2l-6-6l-2-1l-3 2l-3 11l-2 1l-2 6l4 1zM1218 1696l1-1l1-6l-3-2l-5 2l-3-1l1-6l-4-3l-5 3l-1 7l7 1l0 6l3 3l4-2zM1201 1742l6-2l3-5l4 0l1-6l-3-3l-5 2l-4-4l-4 3l-5-1l-3 7l4 3zM1204 789l0-4l2-3l-2-5l-5 1l-3-1l-5 2l1 6l3 2l2 3zM1178 866l2 2l6 0l3-4l6 2l4-5l0-4l-2-3l2-4l-4-5l0-2l-7-1l-1-6l-4-1l-2 0l-1 6l-7 7l0 5l7 7zM1176 1678l3 4l5-1l2 4l6-1l1-7l1-1l2-5l-2-5l1-1l1-6l-4-3l-3 1l-2-7l-10 3l1 5l4 3l-4 8l2 2l1 4zM1187 1624l1 0l5-6l0-1l-5-2l-3 6zM1191 1722l2-5l-2-4l1-4l-8-1l-2 4l2 4l-1 3l-2 1l-1 9l4 0l4-6zM1192 1691l-4-2l-4 1l-1 8l3 5l6 1l-1-7zM1183 1069l7-3l1-5l-6-2l-3 5zM1157 1094l4 5l5-1l4 6l5-3l0-3l-6-8l-2-5l5-4l-6-5l-3 5l-5-5l-5 0l3 8l3 1l1 4zM1161 775l-1 2l2 6l7 0l-1-6zM1122 901l-7 5l1 3l-3 3l1 5l-4 4l1 2l5 2l1 4l3 1l4-4l3 2l6 0l2-4l2 0l4 4l8 3l10-3l7 0l1-6l-5-4l-1-2l2-3l-4-5l0-3l-1-2l-3-2l-3 1l-2 3l-11-4l-5 1l-3-2l-6 4zM1152 914l6 3l-2 3l-5 1l-1-5zM1149 992l5-4l-1-4l4-4l0-2l-6-3l-9 2l-1 0l-6 4l4 5l0 3l4 2zM1113 1065l0 5l-5 2l0 4l-4 7l4 2l7-1l8 3l2 0l1-6l3-2l4 2l6-4l1-4l2-3l-3-5l-6-2l3-7l-5-4l-3 1l-4-6l-6 7l-5-1l-2 1l0 5l6 2l0 2zM1116 1095l1-3l-2-1l-6 0l-2 3l2 6zM1074 1115l-5 1l-2-2l-6 1l-5 2l-1 5l2 2l2 4l-2 1l-3 3l-4 1l0 6l3 2l0 5l1 1l5 0l4-2l2 2l2 6l8 1l11-9l0-5l4-3l2 2l3 0l7 2l1-1l-3-8l8 3l3-7l-1-5l-4-3l-1-4l-3 0l-2-3l1-3l-3-4l-5 3l-1 4l-4 0l-5-3l-3 6l-3 1zM1098 1053l-1 6l6 0l2-4l-1-3zM1073 1186l-1 2l6 5l5 2l1 2l4 3l5-3l5 1l2-2l1-2l-4-7l-2-1l-2-3l2-5l0-4l-3-4l-5 1l-3-5l-6-1l-1 1l2 7l-2 11zM1080 1311l2-2l2-4l2-1l5-5l2-1l-1-5l-7-2l-3-4l-5 3l-4-2l-2 1l-1 6l4 4l-1 4l3 7zM1074 1065l7 0l0-4l4-4l0-2l-6-2l-3 2l0 2l-2 2zM1036 1030l-6 6l0 3l-10 3l-4 7l-5 5l5 7l-5 6l1 4l-4 2l0 5l-2 3l1 2l4 2l5-2l6 6l5-6l3 6l-2 7l2 1l1 6l3 2l4-1l3 3l5 2l2-2l1-4l-3-5l7-2l1-2l0-7l4-4l1-4l-4-2l0-3l2-4l-2-3l3-4l3 3l1 4l7 1l3-2l0-3l-9-11l2-3l0-6l-6 0l-1-2l0-3l-1-5l5-5l-2-2l1-7l-5-2l3-11l-2-3l-7 4l-11 0l-2 6l7 7l-1 5l-1 1zM1041 1044l2 4l-1 11l-7-1l0-3l-4-4l3-5l0-4l7-1zM1052 999l7 0l-1-7l-5-2l-4 2l0 4zM1044 1215l2-7l-6-2l-3 6zM1040 997l-6-2l-4 2l0 3l6 4l2-1l4 3l3-4l-1-3zM1005 1121l3 3l-1 5l5 0l0 6l2 0l5 5l2 0l1-6l7 1l7-7l-5-3l-5-10l-4 0l-3-7l-6 2l-4-1l-3 5l0 2zM1009 1208l-1 0l-2 4l5 6l6-7zM984 1118l-2-1l-6 0l-2 3l6 5l4-3zM961 1103l3 0l2 2l0 4l-1 2l2 5l1 0l8-5l4-1l4-2l-2-3l-8-3l0-4l-5-4l-3 2l-3-1l-4 4zM979 985l-1-3l-7-6l-4 3l-1 0l-8 6l0 3l11 3zM974 1086l-6-5l-3 3l1 6l3 2l5-3zM948 1185l2 3l-4 8l-1 6l5 2l3-2l1-4l8-1l1-1l-1-4l-2-3l0-2l-4-7l4-4l-1-5l-8-5l-2 2l-6-3l-3 2l-5-3l-1 1l-1 3l3 5l0 2l3 4l0 4l3 2zM901 1173l5 4l5-1l-1-5l-4-3z" fill="#35603f"/>
<path d="M1928 1131l-2 0l-4 4l-5 0l-5 6l0 2l5 6l3-1l6 5l2 0l2-8l5 0l0 6l4 3l4-3l6 1l-1 7l1 4l-3 4l-3 1l1 8l3 1l8-36l-4-14l-2 2l-3 5l-4-3l-7 1l-2 5zM1900 1072l2 6l2 1l2 3l-3 5l-4-7l-2 0l-3 8l3 3l-1 4l-3 2l1 5l3 5l9-1l3 6l6-3l8 2l2-4l-2-7l8-1l-6-7l1-2l4-1l3 7l6 1l1 3l-8 5l3 3l2 8l5 0l3-2l1-3l-4-4l1-5l-5-11l-27-16l0-27l-2-2l-1 2l-3 8l-5 6l4 5l-1 3zM1940 1178l-2-2l-7 5l1 5l10 4l2-2l0-4l-3-4zM1934 1215l0 3l1 1l3-6zM1936 1196l-1-3l-6-4l-3 2l-1 3l3 5zM1881 1140l-5 2l0 6l-3 3l3 5l6-2l2 1l4-4l5 2l3-5l3-2l2 3l-1 4l2 3l0 2l-2 3l-4-1l-3 5l4 5l1 0l2 3l0 1l-2 5l-3-2l-8 0l4 7l4 1l3-3l4 1l2 7l1 1l6 0l7-3l5 0l3-7l3-2l0-7l-7 0l-2-7l2-2l-1-7l-6-4l-3 1l-3-3l-3-2l1-6l2-1l-2-7l-2-2l-1 0l-5 8l-8 2l-4 5l-4-4zM1911 1120l-4 3l1 5l3 1l7-3l0-2zM1834 916l-1 7l2 1l2 1l5-4l3 4l4-3l2 3l4-1l4 1l3 6l-2 3l8 11l-5 3l1 5l7 6l2-1l5 3l0 2l6 3l1 2l7 0l-1 5l1 4l-1 2l3 7l0 10l2 6l-1 2l1 4l5 1l4-8l0-33l-7-13l-4-2l-10 3l-1-1l-3-5l-3 2l-5-2l-3-5l5-3l3 1l3-2l2-5l2-1l-13-15l2-4l-5 1l-3-3l-5 2l-2-2l0-6l-1-1l-4-1l-4 5l-2-1l-2 1l-3 7l-4-3zM1890 1133l1-3l-4-5l-1-3l-8 0l-1 10l5-1l3 3zM1877 1191l2 4l8 2l3-2l-3-9l-4-1zM1881 1173l3-6l-5-4l-5 4l3 6zM1876 1083l-4 2l0 4l5 7l3 1l4-2l0-5l-2-1l-2-6zM1655 715l-1 4l3 4l-1 5l2 2l6-1l3 4l3-2l3 1l7-3l-1-3l4-6l7-1l2 4l-6 3l-1 2l-4 2l1 5l-4 3l-3 1l-1 8l-3 2l2 5l9-1l0 2l-4 4l2 6l2 2l3 0l3 1l1 2l3 4l5 0l1 1l0 5l5 4l-4 2l1 5l-5 1l2 5l3 2l1 5l6 0l2-7l6 1l2 0l8 6l-1 3l-5 3l1 3l-5 8l0 5l-10 4l-4-3l-1-3l-7 0l-2-2l0-3l2-2l0-7l-3-1l1-2l4-5l-2-3l-3-2l-2 1l-16-1l-5 6l1 4l-2 3l-2 6l6 9l-7 4l0 1l7 5l0 1l2 3l-5 5l6 4l-3 5l2 2l8 0l1 2l-2 6l1 1l5 1l2 2l1 3l-7-1l-4 3l-4-2l-4 2l3 8l-3 2l0 2l4 4l2 7l4-1l5 2l-1 4l5 4l0 3l-4 2l-5 2l-1 3l-4 2l-1 4l1 2l-2 5l-4 0l0 5l-4 4l1 2l-4 8l4 0l5 3l0 2l-5 2l-3 4l6 2l2 5l-3 4l2 3l7 2l1 3l-3 3l0 3l4 3l6-2l0 9l7-2l2 2l-4 5l2 4l6 2l2-1l3 2l2 6l2 1l-1 10l-6-2l-3-1l-4 8l-5-5l-2 2l-5-3l-2 1l-2-6l-3-1l-4 3l6 6l-6 3l-1 6l-5 0l-2-1l0-3l-7-5l-3 2l-1 3l1 6l4 3l0 1l-8 6l1 4l10 1l-1 3l-4 4l0 4l3 5l3 2l-4 5l-5-2l-4 8l1 8l2 2l10-3l0-5l4-1l3 1l11-7l6 4l-3 9l1 2l5 1l1 4l6-1l1 0l0 6l7 0l-1 6l5 2l3-3l3 4l-3 5l-3-3l-7 2l-2 3l2 3l-1 2l-5 5l3 3l-3 4l-1 8l-2 2l0 4l2 1l7 0l2-5l4 0l2 7l2 2l5-4l6 1l0-8l4 0l0-2l-3-6l2-3l5 1l3-2l7 1l2-5l2-2l2 1l5-1l3-5l2 1l1 7l5 2l4-9l3-1l4 0l0 6l4 4l-4 4l-5-3l-4 1l0 3l1 4l-1 10l2 4l1 3l-2 5l-3 4l-2 0l-2 7l3 2l1 8l3 1l4-2l-2-9l1-2l4-1l7 5l4-4l5 5l6-3l4 15l-2 4l-4 2l1 5l6 0l3 3l4-2l4 3l6-3l-1-3l2-3l6-1l8 3l2-2l0-5l4-2l1-2l-3-7l4-3l-1-5l3-2l0-4l-4-3l0-3l-4-3l-2-5l6 0l2-7l5-4l-4-7l-2 0l-3 5l-3 2l0 3l-3 4l1 3l-4 4l0 6l-6 1l-1-2l-6 1l-1 5l-3 2l-3-2l0-7l-7 0l-3-5l3-5l2-1l6 2l4-6l0-3l-3-1l-3-6l-1-1l-5 4l-2 0l-1-5l4-3l3 2l6-6l-4-4l-6 2l-2-2l0-2l-1-7l0-3l-9-1l3-9l-3-3l4-16l-5-3l-1-3l3-2l1-4l-3-5l-1 0l-2 4l-4-2l-1-4l-2-1l-5-5l-1-4l-3-2l0-8l-2 0l-5-6l3-6l-4-2l-3-5l-3 0l-9 2l-1 1l-4-2l2-4l4-1l0-7l1-1l12 2l4-3l-7-8l2-8l3-7l-3-2l-2-5l1-3l-3-3l3-7l2-1l-1-3l-2-2l-7-1l0-5l-1-2l2-5l-1-6l2-7l-3-6l-8 5l-1 0l-8 1l-6-1l-2-5l-9 0l-4-2l4-6l-1-4l1-1l3-1l3 2l3-1l3-3l4 1l3-3l2 0l1 7l6 0l2-1l8 4l6-2l2 2l11-4l4-4l-3-4l-1-3l2-2l-2-5l6-1l2 1l4-2l2-3l-4-6l2-2l0-5l10-7l6-3l3-4l5 0l4 1l3-2l5 3l6-1l4-1l2 1l8-2l6 1l3 2l4-3l3-4l-1-10l2-5l4 5l4-1l4 3l-19-26l-27-13l3-34l5-7l-4-5l-1-5l-4-2l-7 2l-1 5l2 4l5 2l1 1l-2 6l2 3l-5 4l-4-4l0-3l-3-7l-3-2l0-2l2-7l-6-3l8-5l-5-4l-2-1l0-5l-3-4l3-5l-6-6l4-4l7 3l1-8l-4-1l3-5l2 0l5-2l5 5l2-1l6 2l8-14l2-1l2-3l-1-3l-4-3l2-4l-1-2l-5-3l3-6l1 0l-6-13l-6 9l-1 0l-3 7l-8 2l-2 4l1 3l8 1l-1 4l-4 3l0 4l-5 3l-5-5l1-2l-1-6l-4-3l5-6l-1-3l7-2l1-2l-2-3l5-7l5 1l4-5l4 0l-5-16l-7 4l0 1l-9 10l0 2l-4 4l0 5l-7 0l-1 1l0 4l-4 3l0 2l2 3l2 4l-3 2l-5-2l-5 3l-2-1l0-5l-5-2l-1-2l4-10l5-1l3-7l-5-2l-7 3l-2 3l-4 0l-1 6l-5 0l-1-2l3-5l3 0l1-5l-4-5l-4 0l-3-2l-3-1l-3-2l-7 2l-2 4l2 7l-2 3l3 9l-5 0l-2 2l2 5l6 1l0 3l2 3l2 0l6-7l-2-2l-2-6l1-1l6 3l1 6l3 0l4 3l2 4l4-1l4 2l-3 7l3 5l5 2l1 1l-1 7l-5 2l-2 6l7 3l0 5l-6 0l-3 2l-8-4l-4 2l-10-3l-4 1l-1 7l8 3l-1 5l5 4l0 2l-2 3l-1 7l5 1l2 4l-3 6l1 5l-5 4l3 7l-5 3l-7 0l-4 2l-3-5l-7-1l-4-4l-3 1l-4-1l-5 6l-4-9l-2-6l5-5l-4-4l1-3l3-2l-2-6l-5 0l0-6l2-1l0-3l-3-3l1-4l2-2l2 1l6 7l2-1l7 1l2-4l5-4l-3-5l1-5l1-1l4-5l2 1l5-4l-3-6l1-5l-4-4l3-4l-1-6l-4-1l-6 0l-4-4l-7 0l-1-4l-3-2l-5 1l0-4l2-1l1-7l-6-1l-3-2l-4 2l-5-4l-2 1l-6-1l0-2l-4-3l-4 1l-4-4l-4 4l4 7l-9 5l-3-1l-5 7l3 3l-4 8l1 1l4 2l1 5l2 1l2 5l7 1l3-6l0-5l2-4l-2-4l7 1l1 2l7 0l-1-7l3-2l2 0l1 8l2 1l-2 6l1 3l4 2l4-5l3 0l1 4l-1 4l-2 0l-5 9l1 3l-4 6l-2 0l-2-2l-5 1l-2-1l-6 0l-7-3l0-3l-8-1l-5-3l-10 0l2 9l4 1zM1818 695l5-4l2 1l1 4l-3 5l-5-4zM1743 861l-3-4l2-4l-1-3l5-3l0-4l5-2l-1-6l5 0l1 1l5-2l0-6l-5-1l0-4l5-4l-1-3l1-5l-1-2l0-4l4-3l5 4l4-2l3 3l8-1l2 3l-1 5l-4 2l0 7l5 2l1 0l4 5l-1 3l-4 3l2 5l-5 4l-4 2l-1 1l1 4l-3 5l-3-2l-4-1l-5 5l-1 0l-8 3l-3-3zM1788 1133l1 2l-1 3l-6 2l-1-2l2-3zM1777 1153l2-5l5-2l2 2l-1 3zM1776 1086l-8-2l2-3l3-1l3 2zM1744 806l2 3l-3 3l-3-3l-4 1l-3-3l-2-5l2-3l6 3l3-3l3 3zM1729 971l8 4l3 4l1 5l-7 2l1 6l-1 4l-2 2l-6-4l3-7l-1-1l-3-7l-3-1l-1-3l4-4zM1733 959l5 2l-2 6l-5 0l-1-4l-6-4l3-4l2-1l3 2zM1707 1079l3 4l-8 7l-2-6zM1704 1032l-3 0l-4-2l2-1l5-2zM1691 1054l-3-3l1-3l7 0l4 3l3 6l-2 3l-6-1l-4-1zM1683 921l8 0l3-6l4 4l-8 9l-5-2zM1667 1068l-3-3l0-2l4-4l0-4l2-2l6 3l3-1l2 1l1 4l-4 5l-5 0zM1865 1201l-4 4l0 2l4 5l0 4l2 1l4-2l-5-14zM1862 1107l5 2l4-1l3-6l-1-3l-5-3l-1 1l-8 0l4-7l-6-2l-3-4l-4 0l-1 5l4 4l1 4l2 1l1 3l4 3zM1870 1180l-1-1l-8 2l4 6zM1831 897l1-6l6 0l3 2l0 1l3 5l2 0l7-6l3 4l3-1l3-5l-3-4l-6-3l1-5l-2-2l-5 0l-3-2l-6 2l-2-1l-6 3l-3 3l1 2l-6 3l0 1l2 4l-3 5l2 6l5 1l4-3zM1847 956l7 2l2-6l3-4l-4-6l-4-3l-8 3l-2 2l0 3l5 2zM1846 1193l4 5l4-5l-3-5l4-5l-2-4l-4 0l-4 6l-1 0l-3 5l1 3zM1833 723l3-7l4 4l1 3l-3 5l3 6l4-21l-1-1l-7-1l-1 2l0 2l-9 4l-1-4l-9 2l-2-2l-4 2l-1 2l4 5l7 0l5-3l4 4zM1840 1118l4-4l-4-10l4-5l-1-3l-4-3l-5 4l1 6l-1 4l2 5l-1 3zM1832 1214l-1-7l-6 0l0 7l6 1zM1819 744l3 4l5 1l2-8l-6-3zM1821 1125l4-3l0-5l-2-2l-2-6l6-1l2-4l-7-5l-3 3l1 6l-5 1l-2 7l1 1l-1 4l3 3l3-1zM1774 917l6 6l5-1l11-5l0 3l-3 3l2 6l-5 2l0 3l-3 3l-1 3l2 2l8 0l0 3l-2 2l0 4l-4 4l2 12l6 2l6-3l4 6l3-2l-1-9l3-1l2-5l-1-3l1-4l-5-7l8 1l1-1l-2-5l3-4l-1-3l-2-1l-1-3l2-5l-11-6l2-2l4 0l3-2l3-1l-3-8l2-4l-7-2l-3-4l-8 1l5 8l1 0l2 4l-2 2l-6 3l0 3l-4 3l-3-7l-2-2l-4 3l-6-2l-2 3l0 4zM1802 1061l4-1l1-1l-1-5l-4-4l-3 2l-5-1l-2-4l-8 2l1 5l4 2l3 4l6-3zM1803 1252l-2-3l-4 3l-5 0l-2 4l-1 3zM1804 633l-1-2l0-5l-3-3l1-3l-7-4l-2 1l1 10l-6 5l0 2l5 3l2 0l5 2zM1771 590l5 3l1-1l6-9l5-5l1-3l-2-2l-7 0l-1 7l-14-2l2 7l2 1zM1775 609l-2 2l1 6l3 2l5-5zM1762 827l7 5l3-6l-4-2l-4-1zM1735 1184l2 6l7-3l5 0l0 5l-2 3l-3-2l-6 1l-2 3l3 5l-1 5l-2 1l0 8l8-4l4-4l2 1l7-2l0-7l5-2l3-3l-7-5l0-2l-5-4l-2 0l-4-7l-8-6l-2 4l-5 1l-4-2l-4 4l1 4l-3 5l0 1l8 2l1-6zM1747 557l-8 9l5 7l6 2l5-3l0-3l2-6l-4-5zM1748 553l6-5l0-2l-2-2l-3-1l-3 4zM1751 1153l1-5l-3-3l0-5l2-4l-3-4l-1-3l-2-1l-7 1l0 6l-2 5l2 3l2 1l3 6l4 4zM1744 540l1 0l3-2l-3-5l-4 1zM1738 763l-8 4l2 7l4 1l3-3zM1725 444l-2 3l3 1zM1730 486l-2 1l0 7l4 2l2-1l2-7zM1675 624l7 11l3 1l5-2l2 2l0 4l9 0l1-4l3-3l1-4l-2-2l-4 0l-1-6l-4-5l2-4l-8-4l5-3l3 3l1 3l4 0l4 3l2 2l2 1l4-3l7 2l0-7l-1-2l3-2l5 2l3-6l-2-2l-3 0l0-6l-4-2l-3 1l-4 0l-4 2l0 1l4 6l0 2l-6 1l-1-1l-1-5l-2-2l4-10l2-7l4-2l0-4l2-3l1-2l-4-7l2 0l5 1l5-3l-1-2l-2-2l-2 0l-4-3l-1-3l-7 3l-1 1l-4 3l-2 4l-3 0l-2 0l-4-6l-6 3l-1 2l5 6l1 3l-2 4l-3 0l-5-3l-5 5l-3-2l-8 1l-2 5l5 5l3-3l4-1l2-3l4 4l3 1l3 2l5-3l4 1l0 4l-3 3l-1 4l-3 0l-5 5l-1-6l-6 0l0-5l-2-1l-5 1l-2 5l5 6l-5 3l-1 6l10 4l4-3l5-1l2 2l-2 4l-6 4l-5 1l-5-2l-3 1l-2 8zM1730 503l-5-7l-5 2l0 5l3 2zM1723 761l-3 1l-2 6l4 4l6-6zM1038 1001l-2 2l-1 4l5 4l11 0l6-5l2-4l5 3l2 4l9-4l-4 8l3 3l1 0l2 8l4 0l3 6l-7 4l-1 2l6 4l-3 6l6 2l0 6l-5 7l0 3l-5 0l-3 2l-1 2l-3 2l-5-1l-1-4l-4-3l-5 5l3 3l-2 3l0 4l4 2l-1 4l-4 3l0 8l0 1l-9 2l4 6l-2 5l-5-2l-2-3l-5 1l-2-1l-2-6l-1-1l2-7l-4-7l-5 5l-5-5l-6 2l-4-2l-5 7l4 2l-1 4l4 5l-5 2l-1 4l6 4l4 1l6-2l2 6l5 1l4 10l8 3l4 0l4 2l3 0l2 2l3 0l3-3l3-2l-2-5l-2-1l1-4l10-3l2 2l5-1l2 2l4-1l3-6l5 3l5 0l0-4l4-3l3 3l-1 3l2 4l3 0l2 4l3 2l0 5l-2 6l-8-3l3 9l-7-2l-2 0l-3-2l-5 3l0 5l-11 9l2 3l4 3l2-1l6 3l8-1l1-1l2-4l3-2l0-2l7-5l-4-5l3-3l3 1l4-2l1-3l-1-5l3-1l3 0l2-4l5-2l0-5l5-1l0-5l3-1l2 0l1 6l5 0l6 6l3 0l2 9l2 2l1 0l1-2l2-9l2 1l3-3l6 5l-2 4l1 2l-2 7l-5 4l0 4l3 4l-4 6l1 3l2 1l5 1l2 3l5 2l2-1l5 2l2 5l1 1l3 6l5 0l3-6l2-1l5 0l3-5l1-7l-2-6l2-3l0-5l3-2l1-3l5-1l1 4l-3 3l0 3l4 4l3-1l4 1l4-3l1-3l-4-3l-1-6l5-1l3-6l4 5l-1 2l-4 1l-1 6l6 2l2-3l1-3l5-2l0-3l6 0l2 3l5-2l4 1l1-4l7-1l1-6l-6-2l-1-2l-3-2l-5 1l-2-5l-7 1l-2-4l-6-1l0-3l-4-4l-5 1l-3-1l4-7l-7-3l3-5l-5-4l-1-4l-2-1l0-3l3-5l0-2l-3-3l-5-1l-7 3l-1-2l1-6l2-2l-5-5l3-2l0-8l-7 2l2 7l-7 0l-2 3l4 9l-12 5l-1 5l4 2l-2 6l-5-1l1-7l-9-12l1-3l0-4l-4-2l-1-1l-4-3l1-4l2-1l4 2l1 2l7 4l2 3l5 3l4-2l-3-8l3-2l1-4l-3-2l-4-5l-5 3l-5-2l1-5l-2-7l5 0l2-12l5-2l3-4l5 2l3-1l4 1l1 3l3 2l4 0l6 3l-1 6l1 1l1 6l5 1l-1 8l3 1l3 4l-6 3l1 4l5 1l0 4l-6 3l0 1l6 6l1 0l2-2l-1-6l7 0l-2-7l4-2l1-3l-5-4l1-2l2-1l3-9l2 2l6 0l4-7l3 3l4 7l5-2l3 2l9-4l3 5l3 2l3-3l5 3l4-2l1 5l-4 4l-2 1l-1 3l8 4l0 7l-2 2l-2 0l-7-6l-4 3l-5-7l-3 8l-4-4l-4 2l-3-2l-3 2l-1 3l-3 2l-3-2l-4 1l-3 0l-4 3l3 7l-5 1l-2 0l-5 2l4 12l-2 3l4 3l0 6l4 1l5-5l5 1l2-3l6 0l2-2l2-1l3-4l4 0l1-4l7-1l2 2l3 0l2 2l-2 6l-2 0l-2 4l-4 4l0 3l-9 4l3 4l-2 7l4 0l1 8l4-1l6 6l2-3l1-7l-1-2l-4-1l-3-4l2-7l5-3l1-3l4-2l1-4l3 1l4-2l0-5l2-1l4 2l1 4l4 3l4 7l5-1l1-2l2 0l6 2l3-2l4 2l6-2l0-6l4-4l9 3l5-5l7 7l2 0l2-6l-2-7l4-1l2 4l5-1l2 2l5-4l3 3l5 2l2-1l6 5l1-2l6-3l2-4l-4-5l-4 0l-3-2l-1-7l-7 0l-1-3l7-3l1 1l5 0l3 3l1 2l7 0l2 2l-1 2l-4 2l1 6l6 3l8-1l2-3l-4-4l2-3l6 5l2 4l3-1l3-6l3 0l1 2l5-1l4-5l-6-8l0-4l-3-2l-6 2l-3-3l-3 0l-3-5l-4-1l0-4l-4-6l-3-2l2-4l5-1l2-1l2-4l3-1l3 0l1 8l-4 0l-1 4l-3 3l5 4l0 3l6 2l4-4l9 0l1 1l5-5l7 1l0-5l-4-3l0-3l4-4l5-3l1 0l1 7l2 1l4 6l6-7l7 0l3 2l1 4l-2 2l-6-2l-9 1l0 2l-3 2l-3 7l-2-1l-7 4l-4 9l0 6l2 0l5-1l4 2l5-11l8-2l-2-7l1-2l2 0l8 4l6 6l-1 1l-6 2l-4 4l-3-2l-6 3l0 3l2 2l15 0l1 3l4 3l3 0l2 1l2 4l2 1l2 5l3 1l5 0l5-4l6 1l1 2l-4 5l-5 0l-2 3l-4-2l-4 3l-1 4l3 3l0 4l-3 2l0 3l1 6l7 1l-3 7l-5-1l-7 6l1 4l1 2l7 0l4-2l4 1l0 5l3 3l-1 3l5 9l-2 7l-4 1l-2-4l3-4l-4-7l-10 3l-4 3l4 4l0 3l-1 7l-7 6l-1 3l3 6l-4 3l0 5l2 4l8-3l1 6l7 1l3 5l11 2l4-2l1-2l4-2l-4-8l2-5l0-5l4-1l4 4l5 1l-1-9l6-2l4-4l5 3l1 1l-2 4l3 3l-1 6l3 3l-1 4l-6 3l-9-2l-4 9l11 2l3-4l8 2l2-1l1-5l5 0l3-2l0-5l4 0l5 4l4-4l1-4l2-3l0-4l-4-2l-5 1l-1 5l-3-1l-1-3l3-2l0-4l-4-3l1-3l8-5l1-4l2-1l4 7l4 1l2 7l2 1l3-1l4 1l-3 11l3 5l3 3l1 1l5 4l-6 13l7 2l0 2l7 4l0 4l4 2l5-1l7-4l9-9l-2-8l-4-1l-3 3l-5-3l-3 1l-3-1l-4 0l-5-5l3-4l5 0l2-5l-5-4l3-5l-6-2l0-3l-4-3l0-5l4-1l1-5l5-2l0-2l4-4l0-3l7 1l1-6l-3-3l-4 1l-2-3l-1-5l-2-1l0-2l-4-5l-4 2l-4-3l-3-6l5-3l0-3l-6-2l1-7l-4-2l0-4l3-2l4 5l11-3l4 3l0 2l3 3l0 2l-5 1l0 6l-1 1l0 5l7 2l2-1l7 4l-1 3l6 1l2 5l-1 2l-1 4l-4 3l1 10l-1 5l3 4l-2 6l1 3l-4 2l-2 11l2 4l2 0l2 5l2 1l2 6l3 3l0 6l4 1l2 2l6-1l2-5l7-3l0-5l4-1l2 1l0 3l3 3l6 0l-1 6l6 4l1-2l1-7l8 2l4-4l5 2l3-2l-4-5l-6-1l-2 1l-4-2l-7-7l-2 2l-7-5l0-2l-3-5l1-6l-2-3l-3 0l-4 3l-1 1l-3 4l-5-1l-2 1l-6-2l1-4l2 0l6-4l3 0l6-7l-1-2l-5-2l0-3l5-2l0-4l-3-2l-1-7l1-2l-2-5l5-3l0-3l3-2l1-7l-3-1l-2-7l-4-1l-1-5l-2-2l2-4l-1-6l5-3l0-4l-8-1l-1-3l-5-6l-4 6l-4 0l-1 3l2 3l0 3l5 3l-2 3l-6 0l-4 3l-4-3l-5-5l-4 0l0-5l3-5l-2-1l-1-5l-5-2l-3 3l-5 2l-1 2l2 6l-1 1l-7-2l-1 1l-1 3l-5 3l-3-2l-5 1l-3 1l-2 5l0 7l10 6l0 3l4 4l4-1l3 3l-5 4l-2-2l-4 1l-2-5l-6-1l-2 4l1 5l0 2l-4 6l-5 0l-4 5l-5-5l1-2l-3-3l1-4l-3-4l1-2l2-1l8 7l2-4l1-1l3-8l-4-1l-3-5l1-3l1-9l-4-1l-5 4l-4-2l3-5l-3-6l-5 3l-1 4l-5-1l-3 3l0 3l-4 3l-2-1l-7 3l-3-1l-4 4l-4 0l-1 8l-2 4l-3 1l-3-2l-3-4l3-6l-6-1l-2-5l6 0l3 2l6 0l3-5l4-3l0-6l4-3l-3-7l4-4l-1-5l-5-1l-3 2l-2 10l-5 1l-2-6l2-4l5-2l-5-8l0-4l5-4l1-3l6-1l3 5l-3 5l2 2l8 0l4-3l2 1l3 5l3-1l2-4l5 0l3 3l-4 4l0 2l5 6l7 1l3 1l2 0l5-7l-3-3l-5 1l-5-5l4-3l-3-6l3-1l3-2l1-4l4-2l3 4l0 2l-4 4l-1 3l10 7l4 5l4-1l-1-7l5 1l3-7l9 0l3-2l5 5l5-2l2-6l-1-2l-5-3l-1-3l2-9l-7 0l-1 3l-4 1l-4-3l0-2l5-3l0-3l3-4l1-2l-4-3l-6 1l-1-5l3-3l0-1l-6-5l0-2l7-2l-1-7l-8-1l1 9l-7-2l-4 3l-6-3l-2 1l-1 4l-4 0l-3-1l-1-4l-7 0l-1 3l-2 0l-6-6l-2 2l-6 1l2-7l6 3l3-8l-2-4l-5-3l4-5l-2-5l3-3l5 4l4-2l3 1l5-5l-6-3l0-3l-2-5l-6 3l-4-3l2-3l-2-5l5 0l6 6l2-1l1-4l-3-6l4-3l5 1l3-1l4 7l5-2l1-3l3-1l7 6l3 0l2-6l3-1l2 5l6 0l1 2l-1 2l2 8l-2 9l7 3l-2 8l7 2l1 0l0-6l3-3l-3-4l2-2l8 4l2-2l1-5l5-3l0-2l-4-4l4-7l-2-2l-1-5l4-4l-2-7l-2 0l-4 2l-5-5l-4 5l-3-2l-7-2l1-2l-5-9l-6 2l3 7l0 2l-5 1l-5 4l-4-5l-4 1l-2-2l-2 0l-1-1l-7-3l0-2l-4-1l-4 5l-5 1l-3-4l2-8l-4-5l-3 6l-3-5l2-4l-5-4l2-3l7 1l1-3l-3-5l2-4l-1-3l4-5l5 5l4-6l1 0l4 7l3 0l7-7l4 5l5-1l4 3l4-1l4-6l1-5l-2-2l2-8l-3-2l-5 4l-5-5l4-4l6 1l1-2l-1-10l4-3l-1-4l-9-1l9-6l0-2l-9-3l0-3l4-2l2-3l-4-6l3-3l1-5l6 1l3-2l1-4l-7-3l2-5l-2-3l-3-1l2-8l-3-1l-4 0l-5-4l-3 2l-7-4l-2 2l-4 2l-6-3l-3 5l-7-2l-2 6l-4-1l-3 2l2 7l-1 2l1 7l-4 5l1 5l-7 2l-2-1l-3 2l-1 3l-3 2l-5-3l-2 2l2 6l-5 0l-3-3l-5-2l0-3l-5-3l-2-1l-5 0l-2-2l0-9l-3-2l-6 0l-2-3l11-8l5-1l2-9l6-2l3 2l2-1l6 0l5 4l4-5l5 2l4-5l6 3l1 0l3-5l-2-12l2-2l1-6l-3-1l-3-6l5-3l1-2l-4-5l3-3l7 1l5 4l5 1l3 4l2 0l4-4l-1-5l-2-1l-2-5l9 1l2-3l5 4l1 3l0 5l-3 2l-6 0l0 8l3 1l4-1l6 4l6-4l8 3l3-3l2 1l6-1l3-2l-6-7l3-4l-3-8l-3 0l-2-4l-1-6l-3-5l-6 1l-1 2l-6 2l-1-2l-8-2l-3 1l-3 6l-5-2l0-2l-5-3l-2-3l1-5l0-6l-1-1l2-10l6-4l3 2l11-4l2 2l0 5l3 5l4 3l0 4l-4 3l-1 3l2 3l4 1l5-4l2 5l5-3l3 4l2-1l1-10l-1 0l-4 1l-4-1l0-3l-4-6l4-2l-2-6l-5 0l-2-3l-2-1l-1-6l-6 1l0-4l7-2l-1-4l-5-1l1-4l4-3l-5-5l-2 1l-4 6l0 3l-4 3l0 3l2 3l-2 4l-6 1l0-5l-2-1l-6 1l3 7l-4 2l0 4l-5 2l-3 3l0 3l-5 2l-2-6l-2-3l-8-2l-1-3l2-2l-2-8l-5 1l-1 3l-3 3l0 3l-6 4l-3-2l-7 0l-5 4l2 3l-2 3l3 5l-4 4l0 5l-2 1l-2 5l-3 1l-2-2l-4-1l-5 3l3 7l3 1l4-1l3 2l0 3l-4 4l-4 0l-1 5l-5 1l-1-1l-1-4l2-2l0-7l-5-2l-8 4l-3-9l-10 2l-3 5l-5 2l-1 4l-2 0l-6-3l-5-5l-4 3l-6 0l-2-3l-3 0l-4 7l-2 0l-2-1l-4-7l0-1l10-6l5 3l7-4l6-1l2 1l1 4l6 3l3-2l0-5l6-2l11 0l2-6l6 0l2-5l5-2l4 1l5-7l3 1l4-3l6-2l-1-7l4-3l10 4l-1-6l3-4l-1-2l4-4l4 2l4-5l3-2l-4-6l1-2l7 0l2-3l2-2l4 3l4-5l5 1l1-4l4-4l-1-2l-5-3l0-5l6 0l2 1l5-1l6 6l8-4l-2-5l-4-2l0-4l5-2l1-6l-4-2l-2-4l-5 1l-6-1l2-6l1-1l2-5l3 0l3 2l5-4l0-4l3-2l0-4l-3-4l-6-1l-1 1l-5-6l1-5l-1-1l-6 0l-2-2l-8-2l-1 2l-9 4l1 5l1 1l6-2l3 3l3-2l3 2l-1 4l-6 1l2 6l-5 2l-1 1l1 2l0 5l3 3l2 0l4 1l1 7l3 1l0 3l-4 3l0 2l-5 2l-1 4l-2 3l-1-2l-2-3l-3-2l-6 4l-3-2l-3 1l-1 5l-5-1l-2 1l-6-4l-3 5l0 2l-2 1l-6-3l-4 2l-2-1l-6-5l-6 7l0 3l-5 2l1 6l-3 3l0 3l4 2l3 5l-1 5l-4 3l-5 0l-5-8l-4 2l-4 5l1 5l-11 6l-1 2l-6 4l3 6l-1 1l-7 2l-2-5l-6-4l3-4l5 1l4-4l1-4l-4-3l-1-4l-5-1l-1-5l-6-6l-5 1l-1 6l1 2l-2 4l-3 0l-3-3l-6 3l-1 5l-5 1l-2-2l-5-1l0-3l-3-4l3-3l4 2l4-3l-1-4l4-5l-3-3l-5 1l-4-6l-2 0l-2 1l0 10l-3 0l-3-4l-7 2l-2-2l0-5l2-2l5-6l2 0l2-1l2-7l-3-6l-5 1l0-6l-3-3l4-4l-1-5l-1-1l-6 1l-2-5l-8 2l-1 2l-3 2l-1 3l3 6l-2 6l-5 2l-2-2l-6 2l-4 7l0 4l-7 8l2 4l7 2l-3 5l-3 2l-1 4l4 4l3 7l-1 2l-5 0l-3 3l-4 4l7 4l0 2l-6 2l-1 4l2 3l0 2l-6 5l2 4l0 6l4 3l-2 4l-7 0l-2 2l0 1l3 4l0 4l4 3l8 2l3-7l5-4l3 2l0 4l3 5l4 3l3-1l2-4l5 3l6-5l4-1l5 4l3 8l7 2l3-3l5 4l3 1l5 5l4-2l7 2l4-7l2 0l4-2l5 2l2-3l5 4l-1 4l-5 2l0 5l-3 2l-1 3l-7-2l-2 2l-3 0l-3 2l-4-1l-2 0l-3 4l-4 0l-2 2l3 7l3 1l1 4l14 1l3 5l5 0l1-1l5 4l1 2l9 4l4 5l-2 3l-4 0l-3 3l0 5l-9-1l-2 5l-5 4l-4-2l-3 1l-2 3l-4 1l-2-1l-5 2l3 8l5-3l5 2l-1 3l-4 1l-3 7l-3 2l-4 0l-3-9l2-7l-1-3l-4 0l-2 6l-4 2l-4-7l-6 5l0 4l-3 2l-6-6l-2 2l0 5l-10 6l0 3l-5 4l-2 9l2 2l1 11l6 2l-1 8l5 2l-3 9l5 2l3-1l3 1l4 3l3 0l3 2l-1 4l-3 1l-3-6l-4 3l-1 3l5 3l2 5l4 0l2 3l-3 2l-3 4l-2 0l-1-6l-5-2l-4 4l0 2l4 6l0 5l2 4l8 0l-1 4l-4 4l2 3l3 2l5-5l3-6l3-1l0-8l7 1l1 2l-2 4l-6 2l0 3l-3 5l5 5l3-1l3 2l-3 5l0 6l2 1l0 1l-5 6l4 4l-5 4l-3 0l-2-3l4-5l-5-3l1-4l-7-2l-1-1l-8 1l-1 4l2 3l0 4l-6 1l-2 4l-5 2l0 2l6 6l3-1l1-5l3 0l2 2l5 0l2 3l-3 6l-3 3l-3-2l-4 0l-3 4l-3 1l0 7l-10-2l0-2l3-5l-1-4l-3-1l-6 4l-2 3l-6-1l-1 1l-8 3l0 4l3 2l6-1l4 4l-1 3l1 3l4 2l0 5l4 4l5 2l-1 5l-4 1l-5-2l-3 2l-5-4l-2-1l0-6l-2-1l-2-1l-4 7l1 2l-6 3l-2-2l-3 1l-4 3l-5-2l-3 6l-4-1l-3 5l-6-2l-3 5l-10 1l-4-1l-3 5l-9 1l-3-7l-5 1l-1-5l-5-2l0-2l-3-1l0-4l-4-3l-4 0l-1-3l1-3l-7-4l0-2l-3-2l-7-2l-4-2l-5 1l-2-4l0-4l-10-1l-5-6l1-4l-3-2l-6 1l-2-2l1-3l3-3l-1-3l2-2l1-5l3-2l0-2l-6-3l-1-4l2-1l2 1l7-4l-2-5l2-2l5 4l4-2l4 2l3-2l4 1l2 3l3 2l4-1l3 1l5 5l6-6l0-3l3 0l7-7l1-4l-2-3l2-4l5 0l3-2l1-4l-5-6l6-4l2 1l7-7l-5-4l-5 5l-5-2l-4 7l-3 0l-4 7l-1-1l-10-2l-3 3l-6-1l-2 6l-3 2l-2-5l-3 0l-4 6l-5-2l-1 1l-2 5l3 6l-1 1l-6 1l-2-7l-2-1l-2-6l-3-2l-1-3l-12-2l-3 3l-7-8l-4 2l-4-3l0-4l-7 1l-4-8l-5-1l-5 6l-3-1l-3 3l-7 0l0 4l4 4l-2 4l1 2l5 3l-1 5l-7 0l-8 3l-8-3l-4-4l-3 0l-3 4l-5 0l-3-2l-4 4l-2-1l-1-4l-6-2l-3 7l-11-2l-6 2l0 2l-5 4l-4 1l-2 3l5 3l1 5l-1 1l-6 1l-2 4l1 5l-3 5l-2 1l-3 3l2 6l-3 5l0 4l-5 3l-3 0l-1 4l-3 3l1 6l-6 0l-2-3l-7 4l1 3l-2 3zM1395 860l2-3l4-2l1 6l7-3l2 2l-2 5l-6-1l-1-2zM1602 1143l3-3l8 0l5 4l6-5l4-1l2 2l0 4l2 2l1 6l-2 1l-4 0l-5-5l-8 0l-4-2l-3 2l-2 3l-3-1l-3-3zM1599 1022l0 2l-6 0l-6 2l-2-4l6-5l4-1zM1574 711l3-7l5 1l2-1l5 2l-2 6l3 2l1 2l-1 1l-8 1l1 3l-5 3l-2-4l4-4zM1580 863l4 0l1 2l3 2l2 6l-8 1l-1-1l0-2l-6-4zM1563 1041l3-6l-1-2l5-4l-1-5l-3-3l1-5l5 1l5-2l4 5l-5 4l1 2l3 5l-3 3l0 5l-4 2l-2-1zM1555 720l-6 2l-3-2l-3 3l-7-6l-2-1l4-5l2-1l2 3l6 0l3-2l-1-4l5-3l-1-6l4-1l3 5l-2 6l-4 4l1 4l4 2l1 3l3 1l3-1l3 5l-9 4l-3-2zM1562 848l7 1l0 4l-2 3l-4-1l-3 0l-2-2l1-3zM1563 823l0 4l4 3l1 5l-3 1l-5-1l1-7l-5-1l-1-5l2-1zM1540 1137l-1-4l1-2l3-2l0-4l2-1l5-1l1-7l8 1l-1 3l4 5l-2 4l7 2l0 2l-4 4l-2-1l-5 0l-2-1l-6 1l-1 3l-5 2zM1534 978l-3-7l1-6l2-3l-1-6l1-2l8 5l5-3l2 3l-2 6l4 2l4-2l3 1l1 3l-3 3l1 6l-5 0l-1 6l-2 1l-1 5l6 3l9-4l1 5l-3 0l-4 5l-2 0l-5 9l-5 0l-2-6l0-7l1-2l-8-3l2-3l-1-3l-5-2zM1558 953l0-3l5 0l-1 3l-1 1zM1540 898l7-2l2-5l3-1l5 2l-1 5l5 3l1 3l-3 1l-2 6l-5-2l0-4l-2-1l-3 1l-5-3zM1550 1159l6-6l4 0l1 5l-9 7l2 5l-1 3l-5 1l-3 5l-5-4l0-6l5-3l-4-7l4-3zM1547 930l8-3l4 3l0 4l-4 1l-6 4zM1539 1044l-7-4l3-5l1-1l6 2l3-5l5-4l-1-5l-4-1l-2-4l8-2l6 1l1 7l-1 1l-1 3l-5 2l-1 10l-1 1l-6 4zM1555 873l-3 4l-1 0l-4-3l4-4zM1439 847l-6 1l-4 5l-5 0l-4-2l-3 7l-3-6l1-3l4-1l-2-7l2-2l10 2l1 1l7-1zM1446 847l0-4l3-6l3 0l6-3l3 5l-3 2l1 8l2 2l-4 6l-5 2l4 4l-5 6l4 3l0 4l-3 2l-3 6l6 4l4-3l0-6l9-1l1-4l-3-4l0-4l2-1l5 2l-2 6l6 1l2-2l4 0l4-2l0-3l-2-6l2-1l5 2l0 4l3 7l5-1l3-4l9 0l8-4l10 2l0-4l3-1l4-4l1 0l3 6l-13 8l-3 0l-4 3l-8 0l-3 4l6 3l-3 6l0 2l4 2l0 3l-6 3l-3-1l1-4l-5-3l0-3l-6-1l-4 7l3 9l-3 3l-2-1l-4 2l-5-3l-3 2l-3-1l-2 3l-7-2l-1 5l-4 1l-1 4l-6 0l-4-9l9 0l2-3l-2-4l-3 0l-5-6l-2 1l-2 3l-10 2l1 5l-4 5l-4-3l0-4l1-4l-6-8l2-4l0-6l-1-2l1-4l5 0l-1 7l7 7l8-3l-2-5l2-3l-2-4l1-3l3-1l1-7l-8 0l1-5l-3-2l-1-6zM1466 834l5 3l-1 1l-7 1zM1533 887l5-4l3 3l-4 7l-8-1l0-3zM1531 919l5-2l2 1l-1 2l-2 3l-1 4l-4-2l-1-5l0-1zM1538 1015l-5 8l-2-1l0-3l4-4zM1530 665l-2-3l4-5l3 4l-1 4zM1518 1194l8-6l5 3l0 1l-4 6l-6 0zM1513 825l-3-6l3-4l8 2l4-1l5 3l-3 5l1 3l-3 1l-3-2l-5 4l-4-3zM1521 1041l5-3l4 3l-2 3l-6 0zM1506 978l-3 0l-1 6l-2 0l-4-3l2-6l5-3l4 0l2-6l-6-6l-3 1l-4-5l3-3l2-5l0-6l5-1l1-4l5 1l5-5l1 1l2 9l2 1l0 2l-1 3l-8 1l0 2l5 5l5-3l4 9l-4 3l-5-6l-7 2l-1 3l5 5l5 2l0 4l-3 3l-6-4l-3 5zM1507 1022l-4-2l-4-5l4-4l0-4l5 1l3 5l5-5l3 4l0 4l3 1l3 7l2 7l-2 3l-7 1l-2-2l1-2l-3-3l-7-1zM1514 1051l0-3l7-1l1 5l0 8l3 5l-2 2l-3-1l0-6l-5 1l-4-2l-1-4zM1518 993l-1 1l-3-3l-1-5l4-3l4 3zM1502 780l-4-1l-9 4l-2-3l-4-2l1-2l-3-5l1-3l-4-5l4-5l1-5l-1-5l5-2l5 2l1-1l10-2l4 3l5-5l2 1l1 2l-6 3l8 5l1 4l-3 3l0 5l2 5l-1 8l-5-1l-5 7zM1509 803l5 0l2 3l-4 5l-4-2zM1505 852l-1 0l-1-8l-4-1l-3-3l1-3l4-2l2 1l1 7l5 1l1 5l3 1l-2 7zM1500 936l-5-6l1-1l9 0l-2 5zM1443 991l-6-1l-4-3l-1-3l-2-2l0-3l3-3l4 3l0 3l3 1l3-1l3 3zM1447 993l3 0l3 4l-5 5l-3 1l-2-6l1-5zM1459 995l1 0l2-2l5 0l4-4l-1-4l11 0l0-4l-5-4l2-7l2-2l3-1l4 3l0 2l-3 4l-1 3l9 3l-1 5l1 2l-3 4l-6-2l-3 3l-4 1l-1 2l-5 0l-2 5l-3 1l-4-1l-8-5zM1482 792l3 2l1 3l5 0l0 4l-4 3l-2-6l-6 1zM1477 941l6 1l2 1l1 4l-3 8l3 2l2 3l-4 3l-3-5l-3 0l-3-2l1-5l-2-3l1-6zM1479 853l0-3l2-2l4 2l0 3l-4 3zM1470 1015l2 1l6-2l3 3l0 2l-7 0l-3 3l-6-1l0-2zM1463 824l3-5l-1-3l3-3l2 0l4 4l0 1l-1 2l-3 1l0 7l-4 1l-2-1zM1440 952l5 1l2-1l0-4l-1-1l2-7l-1-4l-4-3l-5 2l0-6l5 0l3-7l6-1l6 8l4-1l3 2l1 3l-3 2l0 5l-9 0l2 6l-2 4l1 2l-4 4l-9 4l-5-4zM1458 1029l2 4l-5 1l-1-5zM1455 1018l3 1l-1 4l-3 1l-1-2zM1431 694l-2-6l2-3l3 1l5-1l2 1l4-6l5 2l4-4l4 2l0 3l-4 1l-1 7l-4 5l-3-1l-5 3l-3-1l-2 1l-6-2zM1382 689l-3-2l2-7l5 3l6-5l-2-5l5-3l-4-5l4-4l0-6l-6-2l-1-5l8 1l1 1l5-3l2 2l11 0l3 1l1 4l3 2l1 1l-2 5l-4 1l-2 3l-3-1l-5 0l-3 4l-6-3l-3 3l3 6l-3 5l6 2l7-2l6-2l3-5l4 1l0 8l-1 5l-5 0l-6-3l-5 5l-4 7l4 4l0 3l-5 0l-6-11l-3-2l-4 3zM1421 1010l-1 3l-3 2l-2 0l-1-4l7-2zM1420 992l-2 2l-3-6l4-2l1 0zM1400 1054l-2-6l-4-1l0-5l-4-3l0-2l3-2l4 2l3-2l-1-5l-2-2l4-6l4 7l2 5l5 1l3 7l-1 2l1 3l-3 5l-6-1zM1392 997l3 0l1 4l-3 3l-4 1zM1378 1054l6 3l-2 3l-5 0zM1367 1048l-6-3l1-6l-2-4l4-5l9 2l2-2l6 0l0 5l-6 2l-1 4l5 3l-1 8l-2 0l-3 1l-6-2zM1368 1060l6 2l-2 5l3 4l-1 2l-6 0l-2-4l0-4zM1208 1119l-8-4l-3 4l-4 0l-4 6l-3-5l0-3l-4-3l-6 5l-5-3l2-4l5-1l2 1l3-3l8 2l0-8l-6 0l-2-2l1-5l3-2l2-6l6 1l3-9l4-2l5 1l-1 3l1 6l6 3l2 5l-4 3l-2 0l-3-4l-5-3l-4 4l2 7l7 1l1 4l-1 2l4 7l4 0l1-2l7 1l3-5l5 5l4 0l2 1l-1 4l-5 2l-4-1l-2 5l-4 6l-7-1l-1-7l-3-1zM1187 1140l1-5l4-2l4 5l0 2l-4 2zM1158 1077l3-2l5 1l4-3l4 2l-2 6l-6 3l2 7l6 8l0 2l-4 2l-3-6l-5 1l-4-4l3-4l-1-5l-4-1l-2-7zM1140 985l-4-4l5-3l1 0l9-2l5 3l0 1l-4 4l1 4l-4 3l-6-1l-3-2zM1109 1077l0-4l5-2l0-5l4-3l0-2l-6-2l1-5l5 1l6-8l5-2l4 4l-2 4l4 3l-3 4l0 4l7 1l2 5l-2 3l-1 4l-5 3l-5-2l-3 2l-1 6l-1 0l-8-3l-6 1l-4-1zM1087 962l3-4l4 3l2-1l3-5l3-1l2 5l6 2l11-4l3 7l5 3l1 4l4 2l-1 4l-4 1l-2 4l-5 0l-1 2l-5 7l-5 0l-5 1l-4-5l-1 1l-5 8l-2-1l-6-5l0-4l-3-4l-6 0l1-8l5-3l1-2l-4-5l1-2zM1115 1092l5 2l-2 6l-6 2l-2 0l-2-8l2-2zM1103 1059l-5-1l0-4l5-1l1 2zM1722 1290l-6 2l-1 4l6 4l3-8zM1711 509l-3 1l-1 1l7-1zM1713 627l-4 2l4 7l1 1l4-2l2-5zM1704 486l1 7l10-1l1-5l-5-3zM1693 425l3 8l4 0l-2-10zM1681 454l0 9l3 2l1 0l4-4l4 2l0 1l4 4l5-2l-3-5l-2-1l0-2l-7-4l2-5l-4-3l0-2l4-6l-3-7l-5-1l-1 1l-1 4l-6-1l-1 3l3 3l-3 6l1 1l6-1l2 1zM1693 1167l3 2l6-5l-1-5l-7-3l-3 4zM1693 1234l-1-1l-6 4l4 4l0 2l-5 4l1 4l8-1l1-4l2-1l-2-6l-1 0zM1689 550l3 1l3-8l-10-4l-3 2l0 3zM1677 534l8 0l0-4l2 0l4-7l-6 2l-4-3l-5 2l1 5zM1676 697l-5 6l7 2l1-1l5 3l6-1l0-1l-5-7l-3 1zM1627 489l3-3l5 3l5 9l2 2l5-2l3-7l5 2l2-1l5 2l4-3l3 3l6 0l4-3l0-4l-3-6l-5 5l-4 0l-2-6l-7 6l-4-4l1-9l-2-7l-2 7l-20 7l-17 0l4 6l6 1zM1670 456l1-4l-2-3l-6 2l2 7zM1634 1016l5 6l4 0l5-4l5 1l1 4l6-2l0-4l5-3l-5-7l1-4l-4-3l-4 4l-1 5l-11 0l-2-6l-2 0l-4 2l-6-2l-3 1l0 3l4 4l-3 4l1 2zM1659 1261l-4 4l0 5l7 0l2-4zM1610 533l4 4l3-1l5 8l2-1l2 5l-6 5l5 6l-2 3l-1 8l6 5l3-3l0-4l4-1l2 3l6-2l3 3l-4 3l0 5l3 4l5-6l-2-5l4-7l-1-2l3-5l2 2l5 0l0-5l-6-1l0-4l-7-2l-4 1l-3-4l2-4l-2-5l-1-2l4-5l-4-5l-9-1l1-5l5-2l1-3l3-2l-1-6l-5 0l-3 2l-4-4l-4 2l-4-3l-4 2l-2 8l-4 4l-3-1l-5 7l3 5l5 2zM1652 656l5-1l0-6l-6-1l2-3l-3-6l-5 4l-4-1l-3 3l0 2l3 6l5 2l4-1zM1647 1277l2 2l6 0l2-4l-2-4l-8 0zM1652 1319l-3-3l-7-3l-3 4l-2 3l4 5l4-2l4 1zM1618 635l-5 6l3 3l8 0l5-6l0-1l-5-2l0-5l-2-2l1-5l1-4l5-2l3 4l3 1l3-4l6 0l1-3l4-2l-4-9l-9-1l2 9l-8 4l-1-7l-4-1l-5-4l-4 3l0 5l-3 3l3 7l-4 3l0 4l1 2l4 0zM1642 907l-6-6l-5 6l3 4l6-1zM1628 1296l4-1l-1-6l-4 0l-2 1l-3-2l-9 1l0 1l7 7l-1 2l1 3l-3 4l3 6l2 1l5-5l4-1l1-5zM1629 674l3-1l-2-5l-3-2l-4 0l-1 4zM1621 904l7 1l2-7l-6-3l-4 3l-1 5zM1558 1282l-5-1l-6 3l0 6l5 1l3 7l7 1l1-4l-1-3l1-5l4-1l2-3l8 3l1-3l4-4l-2-2l-3-6l5-1l2 9l5-1l3-3l0-2l-1-3l1-5l-2-3l-4 1l-3 2l-5-6l3-3l3-5l8 3l7 6l0 6l3 2l0 4l2 3l-3 3l-4 0l-2 7l6 2l7-5l6 3l3-3l-2-8l-5-5l6-3l3 2l3-2l2-6l-3-3l-2 0l-6 2l-1-7l1-5l-2-1l0-7l-4-3l-7 3l-2-1l-3 2l-5 6l-6 0l-2-1l-5 1l-3-1l0-5l-3-2l-5 5l0 2l-3 2l-4-1l-3 1l1 9l7 3l2-1l4 2l7 0l-3 8l-4-2l-4 0l-3-4l-3 1l-5-1l-3 8l7 0l3 3l-1 3l-2 2zM1621 597l-3-4l3-5l-4-3l-5 3l0 4l-2 3l3 5l7 0zM1595 972l-7 6l1 2l-1 4l-2 1l-1 4l-4 3l1 2l5 3l6-3l8 3l-1-12l10-13l1-5l-4-2l-5 2l-5-1l-3 2zM1606 761l4-5l-3-4l0-3l-4-5l-2 0l-3 3l0 7l-6 6l8 2l3-2zM1588 656l2 8l6-2l2 1l5-5l-6-3l2-6l-3-2l1-7l-6-1l-5 3l2 4l-3 6zM1577 492l12-7l2 3l0 3l4 2l5-3l1-4l-7-7l-4 1l-5-1zM1586 1234l4-2l8 0l0-7l-6 0l-1-3l3-5l4 1l3-2l-1-7l-4-1l-4 4l0 2l-8 0l3 8l-3 2l0 2zM1585 523l4 0l1-2l-3-9l-6 7zM1568 1359l11 1l2-2l0-4l4-7l-6-6l1-1l0-4l6 0l3-4l-2-4l-7 0l-1-1l-7 2l-4 11l1 6l-7 2l5 7zM1574 536l-5 1l0 6l-3 5l3 6l5 0l3-2l0-2l6-7l-7-3zM1570 1089l0-3l5-3l0-3l-5-2l0-5l-6-3l-5 1l-2 2l0 4l-5 2l0 4l6 2l-6 5l3 6l7-2l1-3l4 0zM1559 581l4-1l-1-5l5-6l-8-9l0-5l-4-1l-1-4l-1 0l-6 3l3 7l-1 8zM1553 1333l3 1l1 7l4 1l3-7l3-1l-1-7l-6-7l-3 1l-4 7zM1564 542l2-10l-3-3l4-6l-2-2l-15 10l0 3l2 7l4 1l1 1zM1541 1236l5-4l3 2l0 3l4 2l5-2l3-4l-1-6l-4-1l1-3l-1-5l-4-1l-3 7l-4 4l-4-1l-3 1l0 5zM1549 591l4 2l3-1l1-1l-1-8l-5 0l-3 3zM1554 804l1-2l-1-6l-6 0l-2 8zM1548 1298l-4-6l-6 5l2 4l8 0zM1531 570l-12-11l-6 3l3 5l0 4l3 1l2 6l5 0l5-4zM1520 550l3-3l0-1l-7 2zM1472 573l3 4l-1 9l1 5l-1 3l1 5l1 2l5-2l4 3l4 8l-1 5l6 3l3-3l4 2l8-6l2 0l4-3l-2-7l-7-3l0-2l4-5l-3-3l-5-3l-8 0l-2 1l-5-3l-1-3l-1-6l-2-1l-4-6l-3-1l-1-5l7-5l3-6l-18 9l1 1l-2 5l6 4zM1497 552l2 0l3 5l6-2l-1-6l-15-2zM1502 1252l-2 2l1 4l7 1l2-1l0-3zM1499 1321l6 3l3-6l-1-5l-8 3zM1484 1136l4 3l-3 7l3 2l1 2l6 3l-2 6l3 3l9-4l-2-5l-4-1l5-8l-6-4l1-5l3-1l0-7l-5-1l-2 5l-2 0l-5-3l-3 2zM1499 1230l2-7l-5-2l-5 2l-1 3l4 3zM1474 1181l-4 6l-3 7l3 5l7 0l3 5l-1 3l5 4l5-2l2 5l5 1l3-5l-2-6l-7-2l-3 1l-2 0l0-5l5-4l0-2l3 0l6-3l-2-5l-2-2l-5 4l0 5l-7-1l0-5l-5-1zM1487 631l-4 6l0 4l7 0l5-9l-1-2zM1484 1162l-5 5l2 4l8 0l-1-7zM1470 1152l3 3l8-1l1-3l0-5l-1-1l2-9l-3-1l-6 3l1 2l6 5l-2 1l-7-1zM1408 1167l5-1l1-5l2-3l-3-8l5-2l1 4l5 2l3-6l5 3l4-1l1-6l4 2l4 0l1 5l5 4l5-2l2 1l3 4l4 0l5-6l-2-1l-6-1l-1-8l-3 0l-2-1l-8-2l-9 2l-2 1l-3-5l-6 1l-2-5l-2-1l-5 2l-9 1l-2 11l-3 3l0 4l-4 1l-4-2l-2 3l1 9l8 0zM1368 1190l-3 6l1 6l-2 2l1 5l4 3l0 3l7 10l4 3l10-3l9 13l6 2l1 0l7 1l2-5l1-2l8 1l2 6l7-4l3 1l4-1l4-4l-4-6l-6 0l0-6l9-9l3 7l3-3l6 1l2-2l-2-5l11-2l0-4l-4-3l0-3l-3-2l-4 0l-1 1l1 4l2 2l-2 6l-3 0l-2-5l-2-3l-7 2l0-5l6-2l0-2l3-2l-2-8l-3 0l-2 2l-7-4l-3 6l-2 1l-1 6l-4 0l-1-2l-4-4l1-2l2-3l2 0l3-3l6-2l1-5l-5-4l0-3l-6-3l-4 3l-3-1l-4 1l-1 5l5 3l1 2l0 1l-5 2l-3 3l-4-2l-3-8l-4-2l-1 1l-3 4l-6-1l-2 5l2 3l-1 7l2 1l3 7l8 5l3-1l2-5l-4-4l0-2l8-3l4 3l-3 12l5 4l1 5l-3 4l-3-1l-6 3l0 2l0 5l-5 3l-1-1l-1-6l-5-1l0-4l-5-2l-2-9l-1-2l-3-1l-2-5l-2-3l0-1l6-4l-4-7l-1-4l-3-1l-6 3l-1 3l-3 3zM1432 578l2-2l-6 2zM1447 579l6 1l1-1l5 0l3-1l2-3l-4-8l-3-1l-13 7zM1455 1261l1-2l-4-8l-5 2l-1 4l3 3zM1441 1259l0-1l-3-6l-5 0l-2 4l3 6l2 0zM1423 1290l-3-2l-5 1l2 7l2 1l4-3zM1422 737l-5-3l0-4l-8-2l-2-2l-3 1l-3 6l0 2l2 2l0 5l4 1l3 5l3 0l2-4l3-1zM1398 1150l0-1l1-8l5 0l2-8l3-2l-7-6l-3 2l-3-2l-4 4l-4 0l0 2l2 4l-3 6zM1406 1272l1-8l-8 1l0 6zM1383 589l1 1l5 0l2-3zM1394 567l-2-1l-5 3l-1 4l-3 3l-6-5l-3 5l3 4l5-2l2 6l7-11zM1398 1282l-1 7l3 3l5-1l1-5l-4-5l-2 0zM1405 1112l-5-3l-3 1l0 5l5 4l2-2zM1371 1267l7-4l-1-4l4-4l5 6l4 1l4-6l0-3l-6-1l-5 1l-4-8l-9 2l-2-1l-1-7l-3 0l-7 3l2 5l1 2l0 3l-2 3l1 6l1 4l7 0zM1379 1165l5 1l3-8l-8-2l-2 3zM1385 1303l-6 1l0 7l8-3zM1384 1139l-1-3l-4-4l-4 1l-1 3l5 7zM1379 833l-4 3l0 4l3 4l5-1l0-8zM1369 1114l-3 1l-3 6l5 2l3-1l3 1l3 0l2-4l0-4l-5-2l-4 1zM1358 1208l-4 0l-2 8l4 2l4-1l1-6zM1349 1131l6 3l4-2l2-4l-2-2l-6-1l-3-4l1-3l-5-5l-4 4l-4-1l-1 1l0 6l3 1l2 5l4-2zM1351 1195l-9 0l-1 2l2 5l4 1l3 3l1 0l4-4l-1-4zM1350 1259l-5-2l-4 2l-1 4l2 6l6 0l2-4zM1334 1309l6 2l4-5l-1-2l-2-1l-3-6l-5 2l3 6zM1342 936l-3-1l-6 4l2 4l-1 4l6 5l4-8l-1-2l1-3zM1300 1196l3 2l0 7l5 0l2-5l5 4l7 2l-4 5l-5-4l-3 1l-1 2l1 3l-5 4l2 3l-2 3l1 4l3 2l7-2l6 3l0 2l-5 4l5 5l4-2l2-6l4 4l5-3l-1-3l4-5l-5-7l0-8l-6-1l3-6l-8-1l0-4l-1-3l-5 0l-4-2l-1-7l1-1l1-9l-5 0l-4 2l1 5l3 3l-5 5l-4 2zM1304 1284l1 5l-6 5l0 2l4 2l2 4l9 1l2-1l5 4l1 3l9 1l-1-4l3-6l-2-2l0-6l3-1l0-5l6-2l-6-7l4-6l-3-5l-5 2l-4-2l-5 2l-1 4l-4 3l1 4l-1 3l-3 2l-5-3zM1324 1141l-2 6l2 5l9-5l-7-7zM1192 1618l-8 10l4 9l-6 4l0 3l5 4l-1 3l2 7l4-1l3 2l-1 6l-1 1l2 5l-2 5l-1 0l-1 7l-5 1l2 6l3 1l-1 6l2 10l-1 2l8 4l0 3l1 5l6 8l2 0l4-2l2 2l5 1l5-3l3 2l4-2l4 4l5-3l-1-4l3-2l5 0l1-2l5 1l2 5l-1 1l1 3l-3 6l6 4l6-7l4 1l3-2l1-4l5-3l0-4l3-2l5 0l5-3l-1-1l-7-1l0-5l3-1l1-6l-2-3l0-4l-6-1l-3-2l0-3l4-4l4 0l3 5l9-1l1-5l5-2l0-4l-4-4l2-5l-7-1l-2 1l-2 0l-1-4l3-5l3-1l3 1l0 4l3 5l6-4l4 5l6-2l1 3l-1 4l-6 0l-1 2l1 5l3 2l6-6l1 0l5-3l3 1l5-7l-3-5l-3 0l0-5l6-3l-2-4l-1-1l-6 3l-4-1l2-6l2-1l2 0l4-3l0-4l-5-3l-3 4l-5-1l-4-4l2-7l-1-1l-5-1l-2 1l-8-1l-8 0l-2 2l-6-2l-3 0l-4-6l-5 2l-3-1l-6 1l-2-5l-4-4l0-3l-4-4l1-3l-1-5l-2-1l-5-4l-5 5l4 4l0 4l2 3l0 2l-4 3l1 5l4 1l-3 7l-7 0l-4-2l-4-6l0-2l-3-3l-2 1l-4 4l-4-1l-6 8l-8 3l-5-5l0-1l3-2l1-7l-3-1l-1-2l2-6l-2-3l-4 1l-1 6l-4 1l-1 4zM1249 1644l-9-3l1-3l6-1l3 3l3-1l1-3l5-2l5 11l3 1l0 4l-5 4l1 5l-2 1l-4-2l2-6l-2-2l-7 2l-2-1l-1-4zM1209 1683l0 6l3 1l5-2l2 2l-1 5l-4 1l-3 2l-3-3l0-6l-7-1l1-5l4-3zM1322 1165l-3-6l-6 0l0 8l8 1zM1317 875l-3 3l1 5l6 1l-2-8zM1311 1125l-6 4l0 3l-2 3l0 6l7-1l1-4l4-2l0-5zM1312 1146l-7-1l-3-4l-3 2l-7-1l-1 6l-2 1l1 7l6 0l4-3l4-1l5 1l3-2zM1296 1711l5-4l-1-3l5-1l1-2l-3-4l5-5l-4-3l-5 2l0 5l-2 6l-3 1l-1 5zM1307 1265l-2-4l-5-1l-3 3l3 5l6 0zM1289 1236l4-1l1-4l7-2l-4-7l-1 0l-3 1l-5-2l-5 3l-3-3l-6 1l-1 6l5 3l1 4l3 2l4-2zM1252 985l-5 3l-1 2l4 3l4-1l3 4l5-1l5 3l4 0l1 1l8-2l2 2l3 0l3-6l5 1l3-5l-3-6l-5 0l-4-5l-2-1l-12 4l-3-3l-9 6zM1293 1281l1-2l-5-8l-6 2l-1 4l-5 6l6 5l2-3l-1-6zM1266 1339l7 0l1-3l9-1l0-1l-3-12l-4 0l-5 5l-3-5l-4-2l-5 4l0 10l6 2zM1241 1268l5-6l4 3l6-2l0-4l8-3l0-2l-2-8l-4-2l-4 5l-2-1l-10-7l-6 1l-1 5l-4 3l2 6l2 2l-3 7l3 2l2 0zM1251 1856l-5 1l1 6l2 2l7-2l-1-6zM1231 1215l5 5l2 0l4-1l-1-5l2-5l5 2l2 0l2-3l2-12l-2-2l-4-8l-3-2l-2 1l-4 5l-3 0l-5 6l4 7l0 3zM1181 1334l0 5l6 1l-2 5l5 3l2-1l3-5l3 1l4-3l4 3l4-5l4 3l5-3l3 3l3 0l5-1l2-7l5 1l2 4l5 0l1-2l-2-7l3-1l3-5l-3-6l-1-3l-6 1l-4 2l0 3l-4 3l-3-2l-4 0l-4-3l-3 5l-7 0l-10 4l-2-1l-4 3l-5-2l-4 3l0 2zM1238 1773l-5-1l-5 5l0 5l2 2l7 1l2-3l-2-3l2-5zM1202 1599l4 8l14-3l7-4l-1-5l2-3l0-4l-3-2l-5 4l-5-2l-2 5l-4 0l-3-4l-4 0l-3 7zM1199 1216l-2 11l2 2l4 5l7 1l4-8l2 0l1-4l-2-6l2-1l2-6l3-3l1-4l-3-2l-2-3l5-4l0-5l-10 2l-2-3l-5 2l-3-1l-3 3l-1 2l-7 2l0 1l8 6l1 4l-8 3l0 3zM1197 1260l9 4l7 0l1 2l6-3l2-3l-6-8l-4 1l-3-1l-4 1l-2 0l-6 5zM1049 1216l9 3l1-5l0-2l3-3l3 4l0 2l0 5l-6 1l0 7l-4 1l-1 2l2 11l-6 4l5 7l2 7l3 1l0 5l3 1l1 4l3 1l2 3l6-2l2 5l8 0l3-1l5 3l5-1l8-8l5 3l5 0l1-2l8 1l1-1l8 6l3-1l4 2l4-4l5 4l4 1l2 6l3 1l2-1l2-3l5 1l4 7l2-1l2-2l-3-8l3-1l4 5l2 5l4 3l2-2l1-6l4 1l3 3l4-6l5 2l3-2l3-7l-2-4l-3-1l-7-1l-2 2l-7-5l-6 2l-3-6l-3 0l-3-3l-4-1l1-5l-6-4l-2-4l-5 2l-2-1l-4 2l-5-5l-4 4l0 3l-1 1l-3 7l-3-2l-5 4l1 4l-6 2l-3-4l-6 5l-3-4l1-1l8-1l7-9l1-3l-2-2l-6-1l-1-5l1-1l1-4l-6-4l-2 1l-6-3l-2-2l-5 3l-2 3l-6-4l-3 5l-1 4l-4 1l-2-8l2-7l-1-3l-7 0l0-2l-1-5l2-1l2-4l0-6l-6-4l-1-4l2-3l-5-5l-4 3l1 4l-2 2l0 4l-1 2l-4 1l-3-2l-5 3l-3-5l-5 1l0 6l5 2zM1165 1266l3-1l3 6l-1 1l-6-3zM1094 1254l0-3l1-2l5-1l-1 7l1 2l3 1l0 5l-6 0l0-4l-4-2zM1067 1236l-1 4l-7-2l3-6zM1183 1900l-3-1l-3 2l3 6l5 1l2 4l9 0l-3-8l-4 0l-2 1zM1116 1310l0 6l4 1l2 3l-6 4l0 3l6 5l-1 2l6 6l4-3l1 0l4 5l2 0l3-7l4 0l1 4l4 2l4-2l4 3l4-3l2 1l4 0l-1-6l1-2l5 6l4-5l-1-3l2-3l4-1l5-6l0-1l-7-3l4-6l0-1l-6-4l-4 4l-2 0l-4-7l0-6l-8 0l-3-4l-3 0l-4-1l-3 0l-1 4l-3 0l-3 5l-7 2l-2-1l-4 2l-1 4l-4 2l-4-1zM1162 1319l2-7l4 1l1 5l-1 3l-4 0l-4 3l-3-2l1-5zM1148 1299l8 3l-3 6l1 5l-2 1l-4-2l2-6l-5-3zM1181 1807l3 0l1-1l-3-8l-6-3l-1 7zM1124 1375l5 3l4-2l4 2l-3 3l4 5l-3 5l-2 6l4 2l3 6l1 1l4-7l6 2l2-5l2-1l3-4l-4-3l0-3l-4-2l0-3l4-2l2 1l0 3l5 5l5-1l1-3l2 0l7 5l1-4l6-2l0-4l-3-3l1-4l2-1l1-3l-5-7l-5-1l-3 6l-2-1l-1-3l-5-1l-7 4l-3-1l-3 2l-5-2l-6 2l-2 3l-7-4l-6 6zM1175 1402l0-1l-9-1l-2 1l-5-1l-2 1l1 8l1 4l6 2l5-5zM1153 1502l2 2l5-3l2-5l3-5l-6-7l-2-1l-4 2l-5-3l-2 2l-5-2l-1-2l-7 3l1 5l1 1l0 8l3 1l-1 2l5 6l5 1l1-4zM1155 1494l-2 4l-6-2l5-5zM1138 1677l1 1l9 0l4 6l7-3l1-3l2-1l0-4l-6-4l-2 1l-5 0l-2 2l-5-2l-3 4zM1157 1531l4-3l0-2l-4-6l-5 1l-1 6zM1149 916l1 6l1 0l5-1l3-4l-7-4zM1145 1652l2 1l6-3l2-4l-5-2l-2-4l-7 3l4 6zM1145 1826l4 3l4-1l-1-6l-5-1zM1131 1611l3 4l2 0l4-6l4 0l2 1l4-1l0-7l-13-1l-3 3zM1144 1815l-6-2l-3 2l2 7l8-3zM1130 1709l5 0l3-7l-8-2l-2 6zM1070 1459l-5 7l2 3l-1 5l4 4l0 3l7 2l4-4l3 3l1 2l2 2l8-1l4-2l1-2l8 1l2-2l-2-4l5-4l4 2l4-3l1-4l2-2l5 1l3-7l2 0l1-8l-6 0l-3 1l-2-2l-10 2l-4-2l-5 3l-5-8l-3 1l-1 6l-2 2l-5-2l-3 3l-1 3l-6 1l-4 5zM1114 1460l1 2l-4 4l-2 0l-4 3l-2 1l-1-1l-2-4l1-1l6-1l2-3zM1125 1390l9 0l-2-7l-3-1l-3 2l-2 4zM1116 1896l-1 4l6 4l3-4l-2-3l-2-2zM1038 1314l4 6l4 0l3 2l5-1l2 3l1 3l4 1l5-5l3 5l-1 3l7 4l8 2l2-3l6-1l-3 5l-5 0l-5 5l1 7l-4-1l-2-1l-7-2l-2 12l3 2l2 4l9 3l5 5l6 1l3 5l4 2l7-6l2 2l2 0l5 6l4-4l-2-9l1-3l6-3l2-5l-6-6l1-2l-3-8l-6-3l-11 0l-2-3l-5-3l0-4l-4-4l1-4l5-2l0-4l4-6l-1-1l-3-2l-2 0l-5-2l-3 0l-3 6l-3-1l-3-6l1-2l0-3l-4-3l1-6l-8-2l-2 3l-6-6l-2 0l-2 3l-7-3l-4 7l-6 6l2 6l4 1l2 6zM1106 1355l-2-2l0-4l1 0l5 1l1 2zM1095 698l3-1l0-5l8-6l5 2l2 4l4 0l4-6l0-2l-2-1l-2-8l-2 0l-4 6l-8-3l0-3l-7-3l-3 2l-3 5l0 6l4 6l-3 5zM1109 902l-2 5l1 3l6 2l3-2l-1-4l-2-3zM1112 1526l-6 1l0 5l3 1l5-2l0-2zM1103 1676l-6 1l0 6l3 2l1 3l4 2l4-4l-2-8zM1097 1719l-3 6l5 6l5-4l-2-6l-3-3zM1045 1410l3-2l1-5l3 0l3-3l2-8l4-1l3 1l4-2l-5-9l-4 1l-3-1l-9 11l-3 5l-5-2l0-4l-2-4l-6 0l-3 4l-1 3l-6 2l2 5l0 3l9 12l1 0l4-2l1-4zM1047 1882l2 3l0 3l9 3l2-4l-5-10l-7 3zM1021 1562l-13 9l0 1l6 5l-2 3l3 7l6-6l2 2l3 0l5 4l3-2l2 1l6-3l12 2l1-3l-1-5l-5 0l-2-4l-3-1l-1-6l-4-1l-5 2l-3-4l2-2l4 0l3-4l2-1l2-7l-2-3l-6 0l-3 5l-1 1l-5-8l-2 0l-3 2l-1 6l-3 5zM1046 1701l3 2l3-1l3-3l0-5l-8 0zM1051 1921l-4 0l-1 4l-5 3l4 4l0 7l6-2l2-5l-3-5l4-3zM1040 1357l4 4l3-1l4-6l1-9l-4-1l-5 4l-8-1l1 3l-3 4l1 3zM1039 1383l0 1l4 2l5-1l0-8l-3 0zM1038 1913l9 2l1-6l-8-1zM1035 1031l7-1l2-2l1-6l-5-4l-4 6l-5 0l0 2zM1044 1048l-2-4l-1-4l-8 2l0 3l-3 6l4 4l0 4l9 1l2-7l-1-2zM1013 1697l5-1l0-6l-6 7zM1008 1061l-1 5l4 2l6-7l-2-2zM1007 1545l2 9l2 0l3-4l0-1l-5-4zM1008 1917l-4-9l-4-3l0-3l-5-4l-3 3l1 7l-4 0l-1 5l3 2l6-1l1 2l-1 3l7 4zM990 1845l3 3l0 4l6 2l5-4l-1-5l-5-1l-2-6l-2-1l-4 3zM993 1737l-4 7l5 5l4-8l0-3zM985 1739l5-3l-1-7l-2 4zM988 1473l-3-8l-4-2l-3 0l-4 7l2 2l-3 4l3 3l3-4l5 3zM967 1861l1 5l6-1l3 3l3-3l2-8l-8-1l-6 3zM961 1905l0-3l-2-2l-6 1l1 7zM886 1158l-2 3l5 6l-3 6l6 3l1 1l5 2l2 4l0 6l3 3l2 0l5-4l6 3l3-8l7 0l3-7l8 0l1-3l-4-5l3-6l-3-6l3-3l-1-5l-2-2l-5 2l-3 4l-1 1l-2-8l-5-1l-3 3l-3-5l-5-2l-6 7l-7-1l-2 5l0 3l-3 4zM905 1169l5 3l0 3l-4 1l-3-3zM837 1317l0 8l-6 1l1 5l-2 2l1 7l-7 0l-2 5l6 4l1 4l14-2l3-3l-1-4l-5-3l3-7l4-3l-3-4l-1-17l-2-3l-5 3l-3-2l-3 1l-1 6l5 2zM771 1316l1 4l10 9l4-4l5 4l4-1l0-2l5 0l4 3l5-2l6-1l4 1l3-5l-2-3l-4 2l-3-4l2-3l-1-3l-2-1l-2-7l-2-1l-6 1l-2 5l5 3l-1 7l-6 1l-4 3l-4-3l3-8l2-2l0-5l4-5l-2-4l-7 1l-7 7l-3-5l-5-2l-1 3l-4 2z" fill="#26332d"/>
<path d="M1828 1695l-9 0l1 4l4 2l0 6l5 1l1-10zM1792 1707l-1 3l-6-4l-2 2l1 5l5 1l2-1l5 1l4-2l1-5zM1781 1686l1 8l6 0l1-3l-1-4zM1769 1653l-3 6l-3 1l0 4l3 2l1 6l13 0l3-3l-1-6l-5-6l4-8l-2-4l-6 2l-1 5zM1770 1734l-3-8l-3 0l1-7l-3-1l-3 1l-1 7l3 2l0 5l4 3zM1752 1617l-4 1l-1 3l5 6l3-1l2-6zM1754 1778l-3-4l-5 2l-1 6l-4 1l0 4l12-3zM1740 1601l-6-6l-2 6l-3 2l2 6l7-1l0-5zM1722 1945l6-3l2-2l-1-3l-4-1l-7 6zM1701 1625l2 2l7 1l7-2l1-3l-6-5l3-4l-1-3l-4-3l-4 2l3 8l-3 0zM1674 1758l3 6l4 2l3-1l12 2l3 5l3-4l5 4l0 3l6-1l-1-8l3-3l-1-2l-2-1l-3 0l-6 2l2-10l-6-1l-7 1l-2-7l-12-1l-3 5l1 3zM1693 1661l-10 4l-5-3l-2 6l-4 0l-3 2l3 5l1 1l4 0l4 4l3-4l0-3l6-3l4 3l2-1l5 0l2 4l7 1l0-8l-4-9l2-5l3 0l3-7l0-2l-2-1l-6 1l-1 7l-3 0l-3-2l-5 2l-4 0l0 1zM1699 1709l1 1l9-4l-3-6l1-3l-2-2l0-5l-5-3l-4 5l1 3l-3 4l-1 2l4 3zM1690 1598l7 5l3-8l-8-7l-3 2l-7-1l-2 0l1 6zM1694 1327l-6 0l-3 5l1 5l9-8zM1687 1823l0-2l-4-2l-4 1l-4-3l-7-3l0 8l1 4l4 2l4-1l4 3zM1668 1566l-5 6l1 3l-3 5l4 10l3 2l2-1l1-5l5-3l-1-4l-4-2l-1-2l2-4zM1645 1520l5 5l1 1l-6-8zM1653 1528l1 3l2 1zM1648 1896l8 0l4-4l0-4l-2-1l-8 0l-1 0l-1-5l-5-1l-3 0l-4 4l-1 2l1 8l6 0l3-3zM1647 1558l1-5l4-1l0-5l-4-4l-7-3l-3 1l0 1l4 7l0 2l-3 2l0 4zM1605 1720l-1 6l6 0l3 6l-1 6l4 4l6-9l3 2l8-1l7 6l5-1l-1-7l-6-1l1-3l-3-6l-2 0l-4 5l-2 0l-4-7l-5 7l-5-7l-3-1zM1627 1486l-3 5l1 5l-4 3l0 3l-2 2l-1 3l1 7l-2 1l-2 7l5 3l-4 6l-3-1l-3-3l-2 0l-4 4l-5-8l-4 3l-1 4l-4 2l1 5l-2 3l2 4l3 2l-1 6l2 1l7 0l3 4l-1 7l8-1l-1-7l1-6l5 1l3-2l2-4l2-1l2-4l2-1l0-6l5 0l2 3l7-5l0-2l1-3l0-5l-5-1l-2 1l-5-2l4-9l-3-3l1-5l2-1zM1627 1476l-8 2l-1 6l3 2l5-1l-1-4zM1641 1588l-1-10l-4-5l-2 1l-3 8l-3 0l-2 3l4 4l1 7l3 0l4-2l1-3zM1634 1840l2-6l-6-2l5-6l-8-3l-3 7l3 4l0 2l5 5zM1623 1684l8-1l-1-4l-5-3l-1 0zM1624 1820l0-5l4-2l1-7l-5-4l-3 3l-7 2l0 7l3 9l2 0zM1608 1457l5 4l2-1l8 0l0-7l-3-8l-6 1l-1 4l-6 3zM1598 1387l4 2l3-7l-4-2l-3 4zM1606 1420l5 4l-2 5l1 4l3 2l6-3l1-6l-11-9zM1596 1691l-9 0l-3 5l0 2l5 4l3-2l5 3l4-2l3 2l6 1l2-2l0-5l6-3l0-3l-2-2l-6 1l-4-3l-2 2zM1611 1625l2-2l5-2l-5-8l-5 1l-5 2l-2 5l4 5zM1610 1918l-9 8l-1 3l6 6l3-3zM1602 1513l7 1l1-10l-4-3l-3 0l-5-2l-2 2l0 7l4 1zM1585 1438l4 1l0 5l-5 2l2 9l8 0l2-3l2-1l3-4l4-1l-2-6l2-1l0-4l-3-3l-5 1l-1-1l0-3l2-2l2-4l-4-4l-5 3l-4-1l-3 1l-3 0l-8-3l-1 1l0 5l-6 3l3 4l4-1l5 5l3-2l1 0zM1601 1649l3-6l0-2l-4-2l-1-6l-4-1l-5 4l-1 2l-6-1l-4 3l2 4l5 3l3-1l2 2l5-2zM1602 1595l0-4l-5-8l-3 0l-2 6l2 3l-1 3l0 4l8 7l1-3l-2-5zM1594 1491l7-3l-1-2l-5-2l-4 1l-1 3zM1585 1675l7 1l0-2l-4-7l-4 1zM1582 1740l4-6l3-3l-1-3l-5-4l-6 1l-3 5l1 3l-1 5zM1534 1400l4 7l5 0l1 2l-1 5l-5 2l2 11l-3 3l-2 6l6 6l-3 3l3 7l-4 3l0 1l4 3l4 0l3 3l1 0l5-4l-1-3l4-4l3 1l1 6l6 8l5-5l0-6l-3-5l-4 0l-1-1l0-4l-5-2l-2-4l-3 0l-3-3l1-4l0-2l-6-3l5-6l3 1l5-5l-3-8l8-5l6 1l4 3l8 1l6-3l0-4l-4-3l-1-3l-7-3l-4 3l-5 0l0-7l3-2l2-2l-5-5l-6 6l-3-2l-4 0l-3 6l-4-1l-5 2l-6-1l0 9zM1543 1520l3 0l3 2l4-3l7 5l3 0l1 5l-2 4l1 3l6 3l3-5l1-5l5-2l-1-2l-3-4l2-5l2-1l4-7l-4-6l-8-1l-2 2l-6 0l-3 5l-3 0l-5 3l-5-3l-7 6l1 4zM1581 1583l-1-7l-4-6l-5 2l0 5l2 1l-1 4l7 3zM1568 1670l0-3l-4-3l-4 3l0 2l-4 6l10 4l0-7zM1567 1694l-1-11l-3 1l-4 7l1 2zM1534 1759l0 4l1 1l1 5l5 4l5-4l7 3l6-2l-1-6l4-2l0-3l1-3l-1-4l1-4l-2-4l-7 3l-1 7l-3-1l-5 1l-3-3l-5 2zM1544 1569l5 3l2 5l2 2l5-2l1-4l2-3l-5-6l3-5l0-5l-4-8l-4-1l-2 1l-5 8l2 5l0 5zM1546 1494l2 10l6 1l1-1l0-6l3-1l1-6l-1-7l-6-1l0-1l1-5l-5-5l-6 5l2 5l-2 5l5 4zM1546 1621l-4 1l-1 5l4 4l5 4l2-2l1-6l-3 0zM1542 1713l-3 0l-4 7l1 1l6 2l4-6zM1545 1546l0-8l-5-1l-2-2l-8 5l2 6l4 1l3-3zM1541 1576l3-6l-4-1l-5-6l-3 3l0 2l-7 4l6 6zM1516 1492l5 8l4-4l6 1l1-6l3-2l-1-6l-3-2l-7-13l-5 2l-4 7l3 7l0 5zM1491 1441l1 1l6-1l2 5l11 0l2 5l4 5l4-5l0-4l3-3l0-4l3-2l6 1l1-2l-4-5l3-3l-4-4l-7 4l-5-1l-3-3l-6 6l0 2l-1 2l-7 0l0-1l-9-1l-1 1zM1511 1386l0 3l4 3l-1 3l-4 6l4 2l2 5l3 0l2 5l3 1l5-5l4-7l-8-2l1-5l-1-2l1-2l-1-13l-8-1l-2-2l-6-5l-8-1l-4 1l0 7l5 2l1 3l2 2zM1388 1558l7 2l0 4l1 1l-3 5l1 4l-1 1l0 6l5 1l2 3l2 0l6 3l-5 3l-3-5l-5 3l2 5l-5 3l-3-5l-7 3l3 4l-4 5l1 2l9 3l4-6l4 1l6-3l1-4l4 0l2 1l8-2l5 2l3-1l4 1l4-3l5 2l0 2l4 8l2 1l1 7l4 3l4-3l-3-8l1-6l2-2l-6-5l7-4l2 1l9-3l8 1l0-5l-3-3l0-3l3-3l6 4l0 4l-1 5l8 1l2-2l4 2l5-2l0-2l5-3l-1-4l2-1l4 0l1 2l5 1l3-3l1-5l-3-1l-3-9l3-2l2 0l2 3l3 1l3-5l-1-4l3-3l0-5l-5-2l-1-4l-4-3l-2 1l-7-2l2-4l-2-4l6-11l-6-4l-6 0l-6 7l-8 3l3 6l-1 2l-6-1l-2 3l3 5l-1 1l-7 1l-1 10l3 2l2 6l-6 2l-4-4l-6 1l-3-1l0-8l-5-1l-2 1l-1 4l0 3l-3 7l-1 2l3 6l0 5l5 2l-3 10l-5-8l-5 3l-2 5l-4-1l-4-4l-4 2l-7 0l-2-3l-6 0l0-6l-7-2l0-4l-2-2l3-7l0-2l-3-2l0-3l3-6l-5-3l0-3l-2-3l-8-1l-5-3l-2 1l-4-2l-2 1l-3 4l0 5l1 5l6 3l0 4zM1496 1539l6-5l3 5l-2 3l-4 0zM1505 1676l-5 5l0 7l3 2l-1 4l5 6l4 0l3-4l4 3l3 0l3-4l1-5l-11-3l-1-4l-4-7zM1516 1719l-6-2l-5 9l4 2l2-1zM1497 1601l3 3l1 3l-2 6l2 2l1 5l5 2l3-2l2-7l-2-5l1-5l-9-9l-2 1zM1508 1918l-4-8l-1-5l-6-1l-3-3l-7 0l-1 5l-3 2l2 4l-1 9l5 0l5-6l3 0l5 4zM1504 1391l-6-2l-3 1l1 7l-1 1l3 6l4 0l4-6zM1447 1383l-2-1l-5 2l5 12l3 1l1 2l6 0l5-1l-2-6l-5-2l2-7l3 1l5 3l3 7l-1 2l6 3l4-3l9 3l-2 8l-6 0l-2 8l0 4l3 5l6-1l6 2l2-4l-3-4l-3-2l0-4l3-1l3-6l-1-2l5-4l-12-8l-2-11l-5-2l-6 0l1-8l-7-3l-3 7l-4-2l-4 3l-1 3l2 5zM1491 1970l-1-2l-7-1l-7-3l-2 7l1 2l-1 3l4 2l5-4l7-2zM1473 1784l-4 4l0 1l5 4l4-4l5 3l1-2l2-2l-1-5l-3-2l-5 4zM1462 1625l7 3l5-2l10 0l0-3l-4-4l0-2l-3-5l-4 2l-2-1l-5 4l-3-5l-5 3l1 6l3 1zM1425 1506l2 7l0 6l6 1l-1 5l-2 3l3 5l6 0l3-6l3 1l4-2l1-4l2-1l4 2l3-3l3 1l1 3l2 3l4 0l3 2l3 1l3-6l0-2l5-6l-2-3l2-6l-4-2l-1-4l-6-1l-4-5l-3 2l-3 3l-5 1l1 8l2 1l0 2l-3 4l-3 0l-2 1l-5-5l-2-6l2-2l-1-4l-8-5l-5 2l-2-2l-4 1l0 4l2 5zM1482 1470l-2-5l-3-1l-2 2l-7-2l-5 7l5 2l5 7l4-6zM1473 1729l5 0l-4-9l-4 4l0 2zM1451 1806l-4 3l7 6l-1 4l3 2l-3 6l-2 1l-1 1l6 6l3-2l2 1l7 0l0-6l-5-4l0-2l-2-1l0-7l6-5l-2-8l3-2l0-3l-1-3l-6-1l-1 2l-3 1l-3-1l-6 4l3 5zM1446 1934l9-2l0 4l4 5l4-3l-2-7l2-6l-2-4l-5-2l-9 0l1 7l-2 2zM1440 1635l-4 7l4 3l0 6l4 3l6-3l0-4l1-4l3 0l2-4l4 1l2-1l1-6l-4-3l-5 3l-4 0l-3 5l-3 1zM1432 1434l2 6l2 1l1 4l4 2l1 5l3 2l2-2l1-6l8-4l2-8l-7-3l-8 1l-2 5l-5-7zM1438 1905l1 3l7 0l2-6l-7-1l-2 1zM1420 1462l3 3l4-1l4 2l-4 9l4 6l5-3l-1-5l4-3l-5-5l1-6l1-1l-2-8l-2 0l-5 4l1 5l-8-2zM1412 1707l-4 1l-7 6l3 7l3-2l7 1l1-1l0-2l3-4l5 2l4-5l5-4l0-3l2-5l-4-2l-2 0l-5-4l-6 4l-3-2l-4 6l5 5zM1416 1652l1 4l7 1l2 2l3 0l3-7l-4-4l-2 1l-5-5l-4 7zM1406 1858l2 11l5 2l2 0l1-3l9-1l0-3l-4-5l3-3l0-4l3-1l1-2l1-4l-6-3l5-7l0-1l-9 0l-5 3l0 6l-10 6l6 6zM1384 1413l4 4l6 1l5-4l2 1l3 7l9 2l2 6l-3 3l-6-1l-2 6l-6-1l-1 2l1 6l2 2l6-1l7 5l2 0l1-9l2-1l3-4l-5-7l7-1l5-6l-4-6l-6-4l3-5l-5-5l-6-2l-2-4l-7 4l-1 5l-2 2l-4-3l-4 5l-4 0zM1418 1684l4-5l-3-4l-6 0l2 8zM1412 1475l7-4l-5-7l-4 3l0 5zM1408 1496l4 2l3-2l1-7l-3-2l-6 1l-3-6l-6 2l0 3l3 5l5-2zM1394 1758l-4 6l6 5l6-1l4-8l6 0l1-1l-3-6l-7-2l-3 5l-2 1zM1396 1399l3 1l4-5l5 1l0-6l-1-2l2-5l-9-3l-1 4l0 6l-3 1l-4-2l-5 3l2 4l7 0zM1398 1848l-6 6l2 4l4 0l4-3l1-5zM1395 1897l7-2l-3-5l-4-1l1-6l-1-1l-8-3l-1 3l-6 7l6 3l1 2l6-1zM1386 1451l3 6l2 2l4-3l1-4l-4-4zM1380 1646l5 1l3-9l-4-5l-4-1l-3-4l-8 1l0 3l-3 6l6 3l3-2l4 4zM1344 1477l2 8l-8 1l0 3l-3 5l5 4l0 3l2 1l4 0l3 3l2 5l4-1l2-4l5-2l6 5l0 3l-3 1l0 7l-1 1l-2 5l4 2l2 0l4 3l5-8l3-7l2 0l2-6l2-2l0-4l-2-1l0-7l-4 0l-4 3l-2-3l-5-1l-1-5l-4 0l-1-7l-6-1l0-4l-5-3zM1333 1576l2 3l1 5l8-3l2 6l5 3l3-1l5-4l2 0l6-3l-5-6l1-1l8 5l4 4l2 5l3 0l1-1l-1-6l0-3l2-1l-1-6l-2-2l-3 0l-4 5l-2-3l2-4l-5-3l2-5l-3-3l-14 1l-3 3l-5-3l-3 1l-1 4l-3 4l-1 3l-2 1zM1379 1475l2-6l-1-3l-6-1l-5 9l0 3l4 2l3-1zM1373 1446l4-6l-6-4l2-6l-3-5l-8 0l-2 7l2 3l-5 7l0 1l6 4l4-2zM1371 1377l-2 0l-4 3l0 3l2 2l3 7l6-1l1-2l-2-6l-1 0zM1322 1377l-4 10l-4 2l-2 4l6 6l0 2l10-1l0-6l-4-2l4-4l4 4l3 0l2 7l-3 4l6 6l0 7l3 3l5 1l3 0l1-3l-3-6l2-3l1-4l-4-2l1-7l3-1l1-5l6 2l4-6l-6-3l-1-3l-2-2l1-5l-3-3l-7 3l-1-2l-4 0l-6-5l-1 0l-3 2l-4 9zM1349 1970l1 7l7-2l2-5l-9-2zM1357 1609l-3-2l-8 4l-1 2l4 3l1 2l2 2l7-2l-3-5zM1339 1815l5-1l7 2l3-3l-1-5l-2-2l-3 0l-4-4l-5-1l-2 1l-1 2l-2 2l-1 8zM1349 1660l2-1l2-7l-3 0l-7 3l0 1zM1337 1457l2 3l0 1l6 6l4-2l-1-5l5-3l0-11l-3-1l-6 1l-2-6l-3-1l-3 1l-1 4l-1 3l0 3l4 1zM1320 1862l3 6l4 0l5 3l3-1l3 2l5-2l0-7l-2-3l5-3l2-7l-8 0l-1-3l-7-1l-2 4l-2 0l-6 4l2 4zM1335 1521l-2 5l5 4l2 8l6-5l-3-5l-2-1l0-6zM1343 2008l-6-3l0-2l2-5l0-3l-11 4l0 6l6 4l0 2l4 2l2-1zM1312 1484l-10 0l0 6l5 4l5 2l4-2l3 2l0 5l3 4l0 2l5 4l5-2l-2-6l3-2l-1-4l-4 0l-5-2l3-4l-2-12l13-11l-1-3l-4-1l-3-5l-5-1l-3-3l-4 4l1 5l-2 3l5 4l-2 4l-3 2l0 4zM1317 1438l2 5l-2 3l5 7l5-3l0-4l3-6l-8-7l-3 0zM1314 1532l-2 3l2 7l5 0l4 3l3-10l-3-1zM1313 1783l4 2l3-1l2-7l-9-2l-1 6zM1267 1338l-1 6l5 1l2 2l0 4l8 0l1 3l3 2l-3 8l4 3l0 3l3 4l1 7l-7 2l-2 5l-2 1l-4-1l-3-3l-3 1l-5-1l-2 3l0 4l5 6l5 0l5 6l1 3l8 3l3-8l4 7l4 1l0 5l4 2l4-2l-1-6l2 0l5 2l5-9l-6-2l0-4l-5-3l-3 0l-2 2l-2 0l-5-4l7-12l-2-3l-1-5l4-1l4 3l7 0l2 4l5-2l-3-10l-6-1l-2-1l-4 0l-4-3l-3-8l-5 0l-1-2l-1-2l3-2l-1-5l2-2l-4-6l-3 0l-6 2l-7 0l-2 3zM1319 1509l-3-1l-6 2l1 5l5 2l3-2zM1307 1342l4-1l1-8l3-3l0-2l-5-2l-4 1l-1 1l-3 0l-3-5l-2 0l-4 7l5 2l5 7zM1314 1428l0-10l-2-3l-2 0l-6 6l-5 3l2 5l6-1l1 2l3-1zM1313 1802l0-4l-4-2l-3 1l-2 5l2 2zM1281 1415l-4-1l-6 1l0 7l-3 3l2 4l7 0l1 4l-4 3l-4-3l-5 6l-2-1l-5 1l-4-3l-3 4l0 4l5 3l1 0l3 4l4 1l1-1l8 3l1-1l5 1l2-5l10 0l4 7l2-2l6 1l2-3l4-1l2-3l-3-5l1-4l-3-2l-6 5l-5-3l-9 1l-1-1l-1-3l3-5l0-3l6-6l0-4l-4-2l-5 2zM1304 1833l6-1l0-8l-4 0l-4 4zM1259 1488l3 4l6-2l1-5l1-1l5 5l3 0l-1 5l-1 2l1 4l-2 3l2 5l-1 6l5 5l3 0l0 8l2 3l5-3l5 0l1-6l3-3l0-3l-8-12l-5-1l1-4l-4-3l1-4l2-1l1-6l7 1l6-2l0-3l3-1l2-6l2-2l0-6l-5-1l-3 8l-3 1l-3-3l-7 0l-4 2l-2 4l-10 2l-3-3l-5-1l-7 3l5 7zM1270 1374l3-4l-2-6l-5-2l-6 2l-1 4l3 3l-1 6l5 3l3-1zM1224 1486l-2 2l1 8l4 1l10-2l2 2l4-1l4 3l1 4l2 1l3-1l2-8l-5-1l-4-6l-5 0l-3 2l-3-3l2-5l-1-3l-4-1l-3 1l-1 5l-1 2zM1214 1458l-6-4l-2 1l-2 3l-7 1l-1 3l4 6l6-5l3 3l12 1l5-5l-1-3l6-5l7 2l2-8l2-3l0-4l-9-1l-2-4l-6 2l-3 4l2 4l-2 4l-3 2l-1 5l-2 1zM1204 1423l-4 3l-1 7l5 2l5-3l4-6l-3-3l4-6l-5-2l-4 2zM1206 1511l-1-6l-3-2l-3 1l-5 10l6 3zM1183 1445l-1 7l-4 1l-1 5l-3 2l-1 2l4 5l7 0l1 4l2 2l9 0l1-2l-7-5l1-2l-1-5l1-5l-1-1l2-5l-1-7l-1-1l-7 1z" fill="#f9e894"/>
<path d="M1817 641l3 6l-1 2l2 3l-2-11zM1803 633l6 5l8 1l1-3l-2-11l-2 0l-4-3l-1 1l-1 5zM1795 661l4 2l5-4l-1-3l-3-3l-6 2zM1782 583l6 5l5-3l0-2l-5-5zM1772 653l0-3l-10-4l-4 6l5 5zM1753 544l0 4l5 3zM1720 615l7 1l2-6l-9-1zM1724 455l3 0l-2-8l-1-1l-4 0l-1 1zM1705 505l3 6l9-2l0-6l-11 0zM1716 471l-5-4l1-1l0-1l-5 0l-2 2l-1 7l5 2zM1715 593l0-8l-6 0l-1 1l3 8zM1709 554l1-2l-4-5l-6 4l4 6zM1683 511l7-1l-2-6l5-3l1-3l-2-4l-7-2l-1 3l-6 5l1 3l4 2zM1583 499l3-1l2-3l4-4l0-3l-3-4l-12 7l0 2zM1542 715l-6 2l5 6l2 1l2-3zM1481 608l3 3l5 0l1-1l-5-8zM1478 715l5 4l5-1l1-3l-8-5l-3 3zM1487 616l-6-1l-4-2l-1 2l-2 8l5 2l8-1zM1459 602l8 4l2-2l-3-6l4-12l-3-2l-6 3l-3 4l-1 2l5 5zM1436 594l-2 5l6 2l5-4l-3-5zM1418 743l5 3l2-9l7-1l1-7l-5-3l-4 3l0 7l-3 0zM1406 656l3 4l2 0l4-3l-4-4zM1396 586l2 4l8-2l1-3l0-2zM1397 688l-2-5l-6 3l1 5l3 1zM1350 1730l2-6l0-7l-9-2l-2 5l-2 2l4 8zM1330 1706l-1 1l5 8l2 1l5-5l1-2l6 0l4-6l-4-2l-1-7l-3-1l-3 5l-5 3l-1 5zM1311 1599l-5 1l-1 3l0 5l6 1l4-2l0-3zM1301 1951l3-3l-3-6l1-3l-6-1l-4 3l0 2l3 1l3 7zM1301 1768l-4-3l-5 3l3 9zM1295 1919l-8-1l-6 5l0 5l6 1l2-1l5 1l2-2l1-6zM1283 1773l3 7l8-3l-9-8l-2 1zM1251 1954l-4 2l-4-1l-1 4l11-2zM1254 1858l5-3l-1-7l-4 0l-2 9zM1238 1790l-1-5l-6-1l-2-3l-5 4l0 3l5 4l0 2l2 3l4-2zM1197 505l4 0l-4 8l1 3l1 5l2 2l0 6l2 1l4 6l2 6l2 0l5-3l3-5l5 3l5-2l2-6l-1-5l-7 0l-1-1l1-6l-1-2l-6 0l4-6l-6-4l10-3l-1-7l-6-5l-5 1l-5-7l-4 1l-3-1l-4 3l2 9l-5 2zM1207 1907l1 4l7 4l6-1l3-5l-2-3l-15-1zM1211 1874l-8 4l2 3l-1 2l1 6l1 2l6-7l1-3l8 1l2-4l-6-3l-4 4zM1211 1761l4 8l4-3l1-3l-1-5l-6-1zM1203 1563l-4 4l4 7l4-2l2-6zM1202 1877l2-6l3-2l1-6l-10-6l-3 0l-1 1l-7-1l0 7l6-1l1 2l-1 6l4 5zM1192 1904l3 8l4-3l0-8l5-2l0-4l-8-7l-2 1l-1 9l2 2zM1183 1728l5 5l3 0l-3-11zM1173 585l-7 2l3 8l4 6l8-3l1 0l8-5l-3-7l-2-2l-4 2zM1187 1906l2-2l-1-6l-5 2zM1179 1908l2 5l5 1l2-2l-2-5l-6-1zM1159 1725l3 6l2 1l4 4l4-3l6-1l0-2l3-1l1-9l2 0l1-4l-2-4l2-3l-1-2l2-4l-2-6l-4 1l-2 4l1 3l-4 5l2 3l0 6l-3 1l-6 1l-3-2l-5 2zM1176 1548l1 10l6-2l2-4l-3-5l-4 0zM1169 1633l3 1l5-4l1-3l3 0l1-7l-2-4l-3-1l-3 9l-5 3zM1171 1570l-9 0l0 1l0 4l3 2l2 12l2 2l5-1l3 1l5-5l0-2l-6-3l1-5l-3-4zM1174 1751l5 0l2-1l0-5l-2-3l-6 1l-2 3zM1149 446l2 2l1 6l-1 3l-7 4l4 6l2 1l2-1l5-5l7-3l1-1l-1-5l-4-2l-1-3l4-2l1-5l-2-3l-5 3l-3-2l-6 2zM1155 1918l-5 2l0 6l7-7zM1154 1876l2 3l7-2l-6-7l-3 1zM1159 1734l-3-2l-6 3l0 4l6 1l3-2zM1148 1570l6 3l4-4l-4-5l-6 2zM1156 1615l-3-1l-4 3l0 3l4 0l4 0zM1143 1694l4 6l4 2l3-3l-6-6zM1153 1687l-1-4l-2-3l-7 4l1 4zM1125 1686l2-3l-2-6l-2-1l-6 7zM1098 1528l4 6l5-2l0-4l5-2l0-5l-10 1zM1100 1194l7-3l1-1l-6-5l-1-7l-6-1l-3 4l0 2l2 4l3 1zM1106 1641l-3-2l-9 6l1 2l9-1l2-2zM1090 1724l-5 6l-4 0l0 8l3 1l3-2l3-1l2-3l7-1l0-2l-4-5zM1074 1899l-2 5l3 4l7-7l3 0l3-5l-3-5l-6 3l0 4zM1072 1572l2 4l-4 4l3 4l3 0l2-7l2-1l0-7l-4-1zM1065 1426l-7 3l-3 6l2 1l3 5l2 1l5-5l3 6l2 0l5-3l-2-4l2-4l0-4l-2-2l-5 2zM1063 1694l0-4l-3-4l-5 6l0 1l6 2zM1047 1702l1-8l-2-2l-4 2l-2 4zM1039 1734l0 5l2 2l4-3l2-4l-5-3zM1025 1864l1-3l5-4l-5-6l-2-1l-3 1l-1 4l-3 4l-1 3l3 4zM998 979l-1 6l2 2l7-2l2 2l0 2l2 2l7 0l2-6l4-2l-1-4l-4-2l-1-4l-8 2l-4 3zM1022 1799l0-5l-8 0l5 7zM1004 1923l3 1l6-5l-6-2zM1005 1353l-2-3l-7 1l1 6l-3 4l4 4l3-2l-1-4l5-4zM997 1844l6 1l2-3l0-3l-5-3l-4 2zM995 1738l0-8l-6 0l0 6zM985 1789l0 6l3 2l4-1l0-9l-5-1zM976 1897l3 1l5-2l0-4l-1-3l-3-2l-5 5zM961 1914l2 4l6 0l4-5l-2-3l-5-2l4-6l-3-4l-7 4l0 2l4 5zM955 1620l1-6l-7-1l-1 7l2 2zM949 1857l0-3l-3-2l-1 6zM938 1361l3 6l6-2l-1-7l-5 1zM940 1607l-4 2l0 7l7 1l2-6l-1-2zM914 1498l-2 2l0 7l3 2l2-1l3-7l-3-4zM911 1445l4 2l3-1l1-7l-4 0l-3 1zM909 1571l-7 9l1 3l6 8l8-3l-1-4l-3-2l-1-1l3-7l0-1zM905 1605l5-4l-1-3l-6-1l-2 0l0 4zM907 1542l0-3l-6-4l-4 7l0 2l4 2zM889 1533l8 0l1-4l-4-4l-6 0zM886 1377l1-1l2-9l-3-2l-3 0l-3 6zM863 1569l4 7l-2 4l-2 1l1 9l5 0l3-3l6-14l-2-9l-4 1l-2 2zM846 1521l5 3l0 5l6 4l4-2l5-5l0-4l3-6l-4-8l-3 1l-3 4l-4 1l-1 0l-6 3zM864 1613l1-2l-5-5l-3 2l-4-1l-3 3l12 5zM851 1314l0-6l-9 2l1 7l4 0zM808 1538l3 1l1 5l5 3l-4 5l4 5l8-1l5-4l-1-5l-4-6l-5 4l-3-6l7-1l-1-4l1-1l7 3l3-4l-1-2l-6-2l-1-2l-7-1l-2 1l1 7l-2 1l-5-4l-3 4zM797 1168l-5 5l0 2l-5 6l-1 9l2 1l4 7l5 0l4 4l5-5l0-4l5 0l2-4l7 1l2-1l0-1l-4-10l-2-1l-4-6l-2-6l-1 0l-4 1l-1 4zM807 1128l6 6l4-3l5-6l-5-3l2-6l-7-1l-2 4l-2 2zM810 1384l6 3l5-2l-3-6l-4-2l-4 2zM806 1540l-6-1l-2 6l1 2l8 1zM787 1088l-6-5l-3 2l-4 7l1 3l6 1l-1 6l2 1l4 1l3-7l3 1l4-2l2 2l7-1l-2-6l-6-12l-2-1l-4 1l-1 4l1 5l-2 1zM782 1068l5 7l1 0l2-5l-3-4z" fill="#968a61"/>
<path d="M1797 611l3 1l3 5l4-1l1-5l-5-1l1-5l4-2l2 7l4 2l-2-15l-4 3l-4-3l-8-2l-3 4l1 6zM1781 614l5-1l0-4l-2-3l-5-3l-4 4l0 2zM1725 477l-1 2l6 1zM1716 451l2 9l2 3l7-3l-1-6l-1 0l-4-7l3 0l1-1l0-3l-5 0l-1 3l-2-3l-6 0l0 4l5 2zM1695 448l3 5l-2 5l0 3l2 0l4 6l4 0l3-2l3-7l-3-4l-1-5l-2-2l-2-4l-7-1zM1664 480l3 7l5 0l4-5l2 5l6-1l2 1l-2 6l8 2l2-5l4 1l5-5l0-2l3-10l-1-1l-5 1l-2-2l0-4l-4-4l0-2l-5-2l-4 4l-4-2l-4 2l-2-6l-5-3l-4 2l-7 0l-2 8l3 5l-1 2zM1655 492l-1 4l4 3l-1 5l5 2l3-1l4 2l1 2l0 6l6 1l5 3l-1 4l5 3l5-2l1 0l3-5l-3-5l1-3l-2-2l-6 1l0-6l-4-1l-1-3l-3-2l-1-5l-6 0l-3-3l-4 3l-5-2z" fill="#ffffff"/>
<path d="M1130 600 1163 613 1197 627 1217 653 1230 673 1250 680 1257 700 1283 707 1303 700 1310 673 1339 697 1358 707 1358 707 1391 720 1418 740 1445 760 1471 770" fill="none" stroke="#565b59" stroke-width="2.3" stroke-opacity=".85" stroke-linejoin="round"/>
<path d="M1250 680 1270 653 1297 647 1310 673" fill="none" stroke="#565b59" stroke-width="2.3" stroke-opacity=".85" stroke-linejoin="round"/>
<path d="M1378 593 1373 653 1358 707" fill="none" stroke="#565b59" stroke-width="2.3" stroke-opacity=".85" stroke-linejoin="round"/>
<path d="M1468 774 1488 749 1517 729 1547 719 1572 724 1597 739 1627 746 1657 744 1687 729 1707 699 1732 684 1757 674 1777 684 1807 689 1838 679" fill="none" stroke="#565b59" stroke-width="2.3" stroke-opacity=".85" stroke-linejoin="round"/>
<path d="M1404 820 1429 815 1459 805 1479 790 1489 795 1519 810 1549 815 1569 825 1569 849 1564 879 1579 899 1574 929 1575 948 1591 988 1625 998 1658 1011 1698 1028 1701 1061 1708 1091 1698 1115 1698 1074 1675 1074 1631 1079 1586 1089 1571 1099 1576 1139 1581 1169 1586 1194 1584 1205 1569 1225 1549 1215 1519 1205 1494 1190 1479 1170 1489 1145 1469 1130 1429 1135 1409 1125 1404 1105 1389 1085 1369 1085 1359 1100 1404 1094 1389 1099 1379 1094 1369 1079 1364 1049 1359 1019 1369 1004 1389 979 1404 959 1414 929 1404 909 1404 884 1394 859 1379 839 1389 829 1404 820" fill="none" stroke="#565b59" stroke-width="2.3" stroke-opacity=".85" stroke-linejoin="round"/>
<path d="M1721 1118 1751 1125 1791 1125 1818 1118 1845 1091 1871 1081 1911 1081" fill="none" stroke="#565b59" stroke-width="2.3" stroke-opacity=".85" stroke-linejoin="round"/>
<path d="M1571 1099 1576 1139 1581 1169 1586 1194 1621 1209 1636 1224 1626 1249 1596 1259 1591 1279 1606 1303" fill="none" stroke="#565b59" stroke-width="2.3" stroke-opacity=".85" stroke-linejoin="round"/>
<path d="M1235 1140 1270 1135 1295 1125 1330 1110 1359 1100 1369 1085 1389 1085 1404 1105 1409 1125 1429 1135 1469 1130 1489 1145 1479 1170 1494 1190 1519 1205 1549 1215 1569 1225 1584 1205 1594 1225 1589 1249 1604 1269 1594 1294 1569 1304 1549 1309 1544 1329 1534 1344 1509 1349 1482 1344 1479 1332 1464 1324 1457 1339 1459 1364 1449 1374 1439 1359 1419 1354 1389 1359 1394 1374 1384 1389 1369 1379 1364 1364 1339 1349 1320 1339 1310 1329 1295 1324 1295 1309 1270 1304 1277 1279 1287 1249 1292 1220 1310 1190 1305 1170 1285 1155 1265 1145 1235 1140" fill="none" stroke="#565b59" stroke-width="2.3" stroke-opacity=".85" stroke-linejoin="round"/>
<path d="M1017 1268 1033 1295 1010 1328 1017 1361 1003 1388 983 1415 990 1441 1043 1435 1057 1455 1063 1481 1070 1515 1097 1541 1137 1548 1163 1535 1163 1508 1157 1468 1150 1428 1163 1415 1203 1415 1223 1395 1250 1381 1257 1348 1290 1328 1297 1295 1270 1281 1297 1248 1303 1215 1310 1195 1290 1168 1270 1148 1237 1141 1223 1115 1203 1088 1197 1115 1170 1128 1150 1121 1137 1128 1097 1148 1110 1175 1097 1201 1070 1228 1043 1248 1033 1281 1017 1268" fill="none" stroke="#565b59" stroke-width="2.3" stroke-opacity=".85" stroke-linejoin="round"/>
<path d="M790 1362 835 1349 864 1328 889 1308 929 1293 969 1268 984 1242 994 1248 1014 1268 1029 1289" fill="none" stroke="#565b59" stroke-width="2.3" stroke-opacity=".85" stroke-linejoin="round"/>
<path d="M895 949 940 929 965 915 980 925 1005 934 1009 959 1005 979 1014 999 1039 994 1059 984 1059 920 1074 910 1089 902 1112 905 1114 925 1139 929 1159 910 1169 915 1164 939 1149 959 1159 979 1179 994 1184 1019 1199 1039 1209 1049 1204 1079 1199 1089 1234 1109 1239 1144 1264 1139 1289 1129 1309 1119 1340 1104" fill="none" stroke="#565b59" stroke-width="2.3" stroke-opacity=".85" stroke-linejoin="round"/>
<path d="M1040 1663 1053 1640 1070 1600 1077 1573 1070 1533 1090 1530 1103 1553 1130 1560 1150 1540 1177 1533 1203 1513 1197 1490 1217 1487 1237 1497 1263 1500 1270 1527 1283 1547 1300 1540 1307 1573 1317 1600 1330 1627 1339 1647 1345 1673 1355 1707 1351 1727 1330 1740 1310 1753 1290 1780 1300 1807 1297 1847 1307 1887 1310 1933 1300 1955" fill="none" stroke="#565b59" stroke-width="2.3" stroke-opacity=".85" stroke-linejoin="round"/>
<path d="M783 1533 803 1537 830 1523 863 1513 890 1520 910 1533 913 1567 927 1580 917 1607" fill="none" stroke="#565b59" stroke-width="2.3" stroke-opacity=".85" stroke-linejoin="round"/>
<path d="M1170 1404 1185 1409 1205 1419 1215 1409 1220 1389 1250 1369 1255 1349 1285 1339 1295 1324" fill="none" stroke="#565b59" stroke-width="2.3" stroke-opacity=".85" stroke-linejoin="round"/>
<path d="M1544 1311 1550 1335 1572 1359 1588 1375 1600 1391" fill="none" stroke="#565b59" stroke-width="2.3" stroke-opacity=".85" stroke-linejoin="round"/>
<path d="M1685 865 1705 855 1725 850 1745 865 1765 890 1768 907 1745 910 1725 907 1705 910 1688 905 1685 865" fill="none" stroke="#565b59" stroke-width="2.3" stroke-opacity=".85" stroke-linejoin="round"/>
<path d="M1083 753 1103 760 1123 773 1143 770 1147 787 1130 797 1110 787 1090 770 1083 753" fill="none" stroke="#565b59" stroke-width="2.3" stroke-opacity=".85" stroke-linejoin="round"/>
<path d="M1017 1268 1033 1295 1010 1328 1017 1361 1003 1388 983 1415 990 1441 1043 1435 1057 1455 1063 1481 1070 1515" fill="none" stroke="#565b59" stroke-width="2.3" stroke-opacity=".85" stroke-linejoin="round"/>
<path d="M1103 397l34 3l26 3l27 10l13-10l20-3l7 10l20-3l13 13l10 20l0 27l-16 16l13 4l20 13l20-7l29 4l39 10l30 13l-3 27l-14 26l-12 17l26-7l40-10l26-16l20-10l20 3l27-10l27-20l6-20l17-27l7 7l36 0l20-7l7-26l13-17l27-7l3 20l24 0l3 17l-17 7l27 20l-7 20l-33 6l-13 20l26 10l34-10l20 27l33 20l13 13l4 27l6 33l14 27l10 33l-7 34l-17 26l-3 34l27 13l20 27l16 20l0 26l-10 27l24 29l10 19l0 33l-14 27l20 20l0 27l27 16l10 24l7 26l-7 34l-7 26l-10 30l-23-6l-7-24l-23-6l-13 3l6 17l-20 10l-26 16l-27 14l-27 13l-20 20l-26 7l-14 20l-26 23l-34 3l-20 10l-23 24l-7 16l-3 17l33 27l4 20l-10 26l13 27l20 27l13 26l27 7l23 20l10 5l27 24l13 20l27 3l20 17l13 23l-3 33l-10 20l-20-13l-20 13l0 27l-13 20l-40 13l-24 20l-16 20l16 20l20 27l-3 27l20 6l0 27l-10 23l-27-16l-10-24l-40 4l-40-14l-3 24l-43 6l-40 4l-7 20l-33 6l-27 17l-20 0l-13-23l-34-7l-33-7l3 27l-10 27l-13 6l-25-13l-3-20l-13-27l-27-3l-13 7l-27 3l-20-17l-27-20l-20-10l-13 14l-27 0l-20-14l-16-3l-20 10l3 13l-27 14l-26 3l-34 10l-26 0l-14-27l-3-26l3-34l4-33l16-40l14-33l10-34l16-26l30-34l7-10l-7-6l-23-17l-27-3l-40-7l-20-17l-26-3l-20 10l-27-10l-20-10l-20-27l0-20l-23-6l-4-14l10-26l14-34l-24-10l-20-23l-10-33l7-26l17-13l13-13l-3-20l-17-17l0-23l-27-27l4-27l-17-30l13-10l24-23l-4-30l10-33l-10-34l-16-20l3-20l20-14l20 14l37-10l26-16l-8-17l15-17l27-30l-17-31l-17-7l-4-20l4-23l37 3l10-26l3-34l17-26l-3-40l0-17l-17-10l-3-23l6-20l17-14l30-6l40-7l33 0l10 13l4 24l-4 10l10 10l14 0l3-20l-3-14l13-3l17 10l-2-27l8-33l10-10l27-10l-3-27l3-26l7-20l-14-4l-23-10l3-10l34-10l6-13l-10-10l-10-23l-6-17l-14-20z" fill="none" stroke="#60666a" stroke-width="3" stroke-linejoin="round"/></svg><!--/MAP-->
</body></html>
